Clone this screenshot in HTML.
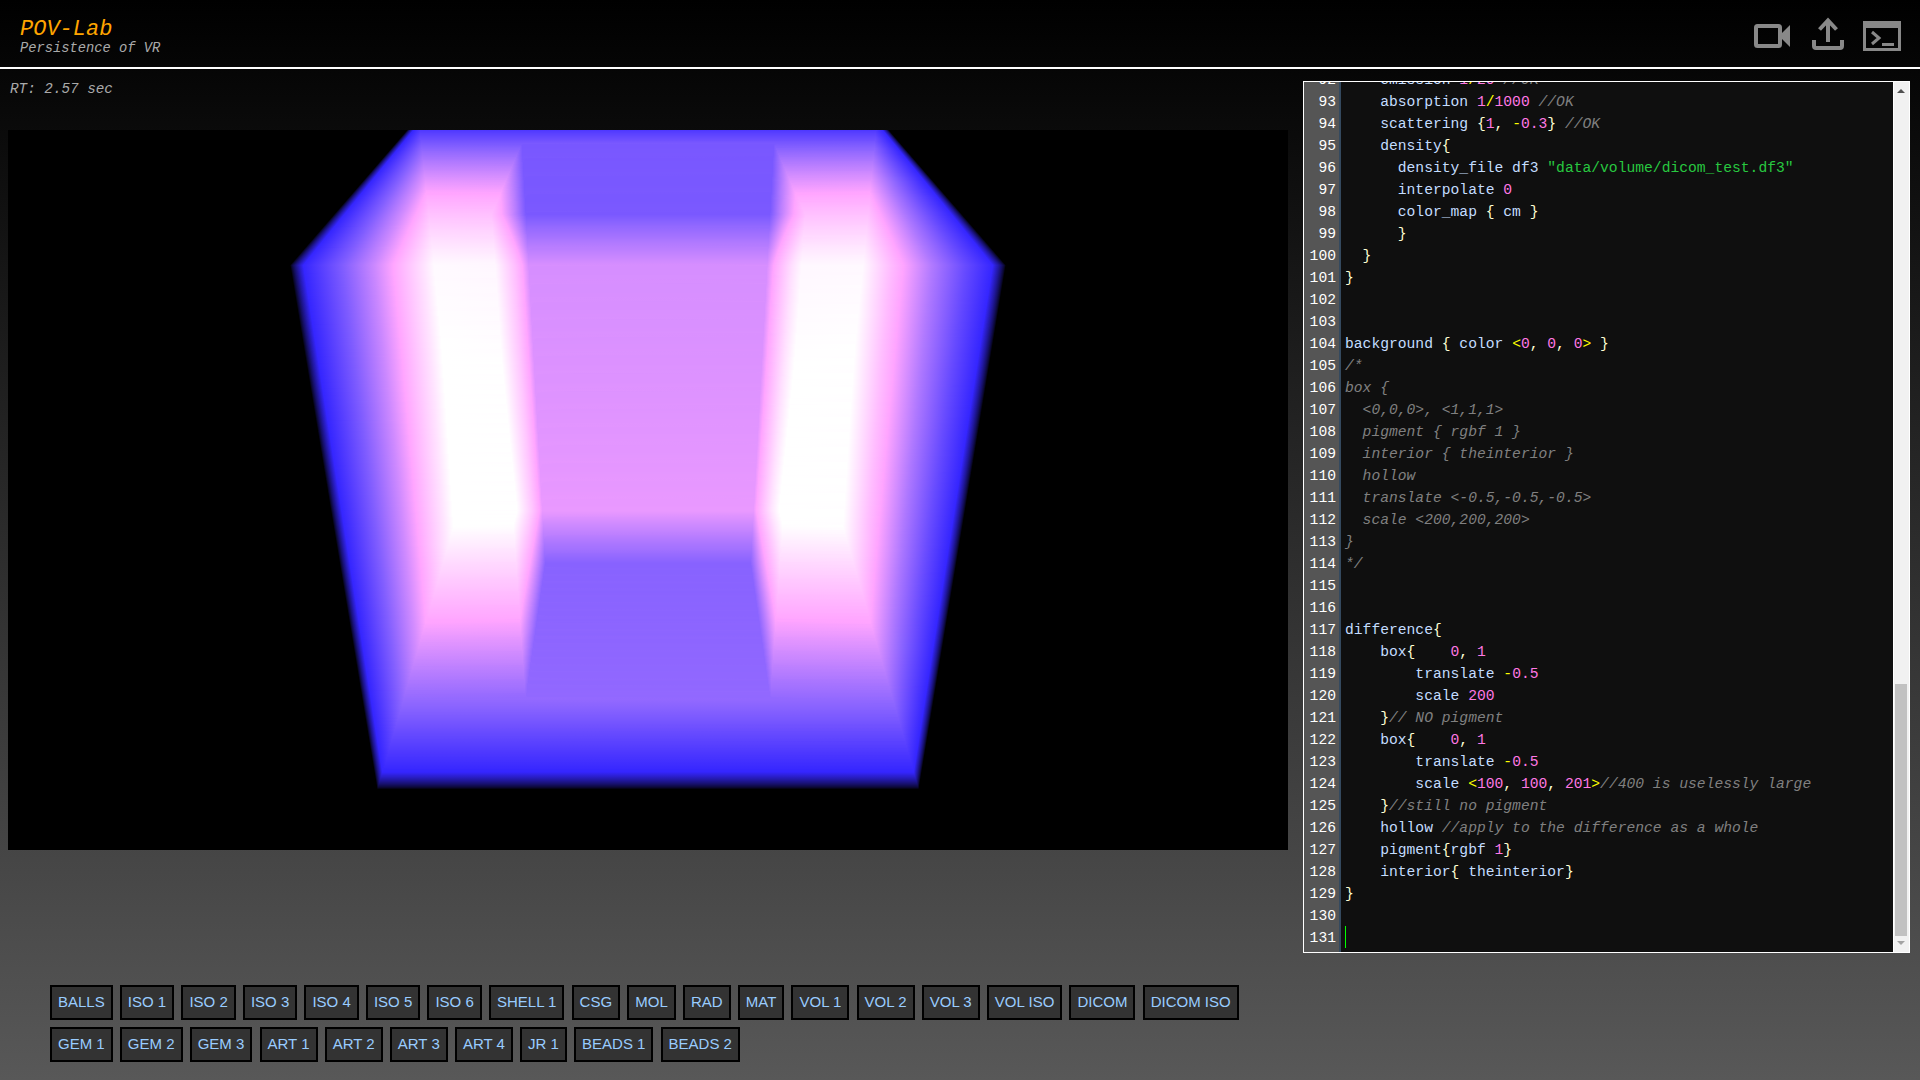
<!DOCTYPE html>
<html><head><meta charset="utf-8"><title>POV-Lab</title>
<style>
*{box-sizing:border-box}
html,body{margin:0;padding:0}
body{width:1920px;height:1080px;overflow:hidden;position:relative;background:linear-gradient(#000,#585858);font-family:"Liberation Mono",monospace;color:#aaa}
#hdr{position:absolute;left:0;top:0;width:1920px;height:69px;border-bottom:2px solid #fff}
#t1{position:absolute;left:20px;top:17px;font:italic 22px/26px "Liberation Mono",monospace;color:#ffa500;white-space:pre}
#t2{position:absolute;left:20px;top:40px;font:italic 13.75px/18px "Liberation Mono",monospace;color:#aaa;white-space:pre}
#rt{position:absolute;left:10px;top:79.5px;font:italic 14.3px/18px "Liberation Mono",monospace;color:#aaa;white-space:pre}
.ic{position:absolute;top:0;left:0}
#img{position:absolute;left:8px;top:130px;width:1280px;height:720px;background:#000;overflow:hidden}
#img i{display:block;height:1px;width:1280px}
#ed{position:absolute;left:1303px;top:81px;width:607px;height:872px;border:1px solid #fff;background:#0f0f0f;overflow:hidden}
#gut{position:absolute;left:0;top:0;width:37px;height:870px;background:#555;border-right:2px solid #34495e}
#lines{position:absolute;left:0;top:-13px;width:588px;font:14.66px/22px "Liberation Mono",monospace;color:#c4ddff;white-space:normal}
#lines div{height:22px;position:relative;padding-left:41px;white-space:pre}
#lines b{position:absolute;left:0;top:0;width:32px;text-align:right;font-weight:normal;color:#fff}
.c{color:#808080;font-style:italic}.n{color:#ff78e4}.o{color:#ff0}.p{color:#ffffd4}.s{color:#28c840}
#cur{position:absolute;left:41px;top:844px;width:1px;height:22px;background:#0f0}
#sb{position:absolute;left:589px;top:0;width:16px;height:870px;background:#f1f1f1;border-left:1px solid #fff}
#th{position:absolute;left:1px;top:602px;width:12px;height:252px;background:#c1c1c1}
#btns{position:absolute;left:50px;top:985px;width:1400px;font:15px/30px "Liberation Sans",sans-serif;color:#9cf}
#btns span{display:inline-block;height:35px;border:2px solid #000;background:#333;padding:0 6px;margin:0 7.17px 7px 0;white-space:pre;vertical-align:top}
</style></head><body>
<div id="hdr"></div>
<div id="t1">POV-Lab</div>
<div id="t2">Persistence of VR</div>
<div id="rt">RT: 2.57 sec</div>
<svg class="ic" width="1920" height="69" viewBox="0 0 1920 69" fill="none" stroke="#888">
<rect x="1756" y="26" width="24" height="20" rx="1.5" stroke-width="4"/>
<path d="M1779 36 L1790 25 V47 Z" fill="#888" stroke="none"/>
<path d="M1828 42 V20 M1819.5 29.5 L1828 20.5 L1836.5 29.5" stroke-width="4"/>
<path d="M1814 40 V46 Q1814 48 1816 48 H1840 Q1842 48 1842 46 V40" stroke-width="4"/>
<rect x="1864.5" y="22.5" width="35" height="27" stroke-width="3"/>
<rect x="1863" y="21" width="38" height="7" fill="#888" stroke="none"/>
<path d="M1872 32 L1879 38 L1872 44" stroke-width="3"/>
<path d="M1882 44.5 H1894" stroke-width="3"/>
</svg>
<div id="img">
<i style="background:linear-gradient(90deg,#000 398.5px,#080525 399.5px,#120d59 400.5px,#1b1483 401.5px,#2a1ecc 403.5px,#3123ed 404.5px,#3727ff 405.5px,#4f39ff 412.5px,#4e38ff 868.5px,#3727ff 874.5px,#3123ed 875.5px,#2319a9 877.5px,#1b1483 878.5px,#120d59 879.5px,#080525 880.5px,#000 881.5px)"></i>
<i style="background:linear-gradient(90deg,#000 397.5px,#06041e 398.5px,#110c52 399.5px,#1a137d 400.5px,#291ec7 402.5px,#3023e8 403.5px,#3627ff 404.5px,#533cff 412.5px,#533cff 867.5px,#3627ff 875.5px,#3023e8 876.5px,#2218a3 878.5px,#1a137d 879.5px,#110c52 880.5px,#06041e 881.5px,#000 882.5px)"></i>
<i style="background:linear-gradient(90deg,#000 396.5px,#050317 397.5px,#100b4b 398.5px,#191277 399.5px,#281dc1 401.5px,#2f22e2 402.5px,#3526ff 403.5px,#563eff 412.5px,#563eff 867.5px,#3526ff 876.5px,#2f22e2 877.5px,#21179e 879.5px,#191277 880.5px,#100b4b 881.5px,#050317 882.5px,#000 883.5px)"></i>
<i style="background:linear-gradient(90deg,#000 395.5px,#03020f 396.5px,#0e0a45 397.5px,#181171 398.5px,#271cbc 400.5px,#3426fd 402.5px,#4733ff 407.5px,#5a41ff 412.5px,#5a41ff 867.5px,#3828ff 876.5px,#3426fd 877.5px,#201798 880.5px,#181171 881.5px,#0e0a45 882.5px,#03020f 883.5px,#000 884.5px)"></i>
<i style="background:linear-gradient(90deg,#000 394.5px,#02020a 395.5px,#0d093e 396.5px,#16106b 397.5px,#261bb6 399.5px,#3325f7 401.5px,#3828ff 402.5px,#5d43ff 412.5px,#5d43ff 867.5px,#3828ff 877.5px,#3325f7 878.5px,#261bb6 880.5px,#16106b 882.5px,#0d093e 883.5px,#02020a 884.5px,#000 885.5px)"></i>
<i style="background:linear-gradient(90deg,#000 393.5px,#010106 394.5px,#150f65 396.5px,#251ab0 398.5px,#3224f2 400.5px,#3727ff 401.5px,#6045ff 412.5px,#6045ff 867.5px,#3727ff 878.5px,#3224f2 879.5px,#251ab0 881.5px,#150f65 883.5px,#010106 885.5px,#000 886.5px)"></i>
<i style="background:linear-gradient(90deg,#000 392.5px,#000002 393.5px,#140e5f 395.5px,#2419ab 397.5px,#3123ec 399.5px,#3627ff 400.5px,#6348ff 412.5px,#6348ff 867.5px,#3627ff 879.5px,#3123ec 880.5px,#2419ab 882.5px,#140e5f 884.5px,#000002 886.5px,#000 887.5px)"></i>
<i style="background:linear-gradient(90deg,#000 392.5px,#080627 393.5px,#120d59 394.5px,#1b1381 395.5px,#291ec7 397.5px,#3022e7 398.5px,#3627ff 399.5px,#664aff 412.5px,#664aff 867.5px,#3627ff 880.5px,#3022e7 881.5px,#2219a5 883.5px,#1b1381 884.5px,#120d59 885.5px,#080627 886.5px,#000 887.5px)"></i>
<i style="background:linear-gradient(90deg,#000 391.5px,#070520 392.5px,#110c52 393.5px,#1a127b 394.5px,#281dc2 396.5px,#3526ff 398.5px,#694cff 412.5px,#694cff 867.5px,#3526ff 881.5px,#281dc2 883.5px,#1a127b 885.5px,#110c52 886.5px,#070520 887.5px,#000 888.5px)"></i>
<i style="background:linear-gradient(90deg,#000 390.5px,#05041a 391.5px,#100b4c 392.5px,#181276 393.5px,#271cbc 395.5px,#3425fb 397.5px,#3828ff 398.5px,#6c4eff 412.5px,#6c4eff 867.5px,#3828ff 881.5px,#3425fb 882.5px,#20179a 885.5px,#181276 886.5px,#100b4c 887.5px,#05041a 888.5px,#000 889.5px)"></i>
<i style="background:linear-gradient(90deg,#000 389.5px,#040312 390.5px,#0e0a45 391.5px,#171170 392.5px,#261bb7 394.5px,#3325f5 396.5px,#3728ff 397.5px,#7152ff 413.5px,#6f50ff 867.5px,#3728ff 882.5px,#3325f5 883.5px,#1f1695 886.5px,#171170 887.5px,#0e0a45 888.5px,#040312 889.5px,#000 890.5px)"></i>
<i style="background:linear-gradient(90deg,#000 388.5px,#02020c 389.5px,#0d093f 390.5px,#16106a 391.5px,#251ab2 393.5px,#3224f0 395.5px,#3727ff 396.5px,#7454ff 413.5px,#7454ff 866.5px,#3727ff 883.5px,#3224f0 884.5px,#1e1590 887.5px,#16106a 888.5px,#0d093f 889.5px,#02020c 890.5px,#000 891.5px)"></i>
<i style="background:linear-gradient(90deg,#000 387.5px,#020108 388.5px,#150f64 390.5px,#241aac 392.5px,#3123eb 394.5px,#3627ff 395.5px,#7756ff 413.5px,#7756ff 866.5px,#3627ff 884.5px,#3123eb 885.5px,#241aac 887.5px,#150f64 889.5px,#020108 891.5px,#000 892.5px)"></i>
<i style="background:linear-gradient(90deg,#000 386.5px,#010104 387.5px,#140e5e 389.5px,#2319a7 391.5px,#3022e6 393.5px,#3626ff 394.5px,#7a59ff 413.5px,#7958ff 803.5px,#7a59ff 866.5px,#3626ff 885.5px,#3022e6 886.5px,#2319a7 888.5px,#140e5e 890.5px,#010104 892.5px,#000 893.5px)"></i>
<i style="background:linear-gradient(90deg,#000 386.5px,#090629 387.5px,#120d58 388.5px,#2218a2 390.5px,#3526fe 393.5px,#7d5bff 413.5px,#7b5aff 513.5px,#7857ff 515.5px,#7857ff 765.5px,#7c5aff 768.5px,#7d5bff 866.5px,#3526fe 886.5px,#2218a2 889.5px,#120d58 891.5px,#090629 892.5px,#000 893.5px)"></i>
<i style="background:linear-gradient(90deg,#000 385.5px,#070522 386.5px,#110c52 387.5px,#19127a 388.5px,#271cbd 390.5px,#3425f9 392.5px,#3828ff 393.5px,#805dff 413.5px,#7f5cff 512.5px,#7857ff 514.5px,#7857ff 765.5px,#7f5cff 767.5px,#805dff 866.5px,#3828ff 886.5px,#3425f9 887.5px,#21179d 890.5px,#19127a 891.5px,#110c52 892.5px,#070522 893.5px,#000 894.5px)"></i>
<i style="background:linear-gradient(90deg,#000 384.5px,#06041c 385.5px,#100b4c 386.5px,#181174 387.5px,#261bb8 389.5px,#3324f4 391.5px,#3727ff 392.5px,#835fff 413.5px,#825eff 512.5px,#7857ff 514.5px,#7857ff 765.5px,#825eff 767.5px,#835fff 866.5px,#3727ff 887.5px,#3324f4 888.5px,#1f1797 891.5px,#181174 892.5px,#100b4c 893.5px,#06041c 894.5px,#000 895.5px)"></i>
<i style="background:linear-gradient(90deg,#000 383.5px,#040315 384.5px,#0f0a46 385.5px,#17106f 386.5px,#251bb3 388.5px,#3224ef 390.5px,#3627ff 391.5px,#8661ff 413.5px,#8561ff 511.5px,#835fff 512.5px,#7857ff 514.5px,#7857ff 765.5px,#835fff 767.5px,#8661ff 821.5px,#8661ff 866.5px,#3627ff 888.5px,#3224ef 889.5px,#1e1692 892.5px,#17106f 893.5px,#0f0a46 894.5px,#040315 895.5px,#000 896.5px)"></i>
<i style="background:linear-gradient(90deg,#000 382.5px,#03020e 383.5px,#0d0940 384.5px,#161069 385.5px,#241aae 387.5px,#3123ea 389.5px,#3627ff 390.5px,#8963ff 413.5px,#8863ff 511.5px,#7957ff 514.5px,#7957ff 765.5px,#8863ff 768.5px,#8963ff 866.5px,#3627ff 889.5px,#3123ea 890.5px,#1d158d 893.5px,#161069 894.5px,#0d0940 895.5px,#03020e 896.5px,#000 897.5px)"></i>
<i style="background:linear-gradient(90deg,#000 381.5px,#020109 382.5px,#0c0939 383.5px,#150f63 384.5px,#2319a9 386.5px,#3022e5 388.5px,#3526ff 389.5px,#8862ff 412.5px,#8d65ff 414.5px,#8a64ff 511.5px,#7958ff 514.5px,#7958ff 765.5px,#8a64ff 768.5px,#8b64ff 866.5px,#3929ff 889.5px,#3526ff 890.5px,#291ec8 892.5px,#1c1488 894.5px,#150f63 895.5px,#0c0939 896.5px,#020109 897.5px,#000 898.5px)"></i>
<i style="background:linear-gradient(90deg,#000 380.5px,#010106 381.5px,#130e5e 383.5px,#2218a4 385.5px,#3426fc 388.5px,#3e2dff 391.5px,#8e66ff 413.5px,#8e66ff 510.5px,#7958ff 514.5px,#7958ff 765.5px,#8e66ff 769.5px,#8e66ff 866.5px,#3b2bff 889.5px,#3426fc 891.5px,#2218a4 894.5px,#130e5e 896.5px,#010106 898.5px,#000 899.5px)"></i>
<i style="background:linear-gradient(90deg,#000 379.5px,#000002 380.5px,#120d58 382.5px,#21189f 384.5px,#3325f7 387.5px,#3728ff 388.5px,#8963ff 411.5px,#9369ff 414.5px,#9167ff 510.5px,#7958ff 514.5px,#7958ff 765.5px,#9167ff 769.5px,#9369ff 865.5px,#3728ff 891.5px,#3325f7 892.5px,#21189f 895.5px,#120d58 897.5px,#000002 899.5px,#000 900.5px)"></i>
<i style="background:linear-gradient(90deg,#000 379.5px,#070524 380.5px,#110c52 381.5px,#191278 382.5px,#261cb9 384.5px,#3224f2 386.5px,#3727ff 387.5px,#8862ff 410.5px,#966aff 414.5px,#9469ff 509.5px,#8b64ff 511.5px,#7958ff 514.5px,#7958ff 765.5px,#9168ff 769.5px,#9469ff 772.5px,#966aff 865.5px,#664aff 878.5px,#3727ff 892.5px,#3224f2 893.5px,#20179a 896.5px,#191278 897.5px,#110c52 898.5px,#070524 899.5px,#000 900.5px)"></i>
<i style="background:linear-gradient(90deg,#000 378.5px,#06041e 379.5px,#100b4c 380.5px,#181173 381.5px,#251bb4 383.5px,#3123ee 385.5px,#3627ff 386.5px,#8a64ff 410.5px,#996cff 414.5px,#976bff 509.5px,#7a58ff 514.5px,#7a58ff 765.5px,#976bff 770.5px,#996cff 865.5px,#6549ff 879.5px,#3627ff 893.5px,#3123ee 894.5px,#1f1695 897.5px,#181173 898.5px,#100b4c 899.5px,#06041e 900.5px,#000 901.5px)"></i>
<i style="background:linear-gradient(90deg,#000 377.5px,#050418 378.5px,#0f0b47 379.5px,#17106d 380.5px,#241aaf 382.5px,#3023e9 384.5px,#3626ff 385.5px,#8963ff 409.5px,#9b6dff 414.5px,#9a6dff 508.5px,#9268ff 510.5px,#7a58ff 514.5px,#7a58ff 765.5px,#986cff 770.5px,#9b6dff 796.5px,#9b6dff 865.5px,#3f2dff 891.5px,#3626ff 894.5px,#3023e9 895.5px,#1e158f 898.5px,#17106d 899.5px,#0f0b47 900.5px,#050418 901.5px,#000 902.5px)"></i>
<i style="background:linear-gradient(90deg,#000 376.5px,#040311 377.5px,#0d0a41 378.5px,#160f68 379.5px,#2319aa 381.5px,#3526ff 384.5px,#8862ff 408.5px,#9e6fff 414.5px,#9d6eff 508.5px,#7a58ff 514.5px,#7a58ff 765.5px,#9d6eff 771.5px,#9e6fff 865.5px,#6a4dff 879.5px,#3526ff 895.5px,#2319aa 898.5px,#160f68 900.5px,#0d0a41 901.5px,#040311 902.5px,#000 903.5px)"></i>
<i style="background:linear-gradient(90deg,#000 375.5px,#02020b 376.5px,#0c093a 377.5px,#140f63 378.5px,#2219a5 380.5px,#3425fa 383.5px,#3828ff 384.5px,#8a64ff 408.5px,#a170ff 414.5px,#9e6fff 508.5px,#7a59ff 514.5px,#7957ff 764.5px,#7a59ff 765.5px,#9e6fff 771.5px,#a170ff 865.5px,#694cff 880.5px,#3828ff 895.5px,#3425fa 896.5px,#2219a5 899.5px,#140f63 901.5px,#0c093a 902.5px,#02020b 903.5px,#000 904.5px)"></i>
<i style="background:linear-gradient(90deg,#000 374.5px,#010107 375.5px,#130e5d 377.5px,#2118a0 379.5px,#3325f5 382.5px,#3727ff 383.5px,#8963ff 407.5px,#a472ff 414.5px,#a372ff 507.5px,#815eff 513.5px,#7b59ff 514.5px,#7957ff 764.5px,#7b59ff 765.5px,#9f6fff 771.5px,#a372ff 773.5px,#a472ff 865.5px,#6549ff 882.5px,#3727ff 896.5px,#3325f5 897.5px,#2118a0 900.5px,#130e5d 902.5px,#010107 904.5px,#000 905.5px)"></i>
<i style="background:linear-gradient(90deg,#000 373.5px,#010104 374.5px,#120d58 376.5px,#20179b 378.5px,#3224f1 381.5px,#3627ff 382.5px,#8862ff 406.5px,#a673ff 414.5px,#a573ff 507.5px,#7b59ff 514.5px,#7957ff 520.5px,#7957ff 764.5px,#815eff 766.5px,#a573ff 772.5px,#a673ff 865.5px,#6b4dff 881.5px,#3627ff 897.5px,#3224f1 898.5px,#20179b 901.5px,#120d58 903.5px,#010104 905.5px,#000 906.5px)"></i>
<i style="background:linear-gradient(90deg,#000 373.5px,#080627 374.5px,#110c52 375.5px,#1f1697 377.5px,#3123ec 380.5px,#3627ff 381.5px,#8662ff 405.5px,#a975ff 414.5px,#a875ff 506.5px,#9a6dff 509.5px,#7b59ff 514.5px,#7957ff 517.5px,#7957ff 764.5px,#825eff 766.5px,#a573ff 772.5px,#a875ff 775.5px,#a975ff 865.5px,#6d4fff 881.5px,#3627ff 898.5px,#3123ec 899.5px,#1f1697 902.5px,#110c52 904.5px,#080627 905.5px,#000 906.5px)"></i>
<i style="background:linear-gradient(90deg,#000 372.5px,#070520 373.5px,#100b4c 374.5px,#181171 375.5px,#251ab0 377.5px,#3022e7 379.5px,#3526ff 380.5px,#8561ff 404.5px,#ad77ff 415.5px,#ab76ff 506.5px,#7c5aff 514.5px,#7957ff 516.5px,#7957ff 764.5px,#825eff 766.5px,#ab76ff 773.5px,#ab76ff 865.5px,#694cff 883.5px,#3526ff 899.5px,#2a1ecc 901.5px,#1e1692 903.5px,#181171 904.5px,#100b4c 905.5px,#070520 906.5px,#000 907.5px)"></i>
<i style="background:linear-gradient(90deg,#000 371.5px,#05041a 372.5px,#0f0b47 373.5px,#16106c 374.5px,#241aab 376.5px,#3526fd 379.5px,#8862ff 404.5px,#b079ff 415.5px,#ae78ff 505.5px,#a673ff 507.5px,#7c5aff 514.5px,#7958ff 516.5px,#7958ff 764.5px,#8963ff 767.5px,#ac77ff 773.5px,#ae78ff 785.5px,#b079ff 864.5px,#7655ff 880.5px,#3526fd 900.5px,#241aab 903.5px,#16106c 905.5px,#0f0b47 906.5px,#05041a 907.5px,#000 908.5px)"></i>
<i style="background:linear-gradient(90deg,#000 370.5px,#040314 371.5px,#0e0a41 372.5px,#150f67 373.5px,#2319a6 375.5px,#3425f8 378.5px,#3728ff 379.5px,#8a64ff 404.5px,#b37aff 415.5px,#b179ff 505.5px,#7958ff 515.5px,#7958ff 764.5px,#b179ff 774.5px,#b37aff 864.5px,#7555ff 881.5px,#3728ff 900.5px,#3425f8 901.5px,#2319a6 904.5px,#150f67 906.5px,#0e0a41 907.5px,#040314 908.5px,#000 909.5px)"></i>
<i style="background:linear-gradient(90deg,#000 369.5px,#03020d 370.5px,#0c093b 371.5px,#140f62 372.5px,#2218a2 374.5px,#3324f4 377.5px,#3727ff 378.5px,#8963ff 403.5px,#b57cff 415.5px,#b27aff 505.5px,#7958ff 515.5px,#7958ff 764.5px,#b27aff 774.5px,#b57cff 864.5px,#7454ff 882.5px,#3727ff 901.5px,#3324f4 902.5px,#2218a2 905.5px,#140f62 907.5px,#0c093b 908.5px,#03020d 909.5px,#000 910.5px)"></i>
<i style="background:linear-gradient(90deg,#000 368.5px,#020109 369.5px,#0b0835 370.5px,#130e5d 371.5px,#21179d 373.5px,#3224ef 376.5px,#3627ff 377.5px,#8862ff 402.5px,#b87dff 415.5px,#b67cff 504.5px,#845fff 513.5px,#7958ff 515.5px,#7958ff 764.5px,#b67cff 775.5px,#b87dff 864.5px,#7353ff 883.5px,#3627ff 902.5px,#3224ef 903.5px,#21179d 906.5px,#130e5d 908.5px,#0b0835 909.5px,#020109 910.5px,#000 911.5px)"></i>
<i style="background:linear-gradient(90deg,#000 367.5px,#010105 368.5px,#120d57 370.5px,#201798 372.5px,#3123eb 375.5px,#3626ff 376.5px,#8662ff 401.5px,#ba7fff 415.5px,#b87dff 504.5px,#7958ff 515.5px,#7958ff 764.5px,#b87dff 775.5px,#ba7fff 864.5px,#7252ff 884.5px,#3626ff 903.5px,#3123eb 904.5px,#201798 907.5px,#120d57 909.5px,#010105 911.5px,#000 912.5px)"></i>
<i style="background:linear-gradient(90deg,#000 366.5px,#000002 367.5px,#110c52 369.5px,#1f1694 371.5px,#3022e6 374.5px,#3526ff 375.5px,#8561ff 400.5px,#bd80ff 415.5px,#bc7fff 503.5px,#a874ff 507.5px,#7958ff 515.5px,#7958ff 764.5px,#b97eff 775.5px,#bc7fff 777.5px,#bd80ff 864.5px,#7152ff 885.5px,#3526ff 904.5px,#251ab1 907.5px,#181175 909.5px,#110c52 910.5px,#000002 912.5px,#000 913.5px)"></i>
<i style="background:linear-gradient(90deg,#000 366.5px,#070522 367.5px,#100b4d 368.5px,#171170 369.5px,#291ec7 372.5px,#3425fb 374.5px,#3728ff 375.5px,#8862ff 400.5px,#bf82ff 415.5px,#be81ff 503.5px,#7e5cff 514.5px,#7958ff 515.5px,#7958ff 764.5px,#b97eff 775.5px,#be81ff 776.5px,#bf82ff 864.5px,#7353ff 885.5px,#3728ff 904.5px,#3425fb 905.5px,#241aac 908.5px,#171170 910.5px,#100b4d 911.5px,#070522 912.5px,#000 913.5px)"></i>
<i style="background:linear-gradient(90deg,#000 365.5px,#06041c 366.5px,#0f0b47 367.5px,#1d158a 369.5px,#2e21dd 372.5px,#3325f6 373.5px,#3727ff 374.5px,#8662ff 399.5px,#c283ff 415.5px,#c182ff 502.5px,#b97eff 504.5px,#7958ff 515.5px,#7958ff 764.5px,#b97eff 775.5px,#c182ff 777.5px,#c283ff 864.5px,#7253ff 886.5px,#3727ff 905.5px,#3325f6 906.5px,#2319a8 909.5px,#16106b 911.5px,#0f0b47 912.5px,#06041c 913.5px,#000 914.5px)"></i>
<i style="background:linear-gradient(90deg,#000 364.5px,#050316 365.5px,#0e0a42 366.5px,#1c1486 368.5px,#2d20d9 371.5px,#3224f2 372.5px,#3627ff 373.5px,#8561ff 398.5px,#c484ff 415.5px,#c384ff 502.5px,#8561ff 513.5px,#7a58ff 515.5px,#7a58ff 764.5px,#ba7eff 775.5px,#c384ff 777.5px,#c484ff 864.5px,#7152ff 887.5px,#3627ff 906.5px,#3224f2 907.5px,#2218a3 910.5px,#150f66 912.5px,#0e0a42 913.5px,#050316 914.5px,#000 915.5px)"></i>
<i style="background:linear-gradient(90deg,#000 363.5px,#030210 364.5px,#0d093c 365.5px,#140e61 366.5px,#21189e 368.5px,#3123ee 371.5px,#3627ff 372.5px,#8460ff 397.5px,#c886ff 416.5px,#c584ff 502.5px,#7f5cff 514.5px,#7a58ff 515.5px,#7a58ff 764.5px,#b57bff 774.5px,#c584ff 777.5px,#c685ff 864.5px,#7354ff 887.5px,#3627ff 907.5px,#3123ee 908.5px,#21189e 911.5px,#140e61 913.5px,#0d093c 914.5px,#030210 915.5px,#000 916.5px)"></i>
<i style="background:linear-gradient(90deg,#000 362.5px,#02010a 363.5px,#0b0837 364.5px,#130e5c 365.5px,#20179a 367.5px,#3023e9 370.5px,#3526ff 371.5px,#8662ff 397.5px,#cb88ff 416.5px,#c987ff 501.5px,#9268ff 511.5px,#7a58ff 515.5px,#7a58ff 764.5px,#b57cff 774.5px,#c987ff 778.5px,#cb88ff 863.5px,#7655ff 887.5px,#3526ff 908.5px,#2b1fd0 910.5px,#1a137c 913.5px,#130e5c 914.5px,#0b0837 915.5px,#02010a 916.5px,#000 917.5px)"></i>
<i style="background:linear-gradient(90deg,#000 361.5px,#010107 362.5px,#120d57 364.5px,#1f1696 366.5px,#3022e5 369.5px,#3526fd 370.5px,#8561ff 396.5px,#ce89ff 416.5px,#cb88ff 501.5px,#805dff 514.5px,#7a59ff 515.5px,#7a59ff 764.5px,#b57cff 774.5px,#cb88ff 778.5px,#ce89ff 863.5px,#7152ff 889.5px,#3526fd 909.5px,#251ab1 912.5px,#191278 914.5px,#120d57 915.5px,#010107 917.5px,#000 918.5px)"></i>
<i style="background:linear-gradient(90deg,#000 360.5px,#010103 361.5px,#110c52 363.5px,#1e1691 365.5px,#2f21e0 368.5px,#3425f9 369.5px,#3728ff 370.5px,#8862ff 396.5px,#d08bff 416.5px,#ce8aff 500.5px,#b079ff 506.5px,#815dff 514.5px,#7a59ff 515.5px,#7a59ff 764.5px,#ab76ff 772.5px,#cb88ff 778.5px,#ce8aff 780.5px,#d08bff 863.5px,#7454ff 889.5px,#3728ff 909.5px,#3425f9 910.5px,#241aad 913.5px,#181173 915.5px,#110c52 916.5px,#010103 918.5px,#000 919.5px)"></i>
<i style="background:linear-gradient(90deg,#000 360.5px,#070524 361.5px,#100b4d 362.5px,#1d158c 364.5px,#2e21dc 367.5px,#3324f4 368.5px,#3727ff 369.5px,#8662ff 395.5px,#d38cff 416.5px,#d08bff 500.5px,#8d66ff 512.5px,#7b59ff 515.5px,#7958ff 763.5px,#7b59ff 764.5px,#ab76ff 772.5px,#d08bff 779.5px,#d38cff 863.5px,#7958ff 888.5px,#3727ff 910.5px,#3324f4 911.5px,#2319a9 914.5px,#17106e 916.5px,#100b4d 917.5px,#070524 918.5px,#000 919.5px)"></i>
<i style="background:linear-gradient(90deg,#000 359.5px,#06041e 360.5px,#0f0b48 361.5px,#1c1488 363.5px,#2d20d8 366.5px,#3224f0 367.5px,#3627ff 368.5px,#8561ff 394.5px,#d58eff 416.5px,#d38dff 499.5px,#c786ff 502.5px,#815eff 514.5px,#7b59ff 515.5px,#7958ff 763.5px,#7b59ff 764.5px,#ab76ff 772.5px,#d18bff 779.5px,#d48dff 786.5px,#d58eff 863.5px,#7b59ff 888.5px,#3627ff 911.5px,#3224f0 912.5px,#2218a4 915.5px,#16106a 917.5px,#0f0b48 918.5px,#06041e 919.5px,#000 920.5px)"></i>
<i style="background:linear-gradient(90deg,#000 358.5px,#050419 359.5px,#0e0a42 360.5px,#1b1484 362.5px,#2c20d4 365.5px,#3123ec 366.5px,#3626ff 367.5px,#8460ff 393.5px,#d78fff 416.5px,#d68eff 499.5px,#9469ff 511.5px,#7b59ff 515.5px,#7958ff 521.5px,#7958ff 763.5px,#7b59ff 764.5px,#b17aff 773.5px,#d68eff 780.5px,#d78fff 863.5px,#815dff 887.5px,#3626ff 912.5px,#3123ec 913.5px,#2118a0 916.5px,#150f65 918.5px,#0e0a42 919.5px,#050419 920.5px,#000 921.5px)"></i>
<i style="background:linear-gradient(90deg,#000 357.5px,#040313 358.5px,#0d093d 359.5px,#140e60 360.5px,#20179b 362.5px,#3023e8 365.5px,#3526ff 366.5px,#835fff 392.5px,#d68eff 415.5px,#db91ff 417.5px,#d78fff 499.5px,#8f66ff 512.5px,#7c5aff 515.5px,#7958ff 518.5px,#7958ff 763.5px,#825eff 765.5px,#cd89ff 778.5px,#d78fff 780.5px,#da90ff 863.5px,#8662ff 886.5px,#3828ff 912.5px,#3526ff 913.5px,#261bb6 916.5px,#1a137f 918.5px,#140e60 919.5px,#0d093d 920.5px,#040313 921.5px,#000 922.5px)"></i>
<i style="background:linear-gradient(90deg,#000 356.5px,#02020c 357.5px,#0c0838 358.5px,#130e5c 359.5px,#1f1797 361.5px,#2f22e3 364.5px,#3425fb 365.5px,#3728ff 366.5px,#8561ff 392.5px,#d88fff 415.5px,#dd92ff 417.5px,#db91ff 498.5px,#a170ff 509.5px,#7c5aff 515.5px,#7958ff 517.5px,#7958ff 763.5px,#825fff 765.5px,#cd89ff 778.5px,#db91ff 781.5px,#dc91ff 863.5px,#8963ff 886.5px,#3a2aff 912.5px,#3728ff 913.5px,#3425fb 914.5px,#251ab2 917.5px,#19127a 919.5px,#130e5c 920.5px,#0c0838 921.5px,#02020c 922.5px,#000 923.5px)"></i>
<i style="background:linear-gradient(90deg,#000 355.5px,#020108 356.5px,#0a0732 357.5px,#120d57 358.5px,#1e1693 360.5px,#2e21df 363.5px,#3325f7 364.5px,#3727ff 365.5px,#8762ff 392.5px,#da90ff 415.5px,#e093ff 417.5px,#dc92ff 498.5px,#956aff 511.5px,#7c5aff 515.5px,#7958ff 517.5px,#7958ff 763.5px,#8963ff 766.5px,#d28cff 779.5px,#dc92ff 781.5px,#de93ff 863.5px,#8b64ff 886.5px,#3c2bff 912.5px,#3727ff 914.5px,#3325f7 915.5px,#241aad 918.5px,#191276 920.5px,#120d57 921.5px,#0a0732 922.5px,#020108 923.5px,#000 924.5px)"></i>
<i style="background:linear-gradient(90deg,#000 354.5px,#010105 355.5px,#110c52 357.5px,#1e158e 359.5px,#2e21db 362.5px,#3224f3 363.5px,#3627ff 364.5px,#8661ff 391.5px,#d88fff 414.5px,#e295ff 417.5px,#e094ff 497.5px,#b37aff 506.5px,#7958ff 516.5px,#7958ff 763.5px,#9c6eff 769.5px,#dd92ff 781.5px,#e094ff 783.5px,#e094ff 863.5px,#8d65ff 886.5px,#3c2bff 913.5px,#3627ff 915.5px,#3224f3 916.5px,#2319a9 919.5px,#181172 921.5px,#110c52 922.5px,#010105 924.5px,#000 925.5px)"></i>
<i style="background:linear-gradient(90deg,#000 353.5px,#000002 354.5px,#100b4d 356.5px,#1d158a 358.5px,#2d20d7 361.5px,#3224ee 362.5px,#3627ff 363.5px,#8561ff 390.5px,#d78eff 413.5px,#e596ff 417.5px,#e295ff 497.5px,#9c6eff 510.5px,#7958ff 516.5px,#7958ff 763.5px,#c987ff 777.5px,#e295ff 782.5px,#e596ff 862.5px,#8561ff 889.5px,#3627ff 916.5px,#3224ee 917.5px,#2219a5 920.5px,#17106d 922.5px,#100b4d 923.5px,#000002 925.5px,#000 926.5px)"></i>
<i style="background:linear-gradient(90deg,#000 353.5px,#070520 354.5px,#0f0b48 355.5px,#1c1486 357.5px,#2c1fd3 360.5px,#3526ff 362.5px,#8460ff 389.5px,#d58dff 412.5px,#e798ff 417.5px,#e596ff 496.5px,#d48dff 500.5px,#8a64ff 513.5px,#7958ff 516.5px,#7958ff 763.5px,#c484ff 776.5px,#e395ff 782.5px,#e597ff 788.5px,#e798ff 862.5px,#8b64ff 888.5px,#3b2aff 915.5px,#3526ff 917.5px,#2c1fd3 919.5px,#1c1486 922.5px,#0f0b48 924.5px,#070520 925.5px,#000 926.5px)"></i>
<i style="background:linear-gradient(90deg,#000 352.5px,#06041b 353.5px,#0e0a43 354.5px,#1b1381 356.5px,#2b1fcf 359.5px,#3526fd 361.5px,#8661ff 389.5px,#d78fff 412.5px,#ea99ff 417.5px,#e798ff 496.5px,#a875ff 508.5px,#7958ff 516.5px,#7958ff 763.5px,#c484ff 776.5px,#e798ff 783.5px,#ea99ff 862.5px,#9067ff 887.5px,#3f2eff 914.5px,#3526fd 918.5px,#21179d 922.5px,#150f64 924.5px,#0e0a43 925.5px,#06041b 926.5px,#000 927.5px)"></i>
<i style="background:linear-gradient(90deg,#000 351.5px,#040315 352.5px,#0d093e 353.5px,#1a137d 355.5px,#2a1ecb 358.5px,#3425f9 360.5px,#3727ff 361.5px,#8561ff 388.5px,#d58eff 411.5px,#ec9aff 417.5px,#e898ff 496.5px,#9d6eff 510.5px,#7958ff 516.5px,#7958ff 763.5px,#bf81ff 775.5px,#e898ff 783.5px,#ec9aff 862.5px,#9268ff 887.5px,#422fff 914.5px,#3727ff 918.5px,#3425f9 919.5px,#201798 923.5px,#140e5f 925.5px,#0d093e 926.5px,#040315 927.5px,#000 928.5px)"></i>
<i style="background:linear-gradient(90deg,#000 350.5px,#03020f 351.5px,#0c0839 352.5px,#130e5b 353.5px,#1f1694 355.5px,#2e21de 358.5px,#3324f5 359.5px,#3627ff 360.5px,#8460ff 387.5px,#d78fff 411.5px,#ee9cff 417.5px,#ec9aff 495.5px,#af78ff 507.5px,#7958ff 516.5px,#7958ff 763.5px,#c082ff 775.5px,#ec9aff 784.5px,#ee9cff 862.5px,#976bff 886.5px,#4633ff 913.5px,#3627ff 919.5px,#3324f5 920.5px,#241aae 923.5px,#191279 925.5px,#130e5b 926.5px,#0c0839 927.5px,#03020f 928.5px,#000 929.5px)"></i>
<i style="background:linear-gradient(90deg,#000 349.5px,#020109 350.5px,#0b0833 351.5px,#120d56 352.5px,#1e1590 354.5px,#2d20da 357.5px,#3224f1 358.5px,#3627ff 359.5px,#835fff 386.5px,#d58eff 410.5px,#f09dff 417.5px,#ee9bff 495.5px,#a472ff 509.5px,#7a58ff 516.5px,#7a58ff 763.5px,#ba7fff 774.5px,#ee9bff 784.5px,#f09dff 862.5px,#996cff 886.5px,#4934ff 913.5px,#3627ff 920.5px,#3224f1 921.5px,#2319aa 924.5px,#181174 926.5px,#120d56 927.5px,#0b0833 928.5px,#020109 929.5px,#000 930.5px)"></i>
<i style="background:linear-gradient(90deg,#000 348.5px,#010106 349.5px,#110c51 351.5px,#1d158c 353.5px,#2c20d6 356.5px,#3123ed 357.5px,#3526ff 358.5px,#8561ff 386.5px,#d78fff 410.5px,#f39eff 417.5px,#f19dff 494.5px,#c082ff 504.5px,#7f5cff 515.5px,#7a58ff 516.5px,#7a58ff 763.5px,#bb7fff 774.5px,#ee9cff 784.5px,#f19dff 786.5px,#f39eff 862.5px,#9f6fff 885.5px,#4d38ff 912.5px,#3526ff 921.5px,#3123ed 922.5px,#2219a6 925.5px,#171170 927.5px,#110c51 928.5px,#010106 930.5px,#000 931.5px)"></i>
<i style="background:linear-gradient(90deg,#000 347.5px,#010003 348.5px,#100b4d 350.5px,#1c1488 352.5px,#2c1fd2 355.5px,#3526ff 357.5px,#8460ff 385.5px,#d68eff 409.5px,#f59fff 417.5px,#f39eff 494.5px,#aa76ff 508.5px,#7a59ff 516.5px,#7a59ff 763.5px,#bb7fff 774.5px,#f39eff 785.5px,#f59fff 862.5px,#a170ff 885.5px,#4f39ff 912.5px,#3526ff 922.5px,#2218a2 926.5px,#16106c 928.5px,#100b4d 929.5px,#010003 931.5px,#000 932.5px)"></i>
<i style="background:linear-gradient(90deg,#000 347.5px,#070522 348.5px,#0f0b48 349.5px,#1b1484 351.5px,#2b1fce 354.5px,#3425fb 356.5px,#3728ff 357.5px,#8661ff 385.5px,#d88fff 409.5px,#f7a0ff 417.5px,#f6a0ff 493.5px,#db91ff 499.5px,#9369ff 512.5px,#7a59ff 516.5px,#7a59ff 763.5px,#b67cff 773.5px,#f49fff 785.5px,#f6a0ff 790.5px,#f7a0ff 862.5px,#a673ff 884.5px,#6549ff 905.5px,#3728ff 922.5px,#3425fb 923.5px,#21179e 927.5px,#150f67 929.5px,#0f0b48 930.5px,#070522 931.5px,#000 932.5px)"></i>
<i style="background:linear-gradient(90deg,#000 346.5px,#06041c 347.5px,#0e0a43 348.5px,#1a137f 350.5px,#2a1eca 353.5px,#3325f7 355.5px,#3727ff 356.5px,#8560ff 384.5px,#d68eff 408.5px,#fba3ff 418.5px,#f8a1ff 493.5px,#b67cff 506.5px,#815dff 515.5px,#7a59ff 516.5px,#7a59ff 763.5px,#b179ff 772.5px,#f49fff 785.5px,#f8a1ff 787.5px,#f9a2ff 862.5px,#a875ff 884.5px,#674bff 905.5px,#3727ff 923.5px,#3325f7 924.5px,#20179a 928.5px,#150f63 930.5px,#0e0a43 931.5px,#06041c 932.5px,#000 933.5px)"></i>
<i style="background:linear-gradient(90deg,#000 345.5px,#050317 346.5px,#0d093e 347.5px,#1a127b 349.5px,#291ec6 352.5px,#3224f3 354.5px,#3627ff 355.5px,#8460ff 383.5px,#d48dff 407.5px,#fda4ff 418.5px,#f9a2ff 493.5px,#b17aff 507.5px,#7b59ff 516.5px,#7b59ff 763.5px,#b17aff 772.5px,#f9a2ff 786.5px,#fda4ff 861.5px,#9d6eff 888.5px,#4d38ff 915.5px,#3627ff 924.5px,#3224f3 925.5px,#1f1696 929.5px,#140e5f 931.5px,#0d093e 932.5px,#050317 933.5px,#000 934.5px)"></i>
<i style="background:linear-gradient(90deg,#000 344.5px,#040312 345.5px,#0c0939 346.5px,#130d5a 347.5px,#1e1692 349.5px,#3224ef 353.5px,#3626ff 354.5px,#835fff 382.5px,#d38cff 406.5px,#ffa5ff 418.5px,#fda4ff 492.5px,#bd80ff 505.5px,#815eff 515.5px,#7b59ff 516.5px,#7958ff 762.5px,#7b59ff 763.5px,#ac77ff 771.5px,#f59fff 785.5px,#fda4ff 787.5px,#ffa5ff 861.5px,#9f6fff 888.5px,#4f39ff 915.5px,#3626ff 925.5px,#3224ef 926.5px,#1e1692 930.5px,#130d5a 932.5px,#0c0939 933.5px,#040312 934.5px,#000 935.5px)"></i>
<i style="background:linear-gradient(90deg,#000 343.5px,#02020b 344.5px,#0b0834 345.5px,#120d56 346.5px,#1d158d 348.5px,#3123eb 352.5px,#3526ff 353.5px,#825eff 381.5px,#d18bff 405.5px,#ffa5ff 417.5px,#fea4ff 492.5px,#b77dff 506.5px,#825eff 515.5px,#7b59ff 516.5px,#7958ff 762.5px,#7b59ff 763.5px,#b27aff 772.5px,#faa2ff 786.5px,#ffa5ff 788.5px,#ffa5ff 862.5px,#ae78ff 884.5px,#6a4dff 906.5px,#3526ff 926.5px,#281cbe 929.5px,#181173 932.5px,#120d56 933.5px,#0b0834 934.5px,#02020b 935.5px,#000 936.5px)"></i>
<i style="background:linear-gradient(90deg,#000 342.5px,#020107 343.5px,#0a072f 344.5px,#110c51 345.5px,#1d1489 347.5px,#2b1fd1 350.5px,#3426fc 352.5px,#3f2dff 356.5px,#8d65ff 384.5px,#de93ff 408.5px,#ffa6ff 417.5px,#ffa5ff 492.5px,#b87dff 506.5px,#825eff 515.5px,#7c5aff 516.5px,#7958ff 522.5px,#7958ff 762.5px,#7c5aff 763.5px,#b27aff 772.5px,#faa2ff 786.5px,#ffa5ff 787.5px,#ffa6ff 862.5px,#a070ff 889.5px,#4e38ff 917.5px,#3728ff 926.5px,#3426fc 927.5px,#2218a3 931.5px,#17106f 933.5px,#110c51 934.5px,#0a072f 935.5px,#020107 936.5px,#000 937.5px)"></i>
<i style="background:linear-gradient(90deg,#000 341.5px,#010104 342.5px,#100b4d 344.5px,#1c1486 346.5px,#2b1fcd 349.5px,#3425f9 351.5px,#3727ff 352.5px,#835fff 380.5px,#d58dff 405.5px,#ffa5ff 416.5px,#ffa9ff 419.5px,#ffa7ff 491.5px,#ffa5ff 492.5px,#b87dff 506.5px,#7c5aff 516.5px,#7958ff 519.5px,#7958ff 762.5px,#835fff 764.5px,#ce8aff 777.5px,#ffa5ff 787.5px,#ffa8ff 793.5px,#ffa9ff 861.5px,#ffa5ff 863.5px,#ab76ff 886.5px,#694cff 908.5px,#3727ff 927.5px,#3425f9 928.5px,#21189f 932.5px,#16106a 934.5px,#100b4d 935.5px,#010104 937.5px,#000 938.5px)"></i>
<i style="background:linear-gradient(90deg,#000 340.5px,#000002 341.5px,#0f0b48 343.5px,#1b1381 345.5px,#2a1ec9 348.5px,#3324f5 350.5px,#3627ff 351.5px,#8560ff 380.5px,#d78fff 405.5px,#ffa6ff 416.5px,#ffabff 419.5px,#ffa8ff 491.5px,#ffa5ff 492.5px,#b97eff 506.5px,#7c5aff 516.5px,#7958ff 518.5px,#7958ff 762.5px,#835fff 764.5px,#ce8aff 777.5px,#ffa5ff 787.5px,#ffa9ff 790.5px,#faf 861.5px,#fca4ff 864.5px,#aa76ff 887.5px,#6b4dff 908.5px,#3627ff 928.5px,#3324f5 929.5px,#20179b 933.5px,#150f66 935.5px,#0f0b48 936.5px,#000002 938.5px,#000 939.5px)"></i>
<i style="background:linear-gradient(90deg,#000 340.5px,#06041e 341.5px,#0e0a44 342.5px,#1a137d 344.5px,#291dc6 347.5px,#3224f1 349.5px,#3627ff 350.5px,#8460ff 379.5px,#d58eff 404.5px,#fea5ff 415.5px,#ffacff 419.5px,#faf 490.5px,#ffa5ff 492.5px,#be81ff 505.5px,#7d5bff 516.5px,#7958ff 518.5px,#7958ff 762.5px,#8a63ff 765.5px,#d48dff 778.5px,#ffa5ff 787.5px,#ffabff 790.5px,#ffabff 861.5px,#fea5ff 864.5px,#ac77ff 887.5px,#6d4fff 908.5px,#3627ff 929.5px,#3224f1 930.5px,#1f1697 934.5px,#140f62 936.5px,#0e0a44 937.5px,#06041e 938.5px,#000 939.5px)"></i>
<i style="background:linear-gradient(90deg,#000 339.5px,#050419 340.5px,#0d093f 341.5px,#191279 343.5px,#281dc2 346.5px,#3123ed 348.5px,#3526ff 349.5px,#835fff 378.5px,#d38dff 403.5px,#ffa6ff 415.5px,#ffadff 419.5px,#ffabff 490.5px,#ffa6ff 492.5px,#bf81ff 505.5px,#7958ff 517.5px,#7958ff 762.5px,#966bff 767.5px,#e396ff 781.5px,#ffa6ff 787.5px,#ffacff 790.5px,#ffadff 861.5px,#fca4ff 865.5px,#ab76ff 888.5px,#664aff 911.5px,#3526ff 930.5px,#2d20d8 932.5px,#1f1693 935.5px,#140e5e 937.5px,#0d093f 938.5px,#050419 939.5px,#000 940.5px)"></i>
<i style="background:linear-gradient(90deg,#000 338.5px,#040314 339.5px,#0c093a 340.5px,#181175 342.5px,#271cbe 345.5px,#3526fe 348.5px,#825eff 377.5px,#d28cff 402.5px,#fea5ff 414.5px,#ffafff 419.5px,#ffadff 489.5px,#ffa6ff 492.5px,#c584ff 504.5px,#7958ff 517.5px,#7958ff 762.5px,#ca87ff 776.5px,#ffa6ff 787.5px,#ffadff 791.5px,#ffaeff 861.5px,#fea5ff 865.5px,#ad77ff 888.5px,#6b4dff 910.5px,#3526fe 931.5px,#2319a7 935.5px,#130d5a 938.5px,#0c093a 939.5px,#040314 940.5px,#000 941.5px)"></i>
<i style="background:linear-gradient(90deg,#000 337.5px,#03020e 338.5px,#0b0835 339.5px,#181171 341.5px,#271cba 344.5px,#3425fa 347.5px,#3727ff 348.5px,#8460ff 377.5px,#d48dff 402.5px,#ffa6ff 414.5px,#ffb0ff 419.5px,#ffaeff 489.5px,#ffa6ff 492.5px,#d08bff 502.5px,#8460ff 515.5px,#7958ff 517.5px,#7958ff 762.5px,#ca88ff 776.5px,#fca3ff 786.5px,#ffabff 789.5px,#ffafff 794.5px,#ffafff 861.5px,#ffa6ff 865.5px,#a573ff 891.5px,#6549ff 913.5px,#3727ff 931.5px,#3425fa 932.5px,#2218a3 936.5px,#181171 938.5px,#0b0835 940.5px,#03020e 941.5px,#000 942.5px)"></i>
<i style="background:linear-gradient(90deg,#000 336.5px,#020108 337.5px,#0a0730 338.5px,#110c51 339.5px,#1c1487 341.5px,#2f22e2 345.5px,#3325f6 346.5px,#3627ff 347.5px,#835fff 376.5px,#d28cff 401.5px,#fea4ff 413.5px,#ffb1ff 419.5px,#ffaeff 489.5px,#fca4ff 493.5px,#b57cff 507.5px,#7958ff 517.5px,#7958ff 762.5px,#c585ff 775.5px,#fca4ff 786.5px,#ffaeff 790.5px,#ffb0ff 861.5px,#fea4ff 866.5px,#ad77ff 889.5px,#694cff 912.5px,#3627ff 932.5px,#3325f6 933.5px,#21189f 937.5px,#17106d 939.5px,#110c51 940.5px,#0a0730 941.5px,#020108 942.5px,#000 943.5px)"></i>
<i style="background:linear-gradient(90deg,#000 335.5px,#010106 336.5px,#09062b 337.5px,#100b4c 338.5px,#1b1483 340.5px,#2e21de 344.5px,#3224f3 345.5px,#3627ff 346.5px,#825eff 375.5px,#d08bff 400.5px,#ffa6ff 413.5px,#ffb3ff 419.5px,#ffb1ff 488.5px,#fda4ff 493.5px,#b57cff 507.5px,#7a58ff 517.5px,#7a58ff 762.5px,#c082ff 774.5px,#fda4ff 786.5px,#ffb1ff 792.5px,#ffb1ff 861.5px,#ffa6ff 866.5px,#a673ff 892.5px,#664aff 914.5px,#3627ff 933.5px,#3224f3 934.5px,#20179c 938.5px,#161069 940.5px,#100b4c 941.5px,#09062b 942.5px,#010106 943.5px,#000 944.5px)"></i>
<i style="background:linear-gradient(90deg,#000 334.5px,#010003 335.5px,#0f0b48 337.5px,#1a137f 339.5px,#291dc5 342.5px,#3224ef 344.5px,#3526ff 345.5px,#835fff 375.5px,#d28cff 400.5px,#fea4ff 412.5px,#ffb4ff 419.5px,#ffb1ff 488.5px,#fda4ff 493.5px,#b67cff 507.5px,#7a58ff 517.5px,#7a58ff 762.5px,#c182ff 774.5px,#fda4ff 786.5px,#ffb3ff 792.5px,#ffb2ff 861.5px,#fea4ff 867.5px,#ae78ff 890.5px,#6a4dff 913.5px,#3526ff 934.5px,#3224ef 935.5px,#201798 939.5px,#150f65 941.5px,#0f0b48 942.5px,#010003 944.5px,#000 945.5px)"></i>
<i style="background:linear-gradient(90deg,#000 334.5px,#070520 335.5px,#0e0a44 336.5px,#1a127b 338.5px,#281dc1 341.5px,#3526ff 344.5px,#825fff 374.5px,#d18bff 399.5px,#ffa5ff 412.5px,#ffb5ff 420.5px,#ffb3ff 487.5px,#fea4ff 493.5px,#b67cff 507.5px,#7a59ff 517.5px,#7a59ff 762.5px,#c182ff 774.5px,#fea4ff 786.5px,#ffb4ff 793.5px,#ffb3ff 861.5px,#ffa5ff 867.5px,#a673ff 893.5px,#573fff 921.5px,#3526ff 935.5px,#241aab 939.5px,#140e61 942.5px,#0e0a44 943.5px,#070520 944.5px,#000 945.5px)"></i>
<i style="background:linear-gradient(90deg,#000 333.5px,#06041b 334.5px,#0d093f 335.5px,#191278 337.5px,#271cbe 340.5px,#3426fc 343.5px,#3929ff 345.5px,#8762ff 375.5px,#d68eff 400.5px,#fea4ff 411.5px,#ffb6ff 420.5px,#ffb4ff 487.5px,#fea4ff 493.5px,#b67cff 507.5px,#7a59ff 517.5px,#7a59ff 762.5px,#bc80ff 773.5px,#fea4ff 786.5px,#ffb5ff 793.5px,#ffb6ff 860.5px,#fea4ff 868.5px,#ae78ff 891.5px,#6b4eff 914.5px,#3727ff 935.5px,#3426fc 936.5px,#2319a8 940.5px,#130e5d 943.5px,#0d093f 944.5px,#06041b 945.5px,#000 946.5px)"></i>
<i style="background:linear-gradient(90deg,#000 332.5px,#050316 333.5px,#0c093b 334.5px,#181174 336.5px,#271cba 339.5px,#3425f8 342.5px,#3627ff 343.5px,#835fff 373.5px,#d48dff 399.5px,#ffa5ff 411.5px,#ffb8ff 420.5px,#ffb6ff 486.5px,#fea5ff 493.5px,#b77dff 507.5px,#7a59ff 517.5px,#7a59ff 762.5px,#bc80ff 773.5px,#fea5ff 786.5px,#ffb6ff 793.5px,#ffb7ff 860.5px,#ffa5ff 868.5px,#aa75ff 893.5px,#684bff 916.5px,#3627ff 936.5px,#3425f8 937.5px,#2218a4 941.5px,#120d59 944.5px,#0c093b 945.5px,#050316 946.5px,#000 947.5px)"></i>
<i style="background:linear-gradient(90deg,#000 331.5px,#040311 332.5px,#0b0836 333.5px,#171170 335.5px,#261bb6 338.5px,#3324f4 341.5px,#3627ff 342.5px,#825fff 372.5px,#d38cff 398.5px,#ffa6ff 411.5px,#ffb9ff 420.5px,#ffb7ff 486.5px,#ffa5ff 493.5px,#b77dff 507.5px,#7b59ff 517.5px,#7b59ff 762.5px,#b77dff 772.5px,#ffa5ff 786.5px,#ffb8ff 794.5px,#ffb9ff 860.5px,#fea4ff 869.5px,#ac76ff 893.5px,#674bff 917.5px,#3627ff 937.5px,#3324f4 938.5px,#2118a0 942.5px,#171170 944.5px,#0b0836 946.5px,#040311 947.5px,#000 948.5px)"></i>
<i style="background:linear-gradient(90deg,#000 330.5px,#02020a 331.5px,#0a0731 332.5px,#16106c 334.5px,#251bb3 337.5px,#3224f1 340.5px,#3626ff 341.5px,#815eff 371.5px,#d18bff 397.5px,#ffa5ff 410.5px,#ffbaff 420.5px,#ffb7ff 486.5px,#ffa5ff 493.5px,#b77dff 507.5px,#7b59ff 517.5px,#7b59ff 762.5px,#b77dff 772.5px,#ffa5ff 786.5px,#ffb9ff 794.5px,#ffbaff 860.5px,#ffa5ff 869.5px,#aa76ff 894.5px,#6c4eff 916.5px,#3626ff 938.5px,#3224f1 939.5px,#21179c 943.5px,#16106c 945.5px,#0a0731 947.5px,#02020a 948.5px,#000 949.5px)"></i>
<i style="background:linear-gradient(90deg,#000 329.5px,#010107 330.5px,#09072c 331.5px,#100b4c 332.5px,#1b1381 334.5px,#2d20d9 338.5px,#3526ff 340.5px,#805dff 370.5px,#cf8aff 396.5px,#ffa6ff 410.5px,#ffbcff 420.5px,#ffbaff 485.5px,#ffa5ff 493.5px,#b87dff 507.5px,#815eff 516.5px,#7b59ff 517.5px,#7b59ff 762.5px,#b27aff 771.5px,#fba3ff 785.5px,#ffa5ff 786.5px,#ffbaff 795.5px,#fbf 860.5px,#fda4ff 870.5px,#ac77ff 894.5px,#684cff 918.5px,#3526ff 939.5px,#291dc4 942.5px,#1b1381 945.5px,#100b4c 947.5px,#09072c 948.5px,#010107 949.5px,#000 950.5px)"></i>
<i style="background:linear-gradient(90deg,#000 328.5px,#010104 329.5px,#0f0b48 331.5px,#1a137d 333.5px,#2c20d6 337.5px,#3526fd 339.5px,#825fff 370.5px,#d18bff 396.5px,#ffa5ff 409.5px,#ffbdff 420.5px,#ffbaff 485.5px,#ffa5ff 493.5px,#be81ff 506.5px,#825eff 516.5px,#7b59ff 517.5px,#7a58ff 761.5px,#7b59ff 762.5px,#b37aff 771.5px,#fba3ff 785.5px,#ffa8ff 787.5px,#fbf 795.5px,#ffbcff 860.5px,#ffa5ff 870.5px,#ae78ff 894.5px,#6a4dff 918.5px,#3526fd 940.5px,#241aab 944.5px,#150f64 947.5px,#0f0b48 948.5px,#010104 950.5px,#000 951.5px)"></i>
<i style="background:linear-gradient(90deg,#000 327.5px,#000002 328.5px,#0e0a44 330.5px,#19127a 332.5px,#271cbd 335.5px,#3425f9 338.5px,#3727ff 339.5px,#8460ff 370.5px,#d38cff 396.5px,#ffa6ff 409.5px,#ffbeff 420.5px,#ffbcff 484.5px,#ffa6ff 493.5px,#c484ff 505.5px,#825eff 516.5px,#7c5aff 517.5px,#7a58ff 761.5px,#7c5aff 762.5px,#b37bff 771.5px,#fba3ff 785.5px,#ffa8ff 787.5px,#ffbdff 796.5px,#ffbdff 860.5px,#fda4ff 871.5px,#ad77ff 895.5px,#6c4eff 918.5px,#3727ff 940.5px,#3425f9 941.5px,#2319a8 945.5px,#140e60 948.5px,#0e0a44 949.5px,#000002 951.5px,#000 952.5px)"></i>
<i style="background:linear-gradient(90deg,#000 327.5px,#06041c 328.5px,#0d0940 329.5px,#191276 331.5px,#271cba 334.5px,#3325f6 337.5px,#3627ff 338.5px,#835fff 369.5px,#d18cff 395.5px,#ffa5ff 408.5px,#ffbfff 420.5px,#ffbdff 484.5px,#ffa6ff 493.5px,#c987ff 504.5px,#835fff 516.5px,#7c5aff 517.5px,#7a58ff 523.5px,#7a58ff 761.5px,#7c5aff 762.5px,#b97eff 772.5px,#fca3ff 785.5px,#ffa8ff 787.5px,#ffbeff 796.5px,#ffbeff 860.5px,#ffa5ff 871.5px,#ae78ff 895.5px,#694cff 920.5px,#3627ff 941.5px,#3325f6 942.5px,#2218a4 946.5px,#130e5c 949.5px,#0d0940 950.5px,#06041c 951.5px,#000 952.5px)"></i>
<i style="background:linear-gradient(90deg,#000 326.5px,#050418 327.5px,#0c093b 328.5px,#181172 330.5px,#261bb6 333.5px,#3224f2 336.5px,#3627ff 337.5px,#825eff 368.5px,#d08bff 394.5px,#ffa6ff 408.5px,#ffc1ff 420.5px,#ffbfff 483.5px,#ffa6ff 493.5px,#cf8aff 503.5px,#835fff 516.5px,#7a58ff 518.5px,#7a58ff 761.5px,#835fff 763.5px,#cf8aff 776.5px,#ffa6ff 786.5px,#ffbfff 796.5px,#ffbfff 860.5px,#fda4ff 872.5px,#ad77ff 896.5px,#6a4dff 920.5px,#3627ff 942.5px,#3224f2 943.5px,#2118a1 947.5px,#120d58 950.5px,#0c093b 951.5px,#050418 952.5px,#000 953.5px)"></i>
<i style="background:linear-gradient(90deg,#000 325.5px,#040313 326.5px,#0b0837 327.5px,#17106e 329.5px,#251bb3 332.5px,#3224ef 335.5px,#3526ff 336.5px,#815eff 367.5px,#d28cff 394.5px,#ffa5ff 407.5px,#ffc2ff 420.5px,#ffc0ff 483.5px,#ffa6ff 493.5px,#e999ff 498.5px,#9d6eff 512.5px,#7d5bff 517.5px,#7a58ff 519.5px,#7a58ff 761.5px,#845fff 763.5px,#d08bff 776.5px,#fda4ff 785.5px,#ffb3ff 791.5px,#ffc0ff 797.5px,#ffc0ff 860.5px,#ffa5ff 872.5px,#af78ff 896.5px,#6c4eff 920.5px,#3526ff 943.5px,#2e21db 945.5px,#1c1487 949.5px,#110d54 951.5px,#0b0837 952.5px,#040313 953.5px,#000 954.5px)"></i>
<i style="background:linear-gradient(90deg,#000 324.5px,#03020d 325.5px,#0a0732 326.5px,#16106b 328.5px,#241aaf 331.5px,#3526fe 335.5px,#805dff 366.5px,#d08bff 393.5px,#ffa6ff 407.5px,#ffc3ff 421.5px,#ffc1ff 483.5px,#ffa5ff 494.5px,#b67cff 508.5px,#7f5cff 517.5px,#7c5aff 519.5px,#7c5aff 761.5px,#8661ff 763.5px,#d28cff 776.5px,#ffa5ff 785.5px,#ffc2ff 797.5px,#ffc3ff 859.5px,#ffa6ff 872.5px,#a573ff 900.5px,#553dff 930.5px,#3526fe 944.5px,#241aaf 948.5px,#16106b 951.5px,#0a0732 953.5px,#03020d 954.5px,#000 955.5px)"></i>
<i style="background:linear-gradient(90deg,#000 323.5px,#020108 324.5px,#09072d 325.5px,#150f67 327.5px,#241aac 330.5px,#3425fb 334.5px,#3727ff 335.5px,#825eff 366.5px,#d28cff 393.5px,#fea5ff 406.5px,#ffc4ff 421.5px,#ffc2ff 483.5px,#ffa6ff 494.5px,#df93ff 501.5px,#956aff 514.5px,#7e5bff 518.5px,#7e5bff 761.5px,#956aff 765.5px,#df93ff 778.5px,#ffa6ff 785.5px,#ffc3ff 797.5px,#ffc4ff 859.5px,#fea5ff 873.5px,#af79ff 897.5px,#6b4dff 922.5px,#3727ff 944.5px,#3425fb 945.5px,#241aac 949.5px,#150f67 952.5px,#09072d 954.5px,#020108 955.5px,#000 956.5px)"></i>
<i style="background:linear-gradient(90deg,#000 322.5px,#010105 323.5px,#0f0b48 325.5px,#1a127c 327.5px,#2b1fd1 331.5px,#3325f7 333.5px,#3627ff 334.5px,#815eff 365.5px,#d08bff 392.5px,#ffa6ff 406.5px,#ffc5ff 421.5px,#ffc3ff 483.5px,#ffa5ff 495.5px,#b57cff 509.5px,#805dff 518.5px,#805dff 761.5px,#dc91ff 777.5px,#ffa5ff 784.5px,#ffc4ff 797.5px,#ffc5ff 859.5px,#ffa6ff 873.5px,#a573ff 901.5px,#563eff 931.5px,#3627ff 945.5px,#3325f7 946.5px,#2319a8 950.5px,#150f63 953.5px,#0f0b48 954.5px,#010105 956.5px,#000 957.5px)"></i>
<i style="background:linear-gradient(90deg,#000 321.5px,#010003 322.5px,#0e0a44 324.5px,#191278 326.5px,#2b1fcd 330.5px,#3324f4 332.5px,#3627ff 333.5px,#805dff 364.5px,#cf8aff 391.5px,#fea5ff 405.5px,#ffc7ff 421.5px,#ffc5ff 483.5px,#ffa6ff 495.5px,#de93ff 502.5px,#825eff 518.5px,#825eff 761.5px,#de93ff 777.5px,#ffa6ff 784.5px,#ffc5ff 796.5px,#ffc6ff 859.5px,#fea5ff 874.5px,#ad77ff 899.5px,#664aff 925.5px,#3627ff 946.5px,#3324f4 947.5px,#2219a5 951.5px,#140e5f 954.5px,#0e0a44 955.5px,#010003 957.5px,#000 958.5px)"></i>
<i style="background:linear-gradient(90deg,#000 321.5px,#06041e 322.5px,#0d0a40 323.5px,#181174 325.5px,#2a1eca 329.5px,#3224f0 331.5px,#3526ff 332.5px,#825eff 364.5px,#d08bff 391.5px,#ffa6ff 405.5px,#ffc8ff 421.5px,#ffc6ff 483.5px,#ffa5ff 496.5px,#b47bff 510.5px,#8460ff 518.5px,#8460ff 761.5px,#db91ff 776.5px,#ffa5ff 783.5px,#ffc6ff 796.5px,#ffc7ff 859.5px,#ffa6ff 874.5px,#a975ff 901.5px,#684bff 925.5px,#3526ff 947.5px,#3224f0 948.5px,#2118a1 952.5px,#130e5c 955.5px,#0d0a40 956.5px,#06041e 957.5px,#000 958.5px)"></i>
<i style="background:linear-gradient(90deg,#000 320.5px,#050419 321.5px,#0c093c 322.5px,#171171 324.5px,#291ec7 328.5px,#3526ff 331.5px,#815eff 363.5px,#cf8aff 390.5px,#fea4ff 404.5px,#ffc9ff 421.5px,#ffc7ff 483.5px,#ffa6ff 496.5px,#d88fff 504.5px,#8661ff 518.5px,#8661ff 761.5px,#de92ff 776.5px,#ffa6ff 783.5px,#ffc7ff 796.5px,#ffc8ff 859.5px,#fea4ff 875.5px,#ad77ff 900.5px,#674bff 926.5px,#3526ff 948.5px,#251bb3 952.5px,#171171 955.5px,#0c093c 957.5px,#050419 958.5px,#000 959.5px)"></i>
<i style="background:linear-gradient(90deg,#000 319.5px,#040315 320.5px,#0c0837 321.5px,#17106d 323.5px,#241aaf 326.5px,#3426fc 330.5px,#3929ff 332.5px,#8561ff 364.5px,#d48dff 391.5px,#ffa5ff 404.5px,#ffcaff 421.5px,#ffc9ff 483.5px,#fea5ff 497.5px,#b37bff 511.5px,#8863ff 518.5px,#8863ff 761.5px,#e094ff 776.5px,#fea5ff 782.5px,#ffc9ff 796.5px,#ffc9ff 859.5px,#ffa5ff 875.5px,#a975ff 902.5px,#6449ff 928.5px,#3727ff 948.5px,#3426fc 949.5px,#20179a 954.5px,#110c54 957.5px,#0c0837 958.5px,#040315 959.5px,#000 960.5px)"></i>
<i style="background:linear-gradient(90deg,#000 318.5px,#030210 319.5px,#0b0833 320.5px,#161069 322.5px,#241aac 325.5px,#3425f8 329.5px,#3627ff 330.5px,#825eff 362.5px,#cf8aff 389.5px,#ffa6ff 404.5px,#ffcbff 421.5px,#ffc8ff 484.5px,#ffa6ff 497.5px,#cc89ff 507.5px,#8a64ff 518.5px,#8a64ff 761.5px,#dd92ff 775.5px,#ffa6ff 782.5px,#ffcaff 796.5px,#ffcaff 859.5px,#fea4ff 876.5px,#ae78ff 901.5px,#6b4dff 926.5px,#3627ff 949.5px,#3425f8 950.5px,#1f1697 955.5px,#110c50 958.5px,#0b0833 959.5px,#030210 960.5px,#000 961.5px)"></i>
<i style="background:linear-gradient(90deg,#000 317.5px,#02010a 318.5px,#0a072e 319.5px,#150f66 321.5px,#2319a8 324.5px,#3325f5 328.5px,#3627ff 329.5px,#815dff 361.5px,#cd89ff 388.5px,#ffa5ff 403.5px,#ffcdff 421.5px,#ffc9ff 484.5px,#fea5ff 498.5px,#b27aff 512.5px,#8c65ff 518.5px,#8c65ff 761.5px,#df93ff 775.5px,#fea5ff 781.5px,#ffcbff 796.5px,#ffcbff 859.5px,#ffa5ff 876.5px,#ac77ff 902.5px,#6549ff 929.5px,#3627ff 950.5px,#3325f5 951.5px,#2319a8 955.5px,#150f66 958.5px,#0a072e 960.5px,#02010a 961.5px,#000 962.5px)"></i>
<i style="background:linear-gradient(90deg,#000 316.5px,#010106 317.5px,#09062a 318.5px,#0f0b48 319.5px,#19127a 321.5px,#2b1ecd 325.5px,#3224f2 327.5px,#3626ff 328.5px,#805dff 360.5px,#cf8aff 388.5px,#ffa6ff 403.5px,#ffceff 421.5px,#ffcbff 484.5px,#ffa6ff 498.5px,#c685ff 509.5px,#8e66ff 518.5px,#8e66ff 761.5px,#e295ff 775.5px,#ffa6ff 781.5px,#fcf 796.5px,#fcf 859.5px,#fda4ff 877.5px,#ae78ff 902.5px,#694cff 928.5px,#3626ff 951.5px,#3224f2 952.5px,#2219a5 956.5px,#140f62 959.5px,#0f0b48 960.5px,#09062a 961.5px,#010106 962.5px,#000 963.5px)"></i>
<i style="background:linear-gradient(90deg,#000 315.5px,#010104 316.5px,#0e0a44 318.5px,#191276 320.5px,#2a1ec9 324.5px,#3526ff 327.5px,#7f5cff 359.5px,#ce89ff 387.5px,#ffa5ff 402.5px,#ffcfff 422.5px,#fcf 484.5px,#fea4ff 499.5px,#b67cff 512.5px,#9167ff 518.5px,#9167ff 761.5px,#e496ff 775.5px,#fea4ff 780.5px,#ffcdff 796.5px,#ffcfff 858.5px,#ffa5ff 877.5px,#b079ff 902.5px,#6b4eff 928.5px,#3526ff 952.5px,#261bb6 956.5px,#191276 959.5px,#0e0a44 961.5px,#010104 963.5px,#000 964.5px)"></i>
<i style="background:linear-gradient(90deg,#000 314.5px,#000002 315.5px,#0d0a40 317.5px,#181173 319.5px,#291dc6 323.5px,#3526fd 326.5px,#553eff 341.5px,#a372ff 372.5px,#f39eff 398.5px,#ffa6ff 402.5px,#ffd0ff 422.5px,#ffcdff 484.5px,#ffa6ff 499.5px,#be81ff 511.5px,#9369ff 518.5px,#9369ff 761.5px,#e194ff 774.5px,#ffa6ff 780.5px,#ffcfff 796.5px,#ffd0ff 858.5px,#fda4ff 878.5px,#ae78ff 903.5px,#664aff 931.5px,#3727ff 952.5px,#3526fd 953.5px,#21189e 958.5px,#130e5b 961.5px,#0d0a40 962.5px,#000002 964.5px,#000 965.5px)"></i>
<i style="background:linear-gradient(90deg,#000 314.5px,#06041b 315.5px,#0c093c 316.5px,#17116f 318.5px,#281dc3 322.5px,#3425f9 325.5px,#3627ff 326.5px,#825fff 359.5px,#d18bff 387.5px,#ffa5ff 401.5px,#ffd1ff 422.5px,#ffcfff 484.5px,#fda4ff 500.5px,#b57bff 513.5px,#956aff 518.5px,#9369ff 760.5px,#956aff 761.5px,#e395ff 774.5px,#fda4ff 779.5px,#ffd0ff 796.5px,#ffd1ff 858.5px,#ffa5ff 878.5px,#b079ff 903.5px,#6c4eff 929.5px,#3627ff 953.5px,#3425f9 954.5px,#20179b 959.5px,#120d57 962.5px,#0c093c 963.5px,#06041b 964.5px,#000 965.5px)"></i>
<i style="background:linear-gradient(90deg,#000 313.5px,#050316 314.5px,#0c0838 315.5px,#16106c 317.5px,#241aac 320.5px,#3325f6 324.5px,#3627ff 325.5px,#815eff 358.5px,#cf8aff 386.5px,#ffa6ff 401.5px,#ffd2ff 422.5px,#ffd0ff 484.5px,#ffa5ff 500.5px,#bd80ff 512.5px,#976bff 518.5px,#956aff 760.5px,#976bff 761.5px,#e597ff 774.5px,#ffa5ff 779.5px,#ffd0ff 795.5px,#ffd2ff 858.5px,#fda4ff 879.5px,#af78ff 904.5px,#694cff 931.5px,#3627ff 954.5px,#3325f6 955.5px,#201798 960.5px,#110c53 963.5px,#0c0838 964.5px,#050316 965.5px,#000 966.5px)"></i>
<i style="background:linear-gradient(90deg,#000 312.5px,#040312 313.5px,#0b0834 314.5px,#161068 316.5px,#2319a9 319.5px,#3224f3 323.5px,#3626ff 324.5px,#805dff 357.5px,#ce8aff 385.5px,#fea5ff 400.5px,#ffd4ff 422.5px,#ffd1ff 484.5px,#ffa7ff 500.5px,#f29eff 503.5px,#a673ff 516.5px,#996cff 518.5px,#976bff 746.5px,#996cff 761.5px,#e798ff 774.5px,#fda4ff 778.5px,#ffb8ff 785.5px,#ffd2ff 796.5px,#ffd3ff 858.5px,#fea5ff 879.5px,#b079ff 904.5px,#684bff 932.5px,#3626ff 955.5px,#3224f3 956.5px,#1f1694 961.5px,#110c4f 964.5px,#0b0834 965.5px,#040312 966.5px,#000 967.5px)"></i>
<i style="background:linear-gradient(90deg,#000 311.5px,#03020d 312.5px,#0a072f 313.5px,#150f65 315.5px,#2219a5 318.5px,#3224f0 322.5px,#3526ff 323.5px,#805dff 356.5px,#cc89ff 384.5px,#ffa6ff 400.5px,#ffd5ff 422.5px,#ffd3ff 484.5px,#ffa5ff 501.5px,#b57cff 514.5px,#9b6dff 518.5px,#996cff 524.5px,#996cff 760.5px,#9b6dff 761.5px,#ea99ff 774.5px,#ffa5ff 778.5px,#ffd3ff 795.5px,#ffd4ff 858.5px,#ffa6ff 879.5px,#a774ff 908.5px,#6347ff 935.5px,#3526ff 956.5px,#2a1ecc 959.5px,#1a127b 963.5px,#100b4c 965.5px,#0a072f 966.5px,#03020d 967.5px,#000 968.5px)"></i>
<i style="background:linear-gradient(90deg,#000 310.5px,#010107 311.5px,#09062b 312.5px,#140e61 314.5px,#2218a2 317.5px,#3526fe 322.5px,#815eff 356.5px,#ce8aff 384.5px,#fea5ff 399.5px,#ffd6ff 422.5px,#ffd4ff 484.5px,#ffa6ff 501.5px,#e697ff 506.5px,#9e6fff 518.5px,#9b6dff 521.5px,#9b6dff 760.5px,#a472ff 762.5px,#f19dff 775.5px,#ffa6ff 778.5px,#ffd4ff 795.5px,#ffd5ff 858.5px,#fea5ff 880.5px,#ae78ff 906.5px,#674aff 934.5px,#3526fe 957.5px,#2218a2 962.5px,#140e61 965.5px,#09062b 967.5px,#010107 968.5px,#000 969.5px)"></i>
<i style="background:linear-gradient(90deg,#000 309.5px,#010105 310.5px,#0e0a44 312.5px,#181175 314.5px,#291dc5 318.5px,#3425fa 321.5px,#3627ff 322.5px,#805dff 355.5px,#cd89ff 383.5px,#ffa5ff 399.5px,#ffd7ff 422.5px,#ffd5ff 484.5px,#fea5ff 502.5px,#b37bff 515.5px,#a070ff 518.5px,#9d6eff 520.5px,#9d6eff 760.5px,#a774ff 762.5px,#f49fff 775.5px,#fea5ff 777.5px,#ffd5ff 795.5px,#ffd5ff 858.5px,#ffa5ff 880.5px,#aa76ff 908.5px,#6448ff 936.5px,#3627ff 957.5px,#3425fa 958.5px,#21189f 963.5px,#130e5e 966.5px,#0e0a44 967.5px,#010105 969.5px,#000 970.5px)"></i>
<i style="background:linear-gradient(90deg,#000 308.5px,#010003 309.5px,#0d0a40 311.5px,#181171 313.5px,#281dc2 317.5px,#3325f7 320.5px,#3627ff 321.5px,#7f5cff 354.5px,#ce8aff 383.5px,#ffa6ff 399.5px,#ffd8ff 422.5px,#ffd6ff 484.5px,#ffa6ff 502.5px,#c886ff 512.5px,#a271ff 518.5px,#9f6fff 520.5px,#9f6fff 760.5px,#a975ff 762.5px,#f6a0ff 775.5px,#ffa6ff 777.5px,#ffd6ff 795.5px,#ffd6ff 858.5px,#fea4ff 881.5px,#ae78ff 907.5px,#6a4dff 934.5px,#3627ff 958.5px,#3325f7 959.5px,#20179b 964.5px,#130d5a 967.5px,#0d0a40 968.5px,#010003 970.5px,#000 971.5px)"></i>
<i style="background:linear-gradient(90deg,#000 308.5px,#0d093c 310.5px,#17106e 312.5px,#281cbf 316.5px,#3324f4 319.5px,#3627ff 320.5px,#815eff 354.5px,#cd89ff 382.5px,#ffa5ff 398.5px,#ffd9ff 422.5px,#ffd7ff 484.5px,#fda4ff 503.5px,#a170ff 519.5px,#a170ff 760.5px,#b87dff 764.5px,#fda4ff 776.5px,#ffd7ff 795.5px,#ffd7ff 858.5px,#ffa5ff 881.5px,#ad77ff 908.5px,#6549ff 937.5px,#3627ff 959.5px,#3324f4 960.5px,#201798 965.5px,#120d56 968.5px,#0d093c 969.5px,#000 971.5px)"></i>
<i style="background:linear-gradient(90deg,#000 307.5px,#050418 308.5px,#0c0838 309.5px,#16106a 311.5px,#2319a9 314.5px,#3224f1 318.5px,#3526ff 319.5px,#805dff 353.5px,#ce8aff 382.5px,#ffa6ff 398.5px,#ffdaff 423.5px,#ffd9ff 484.5px,#ffa5ff 503.5px,#ba7fff 515.5px,#a271ff 519.5px,#a271ff 760.5px,#faa2ff 775.5px,#ffa5ff 776.5px,#ffd9ff 795.5px,#ffdaff 857.5px,#fea4ff 882.5px,#af78ff 908.5px,#684cff 936.5px,#3526ff 960.5px,#2e21df 962.5px,#1f1695 966.5px,#110c53 969.5px,#0c0838 970.5px,#050418 971.5px,#000 972.5px)"></i>
<i style="background:linear-gradient(90deg,#000 306.5px,#040314 307.5px,#0b0834 308.5px,#150f67 310.5px,#2219a5 313.5px,#3526ff 318.5px,#7f5cff 352.5px,#cd89ff 381.5px,#ffa5ff 397.5px,#ffdbff 423.5px,#ffd8ff 485.5px,#ffa7ff 503.5px,#f29eff 506.5px,#a472ff 519.5px,#a472ff 760.5px,#fca4ff 775.5px,#ffb0ff 779.5px,#ffdaff 795.5px,#ffdbff 857.5px,#ffa5ff 882.5px,#b079ff 908.5px,#6a4dff 936.5px,#3526ff 961.5px,#2219a5 966.5px,#150f67 969.5px,#0b0834 971.5px,#040314 972.5px,#000 973.5px)"></i>
<i style="background:linear-gradient(90deg,#000 305.5px,#03020f 306.5px,#0a0730 307.5px,#150f64 309.5px,#2218a2 312.5px,#3425fb 317.5px,#3929ff 319.5px,#835fff 353.5px,#d18bff 382.5px,#ffa6ff 397.5px,#fdf 423.5px,#ffd9ff 485.5px,#ffa5ff 504.5px,#b27aff 517.5px,#a673ff 519.5px,#a673ff 760.5px,#ffa5ff 775.5px,#ffd9ff 794.5px,#ffdcff 857.5px,#fda4ff 883.5px,#af78ff 909.5px,#6549ff 939.5px,#3727ff 961.5px,#3425fb 962.5px,#2218a2 967.5px,#150f64 970.5px,#0a0730 972.5px,#03020f 973.5px,#000 974.5px)"></i>
<i style="background:linear-gradient(90deg,#000 304.5px,#020109 305.5px,#09072c 306.5px,#140e60 308.5px,#21189f 311.5px,#3425f8 316.5px,#3627ff 317.5px,#805dff 351.5px,#cd89ff 380.5px,#ffa5ff 396.5px,#ffdeff 423.5px,#ffdaff 485.5px,#ffa6ff 504.5px,#d38dff 512.5px,#a874ff 519.5px,#a874ff 760.5px,#fba3ff 774.5px,#ffa9ff 776.5px,#ffdaff 794.5px,#fdf 857.5px,#ffa5ff 883.5px,#b179ff 909.5px,#6b4dff 937.5px,#3627ff 962.5px,#3425f8 963.5px,#21189f 968.5px,#140e60 971.5px,#09072c 973.5px,#020109 974.5px,#000 975.5px)"></i>
<i style="background:linear-gradient(90deg,#000 303.5px,#010106 304.5px,#080628 305.5px,#0e0a44 306.5px,#1c1488 309.5px,#2f22e4 314.5px,#3325f5 315.5px,#3627ff 316.5px,#7f5cff 350.5px,#cb88ff 379.5px,#ffa6ff 396.5px,#ffdfff 423.5px,#ffdcff 485.5px,#fea4ff 505.5px,#aa76ff 519.5px,#aa76ff 760.5px,#fea4ff 774.5px,#ffdcff 794.5px,#ffdeff 857.5px,#fda4ff 884.5px,#af79ff 910.5px,#684bff 939.5px,#3627ff 963.5px,#3325f5 964.5px,#20179c 969.5px,#130e5d 972.5px,#0e0a44 973.5px,#080628 974.5px,#010106 975.5px,#000 976.5px)"></i>
<i style="background:linear-gradient(90deg,#000 302.5px,#010104 303.5px,#0d0a40 305.5px,#171170 307.5px,#271cbe 311.5px,#3224f2 314.5px,#3526ff 315.5px,#7e5cff 349.5px,#ca87ff 378.5px,#ffa5ff 395.5px,#ffe0ff 423.5px,#fdf 485.5px,#ffa5ff 505.5px,#bf81ff 516.5px,#ac77ff 519.5px,#ac77ff 760.5px,#faa2ff 773.5px,#ffa5ff 774.5px,#fdf 794.5px,#ffdfff 857.5px,#ffa5ff 884.5px,#b179ff 910.5px,#674bff 940.5px,#3526ff 964.5px,#2f22e1 966.5px,#1c1485 971.5px,#130d59 973.5px,#0d0a40 974.5px,#010104 976.5px,#000 977.5px)"></i>
<i style="background:linear-gradient(90deg,#000 301.5px,#000002 302.5px,#0d093d 304.5px,#17106d 306.5px,#271cbb 310.5px,#3526ff 314.5px,#805dff 349.5px,#c8f 378.5px,#ffa6ff 395.5px,#ffe1ff 423.5px,#ffdeff 485.5px,#ffa7ff 505.5px,#f7a0ff 507.5px,#ae78ff 519.5px,#ae78ff 760.5px,#fca4ff 773.5px,#ffb0ff 777.5px,#ffdeff 794.5px,#ffe0ff 857.5px,#ffa6ff 884.5px,#a874ff 914.5px,#6449ff 942.5px,#3526ff 965.5px,#2319a9 970.5px,#17106d 973.5px,#0d093d 975.5px,#000002 977.5px,#000 978.5px)"></i>
<i style="background:linear-gradient(90deg,#000 301.5px,#05041a 302.5px,#0c0839 303.5px,#161069 305.5px,#261bb8 309.5px,#3426fc 313.5px,#3a2aff 316.5px,#8460ff 350.5px,#d08bff 379.5px,#fea5ff 394.5px,#ffe2ff 423.5px,#ffdfff 485.5px,#ffa8ff 505.5px,#ffa5ff 506.5px,#b079ff 519.5px,#b079ff 760.5px,#ffa5ff 773.5px,#fdf 793.5px,#ffe0ff 797.5px,#ffe1ff 857.5px,#fea5ff 885.5px,#b17aff 911.5px,#664aff 942.5px,#3727ff 965.5px,#3426fc 966.5px,#2219a5 971.5px,#161069 974.5px,#0c0839 976.5px,#05041a 977.5px,#000 978.5px)"></i>
<i style="background:linear-gradient(90deg,#000 300.5px,#040315 301.5px,#0b0835 302.5px,#150f66 304.5px,#261bb5 308.5px,#3425f9 312.5px,#3627ff 313.5px,#805dff 348.5px,#c8f 377.5px,#ffa5ff 394.5px,#ffe3ff 423.5px,#ffe1ff 485.5px,#ffa9ff 505.5px,#fba3ff 507.5px,#b27aff 519.5px,#b27aff 760.5px,#fba3ff 772.5px,#ffa9ff 774.5px,#ffe1ff 794.5px,#ffe1ff 857.5px,#ffa5ff 885.5px,#ab76ff 914.5px,#6348ff 944.5px,#3627ff 966.5px,#3425f9 967.5px,#2218a2 972.5px,#150f66 975.5px,#0b0835 977.5px,#040315 978.5px,#000 979.5px)"></i>
<i style="background:linear-gradient(90deg,#000 299.5px,#040311 300.5px,#0a0731 301.5px,#140f63 303.5px,#21189f 306.5px,#3325f6 311.5px,#3627ff 312.5px,#805dff 347.5px,#cd89ff 377.5px,#ffa6ff 394.5px,#ffe4ff 423.5px,#ffe2ff 485.5px,#faf 505.5px,#fda4ff 507.5px,#b47bff 519.5px,#b37aff 759.5px,#b47bff 760.5px,#fda4ff 772.5px,#fdf 792.5px,#ffe3ff 795.5px,#ffe2ff 857.5px,#fea4ff 886.5px,#af78ff 913.5px,#694cff 942.5px,#3627ff 967.5px,#3325f6 968.5px,#21189f 973.5px,#140f63 976.5px,#0a0731 978.5px,#040311 979.5px,#000 980.5px)"></i>
<i style="background:linear-gradient(90deg,#000 298.5px,#02020c 299.5px,#09072d 300.5px,#140e5f 302.5px,#20179c 305.5px,#3224f3 310.5px,#3526ff 311.5px,#7f5cff 346.5px,#c8f 376.5px,#ffa5ff 393.5px,#ffe5ff 424.5px,#ffe3ff 485.5px,#ffacff 505.5px,#ffa5ff 507.5px,#b67cff 519.5px,#b47bff 759.5px,#b67cff 760.5px,#ffa5ff 772.5px,#ffdeff 792.5px,#ffe4ff 795.5px,#ffe5ff 856.5px,#ffa5ff 886.5px,#ae78ff 914.5px,#6247ff 946.5px,#3526ff 968.5px,#3224f3 969.5px,#20179c 974.5px,#140e5f 977.5px,#09072d 979.5px,#02020c 980.5px,#000 981.5px)"></i>
<i style="background:linear-gradient(90deg,#000 297.5px,#010107 298.5px,#080629 299.5px,#130e5c 301.5px,#201799 304.5px,#3224f0 309.5px,#3526ff 310.5px,#7e5bff 345.5px,#ca88ff 375.5px,#ffa6ff 393.5px,#ffe6ff 424.5px,#ffe4ff 485.5px,#ffadff 505.5px,#ffa7ff 507.5px,#f09dff 510.5px,#b87dff 519.5px,#b67cff 759.5px,#b87dff 760.5px,#fca3ff 771.5px,#faf 773.5px,#ffe2ff 793.5px,#ffe5ff 800.5px,#ffe6ff 856.5px,#ffa6ff 886.5px,#a573ff 918.5px,#5940ff 951.5px,#3526ff 969.5px,#241aac 974.5px,#181172 977.5px,#0e0a44 979.5px,#080629 980.5px,#010107 981.5px,#000 982.5px)"></i>
<i style="background:linear-gradient(90deg,#000 296.5px,#010105 297.5px,#0d0a41 299.5px,#1b1383 302.5px,#2e21dc 307.5px,#3526fd 309.5px,#563eff 326.5px,#a171ff 359.5px,#ef9cff 387.5px,#ffa5ff 392.5px,#ffe7ff 424.5px,#ffe5ff 485.5px,#ffaeff 505.5px,#fea5ff 508.5px,#ba7eff 519.5px,#b77dff 718.5px,#ba7eff 760.5px,#fea5ff 771.5px,#ffdeff 791.5px,#ffe6ff 795.5px,#ffe7ff 856.5px,#ffa7ff 886.5px,#fca3ff 888.5px,#ae78ff 915.5px,#674aff 945.5px,#3727ff 969.5px,#3526fd 970.5px,#2319a9 975.5px,#17106e 978.5px,#0d0a41 980.5px,#010105 982.5px,#000 983.5px)"></i>
<i style="background:linear-gradient(90deg,#000 295.5px,#010003 296.5px,#0d093d 298.5px,#1b1380 301.5px,#2d20d9 306.5px,#3425fa 308.5px,#3627ff 309.5px,#7f5cff 344.5px,#ca88ff 374.5px,#ffa6ff 392.5px,#ffe8ff 424.5px,#ffe7ff 485.5px,#ffb3ff 504.5px,#ffa6ff 508.5px,#c383ff 518.5px,#bc80ff 519.5px,#ba7eff 525.5px,#ba7eff 759.5px,#bc80ff 760.5px,#faa2ff 770.5px,#ffa6ff 771.5px,#ffdfff 791.5px,#ffe7ff 795.5px,#ffe8ff 856.5px,#faf 885.5px,#fda4ff 888.5px,#af79ff 915.5px,#664aff 946.5px,#3627ff 970.5px,#3425fa 971.5px,#2219a6 976.5px,#16106b 979.5px,#0d093d 981.5px,#010003 983.5px,#000 984.5px)"></i>
<i style="background:linear-gradient(90deg,#000 295.5px,#0c0939 297.5px,#1a137d 300.5px,#291dc6 304.5px,#3325f7 307.5px,#3627ff 308.5px,#805dff 344.5px,#c8f 374.5px,#ffa5ff 391.5px,#ffe4ff 421.5px,#ffeaff 424.5px,#ffe8ff 485.5px,#ffb4ff 504.5px,#fda4ff 509.5px,#be81ff 519.5px,#bb7fff 522.5px,#bb7fff 759.5px,#c585ff 761.5px,#fda4ff 770.5px,#ffb7ff 776.5px,#ffe8ff 794.5px,#ffe9ff 856.5px,#faf 885.5px,#ffa5ff 888.5px,#b179ff 915.5px,#6a4dff 945.5px,#3627ff 971.5px,#3325f7 972.5px,#2218a2 977.5px,#160f68 980.5px,#0c0939 982.5px,#000 984.5px)"></i>
<i style="background:linear-gradient(90deg,#000 294.5px,#050317 295.5px,#0b0835 296.5px,#150f65 298.5px,#251ab1 302.5px,#3324f4 306.5px,#3626ff 307.5px,#7f5cff 343.5px,#cb88ff 373.5px,#ffa6ff 391.5px,#ffe5ff 421.5px,#ffebff 425.5px,#ffe7ff 486.5px,#ffafff 506.5px,#ffa5ff 509.5px,#c082ff 519.5px,#bd80ff 521.5px,#bd80ff 759.5px,#c786ff 761.5px,#ffa5ff 770.5px,#fdf 789.5px,#ffe9ff 795.5px,#ffeaff 856.5px,#ffabff 885.5px,#fda4ff 889.5px,#b079ff 916.5px,#6549ff 948.5px,#3626ff 972.5px,#3324f4 973.5px,#21189f 978.5px,#150f65 981.5px,#0b0835 983.5px,#050317 984.5px,#000 985.5px)"></i>
<i style="background:linear-gradient(90deg,#000 293.5px,#040313 294.5px,#0a0732 295.5px,#140f62 297.5px,#241aae 301.5px,#3224f1 305.5px,#3526ff 306.5px,#7e5cff 342.5px,#c987ff 372.5px,#fea5ff 390.5px,#ffe3ff 420.5px,#ffecff 424.5px,#ffe8ff 486.5px,#ffb0ff 506.5px,#ffa6ff 509.5px,#d08bff 517.5px,#c283ff 519.5px,#bf81ff 521.5px,#bf81ff 759.5px,#c987ff 761.5px,#fba3ff 769.5px,#ffa6ff 770.5px,#ffdeff 789.5px,#ffeaff 794.5px,#ffeaff 856.5px,#ffacff 885.5px,#fea5ff 889.5px,#b17aff 916.5px,#664aff 948.5px,#3526ff 973.5px,#281dc0 977.5px,#191276 981.5px,#100b4b 983.5px,#0a0732 984.5px,#040313 985.5px,#000 986.5px)"></i>
<i style="background:linear-gradient(90deg,#000 292.5px,#03020e 293.5px,#09072e 294.5px,#140e5e 296.5px,#241aab 300.5px,#3526fe 305.5px,#805dff 342.5px,#cb88ff 372.5px,#ffa5ff 390.5px,#ffe4ff 420.5px,#ffedff 425.5px,#ffe9ff 486.5px,#ffb1ff 506.5px,#fda4ff 510.5px,#c584ff 519.5px,#c182ff 521.5px,#c182ff 759.5px,#d28cff 762.5px,#fda4ff 769.5px,#fdf 788.5px,#ffebff 794.5px,#ffebff 856.5px,#ffadff 885.5px,#fda4ff 890.5px,#b079ff 917.5px,#684bff 948.5px,#3526fe 974.5px,#20179a 980.5px,#140e5e 983.5px,#09072e 985.5px,#03020e 986.5px,#000 987.5px)"></i>
<i style="background:linear-gradient(90deg,#000 291.5px,#020108 292.5px,#09062a 293.5px,#130e5b 295.5px,#1f1697 298.5px,#3123eb 303.5px,#3425fa 304.5px,#3627ff 305.5px,#7f5cff 341.5px,#cc89ff 372.5px,#ffa6ff 390.5px,#ffe5ff 420.5px,#fef 425.5px,#ffeaff 486.5px,#ffb2ff 506.5px,#ffa5ff 510.5px,#c283ff 520.5px,#c283ff 759.5px,#ffa5ff 769.5px,#ffdeff 788.5px,#ffecff 794.5px,#ffecff 856.5px,#ffaeff 885.5px,#fea4ff 890.5px,#b17aff 917.5px,#6549ff 950.5px,#3627ff 974.5px,#3425fa 975.5px,#2319a9 980.5px,#171170 983.5px,#0e0a44 985.5px,#09062a 986.5px,#020108 987.5px,#000 988.5px)"></i>
<i style="background:linear-gradient(90deg,#000 290.5px,#010105 291.5px,#080625 292.5px,#0d0a41 293.5px,#1b1381 296.5px,#2d20d8 301.5px,#3325f7 303.5px,#3627ff 304.5px,#7e5cff 340.5px,#cb88ff 371.5px,#ffa5ff 389.5px,#ffe3ff 419.5px,#ffefff 425.5px,#ffecff 486.5px,#ffb4ff 506.5px,#ffa6ff 510.5px,#e395ff 515.5px,#c484ff 520.5px,#c484ff 759.5px,#fba3ff 768.5px,#faf 770.5px,#ffe2ff 789.5px,#ffedff 794.5px,#ffedff 856.5px,#ffaeff 885.5px,#ffa5ff 890.5px,#ae78ff 919.5px,#664aff 950.5px,#3627ff 975.5px,#3325f7 976.5px,#2219a6 981.5px,#17106d 984.5px,#0d0a41 986.5px,#080625 987.5px,#010105 988.5px,#000 989.5px)"></i>
<i style="background:linear-gradient(90deg,#000 289.5px,#010103 290.5px,#0d093d 292.5px,#1a137e 295.5px,#2c20d5 300.5px,#3324f5 302.5px,#3626ff 303.5px,#7d5bff 339.5px,#c987ff 370.5px,#ffa6ff 389.5px,#ffe4ff 419.5px,#fff0ff 425.5px,#ffedff 486.5px,#ffb5ff 506.5px,#fda4ff 511.5px,#c685ff 520.5px,#c685ff 759.5px,#fda4ff 768.5px,#ffdeff 787.5px,#fef 794.5px,#fff0ff 855.5px,#ffadff 886.5px,#fea4ff 891.5px,#af78ff 919.5px,#664aff 951.5px,#3626ff 976.5px,#3324f5 977.5px,#2218a3 982.5px,#16106a 985.5px,#0d093d 987.5px,#010103 989.5px,#000 990.5px)"></i>
<i style="background:linear-gradient(90deg,#000 288.5px,#000001 289.5px,#0c093a 291.5px,#1a127b 294.5px,#2c1fd2 299.5px,#3526ff 302.5px,#7f5cff 339.5px,#cb88ff 370.5px,#ffa5ff 388.5px,#ffe2ff 418.5px,#fff1ff 425.5px,#fef 486.5px,#ffb6ff 506.5px,#ffa5ff 511.5px,#c886ff 520.5px,#c886ff 759.5px,#ffa5ff 768.5px,#ffdfff 787.5px,#ffefff 794.5px,#fff0ff 855.5px,#ffb0ff 885.5px,#ffa5ff 891.5px,#b179ff 919.5px,#6549ff 952.5px,#3526ff 977.5px,#281dc2 981.5px,#1a127b 985.5px,#0c093a 988.5px,#000001 990.5px,#000 991.5px)"></i>
<i style="background:linear-gradient(90deg,#000 288.5px,#050418 289.5px,#0b0836 290.5px,#150f64 292.5px,#241aae 296.5px,#3526fe 301.5px,#7e5bff 338.5px,#c987ff 369.5px,#ffa6ff 388.5px,#ffe3ff 418.5px,#fff2ff 425.5px,#ffefff 486.5px,#ffb7ff 506.5px,#ffa6ff 511.5px,#ef9cff 514.5px,#c987ff 520.5px,#c987ff 759.5px,#fca3ff 767.5px,#faf 769.5px,#ffe3ff 788.5px,#fff0ff 794.5px,#fff1ff 855.5px,#ffb1ff 885.5px,#fda4ff 892.5px,#af79ff 920.5px,#694cff 951.5px,#3526fe 978.5px,#21179d 984.5px,#150f64 987.5px,#0b0836 989.5px,#050418 990.5px,#000 991.5px)"></i>
<i style="background:linear-gradient(90deg,#000 287.5px,#040314 288.5px,#0a0732 289.5px,#140e61 291.5px,#241aab 295.5px,#3425fb 300.5px,#3828ff 302.5px,#825eff 339.5px,#cd89ff 370.5px,#ffa5ff 387.5px,#ffe2ff 417.5px,#fff3ff 425.5px,#fff0ff 486.5px,#ffb8ff 506.5px,#fea4ff 512.5px,#cb88ff 520.5px,#cb88ff 759.5px,#fea4ff 767.5px,#ffdeff 786.5px,#fff1ff 794.5px,#fff2ff 855.5px,#ffb4ff 884.5px,#ffa5ff 892.5px,#b179ff 920.5px,#6448ff 954.5px,#3627ff 978.5px,#3425fb 979.5px,#20179a 985.5px,#140e61 988.5px,#0a0732 990.5px,#040314 991.5px,#000 992.5px)"></i>
<i style="background:linear-gradient(90deg,#000 286.5px,#030210 287.5px,#0a072e 288.5px,#130e5e 290.5px,#2319a8 294.5px,#3425f8 299.5px,#3627ff 300.5px,#7f5cff 337.5px,#c987ff 368.5px,#ffa6ff 387.5px,#ffe2ff 417.5px,#fff4ff 425.5px,#fff2ff 486.5px,#ffbaff 506.5px,#ffa5ff 512.5px,#cd89ff 520.5px,#cd89ff 759.5px,#ffa5ff 767.5px,#ffe0ff 786.5px,#fff2ff 794.5px,#fff3ff 855.5px,#ffb4ff 884.5px,#fda4ff 893.5px,#b079ff 921.5px,#6549ff 954.5px,#3627ff 979.5px,#3425f8 980.5px,#1f1797 986.5px,#130e5e 989.5px,#0a072e 991.5px,#030210 992.5px,#000 993.5px)"></i>
<i style="background:linear-gradient(90deg,#000 285.5px,#02020b 286.5px,#09062b 287.5px,#130d5a 289.5px,#2219a6 293.5px,#3325f5 298.5px,#3626ff 299.5px,#7e5bff 336.5px,#c886ff 367.5px,#ffa6ff 387.5px,#ffe3ff 417.5px,#fff5ff 425.5px,#fff3ff 486.5px,#fbf 506.5px,#ffa7ff 512.5px,#ef9cff 515.5px,#cf8aff 520.5px,#cf8aff 759.5px,#fca3ff 766.5px,#faf 768.5px,#ffe4ff 787.5px,#fff3ff 794.5px,#fff4ff 855.5px,#ffb5ff 884.5px,#fea5ff 893.5px,#b179ff 921.5px,#674aff 954.5px,#3626ff 980.5px,#3325f5 981.5px,#1f1694 987.5px,#130d5a 990.5px,#09062b 992.5px,#02020b 993.5px,#000 994.5px)"></i>
<i style="background:linear-gradient(90deg,#000 284.5px,#010106 285.5px,#080627 286.5px,#120d57 288.5px,#1e1691 291.5px,#2f22e3 296.5px,#3526ff 298.5px,#7d5bff 335.5px,#c987ff 367.5px,#ffa5ff 386.5px,#ffe4ff 417.5px,#fff6ff 425.5px,#fff4ff 486.5px,#ffbfff 505.5px,#fea4ff 513.5px,#d18bff 520.5px,#d08bff 758.5px,#d18bff 759.5px,#fea4ff 766.5px,#fdf 784.5px,#fff4ff 793.5px,#fff5ff 855.5px,#ffb6ff 884.5px,#ffa5ff 893.5px,#ad77ff 923.5px,#6247ff 957.5px,#3526ff 981.5px,#2c20d4 984.5px,#1a137f 989.5px,#0d0a41 992.5px,#080627 993.5px,#010106 994.5px,#000 995.5px)"></i>
<i style="background:linear-gradient(90deg,#000 283.5px,#010104 284.5px,#0d093d 286.5px,#1a127c 289.5px,#2b1fd1 294.5px,#3526ff 297.5px,#7e5cff 335.5px,#cb88ff 367.5px,#ffa6ff 386.5px,#ffe5ff 417.5px,#fff7ff 425.5px,#fff5ff 486.5px,#ffc0ff 505.5px,#ffa5ff 513.5px,#d38cff 520.5px,#d18cff 758.5px,#d38cff 759.5px,#ffa5ff 766.5px,#ffdeff 784.5px,#fff5ff 793.5px,#fff5ff 855.5px,#ffb7ff 884.5px,#fea4ff 894.5px,#b17aff 922.5px,#674bff 955.5px,#3526ff 982.5px,#2118a0 988.5px,#161069 991.5px,#0d093d 993.5px,#010104 995.5px,#000 996.5px)"></i>
<i style="background:linear-gradient(90deg,#000 282.5px,#000002 283.5px,#0c093a 285.5px,#191279 288.5px,#2b1fce 293.5px,#3425fc 296.5px,#3828ff 298.5px,#805dff 335.5px,#cc89ff 367.5px,#ffa5ff 385.5px,#ffe3ff 416.5px,#fff8ff 425.5px,#fff6ff 486.5px,#ffc1ff 505.5px,#ffa7ff 513.5px,#ef9cff 516.5px,#d58dff 520.5px,#d38cff 758.5px,#d58dff 759.5px,#fba3ff 765.5px,#faf 767.5px,#ffe4ff 786.5px,#fff6ff 793.5px,#fff6ff 855.5px,#ffb7ff 884.5px,#ffa5ff 894.5px,#b079ff 923.5px,#6549ff 957.5px,#3627ff 982.5px,#3425fc 983.5px,#21179d 989.5px,#150f66 992.5px,#0c093a 994.5px,#000002 996.5px,#000 997.5px)"></i>
<i style="background:linear-gradient(90deg,#000 282.5px,#0b0836 284.5px,#191276 287.5px,#2a1ecb 292.5px,#3425f9 295.5px,#3627ff 296.5px,#7f5cff 334.5px,#cb88ff 366.5px,#ffa6ff 385.5px,#ffe4ff 416.5px,#fff9ff 425.5px,#fff5ff 487.5px,#ffbcff 507.5px,#fda4ff 514.5px,#d68eff 520.5px,#d58dff 758.5px,#d68eff 759.5px,#fda4ff 765.5px,#fdf 783.5px,#fff7ff 793.5px,#fff7ff 855.5px,#ffb8ff 884.5px,#fda4ff 895.5px,#b17aff 923.5px,#664aff 957.5px,#3627ff 983.5px,#3425f9 984.5px,#20179a 990.5px,#140f63 993.5px,#0b0836 995.5px,#000 997.5px)"></i>
<i style="background:linear-gradient(90deg,#000 281.5px,#02020b 282.5px,#09062b 283.5px,#130d59 285.5px,#2218a3 289.5px,#3224f2 294.5px,#3526ff 295.5px,#7e5bff 333.5px,#c987ff 365.5px,#ffa6ff 385.5px,#ffe4ff 416.5px,#fffaff 426.5px,#fff6ff 487.5px,#ffbdff 507.5px,#ffa5ff 514.5px,#d88fff 520.5px,#d58eff 697.5px,#d88fff 759.5px,#ffa5ff 765.5px,#ffdeff 783.5px,#fff8ff 793.5px,#fff9ff 854.5px,#ffb9ff 884.5px,#fea5ff 895.5px,#b27aff 923.5px,#674bff 957.5px,#3526ff 984.5px,#251bb4 989.5px,#17106d 993.5px,#0e0a44 995.5px,#09062b 996.5px,#02020b 997.5px,#000 998.5px)"></i>
<i style="background:linear-gradient(90deg,#000 281.5px,#010106 282.5px,#080626 283.5px,#120d56 285.5px,#1e158f 288.5px,#2f21e0 293.5px,#3526fe 295.5px,#7d5bff 333.5px,#c987ff 365.5px,#ffa6ff 385.5px,#ffe4ff 416.5px,#fffaff 426.5px,#fff6ff 487.5px,#ffbdff 507.5px,#ffa5ff 514.5px,#d88fff 520.5px,#d68eff 526.5px,#d68eff 758.5px,#d88fff 759.5px,#ffa5ff 765.5px,#ffdeff 783.5px,#fff8ff 793.5px,#fff9ff 854.5px,#ffb9ff 884.5px,#fea4ff 895.5px,#b27aff 923.5px,#674aff 957.5px,#3526fe 984.5px,#2118a0 990.5px,#16106a 993.5px,#0d0940 995.5px,#080626 996.5px,#010106 997.5px,#000 998.5px)"></i>
<i style="background:linear-gradient(90deg,#000 281.5px,#000001 282.5px,#070521 283.5px,#0c093c 284.5px,#19127a 287.5px,#2b1fce 292.5px,#3426fc 295.5px,#3828ff 297.5px,#7f5cff 334.5px,#cb88ff 366.5px,#ffa6ff 385.5px,#ffe4ff 416.5px,#fffaff 426.5px,#fff6ff 487.5px,#ffbeff 507.5px,#ffa5ff 514.5px,#d990ff 520.5px,#d68eff 523.5px,#d68eff 758.5px,#d990ff 759.5px,#ffa5ff 765.5px,#ffdfff 783.5px,#fff8ff 793.5px,#fff9ff 854.5px,#ffbaff 883.5px,#fea4ff 895.5px,#b27aff 923.5px,#674aff 957.5px,#3627ff 983.5px,#3426fc 984.5px,#21189e 990.5px,#150f67 993.5px,#0c093c 995.5px,#070521 996.5px,#000001 997.5px,#000 998.5px)"></i>
<i style="background:linear-gradient(90deg,#000 282.5px,#0c0838 284.5px,#191277 287.5px,#2a1ecc 292.5px,#3425f9 295.5px,#3627ff 296.5px,#7f5cff 334.5px,#cb88ff 366.5px,#ffa6ff 385.5px,#ffe4ff 416.5px,#fffaff 426.5px,#fff7ff 487.5px,#ffbeff 507.5px,#ffa6ff 514.5px,#d990ff 520.5px,#d68eff 522.5px,#d68eff 758.5px,#e094ff 760.5px,#ffa6ff 765.5px,#ffdfff 783.5px,#fff8ff 793.5px,#fff9ff 854.5px,#ffbaff 883.5px,#fda4ff 895.5px,#b17aff 923.5px,#664aff 957.5px,#3627ff 983.5px,#3425f9 984.5px,#20179b 990.5px,#150f64 993.5px,#0c0838 995.5px,#000 997.5px)"></i>
<i style="background:linear-gradient(90deg,#000 282.5px,#050316 283.5px,#0b0834 284.5px,#140e60 286.5px,#2319a9 290.5px,#3325f7 295.5px,#3627ff 296.5px,#7f5cff 334.5px,#cb88ff 366.5px,#ffa6ff 385.5px,#ffe4ff 416.5px,#fffaff 426.5px,#fff7ff 487.5px,#ffbeff 507.5px,#ffa6ff 514.5px,#da90ff 520.5px,#d68eff 522.5px,#d68eff 758.5px,#e094ff 760.5px,#ffa6ff 765.5px,#ffdfff 783.5px,#fff8ff 793.5px,#fff9ff 854.5px,#ffbaff 883.5px,#fda4ff 895.5px,#b17aff 923.5px,#664aff 957.5px,#3627ff 983.5px,#3325f7 984.5px,#201798 990.5px,#140e60 993.5px,#0b0834 995.5px,#050316 996.5px,#000 997.5px)"></i>
<i style="background:linear-gradient(90deg,#000 282.5px,#030210 283.5px,#0a072f 284.5px,#130e5d 286.5px,#2319a7 290.5px,#3324f5 295.5px,#3626ff 296.5px,#7f5cff 334.5px,#ca88ff 366.5px,#ffa5ff 385.5px,#ffe4ff 416.5px,#fffaff 426.5px,#fff7ff 487.5px,#ffbeff 507.5px,#ffa6ff 514.5px,#e194ff 519.5px,#d68eff 521.5px,#d68eff 758.5px,#e798ff 761.5px,#ffa6ff 765.5px,#ffdfff 783.5px,#fff8ff 793.5px,#fff9ff 854.5px,#ffbaff 883.5px,#fda4ff 895.5px,#b179ff 923.5px,#684bff 956.5px,#3626ff 983.5px,#3324f5 984.5px,#1f1695 990.5px,#130e5d 993.5px,#0a072f 995.5px,#030210 996.5px,#000 997.5px)"></i>
<i style="background:linear-gradient(90deg,#000 282.5px,#02020b 283.5px,#09062b 284.5px,#130d5a 286.5px,#2218a4 290.5px,#3224f2 295.5px,#3526ff 296.5px,#7e5cff 334.5px,#ca87ff 366.5px,#ffa5ff 385.5px,#ffe3ff 416.5px,#fffaff 426.5px,#fff7ff 487.5px,#ffbfff 507.5px,#ffa6ff 514.5px,#ee9cff 517.5px,#d68eff 521.5px,#d68eff 758.5px,#fba3ff 764.5px,#faf 766.5px,#ffe2ff 784.5px,#fff8ff 793.5px,#fff9ff 854.5px,#ffbaff 883.5px,#ffa5ff 894.5px,#ae78ff 924.5px,#674bff 956.5px,#3526ff 983.5px,#2c20d4 986.5px,#1b1381 991.5px,#0e0a44 994.5px,#09062b 995.5px,#02020b 996.5px,#000 997.5px)"></i>
<i style="background:linear-gradient(90deg,#000 282.5px,#010106 283.5px,#080626 284.5px,#120d56 286.5px,#1e1590 289.5px,#2f22e1 294.5px,#3526ff 296.5px,#7e5bff 334.5px,#ca87ff 366.5px,#ffa5ff 385.5px,#ffe3ff 416.5px,#fffaff 426.5px,#fff8ff 487.5px,#ffbfff 507.5px,#ffa7ff 514.5px,#f5a0ff 516.5px,#d68eff 521.5px,#d68eff 758.5px,#fca3ff 764.5px,#faf 766.5px,#ffe3ff 784.5px,#fff8ff 793.5px,#fff8ff 854.5px,#ffb9ff 883.5px,#ffa5ff 894.5px,#b079ff 923.5px,#6549ff 957.5px,#3526ff 983.5px,#2118a1 989.5px,#16106b 992.5px,#0d0a40 994.5px,#080626 995.5px,#010106 996.5px,#000 997.5px)"></i>
<i style="background:linear-gradient(90deg,#000 282.5px,#000001 283.5px,#070521 284.5px,#0c093c 285.5px,#19127b 288.5px,#2b1fcf 293.5px,#3526fd 296.5px,#3f2dff 302.5px,#8963ff 339.5px,#d48dff 370.5px,#ffa5ff 385.5px,#ffe3ff 416.5px,#fffaff 426.5px,#fff8ff 487.5px,#ffbfff 507.5px,#ffa7ff 514.5px,#f6a0ff 516.5px,#d68eff 521.5px,#d68eff 758.5px,#fca3ff 764.5px,#ffaeff 767.5px,#ffe8ff 786.5px,#fff8ff 793.5px,#fff8ff 854.5px,#ffb9ff 883.5px,#ffa5ff 894.5px,#b27aff 922.5px,#674aff 956.5px,#3627ff 982.5px,#3526fd 983.5px,#21189e 989.5px,#150f67 992.5px,#0c093c 994.5px,#070521 995.5px,#000001 996.5px,#000 997.5px)"></i>
<i style="background:linear-gradient(90deg,#000 283.5px,#0c0838 285.5px,#191278 288.5px,#2b1fcd 293.5px,#3425fa 296.5px,#3627ff 297.5px,#7d5bff 334.5px,#c987ff 366.5px,#ffa5ff 385.5px,#ffe3ff 416.5px,#fffaff 426.5px,#fff8ff 487.5px,#ffc2ff 506.5px,#ffa7ff 514.5px,#f6a0ff 516.5px,#d68eff 521.5px,#d68eff 758.5px,#fda4ff 764.5px,#ffb5ff 769.5px,#fef 788.5px,#fff8ff 793.5px,#fff8ff 854.5px,#ffb9ff 883.5px,#ffa5ff 894.5px,#b27aff 922.5px,#674aff 956.5px,#3627ff 982.5px,#3425fa 983.5px,#20179c 989.5px,#150f64 992.5px,#0c0838 994.5px,#000 996.5px)"></i>
<i style="background:linear-gradient(90deg,#000 283.5px,#050316 284.5px,#0b0834 285.5px,#140e61 287.5px,#2319aa 291.5px,#3425f8 296.5px,#3627ff 297.5px,#7d5bff 334.5px,#c987ff 366.5px,#fea5ff 385.5px,#ffe3ff 416.5px,#fffaff 426.5px,#fff8ff 487.5px,#ffc3ff 506.5px,#fda4ff 515.5px,#d78fff 521.5px,#d78fff 758.5px,#fda4ff 764.5px,#ffdeff 782.5px,#fff8ff 792.5px,#fffaff 853.5px,#ffb9ff 883.5px,#fea5ff 894.5px,#b27aff 922.5px,#664aff 956.5px,#3627ff 982.5px,#3425f8 983.5px,#201799 989.5px,#140e61 992.5px,#0b0834 994.5px,#050316 995.5px,#000 996.5px)"></i>
<i style="background:linear-gradient(90deg,#000 283.5px,#030210 284.5px,#0a072f 285.5px,#130e5e 287.5px,#2319a7 291.5px,#3325f6 296.5px,#3626ff 297.5px,#7d5bff 334.5px,#c987ff 366.5px,#ffa6ff 386.5px,#ffe5ff 417.5px,#fffaff 427.5px,#fff8ff 487.5px,#ffc3ff 506.5px,#fda4ff 515.5px,#d78fff 521.5px,#d78fff 758.5px,#fda4ff 764.5px,#ffdeff 782.5px,#fff8ff 792.5px,#fffaff 853.5px,#ffb9ff 883.5px,#fea4ff 894.5px,#b27aff 922.5px,#664aff 956.5px,#3626ff 982.5px,#3325f6 983.5px,#1f1696 989.5px,#130e5e 992.5px,#0a072f 994.5px,#030210 995.5px,#000 996.5px)"></i>
<i style="background:linear-gradient(90deg,#000 283.5px,#02020b 284.5px,#09062b 285.5px,#130d5a 287.5px,#2218a4 291.5px,#3324f3 296.5px,#3526ff 297.5px,#7d5aff 334.5px,#c886ff 366.5px,#ffa6ff 386.5px,#ffe5ff 417.5px,#fffaff 427.5px,#fff8ff 487.5px,#ffc3ff 506.5px,#fea4ff 515.5px,#d78fff 521.5px,#d78fff 758.5px,#fea4ff 764.5px,#ffdeff 782.5px,#fff8ff 792.5px,#fffaff 853.5px,#ffbaff 882.5px,#fea4ff 894.5px,#b17aff 922.5px,#664aff 956.5px,#3526ff 982.5px,#2f22e4 984.5px,#1f1693 989.5px,#130d5a 992.5px,#09062b 994.5px,#02020b 995.5px,#000 996.5px)"></i>
<i style="background:linear-gradient(90deg,#000 283.5px,#010106 284.5px,#080626 285.5px,#120d57 287.5px,#1e1590 290.5px,#2f22e2 295.5px,#3526ff 297.5px,#7c5aff 334.5px,#c886ff 366.5px,#ffa6ff 386.5px,#ffe4ff 417.5px,#fffaff 427.5px,#fff6ff 488.5px,#ffbdff 508.5px,#fea5ff 515.5px,#d78fff 521.5px,#d78fff 758.5px,#fea5ff 764.5px,#ffdfff 782.5px,#fff8ff 792.5px,#fffaff 853.5px,#ffbaff 882.5px,#fda4ff 894.5px,#b179ff 922.5px,#684bff 955.5px,#3526ff 982.5px,#251bb2 987.5px,#16106b 991.5px,#0d0a40 993.5px,#080626 994.5px,#010106 995.5px,#000 996.5px)"></i>
<i style="background:linear-gradient(90deg,#000 283.5px,#000001 284.5px,#070521 285.5px,#0d093c 286.5px,#1a127b 289.5px,#2b1fd0 294.5px,#3526fe 297.5px,#7e5cff 335.5px,#ca88ff 367.5px,#ffa6ff 386.5px,#ffe4ff 417.5px,#fffaff 427.5px,#fff7ff 488.5px,#ffbdff 508.5px,#ffa5ff 515.5px,#d88fff 521.5px,#d78eff 757.5px,#d88fff 758.5px,#ffa5ff 764.5px,#ffdfff 782.5px,#fff9ff 792.5px,#fffaff 853.5px,#ffbaff 882.5px,#fda4ff 894.5px,#b179ff 922.5px,#674bff 955.5px,#3526fe 982.5px,#21189f 988.5px,#160f68 991.5px,#0d093c 993.5px,#070521 994.5px,#000001 995.5px,#000 996.5px)"></i>
<i style="background:linear-gradient(90deg,#000 284.5px,#0c0838 286.5px,#191278 289.5px,#2b1fcd 294.5px,#3425fb 297.5px,#3828ff 299.5px,#805dff 336.5px,#ca87ff 367.5px,#ffa6ff 386.5px,#ffe4ff 417.5px,#fffaff 427.5px,#fff7ff 488.5px,#ffbdff 508.5px,#ffa5ff 515.5px,#d88fff 521.5px,#d78eff 757.5px,#d88fff 758.5px,#ffa5ff 764.5px,#ffdfff 782.5px,#fff9ff 792.5px,#fff9ff 853.5px,#ffbaff 882.5px,#fda4ff 894.5px,#b079ff 922.5px,#674bff 955.5px,#3627ff 981.5px,#3425fb 982.5px,#20179c 988.5px,#150f64 991.5px,#0c0838 993.5px,#000 995.5px)"></i>
<i style="background:linear-gradient(90deg,#000 284.5px,#050317 285.5px,#0b0834 286.5px,#140e61 288.5px,#2319aa 292.5px,#3425f9 297.5px,#3627ff 298.5px,#7e5bff 335.5px,#ca87ff 367.5px,#ffa5ff 386.5px,#ffe4ff 417.5px,#fffbff 427.5px,#fff7ff 488.5px,#ffbeff 508.5px,#ffa5ff 515.5px,#d88fff 521.5px,#d78fff 757.5px,#d88fff 758.5px,#ffa5ff 764.5px,#ffdfff 782.5px,#fff9ff 792.5px,#fff9ff 853.5px,#ffbaff 882.5px,#ffa5ff 893.5px,#ae78ff 923.5px,#6146ff 958.5px,#3627ff 981.5px,#3425f9 982.5px,#201799 988.5px,#140e61 991.5px,#0b0834 993.5px,#050317 994.5px,#000 995.5px)"></i>
<i style="background:linear-gradient(90deg,#000 284.5px,#030210 285.5px,#0a0730 286.5px,#140e5e 288.5px,#2319a8 292.5px,#3325f6 297.5px,#3627ff 298.5px,#7d5bff 335.5px,#c987ff 367.5px,#ffa5ff 386.5px,#ffe4ff 417.5px,#fffbff 427.5px,#fff7ff 488.5px,#ffbeff 508.5px,#ffa6ff 515.5px,#d88fff 521.5px,#d78fff 756.5px,#d88fff 758.5px,#ffa6ff 764.5px,#ffe0ff 782.5px,#fff9ff 792.5px,#fff9ff 853.5px,#ffbaff 882.5px,#ffa5ff 893.5px,#b079ff 922.5px,#6449ff 956.5px,#3627ff 981.5px,#3325f6 982.5px,#1f1697 988.5px,#140e5e 991.5px,#0a0730 993.5px,#030210 994.5px,#000 995.5px)"></i>
<i style="background:linear-gradient(90deg,#000 284.5px,#02020b 285.5px,#09062b 286.5px,#130d5b 288.5px,#2219a5 292.5px,#3324f4 297.5px,#3526ff 298.5px,#7d5bff 335.5px,#c987ff 367.5px,#ffa5ff 386.5px,#ffe3ff 417.5px,#fffbff 427.5px,#fff8ff 488.5px,#ffbeff 508.5px,#ffa6ff 515.5px,#d990ff 521.5px,#d68eff 684.5px,#d990ff 758.5px,#ffa6ff 764.5px,#ffe0ff 782.5px,#fff9ff 792.5px,#fff9ff 853.5px,#ffb9ff 882.5px,#ffa5ff 893.5px,#b27aff 921.5px,#664aff 955.5px,#3526ff 981.5px,#3324f4 982.5px,#1f1694 988.5px,#130d5b 991.5px,#09062b 993.5px,#02020b 994.5px,#000 995.5px)"></i>
<i style="background:linear-gradient(90deg,#000 284.5px,#010106 285.5px,#080627 286.5px,#120d57 288.5px,#1e1691 291.5px,#2f22e3 296.5px,#3526ff 298.5px,#7d5aff 335.5px,#c987ff 367.5px,#ffa5ff 386.5px,#ffe3ff 417.5px,#fffbff 427.5px,#fff8ff 488.5px,#ffbeff 508.5px,#ffa6ff 515.5px,#d990ff 521.5px,#d78fff 527.5px,#d78fff 757.5px,#d990ff 758.5px,#ffa6ff 764.5px,#ffe0ff 782.5px,#fff9ff 792.5px,#fff9ff 853.5px,#ffb9ff 882.5px,#ffa5ff 893.5px,#b27aff 921.5px,#664aff 955.5px,#3526ff 981.5px,#291dc3 985.5px,#1a137f 989.5px,#0d0a41 992.5px,#080627 993.5px,#010106 994.5px,#000 995.5px)"></i>
<i style="background:linear-gradient(90deg,#000 284.5px,#000001 285.5px,#070521 286.5px,#0d093d 287.5px,#1a127c 290.5px,#2b1fd1 295.5px,#3526fe 298.5px,#7c5aff 335.5px,#c987ff 367.5px,#fea5ff 386.5px,#ffe3ff 417.5px,#fffbff 427.5px,#fff8ff 488.5px,#ffbfff 508.5px,#ffa6ff 515.5px,#e798ff 519.5px,#da90ff 521.5px,#d78fff 524.5px,#d78fff 757.5px,#da90ff 758.5px,#fba3ff 763.5px,#faf 765.5px,#ffe3ff 783.5px,#fff9ff 792.5px,#fffbff 852.5px,#ffb9ff 882.5px,#fea5ff 893.5px,#b27aff 921.5px,#684bff 954.5px,#3526fe 981.5px,#21189f 987.5px,#161068 990.5px,#0d093d 992.5px,#070521 993.5px,#000001 994.5px,#000 995.5px)"></i>
<i style="background:linear-gradient(90deg,#000 285.5px,#0c0839 287.5px,#191278 290.5px,#2b1fce 295.5px,#3426fc 298.5px,#3a2aff 301.5px,#835fff 338.5px,#ce89ff 369.5px,#ffa6ff 387.5px,#ffe3ff 417.5px,#fffbff 428.5px,#fff8ff 488.5px,#ffbfff 508.5px,#ffa7ff 515.5px,#ee9cff 518.5px,#da90ff 521.5px,#d78fff 523.5px,#d78fff 757.5px,#e194ff 759.5px,#fba3ff 763.5px,#faf 765.5px,#ffe3ff 783.5px,#fff9ff 792.5px,#fffbff 852.5px,#ffb9ff 882.5px,#fea5ff 893.5px,#b17aff 921.5px,#674bff 954.5px,#3627ff 980.5px,#3426fc 981.5px,#21179d 987.5px,#150f65 990.5px,#0c0839 992.5px,#000 994.5px)"></i>
<i style="background:linear-gradient(90deg,#000 285.5px,#050317 286.5px,#0b0834 287.5px,#140f62 289.5px,#2419ab 293.5px,#3425fa 298.5px,#3627ff 299.5px,#7e5bff 336.5px,#c886ff 367.5px,#ffa6ff 387.5px,#ffe3ff 417.5px,#fffbff 428.5px,#fff9ff 488.5px,#ffc2ff 507.5px,#ffa7ff 515.5px,#f5a0ff 517.5px,#db91ff 521.5px,#d78fff 523.5px,#d78fff 757.5px,#e195ff 759.5px,#fca3ff 763.5px,#ffabff 765.5px,#ffe4ff 783.5px,#fff9ff 792.5px,#fffbff 852.5px,#fbf 881.5px,#fea4ff 893.5px,#b179ff 921.5px,#674bff 954.5px,#3627ff 980.5px,#3425fa 981.5px,#20179a 987.5px,#140f62 990.5px,#0b0834 992.5px,#050317 993.5px,#000 994.5px)"></i>
<i style="background:linear-gradient(90deg,#000 285.5px,#030211 286.5px,#0a0730 287.5px,#140e5e 289.5px,#2319a8 293.5px,#3325f7 298.5px,#3627ff 299.5px,#7e5bff 336.5px,#c886ff 367.5px,#ffa6ff 387.5px,#ffe3ff 417.5px,#fffbff 428.5px,#fff9ff 488.5px,#ffc3ff 507.5px,#ffa7ff 515.5px,#f6a0ff 517.5px,#db91ff 521.5px,#d78fff 523.5px,#d78fff 757.5px,#e999ff 760.5px,#fca4ff 763.5px,#ffaeff 766.5px,#ffe7ff 784.5px,#fff9ff 792.5px,#fffaff 852.5px,#ffbaff 881.5px,#fea4ff 893.5px,#b179ff 921.5px,#674aff 954.5px,#3627ff 980.5px,#3325f7 981.5px,#1f1797 987.5px,#140e5e 990.5px,#0a0730 992.5px,#030211 993.5px,#000 994.5px)"></i>
<i style="background:linear-gradient(90deg,#000 285.5px,#02020b 286.5px,#09062c 287.5px,#130e5b 289.5px,#2219a6 293.5px,#3325f5 298.5px,#3626ff 299.5px,#7e5bff 336.5px,#c786ff 367.5px,#ffa6ff 387.5px,#ffe2ff 417.5px,#fffbff 428.5px,#fff9ff 488.5px,#ffc3ff 507.5px,#fda4ff 516.5px,#d78fff 522.5px,#d78fff 757.5px,#fda4ff 763.5px,#ffc3ff 772.5px,#fff9ff 791.5px,#fffaff 852.5px,#ffbcff 880.5px,#fda4ff 893.5px,#b079ff 921.5px,#6449ff 955.5px,#3626ff 980.5px,#3325f5 981.5px,#1f1694 987.5px,#130e5b 990.5px,#09062c 992.5px,#02020b 993.5px,#000 994.5px)"></i>
<i style="background:linear-gradient(90deg,#000 285.5px,#010106 286.5px,#080627 287.5px,#120d57 289.5px,#1e1691 292.5px,#2f22e3 297.5px,#3526ff 299.5px,#7d5bff 336.5px,#c786ff 367.5px,#ffa6ff 387.5px,#ffe2ff 417.5px,#fffbff 428.5px,#fff9ff 488.5px,#ffc3ff 507.5px,#fda4ff 516.5px,#d78fff 522.5px,#d78fff 757.5px,#fda4ff 763.5px,#ffdfff 781.5px,#fff9ff 791.5px,#fffaff 852.5px,#ffbcff 880.5px,#fda4ff 893.5px,#b079ff 921.5px,#6449ff 955.5px,#3526ff 980.5px,#2c20d4 983.5px,#1a137f 988.5px,#0d0a41 991.5px,#080627 992.5px,#010106 993.5px,#000 994.5px)"></i>
<i style="background:linear-gradient(90deg,#000 285.5px,#000002 286.5px,#070522 287.5px,#0d093d 288.5px,#1a127c 291.5px,#2c1fd1 296.5px,#3526ff 299.5px,#7d5bff 336.5px,#c987ff 368.5px,#ffa5ff 387.5px,#ffe2ff 417.5px,#fffbff 428.5px,#fff9ff 488.5px,#ffc4ff 507.5px,#fea4ff 516.5px,#d78fff 522.5px,#d78fff 757.5px,#fea4ff 763.5px,#ffdfff 781.5px,#fff9ff 791.5px,#fffaff 852.5px,#ffbcff 880.5px,#ffa5ff 892.5px,#ad77ff 922.5px,#6247ff 956.5px,#3526ff 980.5px,#2118a0 986.5px,#161069 989.5px,#0d093d 991.5px,#070522 992.5px,#000002 993.5px,#000 994.5px)"></i>
<i style="background:linear-gradient(90deg,#000 286.5px,#0c0839 288.5px,#191279 291.5px,#2b1fcf 296.5px,#3526fd 299.5px,#7f5cff 337.5px,#c987ff 368.5px,#ffa5ff 387.5px,#ffe2ff 417.5px,#fffbff 428.5px,#fff9ff 488.5px,#ffc7ff 506.5px,#fea4ff 516.5px,#d78fff 522.5px,#d78fff 757.5px,#fea4ff 763.5px,#ffdfff 781.5px,#fff9ff 791.5px,#fffaff 852.5px,#ffbcff 880.5px,#ffa5ff 892.5px,#b079ff 921.5px,#6448ff 955.5px,#3526fd 980.5px,#21179d 986.5px,#150f65 989.5px,#0c0839 991.5px,#000 993.5px)"></i>
<i style="background:linear-gradient(90deg,#000 286.5px,#050317 287.5px,#0b0835 288.5px,#140f62 290.5px,#241aac 294.5px,#3425fb 299.5px,#3627ff 300.5px,#7f5cff 337.5px,#c987ff 368.5px,#ffa5ff 387.5px,#ffe2ff 417.5px,#fffbff 428.5px,#fff8ff 489.5px,#ffc1ff 508.5px,#ffa5ff 516.5px,#d88fff 522.5px,#d88fff 757.5px,#ffa5ff 763.5px,#ffdfff 781.5px,#fffaff 791.5px,#fffaff 852.5px,#ffbcff 880.5px,#ffa5ff 892.5px,#b27aff 920.5px,#674bff 953.5px,#3627ff 979.5px,#3425fb 980.5px,#20179a 986.5px,#140f62 989.5px,#0b0835 991.5px,#050317 992.5px,#000 993.5px)"></i>
<i style="background:linear-gradient(90deg,#000 286.5px,#030311 287.5px,#0a0730 288.5px,#140e5f 290.5px,#2319a9 294.5px,#3425f8 299.5px,#3627ff 300.5px,#7e5cff 337.5px,#c987ff 368.5px,#ffa5ff 387.5px,#ffe1ff 417.5px,#fffbff 428.5px,#fff8ff 489.5px,#ffc1ff 508.5px,#ffa5ff 516.5px,#d88fff 522.5px,#d88fff 757.5px,#ffa5ff 763.5px,#ffe0ff 781.5px,#fffaff 791.5px,#fffbff 851.5px,#ffb9ff 881.5px,#ffa5ff 892.5px,#b17aff 920.5px,#694cff 952.5px,#3627ff 979.5px,#3425f8 980.5px,#201798 986.5px,#140e5f 989.5px,#0a0730 991.5px,#030311 992.5px,#000 993.5px)"></i>
<i style="background:linear-gradient(90deg,#000 286.5px,#02020b 287.5px,#09072c 288.5px,#130e5b 290.5px,#2319a6 294.5px,#3325f6 299.5px,#3627ff 300.5px,#7e5bff 337.5px,#c886ff 368.5px,#ffa5ff 387.5px,#ffe1ff 417.5px,#fffbff 428.5px,#fff8ff 489.5px,#ffc1ff 508.5px,#ffa5ff 516.5px,#d88fff 522.5px,#d88fff 757.5px,#ffa5ff 763.5px,#ffe0ff 781.5px,#fffaff 791.5px,#fffbff 851.5px,#ffb9ff 881.5px,#ffa5ff 892.5px,#b17aff 920.5px,#674aff 953.5px,#3627ff 979.5px,#3325f6 980.5px,#1f1695 986.5px,#130e5b 989.5px,#09072c 991.5px,#02020b 992.5px,#000 993.5px)"></i>
<i style="background:linear-gradient(90deg,#000 286.5px,#010106 287.5px,#080627 288.5px,#120d58 290.5px,#1e1692 293.5px,#2f22e4 298.5px,#3526ff 300.5px,#7e5bff 337.5px,#c886ff 368.5px,#ffa6ff 388.5px,#ffe3ff 418.5px,#fffcff 429.5px,#fff8ff 489.5px,#ffc2ff 508.5px,#ffa5ff 516.5px,#d88fff 522.5px,#d88fff 757.5px,#ffa5ff 763.5px,#ffe0ff 781.5px,#fffaff 791.5px,#fffbff 851.5px,#fbf 880.5px,#fea5ff 892.5px,#b179ff 920.5px,#674aff 953.5px,#3526ff 979.5px,#2f22e4 981.5px,#1e1692 986.5px,#120d58 989.5px,#080627 991.5px,#010106 992.5px,#000 993.5px)"></i>
<i style="background:linear-gradient(90deg,#000 286.5px,#000002 287.5px,#070522 288.5px,#0d093d 289.5px,#1a137c 292.5px,#2c1fd2 297.5px,#3526ff 300.5px,#7d5bff 337.5px,#c886ff 368.5px,#ffa6ff 388.5px,#ffe3ff 418.5px,#fffcff 429.5px,#fff9ff 489.5px,#ffc2ff 508.5px,#ffa6ff 516.5px,#d990ff 522.5px,#d88fff 756.5px,#d990ff 757.5px,#ffa6ff 763.5px,#ffe0ff 781.5px,#fffaff 791.5px,#fffbff 851.5px,#fbf 880.5px,#fea4ff 892.5px,#b179ff 920.5px,#6449ff 954.5px,#3526ff 979.5px,#251ab2 984.5px,#161069 988.5px,#0d093d 990.5px,#070522 991.5px,#000002 992.5px,#000 993.5px)"></i>
<i style="background:linear-gradient(90deg,#000 287.5px,#0c0939 289.5px,#191279 292.5px,#2b1fd0 297.5px,#3526fe 300.5px,#7d5bff 337.5px,#c786ff 368.5px,#ffa6ff 388.5px,#ffe3ff 418.5px,#fffcff 429.5px,#fff9ff 489.5px,#ffc2ff 508.5px,#ffa6ff 516.5px,#d990ff 522.5px,#d88fff 756.5px,#d990ff 757.5px,#ffa6ff 763.5px,#ffe1ff 781.5px,#fffaff 791.5px,#fffbff 851.5px,#ffbdff 879.5px,#fea4ff 892.5px,#b079ff 920.5px,#6448ff 954.5px,#3526fe 979.5px,#21189e 985.5px,#150f66 988.5px,#0c0939 990.5px,#000 992.5px)"></i>
<i style="background:linear-gradient(90deg,#000 287.5px,#050317 288.5px,#0b0835 289.5px,#140f62 291.5px,#241aac 295.5px,#3425fb 300.5px,#3828ff 302.5px,#815eff 339.5px,#cd89ff 370.5px,#ffa6ff 388.5px,#ffe3ff 418.5px,#fffcff 429.5px,#fff9ff 489.5px,#ffc2ff 508.5px,#ffa6ff 516.5px,#e094ff 521.5px,#d990ff 522.5px,#d88fff 756.5px,#d990ff 757.5px,#fba3ff 762.5px,#ffa6ff 763.5px,#ffe1ff 781.5px,#fffaff 791.5px,#fffbff 851.5px,#ffbcff 879.5px,#fda4ff 892.5px,#b079ff 920.5px,#6448ff 954.5px,#3627ff 978.5px,#3425fb 979.5px,#20179b 985.5px,#140f62 988.5px,#0b0835 990.5px,#050317 991.5px,#000 992.5px)"></i>
<i style="background:linear-gradient(90deg,#000 287.5px,#040311 288.5px,#0a0730 289.5px,#140e5f 291.5px,#2319aa 295.5px,#3425f9 300.5px,#3627ff 301.5px,#7f5cff 338.5px,#ca87ff 369.5px,#ffa6ff 388.5px,#ffe3ff 418.5px,#fffcff 429.5px,#fff9ff 489.5px,#ffc3ff 508.5px,#ffa7ff 516.5px,#ee9cff 519.5px,#d990ff 522.5px,#d88fff 754.5px,#d990ff 757.5px,#fba3ff 762.5px,#faf 764.5px,#ffe4ff 782.5px,#fffaff 791.5px,#fffbff 851.5px,#ffbcff 879.5px,#fda4ff 892.5px,#b079ff 920.5px,#6549ff 953.5px,#3627ff 978.5px,#3425f9 979.5px,#201798 985.5px,#140e5f 988.5px,#0a0730 990.5px,#040311 991.5px,#000 992.5px)"></i>
<i style="background:linear-gradient(90deg,#000 287.5px,#02020b 288.5px,#09072c 289.5px,#130e5c 291.5px,#2319a7 295.5px,#3325f7 300.5px,#3627ff 301.5px,#7e5cff 338.5px,#c987ff 369.5px,#ffa5ff 388.5px,#ffe2ff 418.5px,#fffcff 429.5px,#fffaff 489.5px,#ffc3ff 508.5px,#ffa7ff 516.5px,#f59fff 518.5px,#da90ff 522.5px,#d78fff 645.5px,#da90ff 757.5px,#fca3ff 762.5px,#faf 764.5px,#ffe4ff 782.5px,#fffaff 791.5px,#fffbff 851.5px,#ffbcff 879.5px,#ffa5ff 891.5px,#aa76ff 922.5px,#6146ff 955.5px,#3627ff 978.5px,#3325f7 979.5px,#1f1695 985.5px,#130e5c 988.5px,#09072c 990.5px,#02020b 991.5px,#000 992.5px)"></i>
<i style="background:linear-gradient(90deg,#000 287.5px,#010107 288.5px,#080627 289.5px,#120d58 291.5px,#1e1692 294.5px,#3022e5 299.5px,#3324f4 300.5px,#3626ff 301.5px,#7e5cff 338.5px,#c987ff 369.5px,#ffa5ff 388.5px,#ffe2ff 418.5px,#fffcff 429.5px,#fffaff 489.5px,#ffc3ff 508.5px,#ffa7ff 516.5px,#f6a0ff 518.5px,#da91ff 522.5px,#d88fff 528.5px,#d88fff 756.5px,#da91ff 757.5px,#fca3ff 762.5px,#ffaeff 765.5px,#ffe7ff 783.5px,#fffaff 791.5px,#fffaff 851.5px,#ffbcff 879.5px,#ffa5ff 891.5px,#ad77ff 921.5px,#674bff 952.5px,#3626ff 978.5px,#3324f4 979.5px,#2218a4 984.5px,#17106d 987.5px,#0e0a41 989.5px,#080627 990.5px,#010107 991.5px,#000 992.5px)"></i>
<i style="background:linear-gradient(90deg,#000 287.5px,#000002 288.5px,#070522 289.5px,#0d093d 290.5px,#1a137d 293.5px,#2c1fd3 298.5px,#3526ff 301.5px,#7e5bff 338.5px,#c987ff 369.5px,#ffa5ff 388.5px,#ffe2ff 418.5px,#fffcff 429.5px,#fffaff 489.5px,#ffc3ff 508.5px,#ffa7ff 516.5px,#fda4ff 517.5px,#db91ff 522.5px,#d88fff 525.5px,#d88fff 756.5px,#db91ff 757.5px,#fda4ff 762.5px,#ffb6ff 767.5px,#fff0ff 786.5px,#fffaff 791.5px,#fffaff 851.5px,#ffbcff 879.5px,#ffa5ff 891.5px,#b17aff 919.5px,#694cff 951.5px,#3526ff 978.5px,#2c1fd3 981.5px,#1a137d 986.5px,#0d093d 989.5px,#070522 990.5px,#000002 991.5px,#000 992.5px)"></i>
<i style="background:linear-gradient(90deg,#000 288.5px,#0c0939 290.5px,#19127a 293.5px,#2b1fd0 298.5px,#3526ff 301.5px,#7e5bff 338.5px,#c887ff 369.5px,#ffa5ff 388.5px,#ffe2ff 418.5px,#fffcff 429.5px,#fffaff 489.5px,#ffc4ff 508.5px,#fda4ff 517.5px,#db91ff 522.5px,#d88fff 524.5px,#d88fff 756.5px,#e295ff 758.5px,#fda4ff 762.5px,#ffdfff 780.5px,#fffaff 790.5px,#fffcff 850.5px,#ffbaff 880.5px,#ffa5ff 891.5px,#b179ff 919.5px,#664aff 952.5px,#3526ff 978.5px,#21189e 984.5px,#150f66 987.5px,#0c0939 989.5px,#000 991.5px)"></i>
<i style="background:linear-gradient(90deg,#000 288.5px,#050317 289.5px,#0b0835 290.5px,#150f63 292.5px,#241aad 296.5px,#3426fc 301.5px,#3c2bff 305.5px,#8460ff 341.5px,#d08bff 372.5px,#ffa5ff 388.5px,#ffe2ff 418.5px,#fffcff 429.5px,#fffaff 489.5px,#ffc7ff 507.5px,#fda4ff 517.5px,#dc91ff 522.5px,#d88fff 524.5px,#d88fff 756.5px,#e395ff 758.5px,#fda4ff 762.5px,#ffe0ff 780.5px,#fffaff 790.5px,#fffcff 850.5px,#ffb9ff 880.5px,#ffa5ff 891.5px,#b179ff 919.5px,#6448ff 953.5px,#3627ff 977.5px,#3426fc 978.5px,#20179c 984.5px,#150f63 987.5px,#0b0835 989.5px,#050317 990.5px,#000 991.5px)"></i>
<i style="background:linear-gradient(90deg,#000 288.5px,#040311 289.5px,#0a0731 290.5px,#140e5f 292.5px,#2319aa 296.5px,#3425fa 301.5px,#3627ff 302.5px,#7f5cff 339.5px,#ca88ff 370.5px,#fea5ff 388.5px,#ffe2ff 418.5px,#fffcff 430.5px,#fffaff 489.5px,#ffc7ff 507.5px,#fea4ff 517.5px,#dc92ff 522.5px,#d88fff 524.5px,#d88fff 756.5px,#ea99ff 759.5px,#fea4ff 762.5px,#ffe0ff 780.5px,#fffaff 790.5px,#fffcff 850.5px,#fbf 879.5px,#fea5ff 891.5px,#b079ff 919.5px,#6448ff 953.5px,#3627ff 977.5px,#3425fa 978.5px,#201799 984.5px,#140e5f 987.5px,#0a0731 989.5px,#040311 990.5px,#000 991.5px)"></i>
<i style="background:linear-gradient(90deg,#000 288.5px,#02020c 289.5px,#09072c 290.5px,#130e5c 292.5px,#2319a7 296.5px,#3325f8 301.5px,#3627ff 302.5px,#7f5cff 339.5px,#ca88ff 370.5px,#ffa6ff 389.5px,#ffe4ff 419.5px,#fffcff 430.5px,#fff9ff 490.5px,#ffc1ff 509.5px,#fea5ff 517.5px,#d88fff 523.5px,#d88fff 756.5px,#fea5ff 762.5px,#ffe0ff 780.5px,#fffaff 790.5px,#fffcff 850.5px,#fbf 879.5px,#fea4ff 891.5px,#b079ff 919.5px,#6348ff 953.5px,#3627ff 977.5px,#3325f8 978.5px,#1f1696 984.5px,#130e5c 987.5px,#09072c 989.5px,#02020c 990.5px,#000 991.5px)"></i>
<i style="background:linear-gradient(90deg,#000 288.5px,#010107 289.5px,#080627 290.5px,#120d58 292.5px,#1f1693 295.5px,#3022e6 300.5px,#3325f5 301.5px,#3626ff 302.5px,#7f5cff 339.5px,#ca87ff 370.5px,#ffa6ff 389.5px,#ffe4ff 419.5px,#fffcff 430.5px,#fff9ff 490.5px,#ffc1ff 509.5px,#ffa5ff 517.5px,#d88fff 523.5px,#d88fff 756.5px,#ffa5ff 762.5px,#ffe0ff 780.5px,#fffbff 790.5px,#fffcff 850.5px,#ffbdff 878.5px,#fea4ff 891.5px,#b079ff 919.5px,#6549ff 952.5px,#3626ff 977.5px,#3325f5 978.5px,#2219a5 983.5px,#17106d 986.5px,#0e0a42 988.5px,#080627 989.5px,#010107 990.5px,#000 991.5px)"></i>
<i style="background:linear-gradient(90deg,#000 288.5px,#000002 289.5px,#070522 290.5px,#0d093e 291.5px,#1a137d 294.5px,#2c20d4 299.5px,#3224f3 301.5px,#3526ff 302.5px,#7e5cff 339.5px,#ca87ff 370.5px,#ffa6ff 389.5px,#ffe3ff 419.5px,#fffcff 430.5px,#fff9ff 490.5px,#ffc2ff 509.5px,#ffa5ff 517.5px,#d88fff 523.5px,#d88fff 756.5px,#ffa5ff 762.5px,#ffe1ff 780.5px,#fffbff 790.5px,#fffcff 850.5px,#ffbdff 878.5px,#fda4ff 891.5px,#b079ff 919.5px,#674bff 951.5px,#3526ff 977.5px,#2f22e3 979.5px,#1e1590 984.5px,#120d55 987.5px,#0d093e 988.5px,#070522 989.5px,#000002 990.5px,#000 991.5px)"></i>
<i style="background:linear-gradient(90deg,#000 289.5px,#0c093a 291.5px,#19127a 294.5px,#2b1fd1 299.5px,#3526ff 302.5px,#7e5bff 339.5px,#c987ff 370.5px,#ffa6ff 389.5px,#ffe3ff 419.5px,#fffcff 430.5px,#fff9ff 490.5px,#ffc2ff 509.5px,#ffa5ff 517.5px,#d990ff 523.5px,#d990ff 756.5px,#ffa5ff 762.5px,#ffe1ff 780.5px,#fffbff 790.5px,#fffbff 850.5px,#ffbcff 878.5px,#fda4ff 891.5px,#af79ff 919.5px,#694cff 950.5px,#3526ff 977.5px,#251ab0 982.5px,#150f66 986.5px,#0c093a 988.5px,#000 990.5px)"></i>
<i style="background:linear-gradient(90deg,#000 289.5px,#050418 290.5px,#0b0835 291.5px,#150f63 293.5px,#241aad 297.5px,#3526fd 302.5px,#7e5bff 339.5px,#c987ff 370.5px,#ffa6ff 389.5px,#ffe3ff 419.5px,#fffdff 430.5px,#fffaff 490.5px,#ffc2ff 509.5px,#ffa6ff 517.5px,#d990ff 523.5px,#d990ff 756.5px,#ffa6ff 762.5px,#ffe1ff 780.5px,#fffbff 790.5px,#fffbff 850.5px,#ffbcff 878.5px,#ffa6ff 890.5px,#aa76ff 921.5px,#6046ff 954.5px,#3526fd 977.5px,#20179c 983.5px,#150f63 986.5px,#0b0835 988.5px,#050418 989.5px,#000 990.5px)"></i>
<i style="background:linear-gradient(90deg,#000 289.5px,#040311 290.5px,#0a0731 291.5px,#140e60 293.5px,#2319ab 297.5px,#3425fb 302.5px,#3627ff 303.5px,#7e5bff 339.5px,#c987ff 370.5px,#ffa5ff 389.5px,#ffe3ff 419.5px,#fffdff 430.5px,#fffaff 490.5px,#ffc2ff 509.5px,#ffa6ff 517.5px,#d990ff 523.5px,#d990ff 756.5px,#ffa6ff 762.5px,#ffe1ff 780.5px,#fffbff 790.5px,#fffbff 850.5px,#ffbcff 878.5px,#ffa5ff 890.5px,#ac77ff 920.5px,#6247ff 953.5px,#3627ff 976.5px,#3425fb 977.5px,#201799 983.5px,#140e60 986.5px,#0a0731 988.5px,#040311 989.5px,#000 990.5px)"></i>
<i style="background:linear-gradient(90deg,#000 289.5px,#02020c 290.5px,#09072c 291.5px,#130e5c 293.5px,#2319a8 297.5px,#3425f9 302.5px,#3627ff 303.5px,#7f5cff 340.5px,#cb88ff 371.5px,#ffa5ff 389.5px,#ffe3ff 419.5px,#fffdff 430.5px,#fffaff 490.5px,#ffc3ff 509.5px,#ffa6ff 517.5px,#d990ff 523.5px,#d990ff 756.5px,#ffa6ff 762.5px,#ffe2ff 780.5px,#fffbff 790.5px,#fffbff 850.5px,#ffbcff 878.5px,#ffa5ff 890.5px,#ae78ff 919.5px,#6247ff 953.5px,#3627ff 976.5px,#3425f9 977.5px,#1f1696 983.5px,#130e5c 986.5px,#09072c 988.5px,#02020c 989.5px,#000 990.5px)"></i>
<i style="background:linear-gradient(90deg,#000 289.5px,#010107 290.5px,#080628 291.5px,#120d59 293.5px,#1f1694 296.5px,#3022e7 301.5px,#3325f6 302.5px,#3627ff 303.5px,#7f5cff 340.5px,#cb88ff 371.5px,#ffa5ff 389.5px,#ffe2ff 419.5px,#fffdff 430.5px,#fffaff 490.5px,#ffc3ff 509.5px,#ffa6ff 517.5px,#ee9bff 520.5px,#da90ff 523.5px,#da90ff 756.5px,#fba3ff 761.5px,#ffa6ff 762.5px,#ffe2ff 780.5px,#fffbff 790.5px,#fffdff 849.5px,#ffbaff 879.5px,#ffa5ff 890.5px,#b179ff 918.5px,#6448ff 952.5px,#3627ff 976.5px,#3325f6 977.5px,#2219a5 982.5px,#17106e 985.5px,#0e0a42 987.5px,#080628 988.5px,#010107 989.5px,#000 990.5px)"></i>
<i style="background:linear-gradient(90deg,#000 289.5px,#000002 290.5px,#070522 291.5px,#0d093e 292.5px,#1a137e 295.5px,#2c20d4 300.5px,#3324f4 302.5px,#3526ff 303.5px,#7f5cff 340.5px,#cb88ff 371.5px,#ffa5ff 389.5px,#ffe2ff 419.5px,#fffdff 430.5px,#fffaff 490.5px,#ffc3ff 509.5px,#ffa7ff 517.5px,#f59fff 519.5px,#da90ff 523.5px,#d990ff 755.5px,#da90ff 756.5px,#fba3ff 761.5px,#faf 763.5px,#ffe5ff 781.5px,#fffbff 790.5px,#fffdff 849.5px,#ffbaff 879.5px,#ffa5ff 890.5px,#b37bff 917.5px,#674bff 950.5px,#3526ff 976.5px,#3324f4 977.5px,#2218a2 982.5px,#16106a 985.5px,#0d093e 987.5px,#070522 988.5px,#000002 989.5px,#000 990.5px)"></i>
<i style="background:linear-gradient(90deg,#000 290.5px,#0c093a 292.5px,#1a127b 295.5px,#2c1fd2 300.5px,#3526ff 303.5px,#7f5cff 340.5px,#ca88ff 371.5px,#fea5ff 389.5px,#ffe2ff 419.5px,#fffdff 431.5px,#fffbff 490.5px,#ffc3ff 509.5px,#ffa7ff 517.5px,#f5a0ff 519.5px,#da90ff 523.5px,#d990ff 755.5px,#da90ff 756.5px,#fca3ff 761.5px,#ffabff 763.5px,#ffe5ff 781.5px,#fffbff 790.5px,#fffdff 849.5px,#fbf 878.5px,#fea5ff 890.5px,#b37aff 917.5px,#674bff 950.5px,#3526ff 976.5px,#281dc2 980.5px,#1a127b 984.5px,#0c093a 987.5px,#000 989.5px)"></i>
<i style="background:linear-gradient(90deg,#000 290.5px,#050418 291.5px,#0b0836 292.5px,#150f63 294.5px,#241aae 298.5px,#3526fe 303.5px,#7e5cff 340.5px,#ca87ff 371.5px,#ffa6ff 390.5px,#ffe4ff 420.5px,#fffdff 431.5px,#fffbff 490.5px,#ffc4ff 509.5px,#ffa7ff 517.5px,#f6a0ff 519.5px,#da91ff 523.5px,#d990ff 755.5px,#da91ff 756.5px,#fca3ff 761.5px,#ffafff 764.5px,#ffe8ff 782.5px,#fffbff 790.5px,#fffdff 849.5px,#fbf 878.5px,#fea5ff 890.5px,#b27aff 917.5px,#694cff 949.5px,#3526fe 976.5px,#21179d 982.5px,#150f63 985.5px,#0b0836 987.5px,#050418 988.5px,#000 989.5px)"></i>
<i style="background:linear-gradient(90deg,#000 290.5px,#040312 291.5px,#0a0731 292.5px,#140e60 294.5px,#241aab 298.5px,#3426fc 303.5px,#3828ff 305.5px,#805dff 341.5px,#cc89ff 372.5px,#ffa6ff 390.5px,#ffe4ff 420.5px,#fffdff 431.5px,#fffbff 490.5px,#ffc4ff 509.5px,#fda4ff 518.5px,#db91ff 523.5px,#d990ff 752.5px,#db91ff 756.5px,#fda4ff 761.5px,#ffc4ff 770.5px,#fffbff 789.5px,#fffcff 849.5px,#ffbdff 877.5px,#fea4ff 890.5px,#b27aff 917.5px,#694cff 949.5px,#3627ff 975.5px,#3426fc 976.5px,#20179a 982.5px,#140e60 985.5px,#0a0731 987.5px,#040312 988.5px,#000 989.5px)"></i>
<i style="background:linear-gradient(90deg,#000 290.5px,#02020c 291.5px,#09072d 292.5px,#130e5d 294.5px,#2319a9 298.5px,#3425f9 303.5px,#3627ff 304.5px,#7e5bff 340.5px,#c987ff 371.5px,#ffa6ff 390.5px,#ffe4ff 420.5px,#fffdff 431.5px,#fffbff 490.5px,#ffc7ff 508.5px,#fda4ff 518.5px,#db91ff 523.5px,#d88fff 616.5px,#d990ff 755.5px,#db91ff 756.5px,#fda4ff 761.5px,#fdf 778.5px,#fffbff 789.5px,#fffcff 849.5px,#ffbdff 877.5px,#fea4ff 890.5px,#b27aff 917.5px,#684cff 949.5px,#3627ff 975.5px,#3425f9 976.5px,#1f1797 982.5px,#130e5d 985.5px,#09072d 987.5px,#02020c 988.5px,#000 989.5px)"></i>
<i style="background:linear-gradient(90deg,#000 290.5px,#010107 291.5px,#080628 292.5px,#130d59 294.5px,#1f1694 297.5px,#3023e8 302.5px,#3325f7 303.5px,#3627ff 304.5px,#7d5bff 340.5px,#c987ff 371.5px,#ffa6ff 390.5px,#ffe4ff 420.5px,#fffdff 431.5px,#fffbff 490.5px,#ffc8ff 508.5px,#fea4ff 518.5px,#db91ff 523.5px,#d990ff 528.5px,#d990ff 755.5px,#db91ff 756.5px,#fea4ff 761.5px,#ffdeff 778.5px,#fffbff 789.5px,#fffcff 849.5px,#ffbdff 877.5px,#fda4ff 890.5px,#b27aff 917.5px,#664aff 950.5px,#3627ff 975.5px,#3325f7 976.5px,#2219a6 981.5px,#17106e 984.5px,#0e0a42 986.5px,#080628 987.5px,#010107 988.5px,#000 989.5px)"></i>
<i style="background:linear-gradient(90deg,#000 290.5px,#000002 291.5px,#070523 292.5px,#0d093e 293.5px,#1a137e 296.5px,#2c20d5 301.5px,#3324f5 303.5px,#3626ff 304.5px,#7d5bff 340.5px,#c987ff 371.5px,#ffa6ff 390.5px,#ffe4ff 420.5px,#fffdff 431.5px,#fff9ff 491.5px,#ffc1ff 510.5px,#fea5ff 518.5px,#dc91ff 523.5px,#d990ff 526.5px,#d990ff 755.5px,#dc91ff 756.5px,#fea5ff 761.5px,#ffdeff 778.5px,#fffbff 789.5px,#fffcff 849.5px,#ffbdff 877.5px,#fda4ff 890.5px,#af78ff 918.5px,#6247ff 952.5px,#3626ff 975.5px,#3324f5 976.5px,#2218a3 981.5px,#16106b 984.5px,#0d093e 986.5px,#070523 987.5px,#000002 988.5px,#000 989.5px)"></i>
<i style="background:linear-gradient(90deg,#000 291.5px,#0c093a 293.5px,#1a127b 296.5px,#2c1fd3 301.5px,#3526ff 304.5px,#7d5bff 340.5px,#c987ff 371.5px,#ffa5ff 390.5px,#ffe3ff 420.5px,#fffdff 431.5px,#fffaff 491.5px,#ffc2ff 510.5px,#ffa5ff 518.5px,#dc92ff 523.5px,#d990ff 525.5px,#d990ff 755.5px,#e396ff 757.5px,#ffa5ff 761.5px,#ffdeff 778.5px,#fffcff 789.5px,#fffcff 849.5px,#ffbcff 877.5px,#ffa5ff 889.5px,#ac77ff 919.5px,#5f45ff 953.5px,#3526ff 975.5px,#2c1fd3 978.5px,#1a127b 983.5px,#0c093a 986.5px,#000 988.5px)"></i>
<i style="background:linear-gradient(90deg,#000 291.5px,#050418 292.5px,#0b0836 293.5px,#150f64 295.5px,#241aaf 299.5px,#3526ff 304.5px,#7d5aff 340.5px,#c886ff 371.5px,#ffa5ff 390.5px,#ffe3ff 420.5px,#fffdff 431.5px,#fffaff 491.5px,#ffc2ff 510.5px,#ffa5ff 518.5px,#dd92ff 523.5px,#d990ff 525.5px,#d990ff 755.5px,#e496ff 757.5px,#ffa5ff 761.5px,#ffdeff 778.5px,#fffcff 789.5px,#fffcff 849.5px,#ffbcff 877.5px,#ffa5ff 889.5px,#ae78ff 918.5px,#6348ff 951.5px,#3526ff 975.5px,#21179d 981.5px,#150f64 984.5px,#0b0836 986.5px,#050418 987.5px,#000 988.5px)"></i>
<i style="background:linear-gradient(90deg,#000 291.5px,#040312 292.5px,#0a0731 293.5px,#140e61 295.5px,#241aac 299.5px,#3526fd 304.5px,#4733ff 314.5px,#9167ff 349.5px,#db91ff 378.5px,#ffa5ff 390.5px,#ffe3ff 420.5px,#fffdff 431.5px,#fffaff 491.5px,#ffc2ff 510.5px,#ffa5ff 518.5px,#dd92ff 523.5px,#d990ff 525.5px,#d990ff 755.5px,#eb9aff 758.5px,#ffa5ff 761.5px,#ffdfff 778.5px,#fffcff 789.5px,#fffdff 848.5px,#ffbaff 878.5px,#ffa5ff 889.5px,#b079ff 917.5px,#674aff 949.5px,#3727ff 974.5px,#3526fd 975.5px,#20179a 981.5px,#140e61 984.5px,#0a0731 986.5px,#040312 987.5px,#000 988.5px)"></i>
<i style="background:linear-gradient(90deg,#000 291.5px,#02020c 292.5px,#09072d 293.5px,#130e5d 295.5px,#2319a9 299.5px,#3425fa 304.5px,#3627ff 305.5px,#7e5cff 341.5px,#ca88ff 372.5px,#ffa5ff 390.5px,#ffe3ff 420.5px,#fffdff 431.5px,#fffbff 491.5px,#ffc2ff 510.5px,#ffa6ff 518.5px,#d990ff 524.5px,#d990ff 755.5px,#ffa6ff 761.5px,#ffdfff 778.5px,#fffcff 789.5px,#fffdff 848.5px,#ffbcff 877.5px,#ffa5ff 889.5px,#b37aff 916.5px,#694cff 948.5px,#3627ff 974.5px,#3425fa 975.5px,#201798 981.5px,#130e5d 984.5px,#09072d 986.5px,#02020c 987.5px,#000 988.5px)"></i>
<i style="background:linear-gradient(90deg,#000 291.5px,#010107 292.5px,#080628 293.5px,#130d5a 295.5px,#1f1695 298.5px,#3023e8 303.5px,#3425f8 304.5px,#3627ff 305.5px,#7e5bff 341.5px,#ca87ff 372.5px,#ffa5ff 390.5px,#ffe3ff 420.5px,#fffeff 432.5px,#fffbff 491.5px,#ffc3ff 510.5px,#ffa6ff 518.5px,#d990ff 524.5px,#d990ff 755.5px,#ffa6ff 761.5px,#ffdfff 778.5px,#fffcff 789.5px,#fffdff 848.5px,#ffbcff 877.5px,#ffa5ff 889.5px,#b27aff 916.5px,#6a4dff 947.5px,#3627ff 974.5px,#3425f8 975.5px,#2319a7 980.5px,#17106f 983.5px,#0e0a43 985.5px,#080628 986.5px,#010107 987.5px,#000 988.5px)"></i>
<i style="background:linear-gradient(90deg,#000 291.5px,#000002 292.5px,#070523 293.5px,#0d093f 294.5px,#1a137f 297.5px,#2c20d6 302.5px,#3325f6 304.5px,#3627ff 305.5px,#7e5bff 341.5px,#ca87ff 372.5px,#fea5ff 390.5px,#ffe2ff 420.5px,#fffeff 432.5px,#fffbff 491.5px,#ffc3ff 510.5px,#ffa6ff 518.5px,#d990ff 524.5px,#d990ff 755.5px,#ffa6ff 761.5px,#ffdfff 778.5px,#fffcff 789.5px,#fffdff 848.5px,#ffbdff 876.5px,#fea5ff 889.5px,#b27aff 916.5px,#684bff 948.5px,#3627ff 974.5px,#3325f6 975.5px,#2218a4 980.5px,#16106b 983.5px,#0d093f 985.5px,#070523 986.5px,#000002 987.5px,#000 988.5px)"></i>
<i style="background:linear-gradient(90deg,#000 292.5px,#0c093a 294.5px,#1a127c 297.5px,#2c20d3 302.5px,#3324f3 304.5px,#3526ff 305.5px,#7d5bff 341.5px,#c987ff 372.5px,#ffa6ff 391.5px,#ffe5ff 421.5px,#fffeff 432.5px,#fffbff 491.5px,#ffc3ff 510.5px,#ffa6ff 518.5px,#da90ff 524.5px,#da90ff 755.5px,#ffa6ff 761.5px,#ffe0ff 778.5px,#fffcff 789.5px,#fffdff 848.5px,#ffbdff 876.5px,#fea4ff 889.5px,#b27aff 916.5px,#664aff 949.5px,#3526ff 974.5px,#2f22e3 976.5px,#1e158f 981.5px,#110c52 984.5px,#0c093a 985.5px,#000 987.5px)"></i>
<i style="background:linear-gradient(90deg,#000 292.5px,#050418 293.5px,#0b0836 294.5px,#150f64 296.5px,#241aaf 300.5px,#3526ff 305.5px,#7d5bff 341.5px,#c987ff 372.5px,#ffa6ff 391.5px,#ffe4ff 421.5px,#fffeff 432.5px,#fffbff 491.5px,#ffc3ff 510.5px,#ffa7ff 518.5px,#ee9bff 521.5px,#da90ff 524.5px,#da90ff 755.5px,#fba3ff 760.5px,#faf 762.5px,#ffe6ff 780.5px,#fffcff 789.5px,#fffdff 848.5px,#ffbdff 876.5px,#fea4ff 889.5px,#b17aff 916.5px,#6549ff 949.5px,#3526ff 974.5px,#241aaf 979.5px,#150f64 983.5px,#0b0836 985.5px,#050418 986.5px,#000 987.5px)"></i>
<i style="background:linear-gradient(90deg,#000 292.5px,#040312 293.5px,#0a0732 294.5px,#140e61 296.5px,#241aad 300.5px,#3526fe 305.5px,#7f5cff 342.5px,#c8f 373.5px,#ffa6ff 391.5px,#ffe4ff 421.5px,#fffeff 432.5px,#fffcff 491.5px,#ffc4ff 510.5px,#ffa7ff 518.5px,#f59fff 520.5px,#da90ff 524.5px,#da90ff 755.5px,#fca3ff 760.5px,#ffabff 762.5px,#ffe6ff 780.5px,#fffcff 789.5px,#fffdff 848.5px,#ffbdff 876.5px,#fda4ff 889.5px,#b17aff 916.5px,#6549ff 949.5px,#3526fe 974.5px,#20179b 980.5px,#140e61 983.5px,#0a0732 985.5px,#040312 986.5px,#000 987.5px)"></i>
<i style="background:linear-gradient(90deg,#000 292.5px,#03020c 293.5px,#09072d 294.5px,#130e5d 296.5px,#2319aa 300.5px,#3425fb 305.5px,#3828ff 307.5px,#815eff 343.5px,#cb88ff 373.5px,#ffa6ff 391.5px,#ffe4ff 421.5px,#fffeff 432.5px,#fffcff 491.5px,#ffc4ff 510.5px,#ffa7ff 518.5px,#f5a0ff 520.5px,#da91ff 524.5px,#da91ff 755.5px,#fca3ff 760.5px,#ffafff 763.5px,#ffe9ff 781.5px,#fffcff 789.5px,#fffdff 848.5px,#ffbdff 876.5px,#fda4ff 889.5px,#b179ff 916.5px,#6549ff 949.5px,#3627ff 973.5px,#3425fb 974.5px,#201798 980.5px,#130e5d 983.5px,#09072d 985.5px,#03020c 986.5px,#000 987.5px)"></i>
<i style="background:linear-gradient(90deg,#000 292.5px,#010107 293.5px,#080628 294.5px,#130d5a 296.5px,#1f1695 299.5px,#3123e9 304.5px,#3425f9 305.5px,#3627ff 306.5px,#7e5cff 342.5px,#cb88ff 373.5px,#ffa6ff 391.5px,#ffe4ff 421.5px,#fffeff 432.5px,#fffcff 491.5px,#ffc8ff 509.5px,#ffa7ff 518.5px,#fda4ff 519.5px,#db91ff 524.5px,#db91ff 755.5px,#fda4ff 760.5px,#ffb6ff 765.5px,#ffefff 783.5px,#fffcff 789.5px,#fffdff 848.5px,#ffbdff 876.5px,#ffa6ff 888.5px,#ac76ff 918.5px,#6347ff 950.5px,#3627ff 973.5px,#3425f9 974.5px,#2319a7 979.5px,#17116f 982.5px,#0e0a43 984.5px,#080628 985.5px,#010107 986.5px,#000 987.5px)"></i>
<i style="background:linear-gradient(90deg,#000 292.5px,#000002 293.5px,#070523 294.5px,#0d093f 295.5px,#1a137f 298.5px,#2d20d7 303.5px,#3325f6 305.5px,#3627ff 306.5px,#7e5cff 342.5px,#cb88ff 373.5px,#ffa5ff 391.5px,#ffe4ff 421.5px,#fffeff 432.5px,#fffcff 491.5px,#ffc8ff 509.5px,#fda4ff 519.5px,#db91ff 524.5px,#da90ff 754.5px,#db91ff 755.5px,#fda4ff 760.5px,#ffdeff 777.5px,#fffcff 788.5px,#fffcff 848.5px,#ffbcff 876.5px,#ffa5ff 888.5px,#ae78ff 917.5px,#664aff 948.5px,#3627ff 973.5px,#3325f6 974.5px,#2218a4 979.5px,#16106c 982.5px,#0d093f 984.5px,#070523 985.5px,#000002 986.5px,#000 987.5px)"></i>
<i style="background:linear-gradient(90deg,#000 293.5px,#0c093b 295.5px,#1a137c 298.5px,#2c20d4 303.5px,#3324f4 305.5px,#3626ff 306.5px,#7e5bff 342.5px,#ca88ff 373.5px,#ffa5ff 391.5px,#ffe3ff 421.5px,#fffeff 432.5px,#fffcff 491.5px,#ffc8ff 509.5px,#fda4ff 519.5px,#db91ff 524.5px,#da90ff 754.5px,#db91ff 755.5px,#fda4ff 760.5px,#ffdeff 777.5px,#fffcff 788.5px,#fffeff 847.5px,#ffbaff 877.5px,#ffa5ff 888.5px,#b079ff 916.5px,#684bff 947.5px,#3626ff 973.5px,#3324f4 974.5px,#2218a1 979.5px,#161068 982.5px,#0c093b 984.5px,#000 986.5px)"></i>
<i style="background:linear-gradient(90deg,#000 293.5px,#050418 294.5px,#0b0836 295.5px,#150f65 297.5px,#251ab0 301.5px,#3224f2 305.5px,#3526ff 306.5px,#7e5bff 342.5px,#ca88ff 373.5px,#ffa5ff 391.5px,#ffe3ff 421.5px,#fffeff 432.5px,#fffaff 492.5px,#ffc2ff 511.5px,#fea4ff 519.5px,#db91ff 524.5px,#da90ff 754.5px,#db91ff 755.5px,#fea4ff 760.5px,#ffdeff 777.5px,#fffdff 788.5px,#fffeff 847.5px,#ffbcff 876.5px,#ffa5ff 888.5px,#b27aff 915.5px,#684bff 947.5px,#3526ff 973.5px,#2c1fd2 976.5px,#1d158c 980.5px,#100c4f 983.5px,#0b0836 984.5px,#050418 985.5px,#000 986.5px)"></i>
<i style="background:linear-gradient(90deg,#000 293.5px,#040312 294.5px,#0a0732 295.5px,#140e61 297.5px,#241aad 301.5px,#3526ff 306.5px,#7d5bff 342.5px,#ca87ff 373.5px,#ffa5ff 391.5px,#ffe3ff 421.5px,#fffeff 433.5px,#fffbff 492.5px,#ffc2ff 511.5px,#fea5ff 519.5px,#dc91ff 524.5px,#da90ff 751.5px,#dc91ff 755.5px,#fea5ff 760.5px,#ffdfff 777.5px,#fffdff 788.5px,#fffeff 847.5px,#ffbcff 876.5px,#ffa5ff 888.5px,#b27aff 915.5px,#664aff 948.5px,#3526ff 973.5px,#20179c 979.5px,#140e61 982.5px,#0a0732 984.5px,#040312 985.5px,#000 986.5px)"></i>
<i style="background:linear-gradient(90deg,#000 293.5px,#03020c 294.5px,#09072d 295.5px,#140e5e 297.5px,#2319ab 301.5px,#3426fc 306.5px,#3a2aff 309.5px,#8460ff 345.5px,#cf8aff 375.5px,#fea5ff 391.5px,#ffe3ff 421.5px,#fffeff 433.5px,#fffbff 492.5px,#ffc2ff 511.5px,#ffa5ff 519.5px,#dc92ff 524.5px,#d990ff 596.5px,#da90ff 754.5px,#dc92ff 755.5px,#ffa5ff 760.5px,#ffdfff 777.5px,#fffdff 788.5px,#fffeff 847.5px,#ffbeff 875.5px,#fea5ff 888.5px,#b27aff 915.5px,#6549ff 948.5px,#3627ff 972.5px,#3426fc 973.5px,#201799 979.5px,#140e5e 982.5px,#09072d 984.5px,#03020c 985.5px,#000 986.5px)"></i>
<i style="background:linear-gradient(90deg,#000 293.5px,#020107 294.5px,#080629 295.5px,#130d5a 297.5px,#1f1696 300.5px,#3123ea 305.5px,#3425fa 306.5px,#3627ff 307.5px,#7f5cff 343.5px,#c987ff 373.5px,#ffa6ff 392.5px,#ffe5ff 422.5px,#fff 433.5px,#fffbff 492.5px,#ffc2ff 511.5px,#ffa5ff 519.5px,#dd92ff 524.5px,#da90ff 529.5px,#da90ff 754.5px,#dd92ff 755.5px,#ffa5ff 760.5px,#ffdfff 777.5px,#fffdff 788.5px,#fffeff 847.5px,#ffbeff 875.5px,#fea4ff 888.5px,#b17aff 915.5px,#6549ff 948.5px,#3627ff 972.5px,#3425fa 973.5px,#2319a8 978.5px,#17116f 981.5px,#0e0a43 983.5px,#080629 984.5px,#020107 985.5px,#000 986.5px)"></i>
<i style="background:linear-gradient(90deg,#000 293.5px,#000002 294.5px,#070523 295.5px,#0d093f 296.5px,#1b1380 299.5px,#2d20d8 304.5px,#3325f7 306.5px,#3627ff 307.5px,#7f5cff 343.5px,#c987ff 373.5px,#ffa6ff 392.5px,#ffe5ff 422.5px,#fff 433.5px,#fffcff 492.5px,#ffc3ff 511.5px,#ffa5ff 519.5px,#dd92ff 524.5px,#da90ff 527.5px,#da90ff 754.5px,#dd92ff 755.5px,#ffa5ff 760.5px,#ffe0ff 777.5px,#fffdff 788.5px,#fffeff 847.5px,#ffbfff 874.5px,#fea4ff 888.5px,#b17aff 915.5px,#6549ff 948.5px,#3627ff 972.5px,#3325f7 973.5px,#2219a5 978.5px,#16106c 981.5px,#0d093f 983.5px,#070523 984.5px,#000002 985.5px,#000 986.5px)"></i>
<i style="background:linear-gradient(90deg,#000 294.5px,#0c093b 296.5px,#1a137d 299.5px,#2c20d5 304.5px,#3324f5 306.5px,#3626ff 307.5px,#7e5cff 343.5px,#c987ff 373.5px,#ffa6ff 392.5px,#ffe5ff 422.5px,#fff 433.5px,#fffcff 492.5px,#ffc3ff 511.5px,#ffa6ff 519.5px,#de92ff 524.5px,#da90ff 526.5px,#da91ff 754.5px,#e596ff 756.5px,#ffa6ff 760.5px,#ffe0ff 777.5px,#fffdff 788.5px,#fffeff 847.5px,#ffbfff 874.5px,#fea4ff 888.5px,#b179ff 915.5px,#664aff 947.5px,#3626ff 972.5px,#3324f5 973.5px,#2218a2 978.5px,#161069 981.5px,#0c093b 983.5px,#000 985.5px)"></i>
<i style="background:linear-gradient(90deg,#000 294.5px,#050419 295.5px,#0b0837 296.5px,#150f65 298.5px,#251ab1 302.5px,#3224f2 306.5px,#3526ff 307.5px,#7e5cff 343.5px,#c887ff 373.5px,#ffa6ff 392.5px,#ffe5ff 422.5px,#fff 433.5px,#fffcff 492.5px,#ffc3ff 511.5px,#ffa6ff 519.5px,#de93ff 524.5px,#da91ff 526.5px,#da91ff 754.5px,#e597ff 756.5px,#ffa6ff 760.5px,#ffe0ff 777.5px,#fffdff 788.5px,#fffdff 847.5px,#ffbfff 874.5px,#fda4ff 888.5px,#b179ff 915.5px,#684cff 946.5px,#3526ff 972.5px,#2f22e3 974.5px,#1d158d 979.5px,#100c4f 982.5px,#0b0837 983.5px,#050419 984.5px,#000 985.5px)"></i>
<i style="background:linear-gradient(90deg,#000 294.5px,#040312 295.5px,#0a0732 296.5px,#140f62 298.5px,#241aae 302.5px,#3526ff 307.5px,#7e5bff 343.5px,#c886ff 373.5px,#ffa6ff 392.5px,#ffe4ff 422.5px,#fff 433.5px,#fffcff 492.5px,#ffc3ff 511.5px,#ffa6ff 519.5px,#de93ff 524.5px,#da91ff 525.5px,#da91ff 754.5px,#e697ff 756.5px,#ffa6ff 760.5px,#ffe0ff 777.5px,#fffdff 788.5px,#fffdff 847.5px,#ffbdff 875.5px,#fda4ff 888.5px,#b079ff 915.5px,#6a4dff 945.5px,#3526ff 972.5px,#241aae 977.5px,#140f62 981.5px,#0a0732 983.5px,#040312 984.5px,#000 985.5px)"></i>
<i style="background:linear-gradient(90deg,#000 294.5px,#03020c 295.5px,#09072e 296.5px,#140e5e 298.5px,#241aab 302.5px,#3526fd 307.5px,#805dff 344.5px,#cb88ff 374.5px,#ffa5ff 392.5px,#ffe4ff 422.5px,#fff 433.5px,#fffdff 492.5px,#ffc4ff 511.5px,#ffa7ff 519.5px,#ed9bff 522.5px,#da91ff 525.5px,#da91ff 754.5px,#f49fff 758.5px,#ffa7ff 760.5px,#ffe1ff 777.5px,#fffdff 788.5px,#fffdff 847.5px,#ffbdff 875.5px,#ffa5ff 887.5px,#ab76ff 917.5px,#6448ff 948.5px,#3526fd 972.5px,#201799 978.5px,#140e5e 981.5px,#09072e 983.5px,#03020c 984.5px,#000 985.5px)"></i>
<i style="background:linear-gradient(90deg,#000 294.5px,#020107 295.5px,#090629 296.5px,#130e5b 298.5px,#1f1696 301.5px,#3123eb 306.5px,#3425fb 307.5px,#3627ff 308.5px,#805dff 344.5px,#ca88ff 374.5px,#ffa5ff 392.5px,#ffe4ff 422.5px,#fff 433.5px,#fffdff 492.5px,#ffc4ff 511.5px,#ffa7ff 519.5px,#f59fff 521.5px,#db91ff 525.5px,#db91ff 754.5px,#fba3ff 759.5px,#ffabff 761.5px,#ffe4ff 778.5px,#fffdff 787.5px,#fff 846.5px,#ffbaff 876.5px,#ffa5ff 887.5px,#ad77ff 916.5px,#6348ff 948.5px,#3627ff 971.5px,#3425fb 972.5px,#2319a8 977.5px,#171170 980.5px,#0e0a44 982.5px,#090629 983.5px,#020107 984.5px,#000 985.5px)"></i>
<i style="background:linear-gradient(90deg,#000 294.5px,#010002 295.5px,#070524 296.5px,#0d093f 297.5px,#1b1380 300.5px,#2d20d9 305.5px,#3425f8 307.5px,#3627ff 308.5px,#7f5cff 344.5px,#ca87ff 374.5px,#ffa5ff 392.5px,#ffe4ff 422.5px,#fff 433.5px,#fffdff 492.5px,#ffc8ff 510.5px,#ffa7ff 519.5px,#f59fff 521.5px,#db91ff 525.5px,#db91ff 754.5px,#fca3ff 759.5px,#ffabff 761.5px,#ffe4ff 778.5px,#fffdff 787.5px,#fff 846.5px,#ffbcff 875.5px,#ffa5ff 887.5px,#af79ff 915.5px,#6348ff 948.5px,#3627ff 971.5px,#3425f8 972.5px,#2219a6 977.5px,#17106c 980.5px,#0d093f 982.5px,#070524 983.5px,#010002 984.5px,#000 985.5px)"></i>
<i style="background:linear-gradient(90deg,#000 295.5px,#0c093b 297.5px,#1a137d 300.5px,#2c20d6 305.5px,#3325f6 307.5px,#3627ff 308.5px,#7f5cff 344.5px,#ca87ff 374.5px,#ffa5ff 392.5px,#ffe4ff 422.5px,#fff 433.5px,#fffdff 492.5px,#ffc8ff 510.5px,#ffa7ff 519.5px,#fca4ff 520.5px,#db91ff 525.5px,#db91ff 754.5px,#fca4ff 759.5px,#ffb3ff 763.5px,#ffedff 781.5px,#fffdff 787.5px,#fff 846.5px,#ffbcff 875.5px,#ffa5ff 887.5px,#b27aff 914.5px,#6549ff 947.5px,#3627ff 971.5px,#3325f6 972.5px,#2218a3 977.5px,#161069 980.5px,#0c093b 982.5px,#000 984.5px)"></i>
<i style="background:linear-gradient(90deg,#000 295.5px,#050419 296.5px,#0b0837 297.5px,#150f66 299.5px,#251ab1 303.5px,#3324f3 307.5px,#3526ff 308.5px,#7f5cff 344.5px,#c987ff 374.5px,#ffa5ff 392.5px,#ffe4ff 422.5px,#fff 433.5px,#fffdff 492.5px,#ffc8ff 510.5px,#fda4ff 520.5px,#db91ff 525.5px,#db91ff 754.5px,#fda4ff 759.5px,#ffd2ff 772.5px,#fffdff 787.5px,#fff 846.5px,#ffbeff 874.5px,#ffa5ff 887.5px,#b17aff 914.5px,#674aff 946.5px,#3526ff 971.5px,#3324f3 972.5px,#2118a0 977.5px,#150f66 980.5px,#0b0837 982.5px,#050419 983.5px,#000 984.5px)"></i>
<i style="background:linear-gradient(90deg,#000 295.5px,#040312 296.5px,#0a0832 297.5px,#140f62 299.5px,#241aaf 303.5px,#3224f1 307.5px,#3526ff 308.5px,#7e5cff 344.5px,#c987ff 374.5px,#fea5ff 392.5px,#ffe3ff 422.5px,#fff 433.5px,#fffdff 492.5px,#ffc8ff 510.5px,#fda4ff 520.5px,#db91ff 525.5px,#db91ff 754.5px,#fda4ff 759.5px,#ffdfff 776.5px,#fffdff 787.5px,#fff 846.5px,#ffbeff 874.5px,#fea5ff 887.5px,#b179ff 914.5px,#664aff 946.5px,#3526ff 971.5px,#281dc0 975.5px,#191277 979.5px,#100b4c 981.5px,#0a0832 982.5px,#040312 983.5px,#000 984.5px)"></i>
<i style="background:linear-gradient(90deg,#000 295.5px,#03020d 296.5px,#0a072e 297.5px,#140e5f 299.5px,#241aac 303.5px,#3526fe 308.5px,#7e5bff 344.5px,#c987ff 374.5px,#ffa6ff 393.5px,#ffe3ff 422.5px,#fff 434.5px,#fffcff 493.5px,#ffc2ff 512.5px,#fea4ff 520.5px,#dc91ff 525.5px,#dc91ff 754.5px,#fea4ff 759.5px,#ffdfff 776.5px,#fffeff 787.5px,#fff 846.5px,#ffc0ff 873.5px,#fea4ff 887.5px,#b179ff 914.5px,#684bff 945.5px,#3526fe 971.5px,#20179a 977.5px,#140e5f 980.5px,#0a072e 982.5px,#03020d 983.5px,#000 984.5px)"></i>
<i style="background:linear-gradient(90deg,#000 295.5px,#020108 296.5px,#090629 297.5px,#130e5b 299.5px,#1f1797 302.5px,#3123ec 307.5px,#3426fc 308.5px,#3828ff 310.5px,#805dff 345.5px,#cb88ff 375.5px,#ffa6ff 393.5px,#ffe3ff 422.5px,#fff 434.5px,#fffcff 493.5px,#ffc2ff 512.5px,#fea5ff 520.5px,#dc91ff 525.5px,#dc91ff 754.5px,#fea5ff 759.5px,#ffdfff 776.5px,#fffeff 787.5px,#fffeff 846.5px,#ffc0ff 873.5px,#fea4ff 887.5px,#b079ff 914.5px,#6a4dff 944.5px,#3627ff 970.5px,#3426fc 971.5px,#2319a9 976.5px,#171170 979.5px,#0e0a44 981.5px,#090629 982.5px,#020108 983.5px,#000 984.5px)"></i>
<i style="background:linear-gradient(90deg,#000 295.5px,#010003 296.5px,#070524 297.5px,#0d0a40 298.5px,#1b1381 301.5px,#2d20d9 306.5px,#3425f9 308.5px,#3627ff 309.5px,#805dff 345.5px,#cb88ff 375.5px,#ffa6ff 393.5px,#ffe3ff 422.5px,#fff 434.5px,#fffcff 493.5px,#ffc2ff 512.5px,#ffa5ff 520.5px,#dc92ff 525.5px,#db91ff 753.5px,#dc92ff 754.5px,#ffa5ff 759.5px,#ffe0ff 776.5px,#fffeff 787.5px,#fffeff 846.5px,#ffbfff 873.5px,#fda4ff 887.5px,#b079ff 914.5px,#684bff 945.5px,#3627ff 970.5px,#3425f9 971.5px,#2319a6 976.5px,#17106d 979.5px,#0d0a40 981.5px,#070524 982.5px,#010003 983.5px,#000 984.5px)"></i>
<i style="background:linear-gradient(90deg,#000 296.5px,#0c093c 298.5px,#1a137e 301.5px,#2d20d7 306.5px,#3325f7 308.5px,#3627ff 309.5px,#7f5cff 345.5px,#cb88ff 375.5px,#ffa6ff 393.5px,#ffe3ff 422.5px,#fff 434.5px,#fffcff 493.5px,#ffc3ff 512.5px,#ffa5ff 520.5px,#dc92ff 525.5px,#db91ff 753.5px,#dc92ff 754.5px,#ffa5ff 759.5px,#ffe0ff 776.5px,#fffeff 787.5px,#fffeff 846.5px,#ffbfff 873.5px,#fda4ff 887.5px,#b079ff 914.5px,#6549ff 946.5px,#3627ff 970.5px,#3325f7 971.5px,#2218a3 976.5px,#161069 979.5px,#0c093c 981.5px,#000 983.5px)"></i>
<i style="background:linear-gradient(90deg,#000 296.5px,#050419 297.5px,#0c0837 298.5px,#150f66 300.5px,#251bb2 304.5px,#3324f4 308.5px,#3626ff 309.5px,#7f5cff 345.5px,#ca88ff 375.5px,#ffa6ff 393.5px,#ffe2ff 422.5px,#fff 434.5px,#fffdff 493.5px,#ffc3ff 512.5px,#ffa5ff 520.5px,#dd92ff 525.5px,#db91ff 753.5px,#dd92ff 754.5px,#ffa5ff 759.5px,#ffe0ff 776.5px,#fffeff 787.5px,#fffeff 846.5px,#ffbfff 873.5px,#ffa6ff 886.5px,#aa76ff 916.5px,#5f44ff 949.5px,#3626ff 970.5px,#3324f4 971.5px,#2118a0 976.5px,#150f66 979.5px,#0c0837 981.5px,#050419 982.5px,#000 983.5px)"></i>
<i style="background:linear-gradient(90deg,#000 296.5px,#040313 297.5px,#0b0833 298.5px,#140f63 300.5px,#241aaf 304.5px,#3224f2 308.5px,#3526ff 309.5px,#7f5cff 345.5px,#ca87ff 375.5px,#ffa5ff 393.5px,#ffe2ff 422.5px,#fff 434.5px,#fffdff 493.5px,#ffc3ff 512.5px,#ffa6ff 520.5px,#dd92ff 525.5px,#db91ff 749.5px,#dd92ff 754.5px,#ffa6ff 759.5px,#ffe1ff 776.5px,#fffeff 787.5px,#fffeff 846.5px,#ffbfff 873.5px,#ffa5ff 886.5px,#ad77ff 915.5px,#6046ff 948.5px,#3526ff 970.5px,#2f22e2 972.5px,#1d158b 977.5px,#100b4c 980.5px,#0b0833 981.5px,#040313 982.5px,#000 983.5px)"></i>
<i style="background:linear-gradient(90deg,#000 296.5px,#03020d 297.5px,#0a072e 298.5px,#140e5f 300.5px,#241aad 304.5px,#3526ff 309.5px,#7f5cff 345.5px,#ca87ff 375.5px,#ffa5ff 393.5px,#ffe2ff 422.5px,#fff 434.5px,#fffdff 493.5px,#ffc4ff 512.5px,#ffa6ff 520.5px,#dd92ff 525.5px,#db91ff 582.5px,#db91ff 753.5px,#dd92ff 754.5px,#ffa6ff 759.5px,#ffe1ff 776.5px,#fffeff 787.5px,#fffeff 846.5px,#ffbfff 873.5px,#ffa5ff 886.5px,#af78ff 914.5px,#6449ff 946.5px,#3526ff 970.5px,#241aad 975.5px,#140e5f 979.5px,#0a072e 981.5px,#03020d 982.5px,#000 983.5px)"></i>
<i style="background:linear-gradient(90deg,#000 296.5px,#020108 297.5px,#090629 298.5px,#130e5c 300.5px,#201798 303.5px,#3123ed 308.5px,#3526fd 309.5px,#4431ff 317.5px,#8f66ff 352.5px,#db91ff 381.5px,#ffa5ff 393.5px,#ffe2ff 422.5px,#fff 434.5px,#fffdff 493.5px,#ffc4ff 512.5px,#ffa6ff 520.5px,#de92ff 525.5px,#db91ff 530.5px,#db91ff 753.5px,#de92ff 754.5px,#ffa6ff 759.5px,#ffe1ff 776.5px,#fffeff 787.5px,#fffdff 846.5px,#ffbeff 873.5px,#ffa5ff 886.5px,#b17aff 913.5px,#684bff 944.5px,#3727ff 969.5px,#3526fd 970.5px,#2319aa 975.5px,#171171 978.5px,#0e0a44 980.5px,#090629 981.5px,#020108 982.5px,#000 983.5px)"></i>
<i style="background:linear-gradient(90deg,#000 296.5px,#010003 297.5px,#070524 298.5px,#0d0a40 299.5px,#1b1382 302.5px,#2d21da 307.5px,#3425fa 309.5px,#3627ff 310.5px,#7e5bff 345.5px,#c987ff 375.5px,#ffa5ff 393.5px,#ffe2ff 422.5px,#fff 434.5px,#fffeff 493.5px,#ffc4ff 512.5px,#ffa7ff 520.5px,#ed9bff 523.5px,#de93ff 525.5px,#db91ff 528.5px,#db91ff 753.5px,#de93ff 754.5px,#fba3ff 758.5px,#ffa7ff 759.5px,#ffe1ff 776.5px,#fffeff 786.5px,#fffdff 846.5px,#ffbeff 873.5px,#ffa5ff 886.5px,#b179ff 913.5px,#684bff 944.5px,#3627ff 969.5px,#3425fa 970.5px,#2319a7 975.5px,#17106d 978.5px,#0d0a40 980.5px,#070524 981.5px,#010003 982.5px,#000 983.5px)"></i>
<i style="background:linear-gradient(90deg,#000 297.5px,#0c093c 299.5px,#1a137e 302.5px,#2d20d8 307.5px,#3325f8 309.5px,#3627ff 310.5px,#7e5bff 345.5px,#c987ff 375.5px,#fea5ff 393.5px,#ffe2ff 422.5px,#fff 434.5px,#fffeff 493.5px,#ffc8ff 511.5px,#ffa7ff 520.5px,#f49fff 522.5px,#df93ff 525.5px,#dc91ff 527.5px,#dc91ff 753.5px,#df93ff 754.5px,#fba3ff 758.5px,#ffabff 760.5px,#ffe5ff 777.5px,#fffeff 786.5px,#fff 845.5px,#ffbcff 874.5px,#fea5ff 886.5px,#b179ff 913.5px,#6a4dff 943.5px,#3627ff 969.5px,#3325f8 970.5px,#2218a4 975.5px,#16106a 978.5px,#0c093c 980.5px,#000 982.5px)"></i>
<i style="background:linear-gradient(90deg,#000 297.5px,#050419 298.5px,#0c0838 299.5px,#150f66 301.5px,#251bb3 305.5px,#3325f5 309.5px,#3627ff 310.5px,#7d5bff 345.5px,#c987ff 375.5px,#ffa6ff 394.5px,#ffe4ff 423.5px,#fff 434.5px,#fffeff 493.5px,#ffc8ff 511.5px,#ffa7ff 520.5px,#f59fff 522.5px,#df93ff 525.5px,#dc91ff 527.5px,#dc91ff 753.5px,#e797ff 755.5px,#fca3ff 758.5px,#ffabff 760.5px,#ffe5ff 777.5px,#fffeff 786.5px,#fff 845.5px,#ffbcff 874.5px,#fea5ff 886.5px,#b079ff 913.5px,#674bff 944.5px,#3627ff 969.5px,#3325f5 970.5px,#2118a1 975.5px,#150f66 978.5px,#0c0838 980.5px,#050419 981.5px,#000 982.5px)"></i>
<i style="background:linear-gradient(90deg,#000 297.5px,#040313 298.5px,#0b0833 299.5px,#150f63 301.5px,#251ab0 305.5px,#3224f3 309.5px,#3526ff 310.5px,#7d5bff 345.5px,#c886ff 375.5px,#ffa6ff 394.5px,#ffe4ff 423.5px,#fff 434.5px,#fffeff 493.5px,#ffc8ff 511.5px,#ffa7ff 520.5px,#fca3ff 521.5px,#e094ff 525.5px,#dc91ff 526.5px,#dc91ff 753.5px,#e798ff 755.5px,#fca3ff 758.5px,#ffafff 761.5px,#ffe8ff 778.5px,#fffeff 786.5px,#fff 845.5px,#ffbeff 873.5px,#fea4ff 886.5px,#b079ff 913.5px,#674bff 944.5px,#3526ff 969.5px,#2f22e3 971.5px,#1d158b 976.5px,#100b4c 979.5px,#0b0833 980.5px,#040313 981.5px,#000 982.5px)"></i>
<i style="background:linear-gradient(90deg,#000 297.5px,#03020d 298.5px,#0a072e 299.5px,#140e5f 301.5px,#241aad 305.5px,#3526ff 310.5px,#7d5bff 345.5px,#c886ff 375.5px,#ffa6ff 394.5px,#ffe3ff 423.5px,#fff 434.5px,#fffeff 493.5px,#ffc9ff 511.5px,#ffa8ff 520.5px,#fda4ff 521.5px,#e094ff 525.5px,#dc91ff 526.5px,#dc91ff 753.5px,#f6a0ff 757.5px,#fda4ff 758.5px,#ffbeff 765.5px,#fff7ff 783.5px,#fff 787.5px,#fff 845.5px,#ffc0ff 872.5px,#fea4ff 886.5px,#b079ff 913.5px,#6549ff 945.5px,#3526ff 969.5px,#241aad 974.5px,#140e5f 978.5px,#0a072e 980.5px,#03020d 981.5px,#000 982.5px)"></i>
<i style="background:linear-gradient(90deg,#000 297.5px,#020108 298.5px,#09062a 299.5px,#130e5c 301.5px,#201798 304.5px,#3123ee 309.5px,#3526fe 310.5px,#7f5cff 346.5px,#cb88ff 376.5px,#ffa6ff 394.5px,#ffe3ff 423.5px,#fff 434.5px,#fff 493.5px,#ffc9ff 511.5px,#fda4ff 521.5px,#dc91ff 526.5px,#dc91ff 753.5px,#fda4ff 758.5px,#ffe0ff 775.5px,#fff 786.5px,#fff 845.5px,#ffbfff 872.5px,#fda4ff 886.5px,#b079ff 913.5px,#6247ff 946.5px,#3526fe 969.5px,#2319aa 974.5px,#181171 977.5px,#0e0a45 979.5px,#09062a 980.5px,#020108 981.5px,#000 982.5px)"></i>
<i style="background:linear-gradient(90deg,#000 297.5px,#010003 298.5px,#080524 299.5px,#0d0a40 300.5px,#1b1382 303.5px,#2e21db 308.5px,#3425fb 310.5px,#3828ff 312.5px,#815dff 347.5px,#cd89ff 377.5px,#ffa6ff 394.5px,#ffe3ff 423.5px,#fff 434.5px,#fff 493.5px,#ffcdff 510.5px,#fea4ff 521.5px,#dc91ff 526.5px,#dc91ff 753.5px,#fea4ff 758.5px,#ffe0ff 775.5px,#fff 786.5px,#fff 845.5px,#ffbfff 872.5px,#fda4ff 886.5px,#af78ff 913.5px,#6448ff 945.5px,#3627ff 968.5px,#3425fb 969.5px,#2319a8 974.5px,#17106e 977.5px,#0d0a40 979.5px,#080524 980.5px,#010003 981.5px,#000 982.5px)"></i>
<i style="background:linear-gradient(90deg,#000 298.5px,#0d093c 300.5px,#1a137f 303.5px,#2d20d8 308.5px,#3425f9 310.5px,#3627ff 311.5px,#7e5cff 346.5px,#ca87ff 376.5px,#ffa5ff 394.5px,#ffe3ff 423.5px,#fff 435.5px,#fffdff 494.5px,#ffc3ff 513.5px,#fea5ff 521.5px,#dc91ff 526.5px,#dc91ff 753.5px,#fea5ff 758.5px,#ffe0ff 775.5px,#fff 786.5px,#fff 845.5px,#ffbfff 872.5px,#ffa5ff 885.5px,#aa75ff 915.5px,#6045ff 947.5px,#3627ff 968.5px,#3425f9 969.5px,#2219a5 974.5px,#16106a 977.5px,#0d093c 979.5px,#000 981.5px)"></i>
<i style="background:linear-gradient(90deg,#000 298.5px,#050419 299.5px,#0c0838 300.5px,#150f67 302.5px,#251bb4 306.5px,#3325f6 310.5px,#3627ff 311.5px,#7e5bff 346.5px,#ca87ff 376.5px,#ffa5ff 394.5px,#ffe3ff 423.5px,#fff 435.5px,#fffdff 494.5px,#ffc3ff 513.5px,#ffa5ff 521.5px,#dc92ff 526.5px,#dc92ff 753.5px,#ffa5ff 758.5px,#ffe0ff 775.5px,#fff 786.5px,#fffeff 845.5px,#ffbfff 872.5px,#ffa5ff 885.5px,#ac77ff 914.5px,#664aff 944.5px,#3627ff 968.5px,#3325f6 969.5px,#2218a2 974.5px,#150f67 977.5px,#0c0838 979.5px,#050419 980.5px,#000 981.5px)"></i>
<i style="background:linear-gradient(90deg,#000 298.5px,#040313 299.5px,#0b0833 300.5px,#150f63 302.5px,#251ab1 306.5px,#3324f4 310.5px,#3626ff 311.5px,#7e5bff 346.5px,#c987ff 376.5px,#ffa5ff 394.5px,#ffe2ff 423.5px,#fff 435.5px,#fffdff 494.5px,#ffc3ff 513.5px,#ffa5ff 521.5px,#dd92ff 526.5px,#dd92ff 753.5px,#ffa5ff 758.5px,#ffe1ff 775.5px,#fff 786.5px,#fffeff 845.5px,#ffbfff 872.5px,#ffa5ff 885.5px,#ae78ff 913.5px,#6a4cff 942.5px,#3626ff 968.5px,#3324f4 969.5px,#21189f 974.5px,#150f63 977.5px,#0b0833 979.5px,#040313 980.5px,#000 981.5px)"></i>
<i style="background:linear-gradient(90deg,#000 298.5px,#03020d 299.5px,#0a072f 300.5px,#140e60 302.5px,#20179c 305.5px,#3224f1 310.5px,#3526ff 311.5px,#7d5bff 346.5px,#c987ff 376.5px,#ffa5ff 394.5px,#ffe2ff 423.5px,#fff 435.5px,#fffeff 494.5px,#ffc3ff 513.5px,#ffa5ff 521.5px,#dd92ff 526.5px,#dd92ff 753.5px,#ffa5ff 758.5px,#ffe1ff 775.5px,#fff 786.5px,#fffeff 845.5px,#ffbfff 872.5px,#ffa5ff 885.5px,#b179ff 912.5px,#674bff 943.5px,#3526ff 968.5px,#2b1fd0 971.5px,#1c1489 975.5px,#0f0b49 978.5px,#0a072f 979.5px,#03020d 980.5px,#000 981.5px)"></i>
<i style="background:linear-gradient(90deg,#000 298.5px,#020108 299.5px,#09062a 300.5px,#130e5c 302.5px,#201799 305.5px,#3224ef 310.5px,#3526ff 311.5px,#7d5bff 346.5px,#c987ff 376.5px,#ffa5ff 394.5px,#ffe2ff 423.5px,#fff 435.5px,#fffeff 494.5px,#ffc4ff 513.5px,#ffa6ff 521.5px,#dd92ff 526.5px,#dd92ff 753.5px,#ffa6ff 758.5px,#ffe1ff 775.5px,#fff 786.5px,#fffeff 845.5px,#ffbeff 872.5px,#ffa5ff 885.5px,#b079ff 912.5px,#674aff 943.5px,#3526ff 968.5px,#2419ab 973.5px,#181172 976.5px,#0e0a45 978.5px,#09062a 979.5px,#020108 980.5px,#000 981.5px)"></i>
<i style="background:linear-gradient(90deg,#000 298.5px,#010003 299.5px,#080525 300.5px,#0d0a41 301.5px,#1b1383 304.5px,#2e21dc 309.5px,#3426fc 311.5px,#3a2aff 314.5px,#8460ff 349.5px,#ce8aff 378.5px,#fea5ff 394.5px,#ffe2ff 423.5px,#fff 435.5px,#fffeff 494.5px,#ffc4ff 513.5px,#ffa6ff 521.5px,#dd92ff 526.5px,#dc92ff 752.5px,#dd92ff 753.5px,#ffa6ff 758.5px,#ffe2ff 775.5px,#fff 786.5px,#fffeff 845.5px,#ffbeff 872.5px,#fea5ff 885.5px,#b079ff 912.5px,#6449ff 944.5px,#3727ff 967.5px,#3426fc 968.5px,#2319a8 973.5px,#17106e 976.5px,#0d0a41 978.5px,#080525 979.5px,#010003 980.5px,#000 981.5px)"></i>
<i style="background:linear-gradient(90deg,#000 299.5px,#0d093c 301.5px,#1a137f 304.5px,#2d20d9 309.5px,#3425fa 311.5px,#3627ff 312.5px,#7f5cff 347.5px,#cb88ff 377.5px,#ffa6ff 395.5px,#ffe4ff 424.5px,#fff 435.5px,#fff 494.5px,#ffc4ff 513.5px,#ffa6ff 521.5px,#de92ff 526.5px,#dc92ff 752.5px,#de92ff 753.5px,#ffa6ff 758.5px,#ffe2ff 775.5px,#fff 785.5px,#fffdff 845.5px,#ffbeff 872.5px,#fea4ff 885.5px,#b079ff 912.5px,#6448ff 944.5px,#3627ff 967.5px,#3425fa 968.5px,#2219a5 973.5px,#16106b 976.5px,#0d093c 978.5px,#000 980.5px)"></i>
<i style="background:linear-gradient(90deg,#000 299.5px,#05041a 300.5px,#0c0838 301.5px,#150f67 303.5px,#251bb4 307.5px,#3325f7 311.5px,#3627ff 312.5px,#7e5cff 347.5px,#cb88ff 377.5px,#ffa6ff 395.5px,#ffe4ff 424.5px,#fff 435.5px,#fff 494.5px,#ffc8ff 512.5px,#ffa6ff 521.5px,#ec9bff 524.5px,#de93ff 526.5px,#dc92ff 752.5px,#de93ff 753.5px,#fba3ff 757.5px,#ffa6ff 758.5px,#ffe2ff 775.5px,#fff 785.5px,#fffdff 845.5px,#ffbeff 872.5px,#fea4ff 885.5px,#af79ff 912.5px,#664aff 943.5px,#3627ff 967.5px,#3325f7 968.5px,#2218a2 973.5px,#150f67 976.5px,#0c0838 978.5px,#05041a 979.5px,#000 980.5px)"></i>
<i style="background:linear-gradient(90deg,#000 299.5px,#040313 300.5px,#0b0834 301.5px,#150f64 303.5px,#251ab1 307.5px,#3324f5 311.5px,#3626ff 312.5px,#7e5cff 347.5px,#ca88ff 377.5px,#ffa6ff 395.5px,#ffe4ff 424.5px,#fff 435.5px,#fff 494.5px,#ffc8ff 512.5px,#ffa7ff 521.5px,#f49fff 523.5px,#de93ff 526.5px,#dc92ff 747.5px,#de93ff 753.5px,#fba3ff 757.5px,#ffabff 759.5px,#ffe5ff 776.5px,#fff 785.5px,#fffdff 845.5px,#ffbeff 872.5px,#fda4ff 885.5px,#af78ff 912.5px,#684bff 942.5px,#3626ff 967.5px,#3324f5 968.5px,#21189f 973.5px,#150f64 976.5px,#0b0834 978.5px,#040313 979.5px,#000 980.5px)"></i>
<i style="background:linear-gradient(90deg,#000 299.5px,#03020d 300.5px,#0a072f 301.5px,#140e60 303.5px,#21179c 306.5px,#3224f2 311.5px,#3526ff 312.5px,#7e5bff 347.5px,#ca87ff 377.5px,#ffa6ff 395.5px,#ffe4ff 424.5px,#fff 435.5px,#fff 494.5px,#ffc9ff 512.5px,#ffa7ff 521.5px,#f59fff 523.5px,#df93ff 526.5px,#dc91ff 572.5px,#dd92ff 752.5px,#df93ff 753.5px,#fca3ff 757.5px,#ffabff 759.5px,#ffe6ff 776.5px,#fff 785.5px,#fff 844.5px,#fbf 873.5px,#fda4ff 885.5px,#af78ff 912.5px,#684bff 942.5px,#3526ff 967.5px,#2f22e2 969.5px,#1d1489 974.5px,#0f0b49 977.5px,#0a072f 978.5px,#03020d 979.5px,#000 980.5px)"></i>
<i style="background:linear-gradient(90deg,#000 299.5px,#020108 300.5px,#09062a 301.5px,#130e5d 303.5px,#201799 306.5px,#3224f0 311.5px,#3526ff 312.5px,#7e5bff 347.5px,#ca87ff 377.5px,#ffa6ff 395.5px,#ffe3ff 424.5px,#fff 435.5px,#fffdff 495.5px,#ffc5ff 513.5px,#ffa7ff 521.5px,#fca3ff 522.5px,#df93ff 526.5px,#dd92ff 531.5px,#dd92ff 752.5px,#df93ff 753.5px,#fca3ff 757.5px,#ffafff 760.5px,#ffe9ff 777.5px,#fff 785.5px,#fff 844.5px,#ffbdff 872.5px,#ffa6ff 884.5px,#a975ff 914.5px,#6549ff 943.5px,#3526ff 967.5px,#241aac 972.5px,#181172 975.5px,#0e0a45 977.5px,#09062a 978.5px,#020108 979.5px,#000 980.5px)"></i>
<i style="background:linear-gradient(90deg,#000 299.5px,#010003 300.5px,#080525 301.5px,#0e0a41 302.5px,#1b1483 305.5px,#2e21dd 310.5px,#3526fd 312.5px,#805dff 348.5px,#cc89ff 378.5px,#ffa5ff 395.5px,#ffe3ff 424.5px,#fff 435.5px,#fffdff 495.5px,#ffc6ff 513.5px,#ffa8ff 521.5px,#fda4ff 522.5px,#e093ff 526.5px,#dd92ff 529.5px,#dd92ff 752.5px,#e093ff 753.5px,#fda4ff 757.5px,#ffb7ff 762.5px,#fff2ff 780.5px,#fff 785.5px,#fff 844.5px,#ffbdff 872.5px,#ffa5ff 884.5px,#ac76ff 913.5px,#6549ff 943.5px,#3526fd 967.5px,#2319a9 972.5px,#17116f 975.5px,#0e0a41 977.5px,#080525 978.5px,#010003 979.5px,#000 980.5px)"></i>
<i style="background:linear-gradient(90deg,#000 300.5px,#0d093d 302.5px,#1b1380 305.5px,#2d21da 310.5px,#3425fb 312.5px,#3627ff 313.5px,#7f5cff 348.5px,#cc89ff 378.5px,#ffa5ff 395.5px,#ffe3ff 424.5px,#fff 435.5px,#fffeff 495.5px,#ffc6ff 513.5px,#fda4ff 522.5px,#e094ff 526.5px,#dd92ff 528.5px,#dd92ff 752.5px,#e094ff 753.5px,#fda4ff 757.5px,#ffe0ff 774.5px,#fff 785.5px,#fff 844.5px,#ffbfff 871.5px,#ffa5ff 884.5px,#ae78ff 912.5px,#6549ff 943.5px,#3627ff 966.5px,#3425fb 967.5px,#2319a6 972.5px,#16106b 975.5px,#0d093d 977.5px,#000 979.5px)"></i>
<i style="background:linear-gradient(90deg,#000 300.5px,#05041a 301.5px,#0c0838 302.5px,#160f68 304.5px,#261bb5 308.5px,#3425f8 312.5px,#3627ff 313.5px,#7f5cff 348.5px,#c8f 378.5px,#ffa5ff 395.5px,#ffe3ff 424.5px,#fff 435.5px,#fffeff 495.5px,#ffc6ff 513.5px,#fda4ff 522.5px,#e194ff 526.5px,#dd92ff 528.5px,#dd92ff 752.5px,#e898ff 754.5px,#fda4ff 757.5px,#ffe1ff 774.5px,#fff 785.5px,#fff 844.5px,#ffbfff 871.5px,#ffa5ff 884.5px,#b079ff 911.5px,#6449ff 943.5px,#3627ff 966.5px,#3425f8 967.5px,#2218a3 972.5px,#160f68 975.5px,#0c0838 977.5px,#05041a 978.5px,#000 979.5px)"></i>
<i style="background:linear-gradient(90deg,#000 300.5px,#040313 301.5px,#0b0834 302.5px,#150f64 304.5px,#251bb2 308.5px,#3325f6 312.5px,#3627ff 313.5px,#7f5cff 348.5px,#cb88ff 378.5px,#ffa5ff 395.5px,#ffe3ff 424.5px,#fff 436.5px,#fffeff 495.5px,#ffc6ff 513.5px,#fea4ff 522.5px,#e194ff 526.5px,#dd92ff 527.5px,#dd92ff 752.5px,#e998ff 754.5px,#fea4ff 757.5px,#ffe1ff 774.5px,#fff 785.5px,#fff 844.5px,#ffbfff 871.5px,#ffa5ff 884.5px,#b079ff 911.5px,#6448ff 943.5px,#3627ff 966.5px,#3325f6 967.5px,#2118a0 972.5px,#150f64 975.5px,#0b0834 977.5px,#040313 978.5px,#000 979.5px)"></i>
<i style="background:linear-gradient(90deg,#000 300.5px,#03020d 301.5px,#0a072f 302.5px,#140e61 304.5px,#21179d 307.5px,#3324f3 312.5px,#3526ff 313.5px,#7e5cff 348.5px,#cb88ff 378.5px,#ffa5ff 395.5px,#ffe3ff 424.5px,#fff 436.5px,#fffeff 495.5px,#ffc7ff 513.5px,#fea5ff 522.5px,#e295ff 526.5px,#dd92ff 527.5px,#dd92ff 752.5px,#f09dff 755.5px,#fea5ff 757.5px,#ffe1ff 774.5px,#fffeff 784.5px,#fffeff 844.5px,#ffbfff 871.5px,#ffa5ff 884.5px,#b079ff 911.5px,#664aff 942.5px,#3526ff 966.5px,#3324f3 967.5px,#21179d 972.5px,#140e61 975.5px,#0a072f 977.5px,#03020d 978.5px,#000 979.5px)"></i>
<i style="background:linear-gradient(90deg,#000 300.5px,#020108 301.5px,#09062a 302.5px,#130e5d 304.5px,#20179a 307.5px,#3224f1 312.5px,#3526ff 313.5px,#7e5cff 348.5px,#cb88ff 378.5px,#fea5ff 395.5px,#ffe2ff 424.5px,#fff 436.5px,#fff 495.5px,#ffc7ff 513.5px,#ffa5ff 522.5px,#dd92ff 527.5px,#dd92ff 752.5px,#ffa5ff 757.5px,#ffdeff 773.5px,#fff 784.5px,#fffeff 844.5px,#ffbeff 871.5px,#fea5ff 884.5px,#af79ff 911.5px,#684bff 941.5px,#3526ff 966.5px,#281cbe 970.5px,#181173 974.5px,#0e0a46 976.5px,#09062a 977.5px,#020108 978.5px,#000 979.5px)"></i>
<i style="background:linear-gradient(90deg,#000 300.5px,#010003 301.5px,#080625 302.5px,#0e0a41 303.5px,#1b1484 306.5px,#2e21de 311.5px,#3526fe 313.5px,#7e5bff 348.5px,#ca88ff 378.5px,#ffa6ff 396.5px,#ffe5ff 425.5px,#fff 436.5px,#fff 495.5px,#ffc7ff 513.5px,#ffa5ff 522.5px,#dd92ff 527.5px,#dd92ff 752.5px,#ffa5ff 757.5px,#ffdfff 773.5px,#fff 784.5px,#fffeff 844.5px,#ffbeff 871.5px,#fea4ff 884.5px,#af78ff 911.5px,#6a4cff 940.5px,#3526fe 966.5px,#2319aa 971.5px,#17116f 974.5px,#0e0a41 976.5px,#080625 977.5px,#010003 978.5px,#000 979.5px)"></i>
<i style="background:linear-gradient(90deg,#000 301.5px,#0d093d 303.5px,#1b1380 306.5px,#2a1eca 310.5px,#3426fc 313.5px,#3828ff 315.5px,#825eff 350.5px,#cd89ff 379.5px,#ffa6ff 396.5px,#ffe4ff 425.5px,#fff 436.5px,#fff 495.5px,#ffc8ff 513.5px,#ffa6ff 522.5px,#dd92ff 527.5px,#dd92ff 752.5px,#ffa6ff 757.5px,#ffdfff 773.5px,#fff 784.5px,#fffeff 844.5px,#ffbeff 871.5px,#fea4ff 884.5px,#af78ff 911.5px,#694cff 940.5px,#3727ff 965.5px,#3426fc 966.5px,#2319a7 971.5px,#16106c 974.5px,#0d093d 976.5px,#000 978.5px)"></i>
<i style="background:linear-gradient(90deg,#000 301.5px,#05041a 302.5px,#0c0839 303.5px,#161068 305.5px,#261bb6 309.5px,#3425f9 313.5px,#3627ff 314.5px,#805dff 349.5px,#cd89ff 379.5px,#ffa6ff 396.5px,#ffe4ff 425.5px,#fff 436.5px,#fff 495.5px,#ffcbff 512.5px,#ffa6ff 522.5px,#de92ff 527.5px,#de92ff 752.5px,#ffa6ff 757.5px,#ffdfff 773.5px,#fff 784.5px,#fffeff 844.5px,#ffbeff 871.5px,#fda4ff 884.5px,#af78ff 911.5px,#674aff 941.5px,#3627ff 965.5px,#3425f9 966.5px,#2218a4 971.5px,#161068 974.5px,#0c0839 976.5px,#05041a 977.5px,#000 978.5px)"></i>
<i style="background:linear-gradient(90deg,#000 301.5px,#040314 302.5px,#0b0834 303.5px,#150f65 305.5px,#251bb3 309.5px,#3325f7 313.5px,#3627ff 314.5px,#7f5cff 349.5px,#cc89ff 379.5px,#ffa6ff 396.5px,#ffe4ff 425.5px,#fff 436.5px,#fffdff 496.5px,#ffc5ff 514.5px,#ffa6ff 522.5px,#de93ff 527.5px,#de93ff 752.5px,#ffa6ff 757.5px,#ffe0ff 773.5px,#fff 784.5px,#fffeff 844.5px,#ffbeff 871.5px,#fda4ff 884.5px,#ae78ff 911.5px,#664aff 941.5px,#3627ff 965.5px,#3325f7 966.5px,#2118a1 971.5px,#150f65 974.5px,#0b0834 976.5px,#040314 977.5px,#000 978.5px)"></i>
<i style="background:linear-gradient(90deg,#000 301.5px,#03020e 302.5px,#0a072f 303.5px,#140e61 305.5px,#21189e 308.5px,#3324f4 313.5px,#3626ff 314.5px,#7f5cff 349.5px,#cc89ff 379.5px,#ffa6ff 396.5px,#ffe4ff 425.5px,#fff 436.5px,#fffdff 496.5px,#ffc5ff 514.5px,#ffa6ff 522.5px,#ec9aff 525.5px,#de93ff 527.5px,#de93ff 752.5px,#ffa6ff 757.5px,#ffe0ff 773.5px,#fff 784.5px,#fffdff 844.5px,#ffbdff 871.5px,#ffa6ff 883.5px,#a975ff 913.5px,#5b42ff 946.5px,#3626ff 965.5px,#3324f4 966.5px,#21189e 971.5px,#140e61 974.5px,#0a072f 976.5px,#03020e 977.5px,#000 978.5px)"></i>
<i style="background:linear-gradient(90deg,#000 301.5px,#020108 302.5px,#09062b 303.5px,#130e5e 305.5px,#20179b 308.5px,#3224f2 313.5px,#3526ff 314.5px,#7f5cff 349.5px,#c8f 379.5px,#ffa5ff 396.5px,#ffe4ff 425.5px,#fff 436.5px,#fffeff 496.5px,#ffc5ff 514.5px,#ffa7ff 522.5px,#f49fff 524.5px,#df93ff 527.5px,#df93ff 752.5px,#fba3ff 756.5px,#ffa7ff 757.5px,#ffe0ff 773.5px,#fff 784.5px,#fffdff 844.5px,#ffbdff 871.5px,#ffa5ff 883.5px,#ab76ff 912.5px,#5d43ff 945.5px,#3526ff 965.5px,#2f22e1 967.5px,#1c1487 972.5px,#0f0a46 975.5px,#09062b 976.5px,#020108 977.5px,#000 978.5px)"></i>
<i style="background:linear-gradient(90deg,#000 301.5px,#010003 302.5px,#080625 303.5px,#0e0a42 304.5px,#1c1484 307.5px,#2e21df 312.5px,#3526ff 314.5px,#7e5cff 349.5px,#c8f 379.5px,#ffa5ff 396.5px,#ffe3ff 425.5px,#fff 436.5px,#fffeff 496.5px,#ffc5ff 514.5px,#ffa7ff 522.5px,#f49fff 524.5px,#df93ff 527.5px,#de92ff 751.5px,#df93ff 752.5px,#fba3ff 756.5px,#ffabff 758.5px,#ffe7ff 775.5px,#fff 784.5px,#fff 843.5px,#fbf 872.5px,#ffa5ff 883.5px,#ad77ff 911.5px,#6348ff 942.5px,#3526ff 965.5px,#2319aa 970.5px,#171170 973.5px,#0e0a42 975.5px,#080625 976.5px,#010003 977.5px,#000 978.5px)"></i>
<i style="background:linear-gradient(90deg,#000 302.5px,#0d093d 304.5px,#17106c 306.5px,#271cb9 310.5px,#3526fd 314.5px,#4431ff 322.5px,#8f66ff 356.5px,#da90ff 384.5px,#ffa5ff 396.5px,#ffe3ff 425.5px,#fff 436.5px,#fffeff 496.5px,#ffc6ff 514.5px,#ffa7ff 522.5px,#fca3ff 523.5px,#df93ff 527.5px,#de92ff 751.5px,#df93ff 752.5px,#fca3ff 756.5px,#ffabff 758.5px,#ffe7ff 775.5px,#fff 784.5px,#fff 843.5px,#ffbdff 871.5px,#ffa5ff 883.5px,#b079ff 910.5px,#674bff 940.5px,#3727ff 964.5px,#3526fd 965.5px,#2319a7 970.5px,#17106c 973.5px,#0d093d 975.5px,#000 977.5px)"></i>
<i style="background:linear-gradient(90deg,#000 302.5px,#05041a 303.5px,#0c0839 304.5px,#161069 306.5px,#261bb7 310.5px,#3425fa 314.5px,#3627ff 315.5px,#805dff 350.5px,#cb88ff 379.5px,#ffa5ff 396.5px,#ffe3ff 425.5px,#fff 436.5px,#fffeff 496.5px,#ffc6ff 514.5px,#ffa8ff 522.5px,#fca4ff 523.5px,#df93ff 527.5px,#de92ff 751.5px,#df93ff 752.5px,#fca4ff 756.5px,#ffb3ff 760.5px,#ffedff 777.5px,#fff 784.5px,#fff 843.5px,#ffbdff 871.5px,#ffa5ff 883.5px,#b27aff 909.5px,#694cff 939.5px,#3627ff 964.5px,#3425fa 965.5px,#2218a4 970.5px,#161069 973.5px,#0c0839 975.5px,#05041a 976.5px,#000 977.5px)"></i>
<i style="background:linear-gradient(90deg,#000 302.5px,#040314 303.5px,#0b0834 304.5px,#150f65 306.5px,#251bb4 310.5px,#3325f8 314.5px,#3627ff 315.5px,#805dff 350.5px,#cb88ff 379.5px,#fea5ff 396.5px,#ffe3ff 425.5px,#fff 436.5px,#fff 496.5px,#ffc6ff 514.5px,#fda4ff 523.5px,#e094ff 527.5px,#de92ff 745.5px,#e094ff 752.5px,#fda4ff 756.5px,#ffdeff 772.5px,#fff 783.5px,#fff 843.5px,#ffbfff 870.5px,#fea5ff 883.5px,#b27aff 909.5px,#6b4eff 938.5px,#3627ff 964.5px,#3325f8 965.5px,#2218a1 970.5px,#150f65 973.5px,#0b0834 975.5px,#040314 976.5px,#000 977.5px)"></i>
<i style="background:linear-gradient(90deg,#000 302.5px,#03020e 303.5px,#0a0730 304.5px,#140f62 306.5px,#21189e 309.5px,#3325f5 314.5px,#3627ff 315.5px,#805dff 350.5px,#ca88ff 379.5px,#fea5ff 396.5px,#ffe3ff 425.5px,#fff 436.5px,#fff 496.5px,#ffc7ff 514.5px,#fda4ff 523.5px,#e094ff 527.5px,#dd92ff 565.5px,#de93ff 751.5px,#e094ff 752.5px,#fda4ff 756.5px,#ffdeff 772.5px,#fff 783.5px,#fff 843.5px,#ffbfff 870.5px,#fea5ff 883.5px,#b17aff 909.5px,#694cff 939.5px,#3627ff 964.5px,#3325f5 965.5px,#21189e 970.5px,#140f62 973.5px,#0a0730 975.5px,#03020e 976.5px,#000 977.5px)"></i>
<i style="background:linear-gradient(90deg,#000 302.5px,#020109 303.5px,#09062b 304.5px,#140e5e 306.5px,#20179b 309.5px,#3224f3 314.5px,#3526ff 315.5px,#7f5cff 350.5px,#ca87ff 379.5px,#ffa6ff 397.5px,#ffe5ff 426.5px,#fff 436.5px,#fff 496.5px,#ffc7ff 514.5px,#fea4ff 523.5px,#e194ff 527.5px,#de93ff 532.5px,#de93ff 751.5px,#e194ff 752.5px,#fea4ff 756.5px,#ffdfff 772.5px,#fff 783.5px,#fff 843.5px,#ffbeff 870.5px,#fea4ff 883.5px,#b17aff 909.5px,#664aff 940.5px,#3526ff 964.5px,#3224f3 965.5px,#20179b 970.5px,#140e5e 973.5px,#09062b 975.5px,#020109 976.5px,#000 977.5px)"></i>
<i style="background:linear-gradient(90deg,#000 302.5px,#010003 303.5px,#080626 304.5px,#0e0a42 305.5px,#1c1485 308.5px,#2e21df 313.5px,#3526ff 315.5px,#7f5cff 350.5px,#ca87ff 379.5px,#ffa6ff 397.5px,#ffe5ff 426.5px,#fff 437.5px,#fff 496.5px,#ffcbff 513.5px,#fea5ff 523.5px,#e194ff 527.5px,#de93ff 530.5px,#de93ff 751.5px,#e194ff 752.5px,#fea5ff 756.5px,#ffdfff 772.5px,#fff 783.5px,#fff 843.5px,#ffbeff 870.5px,#fea4ff 883.5px,#b179ff 909.5px,#664aff 940.5px,#3526ff 964.5px,#271cbd 968.5px,#171170 972.5px,#0e0a42 974.5px,#080626 975.5px,#010003 976.5px,#000 977.5px)"></i>
<i style="background:linear-gradient(90deg,#000 303.5px,#0d093e 305.5px,#17106d 307.5px,#271cba 311.5px,#3526fe 315.5px,#7f5cff 350.5px,#c987ff 379.5px,#ffa6ff 397.5px,#ffe5ff 426.5px,#fff 437.5px,#fffdff 497.5px,#ffc4ff 515.5px,#ffa5ff 523.5px,#e295ff 527.5px,#de93ff 529.5px,#de93ff 751.5px,#e295ff 752.5px,#ffa5ff 756.5px,#ffdfff 772.5px,#fff 783.5px,#fffeff 843.5px,#ffbeff 870.5px,#fda4ff 883.5px,#b179ff 909.5px,#664aff 940.5px,#3526fe 964.5px,#2319a8 969.5px,#17106d 972.5px,#0d093e 974.5px,#000 976.5px)"></i>
<i style="background:linear-gradient(90deg,#000 303.5px,#05041a 304.5px,#0c0939 305.5px,#161069 307.5px,#261bb7 311.5px,#3425fb 315.5px,#3828ff 317.5px,#815dff 351.5px,#cc89ff 380.5px,#ffa6ff 397.5px,#ffe4ff 426.5px,#fff 437.5px,#fffdff 497.5px,#ffc4ff 515.5px,#ffa5ff 523.5px,#e295ff 527.5px,#de93ff 529.5px,#de93ff 751.5px,#ea99ff 753.5px,#ffa5ff 756.5px,#ffdfff 772.5px,#fff 783.5px,#fffeff 843.5px,#ffbeff 870.5px,#fda4ff 883.5px,#b079ff 909.5px,#6549ff 940.5px,#3627ff 963.5px,#3425fb 964.5px,#2219a5 969.5px,#161069 972.5px,#0c0939 974.5px,#05041a 975.5px,#000 976.5px)"></i>
<i style="background:linear-gradient(90deg,#000 303.5px,#040314 304.5px,#0b0835 305.5px,#150f66 307.5px,#261bb4 311.5px,#3425f9 315.5px,#3627ff 316.5px,#805dff 351.5px,#c8f 380.5px,#ffa6ff 397.5px,#ffe4ff 426.5px,#fff 437.5px,#fffeff 497.5px,#ffc4ff 515.5px,#ffa6ff 523.5px,#e395ff 527.5px,#de93ff 528.5px,#de93ff 751.5px,#ea99ff 753.5px,#ffa6ff 756.5px,#ffe0ff 772.5px,#fff 783.5px,#fffeff 843.5px,#ffbeff 870.5px,#ffa6ff 882.5px,#ab76ff 911.5px,#6348ff 941.5px,#3627ff 963.5px,#3425f9 964.5px,#2218a2 969.5px,#150f66 972.5px,#0b0835 974.5px,#040314 975.5px,#000 976.5px)"></i>
<i style="background:linear-gradient(90deg,#000 303.5px,#03020e 304.5px,#0a0730 305.5px,#140f62 307.5px,#21189f 310.5px,#3325f6 315.5px,#3627ff 316.5px,#805dff 351.5px,#cb88ff 380.5px,#ffa5ff 397.5px,#ffe4ff 426.5px,#fff 437.5px,#fffeff 497.5px,#ffc5ff 515.5px,#ffa6ff 523.5px,#de93ff 528.5px,#de93ff 751.5px,#f29eff 754.5px,#ffa6ff 756.5px,#ffe0ff 772.5px,#fff 783.5px,#fffeff 843.5px,#ffbdff 870.5px,#ffa5ff 882.5px,#ad77ff 910.5px,#674bff 939.5px,#3627ff 963.5px,#3325f6 964.5px,#21189f 969.5px,#140f62 972.5px,#0a0730 974.5px,#03020e 975.5px,#000 976.5px)"></i>
<i style="background:linear-gradient(90deg,#000 303.5px,#020109 304.5px,#09062b 305.5px,#140e5e 307.5px,#20179c 310.5px,#3324f4 315.5px,#3626ff 316.5px,#805dff 351.5px,#cb88ff 380.5px,#ffa5ff 397.5px,#ffe4ff 426.5px,#fff 437.5px,#fffeff 497.5px,#ffc5ff 515.5px,#ffa6ff 523.5px,#df93ff 528.5px,#df93ff 751.5px,#ffa6ff 756.5px,#ffe0ff 772.5px,#fffeff 782.5px,#fffeff 843.5px,#ffbdff 870.5px,#ffa5ff 882.5px,#af79ff 909.5px,#694cff 938.5px,#3626ff 963.5px,#3324f4 964.5px,#20179c 969.5px,#140e5e 972.5px,#09062b 974.5px,#020109 975.5px,#000 976.5px)"></i>
<i style="background:linear-gradient(90deg,#000 303.5px,#010103 304.5px,#080626 305.5px,#0e0a42 306.5px,#1c1485 309.5px,#2f21e0 314.5px,#3526ff 316.5px,#7f5dff 351.5px,#cb88ff 380.5px,#ffa5ff 397.5px,#ffe4ff 426.5px,#fff 437.5px,#fff 497.5px,#ffc5ff 515.5px,#ffa6ff 523.5px,#df93ff 528.5px,#df93ff 751.5px,#ffa6ff 756.5px,#ffe1ff 772.5px,#fff 782.5px,#fffdff 843.5px,#ffbdff 870.5px,#ffa5ff 882.5px,#b27aff 908.5px,#694cff 938.5px,#3526ff 963.5px,#2b1fcf 966.5px,#1c1485 970.5px,#0e0a42 973.5px,#080626 974.5px,#010103 975.5px,#000 976.5px)"></i>
<i style="background:linear-gradient(90deg,#000 304.5px,#0d093e 306.5px,#17106d 308.5px,#271cbb 312.5px,#3526ff 316.5px,#7f5cff 351.5px,#cb88ff 380.5px,#ffa5ff 397.5px,#ffe4ff 426.5px,#fff 437.5px,#fff 497.5px,#ffc6ff 515.5px,#ffa7ff 523.5px,#f39fff 525.5px,#df93ff 528.5px,#df93ff 751.5px,#fba3ff 755.5px,#ffa7ff 756.5px,#ffe1ff 772.5px,#fff 782.5px,#fffdff 843.5px,#ffbdff 870.5px,#ffa5ff 882.5px,#b17aff 908.5px,#684cff 938.5px,#3526ff 963.5px,#2319a9 968.5px,#17106d 971.5px,#0d093e 973.5px,#000 975.5px)"></i>
<i style="background:linear-gradient(90deg,#000 304.5px,#06041b 305.5px,#0c093a 306.5px,#16106a 308.5px,#261bb8 312.5px,#3426fc 316.5px,#3a2aff 319.5px,#8460ff 353.5px,#d08bff 382.5px,#fea5ff 397.5px,#ffe3ff 426.5px,#fff 437.5px,#fff 497.5px,#ffc6ff 515.5px,#ffa7ff 523.5px,#f49fff 525.5px,#df93ff 528.5px,#df93ff 751.5px,#fba3ff 755.5px,#ffabff 757.5px,#ffe4ff 773.5px,#fff 782.5px,#fffdff 843.5px,#ffbdff 870.5px,#fea5ff 882.5px,#b17aff 908.5px,#664aff 939.5px,#3727ff 962.5px,#3426fc 963.5px,#2219a6 968.5px,#16106a 971.5px,#0c093a 973.5px,#06041b 974.5px,#000 975.5px)"></i>
<i style="background:linear-gradient(90deg,#000 304.5px,#040314 305.5px,#0b0835 306.5px,#150f66 308.5px,#261bb5 312.5px,#3425fa 316.5px,#3627ff 317.5px,#7f5cff 351.5px,#ca87ff 380.5px,#ffa6ff 398.5px,#ffe6ff 427.5px,#fff 437.5px,#fff 497.5px,#ffcaff 514.5px,#ffa7ff 523.5px,#fca3ff 524.5px,#df93ff 528.5px,#df93ff 751.5px,#fca3ff 755.5px,#ffabff 757.5px,#ffe5ff 773.5px,#fff 782.5px,#fff 842.5px,#ffbaff 871.5px,#fea4ff 882.5px,#b179ff 908.5px,#6649ff 939.5px,#3627ff 962.5px,#3425fa 963.5px,#2218a3 968.5px,#150f66 971.5px,#0b0835 973.5px,#040314 974.5px,#000 975.5px)"></i>
<i style="background:linear-gradient(90deg,#000 304.5px,#03020e 305.5px,#0a0730 306.5px,#140f62 308.5px,#2118a0 311.5px,#3325f7 316.5px,#3627ff 317.5px,#7e5cff 351.5px,#ca87ff 380.5px,#ffa6ff 398.5px,#ffe5ff 427.5px,#fff 437.5px,#fff 497.5px,#ffceff 513.5px,#ffa8ff 523.5px,#fca3ff 524.5px,#e093ff 528.5px,#e093ff 751.5px,#fca3ff 755.5px,#ffb0ff 758.5px,#ffebff 775.5px,#fff 782.5px,#fff 842.5px,#ffbcff 870.5px,#fea4ff 882.5px,#b179ff 908.5px,#674bff 938.5px,#3627ff 962.5px,#3325f7 963.5px,#2118a0 968.5px,#140f62 971.5px,#0a0730 973.5px,#03020e 974.5px,#000 975.5px)"></i>
<i style="background:linear-gradient(90deg,#000 304.5px,#020109 305.5px,#09062b 306.5px,#140e5f 308.5px,#21179d 311.5px,#3324f5 316.5px,#3627ff 317.5px,#7e5bff 351.5px,#c987ff 380.5px,#ffa6ff 398.5px,#ffe5ff 427.5px,#fff 437.5px,#fffdff 498.5px,#ffc3ff 516.5px,#fda4ff 524.5px,#e094ff 528.5px,#e094ff 751.5px,#fda4ff 755.5px,#ffc7ff 764.5px,#fffdff 781.5px,#fff 842.5px,#ffbeff 869.5px,#fda4ff 882.5px,#b079ff 908.5px,#674bff 938.5px,#3627ff 962.5px,#3324f5 963.5px,#21179d 968.5px,#140e5f 971.5px,#09062b 973.5px,#020109 974.5px,#000 975.5px)"></i>
<i style="background:linear-gradient(90deg,#000 304.5px,#010104 305.5px,#080626 306.5px,#0e0a43 307.5px,#181171 309.5px,#281cbf 313.5px,#3224f2 316.5px,#3526ff 317.5px,#7e5bff 351.5px,#c987ff 380.5px,#ffa6ff 398.5px,#ffe5ff 427.5px,#fff 437.5px,#fffdff 498.5px,#ffc3ff 516.5px,#fda4ff 524.5px,#e094ff 528.5px,#df93ff 750.5px,#e094ff 751.5px,#fda4ff 755.5px,#ffdfff 771.5px,#fff 782.5px,#fff 842.5px,#ffbeff 869.5px,#fda4ff 882.5px,#b079ff 908.5px,#694cff 937.5px,#3526ff 962.5px,#2f22e1 964.5px,#1c1486 969.5px,#130e5b 971.5px,#0e0a43 972.5px,#080626 973.5px,#010104 974.5px,#000 975.5px)"></i>
<i style="background:linear-gradient(90deg,#000 305.5px,#0d093e 307.5px,#17106e 309.5px,#271cbc 313.5px,#3526ff 317.5px,#7d5bff 351.5px,#c987ff 380.5px,#ffa6ff 398.5px,#ffe5ff 427.5px,#fff 437.5px,#fffeff 498.5px,#ffc4ff 516.5px,#fea4ff 524.5px,#e194ff 528.5px,#df93ff 750.5px,#e194ff 751.5px,#fea4ff 755.5px,#ffdfff 771.5px,#fff 782.5px,#fff 842.5px,#ffbeff 869.5px,#ffa6ff 881.5px,#a874ff 911.5px,#6247ff 940.5px,#3526ff 962.5px,#2319a9 967.5px,#17106e 970.5px,#0d093e 972.5px,#000 974.5px)"></i>
<i style="background:linear-gradient(90deg,#000 305.5px,#06041b 306.5px,#0c093a 307.5px,#16106a 309.5px,#261cb9 313.5px,#3526fd 317.5px,#7f5cff 352.5px,#cb88ff 381.5px,#ffa5ff 398.5px,#ffe5ff 427.5px,#fff 437.5px,#fffeff 498.5px,#ffc4ff 516.5px,#fea5ff 524.5px,#e194ff 528.5px,#df93ff 750.5px,#e194ff 751.5px,#fea5ff 755.5px,#ffe0ff 771.5px,#fff 782.5px,#fff 842.5px,#ffbeff 869.5px,#ffa5ff 881.5px,#aa76ff 910.5px,#6448ff 939.5px,#3526fd 962.5px,#2319a7 967.5px,#16106a 970.5px,#0c093a 972.5px,#06041b 973.5px,#000 974.5px)"></i>
<i style="background:linear-gradient(90deg,#000 305.5px,#040314 306.5px,#0b0835 307.5px,#150f67 309.5px,#261bb6 313.5px,#3425fb 317.5px,#3627ff 318.5px,#7f5cff 352.5px,#cb88ff 381.5px,#ffa5ff 398.5px,#ffe5ff 427.5px,#fff 438.5px,#fffeff 498.5px,#ffc4ff 516.5px,#ffa5ff 524.5px,#e194ff 528.5px,#df93ff 743.5px,#e194ff 751.5px,#ffa5ff 755.5px,#ffe0ff 771.5px,#fffeff 781.5px,#fff 842.5px,#ffbeff 869.5px,#ffa5ff 881.5px,#ac77ff 909.5px,#6448ff 939.5px,#3627ff 961.5px,#3425fb 962.5px,#2218a3 967.5px,#150f67 970.5px,#0b0835 972.5px,#040314 973.5px,#000 974.5px)"></i>
<i style="background:linear-gradient(90deg,#000 305.5px,#03020e 306.5px,#0a0730 307.5px,#150f63 309.5px,#2118a0 312.5px,#3425f8 317.5px,#3627ff 318.5px,#7f5cff 352.5px,#cb88ff 381.5px,#ffa5ff 398.5px,#ffe4ff 427.5px,#fff 438.5px,#fff 498.5px,#ffc5ff 516.5px,#ffa5ff 524.5px,#e195ff 528.5px,#df93ff 560.5px,#df93ff 750.5px,#e195ff 751.5px,#ffa5ff 755.5px,#ffe0ff 771.5px,#fff 781.5px,#fffeff 842.5px,#ffbdff 869.5px,#ffa5ff 881.5px,#af78ff 908.5px,#664aff 938.5px,#3627ff 961.5px,#3425f8 962.5px,#2118a0 967.5px,#150f63 970.5px,#0a0730 972.5px,#03020e 973.5px,#000 974.5px)"></i>
<i style="background:linear-gradient(90deg,#000 305.5px,#020109 306.5px,#09062c 307.5px,#140e5f 309.5px,#21179d 312.5px,#3325f6 317.5px,#3627ff 318.5px,#7f5cff 352.5px,#ca88ff 381.5px,#ffa5ff 398.5px,#ffe4ff 427.5px,#fff 438.5px,#fff 498.5px,#ffc5ff 516.5px,#ffa5ff 524.5px,#e295ff 528.5px,#df93ff 533.5px,#df93ff 750.5px,#e295ff 751.5px,#ffa5ff 755.5px,#ffe1ff 771.5px,#fff 781.5px,#fffeff 842.5px,#ffbdff 869.5px,#ffa5ff 881.5px,#b17aff 907.5px,#6549ff 938.5px,#3627ff 961.5px,#3325f6 962.5px,#21179d 967.5px,#140e5f 970.5px,#09062c 972.5px,#020109 973.5px,#000 974.5px)"></i>
<i style="background:linear-gradient(90deg,#000 305.5px,#010104 306.5px,#080626 307.5px,#0e0a43 308.5px,#181172 310.5px,#281dbf 314.5px,#3224f3 317.5px,#3626ff 318.5px,#7e5cff 352.5px,#ca87ff 381.5px,#ffa5ff 398.5px,#ffe4ff 427.5px,#fff 438.5px,#fff 498.5px,#ffc9ff 515.5px,#ffa6ff 524.5px,#e395ff 528.5px,#e093ff 531.5px,#e093ff 750.5px,#e395ff 751.5px,#ffa6ff 755.5px,#ffe1ff 771.5px,#fff 781.5px,#fffeff 842.5px,#ffbdff 869.5px,#ffa5ff 881.5px,#b179ff 907.5px,#674bff 937.5px,#3626ff 961.5px,#3224f3 962.5px,#20179a 967.5px,#130e5c 970.5px,#0e0a43 971.5px,#080626 972.5px,#010104 973.5px,#000 974.5px)"></i>
<i style="background:linear-gradient(90deg,#000 306.5px,#0d093f 308.5px,#17106e 310.5px,#271cbd 314.5px,#3526ff 318.5px,#7e5bff 352.5px,#ca87ff 381.5px,#fea5ff 398.5px,#ffe4ff 427.5px,#fff 438.5px,#fff 498.5px,#ffc9ff 515.5px,#ffa6ff 524.5px,#e395ff 528.5px,#e093ff 530.5px,#e093ff 750.5px,#e395ff 751.5px,#ffa6ff 755.5px,#ffe1ff 771.5px,#fff 781.5px,#fffeff 842.5px,#ffbdff 869.5px,#fea5ff 881.5px,#b179ff 907.5px,#694cff 936.5px,#3526ff 961.5px,#271cbd 965.5px,#17106e 969.5px,#0d093f 971.5px,#000 973.5px)"></i>
<i style="background:linear-gradient(90deg,#000 306.5px,#06041b 307.5px,#0c093a 308.5px,#16106b 310.5px,#271cba 314.5px,#3526fe 318.5px,#7e5bff 352.5px,#c987ff 381.5px,#ffa6ff 399.5px,#ffe4ff 427.5px,#fff 438.5px,#fffdff 499.5px,#ffc2ff 517.5px,#ffa6ff 524.5px,#e496ff 528.5px,#e094ff 530.5px,#e094ff 750.5px,#eb9aff 752.5px,#ffa6ff 755.5px,#ffe2ff 771.5px,#fff 781.5px,#fffeff 842.5px,#ffbdff 869.5px,#fea4ff 881.5px,#b079ff 907.5px,#694cff 936.5px,#3526fe 961.5px,#2319a7 966.5px,#16106b 969.5px,#0c093a 971.5px,#06041b 972.5px,#000 973.5px)"></i>
<i style="background:linear-gradient(90deg,#000 306.5px,#040315 307.5px,#0b0836 308.5px,#150f67 310.5px,#261bb7 314.5px,#3426fc 318.5px,#3929ff 320.5px,#825eff 354.5px,#cf8aff 383.5px,#ffa6ff 399.5px,#ffe3ff 427.5px,#fff 438.5px,#fffdff 499.5px,#ffc2ff 517.5px,#ffa7ff 524.5px,#f39eff 526.5px,#e496ff 528.5px,#e094ff 529.5px,#e094ff 750.5px,#ec9aff 752.5px,#fba3ff 754.5px,#ffa7ff 755.5px,#ffe2ff 771.5px,#fff 781.5px,#fffdff 842.5px,#ffbdff 869.5px,#fea4ff 881.5px,#b079ff 907.5px,#6b4dff 935.5px,#3727ff 960.5px,#3426fc 961.5px,#2218a4 966.5px,#150f67 969.5px,#0b0836 971.5px,#040315 972.5px,#000 973.5px)"></i>
<i style="background:linear-gradient(90deg,#000 306.5px,#03020e 307.5px,#0a0731 308.5px,#150f63 310.5px,#2118a1 313.5px,#3425f9 318.5px,#3627ff 319.5px,#7f5cff 353.5px,#c8f 382.5px,#ffa6ff 399.5px,#ffe3ff 427.5px,#fff 438.5px,#fffeff 499.5px,#ffc3ff 517.5px,#ffa7ff 524.5px,#f49fff 526.5px,#e094ff 529.5px,#e094ff 750.5px,#f49fff 753.5px,#ffa7ff 755.5px,#ffe2ff 771.5px,#fff 781.5px,#fffdff 842.5px,#ffbcff 869.5px,#fda4ff 881.5px,#b079ff 907.5px,#684cff 936.5px,#3627ff 960.5px,#3425f9 961.5px,#2118a1 966.5px,#150f63 969.5px,#0a0731 971.5px,#03020e 972.5px,#000 973.5px)"></i>
<i style="background:linear-gradient(90deg,#000 306.5px,#020109 307.5px,#09072c 308.5px,#140e60 310.5px,#21189e 313.5px,#3325f7 318.5px,#3627ff 319.5px,#7f5cff 353.5px,#cb88ff 382.5px,#ffa6ff 399.5px,#ffe3ff 427.5px,#fff 438.5px,#fffeff 499.5px,#ffc3ff 517.5px,#ffa7ff 524.5px,#fca3ff 525.5px,#e094ff 529.5px,#e094ff 750.5px,#fca3ff 754.5px,#ffabff 756.5px,#ffe6ff 772.5px,#fff 781.5px,#fffdff 842.5px,#ffbcff 869.5px,#fda4ff 881.5px,#af79ff 907.5px,#684bff 936.5px,#3627ff 960.5px,#3325f7 961.5px,#21189e 966.5px,#140e60 969.5px,#09072c 971.5px,#020109 972.5px,#000 973.5px)"></i>
<i style="background:linear-gradient(90deg,#000 306.5px,#010104 307.5px,#080627 308.5px,#0e0a43 309.5px,#1c1487 312.5px,#2f22e3 317.5px,#3324f4 318.5px,#3626ff 319.5px,#7f5cff 353.5px,#cb88ff 382.5px,#ffa6ff 399.5px,#ffe3ff 427.5px,#fff 438.5px,#fffeff 499.5px,#ffc3ff 517.5px,#ffa8ff 524.5px,#fca3ff 525.5px,#e094ff 529.5px,#e094ff 750.5px,#fca3ff 754.5px,#ffb0ff 757.5px,#ffecff 774.5px,#fff 781.5px,#fff 841.5px,#ffbaff 870.5px,#ffa6ff 880.5px,#aa75ff 909.5px,#5d43ff 941.5px,#3626ff 960.5px,#3324f4 961.5px,#20179b 966.5px,#130e5c 969.5px,#0e0a43 970.5px,#080627 971.5px,#010104 972.5px,#000 973.5px)"></i>
<i style="background:linear-gradient(90deg,#000 307.5px,#0d093f 309.5px,#17116f 311.5px,#271cbd 315.5px,#3224f1 318.5px,#3526ff 319.5px,#7f5cff 353.5px,#cb88ff 382.5px,#ffa5ff 399.5px,#ffe3ff 427.5px,#fff 438.5px,#fffeff 499.5px,#ffc4ff 517.5px,#ffa8ff 524.5px,#fda4ff 525.5px,#e094ff 529.5px,#e094ff 750.5px,#fda4ff 754.5px,#ffbcff 760.5px,#fff6ff 777.5px,#fff 781.5px,#fff 841.5px,#ffbcff 869.5px,#ffa5ff 880.5px,#a975ff 909.5px,#5c43ff 941.5px,#3526ff 960.5px,#2f21e0 962.5px,#1b1484 967.5px,#120d58 969.5px,#0d093f 970.5px,#000 972.5px)"></i>
<i style="background:linear-gradient(90deg,#000 307.5px,#06041b 308.5px,#0c093b 309.5px,#16106b 311.5px,#271cba 315.5px,#3526ff 319.5px,#7e5cff 353.5px,#cb88ff 382.5px,#ffa5ff 399.5px,#ffe3ff 427.5px,#fff 438.5px,#fff 499.5px,#ffc4ff 517.5px,#fda4ff 525.5px,#e194ff 529.5px,#e194ff 750.5px,#fda4ff 754.5px,#ffe0ff 770.5px,#fff 780.5px,#fff 841.5px,#ffbeff 868.5px,#ffa5ff 880.5px,#ac77ff 908.5px,#6347ff 938.5px,#3526ff 960.5px,#2319a8 965.5px,#16106b 968.5px,#0c093b 970.5px,#06041b 971.5px,#000 972.5px)"></i>
<i style="background:linear-gradient(90deg,#000 307.5px,#040315 308.5px,#0b0836 309.5px,#160f67 311.5px,#261bb8 315.5px,#3526fd 319.5px,#533cff 334.5px,#9e6fff 366.5px,#ec9aff 393.5px,#ffa5ff 399.5px,#ffe2ff 427.5px,#fff 438.5px,#fff 499.5px,#ffc4ff 517.5px,#fea4ff 525.5px,#e194ff 529.5px,#e194ff 750.5px,#fea4ff 754.5px,#ffe0ff 770.5px,#fff 780.5px,#fff 841.5px,#ffbeff 868.5px,#ffa5ff 880.5px,#ae78ff 907.5px,#674aff 936.5px,#3727ff 959.5px,#3526fd 960.5px,#2219a5 965.5px,#160f67 968.5px,#0b0836 970.5px,#040315 971.5px,#000 972.5px)"></i>
<i style="background:linear-gradient(90deg,#000 307.5px,#03020f 308.5px,#0a0731 309.5px,#150f64 311.5px,#2218a2 314.5px,#3425fa 319.5px,#3627ff 320.5px,#805dff 354.5px,#cd89ff 383.5px,#ffa5ff 399.5px,#ffe2ff 427.5px,#fff 438.5px,#fff 499.5px,#ffc8ff 516.5px,#fea5ff 525.5px,#e194ff 529.5px,#e194ff 750.5px,#fea5ff 754.5px,#ffe1ff 770.5px,#fff 780.5px,#fff 841.5px,#ffc0ff 867.5px,#ffa5ff 880.5px,#b179ff 906.5px,#694cff 935.5px,#3627ff 959.5px,#3425fa 960.5px,#2218a2 965.5px,#150f64 968.5px,#0a0731 970.5px,#03020f 971.5px,#000 972.5px)"></i>
<i style="background:linear-gradient(90deg,#000 307.5px,#020109 308.5px,#09072c 309.5px,#140e60 311.5px,#21189f 314.5px,#3325f8 319.5px,#3627ff 320.5px,#805dff 354.5px,#cd89ff 383.5px,#ffa5ff 399.5px,#ffe2ff 427.5px,#fff 438.5px,#fff 499.5px,#fcf 515.5px,#ffa5ff 525.5px,#e194ff 529.5px,#e194ff 750.5px,#ffa5ff 754.5px,#ffe1ff 770.5px,#fff 780.5px,#fff 841.5px,#ffbfff 867.5px,#ffa5ff 880.5px,#b079ff 906.5px,#6b4dff 934.5px,#3627ff 959.5px,#3325f8 960.5px,#21189f 965.5px,#140e60 968.5px,#09072c 970.5px,#020109 971.5px,#000 972.5px)"></i>
<i style="background:linear-gradient(90deg,#000 307.5px,#010104 308.5px,#080627 309.5px,#0e0a44 310.5px,#1c1488 313.5px,#2f22e4 318.5px,#3325f5 319.5px,#3627ff 320.5px,#7f5cff 354.5px,#cc89ff 383.5px,#fea5ff 399.5px,#ffe2ff 427.5px,#fff 439.5px,#fffdff 500.5px,#ffc5ff 517.5px,#ffa5ff 525.5px,#e295ff 529.5px,#e194ff 749.5px,#e295ff 750.5px,#ffa5ff 754.5px,#ffe1ff 770.5px,#fff 780.5px,#fff 841.5px,#ffbfff 867.5px,#fea5ff 880.5px,#b079ff 906.5px,#6a4dff 934.5px,#3627ff 959.5px,#3325f5 960.5px,#20179c 965.5px,#130e5c 968.5px,#0e0a44 969.5px,#080627 970.5px,#010104 971.5px,#000 972.5px)"></i>
<i style="background:linear-gradient(90deg,#000 308.5px,#0d093f 310.5px,#17116f 312.5px,#281cbe 316.5px,#3224f2 319.5px,#3526ff 320.5px,#7f5cff 354.5px,#c8f 383.5px,#ffa6ff 400.5px,#ffe4ff 428.5px,#fff 439.5px,#fffdff 500.5px,#ffc5ff 517.5px,#ffa5ff 525.5px,#e295ff 529.5px,#e194ff 749.5px,#e295ff 750.5px,#ffa5ff 754.5px,#ffe2ff 770.5px,#fff 780.5px,#fffeff 841.5px,#ffbfff 867.5px,#fea4ff 880.5px,#b079ff 906.5px,#684bff 935.5px,#3526ff 959.5px,#3224f2 960.5px,#201799 965.5px,#120d58 968.5px,#0d093f 969.5px,#000 971.5px)"></i>
<i style="background:linear-gradient(90deg,#000 308.5px,#0c093b 310.5px,#16106c 312.5px,#271cbb 316.5px,#3526ff 320.5px,#7f5cff 354.5px,#c8f 383.5px,#ffa6ff 400.5px,#ffe4ff 428.5px,#fff 439.5px,#fffeff 500.5px,#ffc6ff 517.5px,#ffa6ff 525.5px,#e295ff 529.5px,#e194ff 749.5px,#e295ff 750.5px,#ffa6ff 754.5px,#ffe2ff 770.5px,#fff 780.5px,#fffeff 841.5px,#ffbfff 867.5px,#fea4ff 880.5px,#af79ff 906.5px,#6549ff 936.5px,#3526ff 959.5px,#271cbb 963.5px,#16106c 967.5px,#0c093b 969.5px,#000 971.5px)"></i>
<i style="background:linear-gradient(90deg,#000 308.5px,#040315 309.5px,#0b0836 310.5px,#160f68 312.5px,#261bb8 316.5px,#3526fe 320.5px,#7e5cff 354.5px,#cb88ff 383.5px,#ffa6ff 400.5px,#ffe4ff 428.5px,#fff 439.5px,#fffeff 500.5px,#ffc6ff 517.5px,#ffa6ff 525.5px,#e395ff 529.5px,#e194ff 740.5px,#e395ff 750.5px,#ffa6ff 754.5px,#ffe2ff 770.5px,#fff 780.5px,#fffeff 841.5px,#ffbfff 867.5px,#fda4ff 880.5px,#af78ff 906.5px,#6549ff 936.5px,#3526fe 959.5px,#2219a6 964.5px,#160f68 967.5px,#0b0836 969.5px,#040315 970.5px,#000 971.5px)"></i>
<i style="background:linear-gradient(90deg,#000 308.5px,#03020f 309.5px,#0a0731 310.5px,#150f64 312.5px,#2218a3 315.5px,#3425fb 320.5px,#3829ff 322.5px,#835fff 356.5px,#ce8aff 384.5px,#ffa6ff 400.5px,#ffe4ff 428.5px,#fff 439.5px,#fffeff 500.5px,#ffc6ff 517.5px,#ffa6ff 525.5px,#e395ff 529.5px,#e194ff 557.5px,#e194ff 749.5px,#e395ff 750.5px,#ffa6ff 754.5px,#ffe2ff 770.5px,#fffeff 779.5px,#fffeff 841.5px,#ffbeff 867.5px,#fda4ff 880.5px,#af78ff 906.5px,#6549ff 936.5px,#3727ff 958.5px,#3425fb 959.5px,#2218a3 964.5px,#150f64 967.5px,#0a0731 969.5px,#03020f 970.5px,#000 971.5px)"></i>
<i style="background:linear-gradient(90deg,#000 308.5px,#020109 309.5px,#09072c 310.5px,#140e61 312.5px,#21189f 315.5px,#3425f9 320.5px,#3627ff 321.5px,#805dff 355.5px,#ce89ff 384.5px,#ffa6ff 400.5px,#ffe3ff 428.5px,#fff 439.5px,#fff 500.5px,#ffc7ff 517.5px,#ffa7ff 525.5px,#f39eff 527.5px,#e496ff 529.5px,#e194ff 533.5px,#e194ff 749.5px,#e496ff 750.5px,#faa2ff 753.5px,#ffa7ff 754.5px,#ffe3ff 770.5px,#fff 779.5px,#fffeff 841.5px,#ffbeff 867.5px,#ffa6ff 879.5px,#a975ff 908.5px,#6045ff 938.5px,#3627ff 958.5px,#3425f9 959.5px,#21189f 964.5px,#140e61 967.5px,#09072c 969.5px,#020109 970.5px,#000 971.5px)"></i>
<i style="background:linear-gradient(90deg,#000 308.5px,#010104 309.5px,#080627 310.5px,#0e0a44 311.5px,#1c1488 314.5px,#3022e5 319.5px,#3325f6 320.5px,#3627ff 321.5px,#805dff 355.5px,#cd89ff 384.5px,#ffa5ff 400.5px,#ffe3ff 428.5px,#fff 439.5px,#fff 500.5px,#ffc7ff 517.5px,#ffa7ff 525.5px,#f39fff 527.5px,#e496ff 529.5px,#e194ff 532.5px,#e194ff 749.5px,#e496ff 750.5px,#fba3ff 753.5px,#ffa7ff 754.5px,#ffe3ff 770.5px,#fff 779.5px,#fffdff 841.5px,#ffbeff 867.5px,#ffa5ff 879.5px,#ab76ff 907.5px,#664aff 935.5px,#3627ff 958.5px,#3325f6 959.5px,#20179c 964.5px,#130e5d 967.5px,#0e0a44 968.5px,#080627 969.5px,#010104 970.5px,#000 971.5px)"></i>
<i style="background:linear-gradient(90deg,#000 309.5px,#0d0940 311.5px,#171170 313.5px,#281cbf 317.5px,#3324f3 320.5px,#3626ff 321.5px,#805dff 355.5px,#cd89ff 384.5px,#ffa5ff 400.5px,#ffe3ff 428.5px,#fff 439.5px,#fff 500.5px,#ffc7ff 517.5px,#ffa7ff 525.5px,#fca3ff 526.5px,#e596ff 529.5px,#e194ff 531.5px,#e194ff 749.5px,#e596ff 750.5px,#fca3ff 753.5px,#ffacff 755.5px,#ffe7ff 771.5px,#fff 779.5px,#fffdff 841.5px,#ffbeff 867.5px,#ffa5ff 879.5px,#ae78ff 906.5px,#6b4dff 933.5px,#3626ff 958.5px,#3324f3 959.5px,#201799 964.5px,#120d59 967.5px,#0d0940 968.5px,#000 970.5px)"></i>
<i style="background:linear-gradient(90deg,#000 309.5px,#0c093b 311.5px,#16106c 313.5px,#271cbc 317.5px,#3224f1 320.5px,#3526ff 321.5px,#7f5cff 355.5px,#cd89ff 384.5px,#ffa5ff 400.5px,#ffe3ff 428.5px,#fff 439.5px,#fff 500.5px,#ffcbff 516.5px,#ffa8ff 525.5px,#fca3ff 526.5px,#e597ff 529.5px,#e194ff 531.5px,#e194ff 749.5px,#ed9bff 751.5px,#fca3ff 753.5px,#ffb0ff 756.5px,#ffeaff 772.5px,#fff 779.5px,#fffdff 841.5px,#ffbeff 867.5px,#ffa5ff 879.5px,#b079ff 905.5px,#6a4dff 933.5px,#3526ff 958.5px,#2e21e0 960.5px,#1f1696 964.5px,#120d55 967.5px,#0c093b 968.5px,#000 970.5px)"></i>
<i style="background:linear-gradient(90deg,#000 309.5px,#040315 310.5px,#0b0837 311.5px,#161068 313.5px,#261cb9 317.5px,#3526ff 321.5px,#7f5cff 355.5px,#cc89ff 384.5px,#ffa5ff 400.5px,#ffe3ff 428.5px,#fff 439.5px,#fff 500.5px,#fcf 516.5px,#ffa8ff 525.5px,#fda4ff 526.5px,#e697ff 529.5px,#e194ff 530.5px,#e194ff 749.5px,#ed9bff 751.5px,#fda4ff 753.5px,#ffb8ff 758.5px,#fff4ff 775.5px,#fff 779.5px,#fff 840.5px,#fbf 868.5px,#ffa5ff 879.5px,#b079ff 905.5px,#684bff 934.5px,#3526ff 958.5px,#2319a6 963.5px,#161068 966.5px,#0b0837 968.5px,#040315 969.5px,#000 970.5px)"></i>
<i style="background:linear-gradient(90deg,#000 309.5px,#03020f 310.5px,#0a0732 311.5px,#150f65 313.5px,#2218a3 316.5px,#3426fc 321.5px,#3d2cff 325.5px,#8661ff 358.5px,#d28cff 386.5px,#ffa5ff 400.5px,#ffe3ff 428.5px,#fff 439.5px,#fffdff 501.5px,#ffc4ff 518.5px,#fda4ff 526.5px,#e697ff 529.5px,#e194ff 530.5px,#e194ff 749.5px,#f6a0ff 752.5px,#fda4ff 753.5px,#ffe1ff 769.5px,#fff 779.5px,#fff 840.5px,#fbf 868.5px,#ffa5ff 879.5px,#b079ff 905.5px,#674bff 934.5px,#3727ff 957.5px,#3426fc 958.5px,#2218a3 963.5px,#150f65 966.5px,#0a0732 968.5px,#03020f 969.5px,#000 970.5px)"></i>
<i style="background:linear-gradient(90deg,#000 309.5px,#02010a 310.5px,#09072d 311.5px,#140e61 313.5px,#2118a0 316.5px,#3425fa 321.5px,#3627ff 322.5px,#815eff 356.5px,#cf8aff 385.5px,#fea5ff 400.5px,#ffe2ff 428.5px,#fff 439.5px,#fffdff 501.5px,#ffc5ff 518.5px,#fea4ff 526.5px,#e295ff 530.5px,#e295ff 749.5px,#fea4ff 753.5px,#ffe1ff 769.5px,#fff 779.5px,#fff 840.5px,#ffbdff 867.5px,#fea5ff 879.5px,#af79ff 905.5px,#6549ff 935.5px,#3627ff 957.5px,#3425fa 958.5px,#2118a0 963.5px,#140e61 966.5px,#09072d 968.5px,#02010a 969.5px,#000 970.5px)"></i>
<i style="background:linear-gradient(90deg,#000 309.5px,#010104 310.5px,#080627 311.5px,#0e0a44 312.5px,#1c1489 315.5px,#3022e6 320.5px,#3325f7 321.5px,#3627ff 322.5px,#815dff 356.5px,#cf8aff 385.5px,#ffa6ff 401.5px,#ffe5ff 429.5px,#fff 439.5px,#fffeff 501.5px,#ffc5ff 518.5px,#fea5ff 526.5px,#e295ff 530.5px,#e295ff 749.5px,#fea5ff 753.5px,#ffe2ff 769.5px,#fff 779.5px,#fff 840.5px,#ffbfff 866.5px,#fea4ff 879.5px,#af78ff 905.5px,#674aff 934.5px,#3627ff 957.5px,#3325f7 958.5px,#21179d 963.5px,#130e5d 966.5px,#0e0a44 967.5px,#080627 968.5px,#010104 969.5px,#000 970.5px)"></i>
<i style="background:linear-gradient(90deg,#000 310.5px,#0d0a40 312.5px,#171170 314.5px,#281dc0 318.5px,#3324f4 321.5px,#3627ff 322.5px,#805dff 356.5px,#ce8aff 385.5px,#ffa6ff 401.5px,#ffe5ff 429.5px,#fff 439.5px,#fffeff 501.5px,#ffc5ff 518.5px,#ffa5ff 526.5px,#e295ff 530.5px,#e295ff 749.5px,#ffa5ff 753.5px,#ffe2ff 769.5px,#fff 779.5px,#fff 840.5px,#ffbfff 866.5px,#fea4ff 879.5px,#af78ff 905.5px,#664aff 934.5px,#3627ff 957.5px,#3324f4 958.5px,#20179a 963.5px,#130d59 966.5px,#0d0a40 967.5px,#000 969.5px)"></i>
<i style="background:linear-gradient(90deg,#000 310.5px,#0c093b 312.5px,#17106d 314.5px,#271cbd 318.5px,#3224f2 321.5px,#3526ff 322.5px,#805dff 356.5px,#ce8aff 385.5px,#ffa6ff 401.5px,#ffe4ff 429.5px,#fff 439.5px,#fffeff 501.5px,#ffc6ff 518.5px,#ffa5ff 526.5px,#e295ff 530.5px,#e295ff 749.5px,#ffa5ff 753.5px,#ffe2ff 769.5px,#fffeff 778.5px,#fff 840.5px,#ffbfff 866.5px,#fda4ff 879.5px,#ae78ff 905.5px,#684cff 933.5px,#3526ff 957.5px,#2f21e1 959.5px,#1f1697 963.5px,#120d55 966.5px,#0c093b 967.5px,#000 969.5px)"></i>
<i style="background:linear-gradient(90deg,#000 310.5px,#040315 311.5px,#0b0837 312.5px,#161069 314.5px,#2319a7 317.5px,#3224ef 321.5px,#3526ff 322.5px,#805dff 356.5px,#ce89ff 385.5px,#ffa6ff 401.5px,#ffe4ff 429.5px,#fff 440.5px,#fff 501.5px,#ffc6ff 518.5px,#ffa5ff 526.5px,#e295ff 530.5px,#e295ff 749.5px,#ffa5ff 753.5px,#ffe2ff 769.5px,#fff 778.5px,#fff 840.5px,#ffbfff 866.5px,#fda4ff 879.5px,#ae78ff 905.5px,#6a4dff 932.5px,#3526ff 957.5px,#271cba 961.5px,#1a137f 964.5px,#110c51 966.5px,#0b0837 967.5px,#040315 968.5px,#000 969.5px)"></i>
<i style="background:linear-gradient(90deg,#000 310.5px,#03020f 311.5px,#0a0732 312.5px,#150f65 314.5px,#2218a4 317.5px,#3526fe 322.5px,#7f5cff 356.5px,#cd89ff 385.5px,#ffa6ff 401.5px,#ffe4ff 429.5px,#fff 440.5px,#fff 501.5px,#ffc6ff 518.5px,#ffa6ff 526.5px,#e395ff 530.5px,#e395ff 749.5px,#ffa6ff 753.5px,#ffe3ff 769.5px,#fff 778.5px,#fffeff 840.5px,#ffbeff 866.5px,#ffa6ff 878.5px,#a875ff 907.5px,#6348ff 935.5px,#3526fe 957.5px,#2218a4 962.5px,#150f65 965.5px,#0a0732 967.5px,#03020f 968.5px,#000 969.5px)"></i>
<i style="background:linear-gradient(90deg,#000 310.5px,#02010a 311.5px,#09072d 312.5px,#140f61 314.5px,#2118a1 317.5px,#3425fb 322.5px,#3627ff 323.5px,#7f5cff 356.5px,#cd89ff 385.5px,#ffa5ff 401.5px,#ffe4ff 429.5px,#fff 440.5px,#fff 501.5px,#ffc7ff 518.5px,#ffa6ff 526.5px,#e395ff 530.5px,#e395ff 749.5px,#ffa6ff 753.5px,#ffe3ff 769.5px,#fff 778.5px,#fffeff 840.5px,#ffbeff 866.5px,#ffa5ff 878.5px,#ab76ff 906.5px,#6549ff 934.5px,#3627ff 956.5px,#3425fb 957.5px,#2118a1 962.5px,#140f61 965.5px,#09072d 967.5px,#02010a 968.5px,#000 969.5px)"></i>
<i style="background:linear-gradient(90deg,#000 310.5px,#010104 311.5px,#080628 312.5px,#0e0a45 313.5px,#1d148a 316.5px,#3022e7 321.5px,#3425f8 322.5px,#3627ff 323.5px,#7f5cff 356.5px,#cd89ff 385.5px,#ffa5ff 401.5px,#ffe4ff 429.5px,#fff 440.5px,#fff 501.5px,#ffcbff 517.5px,#ffa6ff 526.5px,#e396ff 530.5px,#e295ff 748.5px,#e396ff 749.5px,#ffa6ff 753.5px,#ffe3ff 769.5px,#fff 778.5px,#fffeff 840.5px,#ffbeff 866.5px,#ffa5ff 878.5px,#ad77ff 905.5px,#6549ff 934.5px,#3627ff 956.5px,#3425f8 957.5px,#21179e 962.5px,#130e5e 965.5px,#0e0a45 966.5px,#080628 967.5px,#010104 968.5px,#000 969.5px)"></i>
<i style="background:linear-gradient(90deg,#000 311.5px,#0d0a40 313.5px,#171171 315.5px,#281dc1 319.5px,#3325f6 322.5px,#3627ff 323.5px,#7e5cff 356.5px,#cc89ff 385.5px,#ffa5ff 401.5px,#ffe3ff 429.5px,#fff 440.5px,#fff 501.5px,#ffcfff 516.5px,#ffa7ff 526.5px,#f39eff 528.5px,#e496ff 530.5px,#e295ff 748.5px,#e496ff 749.5px,#faa2ff 752.5px,#ffa7ff 753.5px,#ffe4ff 769.5px,#fff 778.5px,#fffeff 840.5px,#ffbeff 866.5px,#ffa5ff 878.5px,#b079ff 904.5px,#6549ff 934.5px,#3627ff 956.5px,#3325f6 957.5px,#20179b 962.5px,#130d5a 965.5px,#0d0a40 966.5px,#000 968.5px)"></i>
<i style="background:linear-gradient(90deg,#000 311.5px,#0c093c 313.5px,#17106d 315.5px,#271cbe 319.5px,#3224f3 322.5px,#3626ff 323.5px,#7e5bff 356.5px,#cc89ff 385.5px,#ffa5ff 401.5px,#ffe3ff 429.5px,#fff 440.5px,#fffdff 502.5px,#ffc4ff 519.5px,#ffa7ff 526.5px,#f39eff 528.5px,#e496ff 530.5px,#e295ff 748.5px,#e496ff 749.5px,#fba3ff 752.5px,#ffa7ff 753.5px,#ffe4ff 769.5px,#fff 778.5px,#fffeff 840.5px,#ffbeff 866.5px,#ffa5ff 878.5px,#af79ff 904.5px,#674aff 933.5px,#3626ff 956.5px,#3224f3 957.5px,#1f1797 962.5px,#120d56 965.5px,#0c093c 966.5px,#000 968.5px)"></i>
<i style="background:linear-gradient(90deg,#000 311.5px,#040316 312.5px,#0b0837 313.5px,#161069 315.5px,#2319a8 318.5px,#3224f0 322.5px,#3526ff 323.5px,#7e5bff 356.5px,#c8f 385.5px,#fea5ff 401.5px,#ffe3ff 429.5px,#fff 440.5px,#fffeff 502.5px,#ffc4ff 519.5px,#ffa7ff 526.5px,#fba3ff 527.5px,#e496ff 530.5px,#e295ff 738.5px,#e496ff 749.5px,#fba3ff 752.5px,#ffacff 754.5px,#ffe8ff 770.5px,#fff 778.5px,#fffdff 840.5px,#ffbeff 866.5px,#fea5ff 878.5px,#af78ff 904.5px,#684cff 932.5px,#3526ff 956.5px,#2b1fcd 959.5px,#1a137f 963.5px,#110c52 965.5px,#0b0837 966.5px,#040316 967.5px,#000 968.5px)"></i>
<i style="background:linear-gradient(90deg,#000 311.5px,#03020f 312.5px,#0a0732 313.5px,#150f66 315.5px,#2219a5 318.5px,#3526ff 323.5px,#805dff 357.5px,#cb88ff 385.5px,#fea5ff 401.5px,#ffe3ff 429.5px,#fff 440.5px,#fffeff 502.5px,#ffc4ff 519.5px,#ffa8ff 526.5px,#fca3ff 527.5px,#e596ff 530.5px,#e295ff 553.5px,#e395ff 748.5px,#e596ff 749.5px,#fca3ff 752.5px,#ffacff 754.5px,#ffe8ff 770.5px,#fff 778.5px,#fffdff 840.5px,#ffbdff 866.5px,#fea5ff 878.5px,#af78ff 904.5px,#684bff 932.5px,#3526ff 956.5px,#2219a5 961.5px,#150f66 964.5px,#0a0732 966.5px,#03020f 967.5px,#000 968.5px)"></i>
<i style="background:linear-gradient(90deg,#000 311.5px,#02010a 312.5px,#09072d 313.5px,#140f62 315.5px,#2218a2 318.5px,#3426fc 323.5px,#3929ff 325.5px,#825eff 358.5px,#ce8aff 386.5px,#ffa6ff 402.5px,#ffe5ff 430.5px,#fff 440.5px,#fffeff 502.5px,#ffc5ff 519.5px,#ffa8ff 526.5px,#fca4ff 527.5px,#e597ff 530.5px,#e395ff 534.5px,#e395ff 748.5px,#e597ff 749.5px,#fca4ff 752.5px,#ffb5ff 756.5px,#ffefff 772.5px,#fff 778.5px,#fffdff 840.5px,#ffbdff 866.5px,#fea4ff 878.5px,#ae78ff 904.5px,#6a4dff 931.5px,#3727ff 955.5px,#3426fc 956.5px,#2218a2 961.5px,#140f62 964.5px,#09072d 966.5px,#02010a 967.5px,#000 968.5px)"></i>
<i style="background:linear-gradient(90deg,#000 311.5px,#010104 312.5px,#080628 313.5px,#0e0a45 314.5px,#1d158a 317.5px,#3023e8 322.5px,#3425f9 323.5px,#3627ff 324.5px,#7f5cff 357.5px,#cb88ff 385.5px,#ffa6ff 402.5px,#ffe5ff 430.5px,#fff 440.5px,#fffeff 502.5px,#ffc5ff 519.5px,#fda4ff 527.5px,#e697ff 530.5px,#e395ff 533.5px,#e395ff 748.5px,#e697ff 749.5px,#fda4ff 752.5px,#ffe2ff 768.5px,#fffeff 777.5px,#fff 839.5px,#fbf 867.5px,#fea4ff 878.5px,#ae78ff 904.5px,#6a4dff 931.5px,#3627ff 955.5px,#3425f9 956.5px,#21189e 961.5px,#140e5e 964.5px,#0e0a45 965.5px,#080628 966.5px,#010104 967.5px,#000 968.5px)"></i>
<i style="background:linear-gradient(90deg,#000 312.5px,#0d0a41 314.5px,#181171 316.5px,#281dc1 320.5px,#3325f7 323.5px,#3627ff 324.5px,#7f5cff 357.5px,#cb88ff 385.5px,#ffa6ff 402.5px,#ffe5ff 430.5px,#fff 440.5px,#fff 502.5px,#ffc5ff 519.5px,#fea4ff 527.5px,#e697ff 530.5px,#e395ff 532.5px,#e395ff 748.5px,#e697ff 749.5px,#fea4ff 752.5px,#ffdfff 767.5px,#fff 777.5px,#fff 839.5px,#fbf 867.5px,#fda4ff 878.5px,#ae78ff 904.5px,#674bff 932.5px,#3627ff 955.5px,#3325f7 956.5px,#20179b 961.5px,#130d5a 964.5px,#0d0a41 965.5px,#000 967.5px)"></i>
<i style="background:linear-gradient(90deg,#000 312.5px,#0c093c 314.5px,#17106e 316.5px,#281cbf 320.5px,#3324f4 323.5px,#3627ff 324.5px,#7f5cff 357.5px,#ca88ff 385.5px,#ffa6ff 402.5px,#ffe5ff 430.5px,#fff 440.5px,#fff 502.5px,#ffc5ff 519.5px,#fea4ff 527.5px,#e797ff 530.5px,#e395ff 532.5px,#e395ff 748.5px,#e797ff 749.5px,#fea4ff 752.5px,#ffdfff 767.5px,#fff 777.5px,#fff 839.5px,#ffbdff 866.5px,#fda4ff 878.5px,#ad77ff 904.5px,#6549ff 933.5px,#3627ff 955.5px,#3324f4 956.5px,#201798 961.5px,#120d56 964.5px,#0c093c 965.5px,#000 967.5px)"></i>
<i style="background:linear-gradient(90deg,#000 312.5px,#050316 313.5px,#0c0838 314.5px,#16106a 316.5px,#2319a9 319.5px,#3224f1 323.5px,#3526ff 324.5px,#7e5cff 357.5px,#ca87ff 385.5px,#ffa6ff 402.5px,#ffe4ff 430.5px,#fff 440.5px,#fff 502.5px,#ffcaff 518.5px,#ffa5ff 527.5px,#e798ff 530.5px,#e395ff 531.5px,#e395ff 748.5px,#ef9cff 750.5px,#ffa5ff 752.5px,#ffdfff 767.5px,#fff 777.5px,#fff 839.5px,#ffbfff 865.5px,#ffa6ff 877.5px,#a874ff 906.5px,#5b42ff 937.5px,#3526ff 955.5px,#2f21e0 957.5px,#1f1695 961.5px,#110c52 964.5px,#0c0838 965.5px,#050316 966.5px,#000 967.5px)"></i>
<i style="background:linear-gradient(90deg,#000 312.5px,#030210 313.5px,#0a0832 314.5px,#150f66 316.5px,#2219a5 319.5px,#3526ff 324.5px,#7e5bff 357.5px,#ca87ff 385.5px,#ffa5ff 402.5px,#ffe4ff 430.5px,#fff 440.5px,#fff 502.5px,#ffceff 517.5px,#ffa5ff 527.5px,#e898ff 530.5px,#e395ff 531.5px,#e395ff 748.5px,#f09cff 750.5px,#ffa5ff 752.5px,#ffe0ff 767.5px,#fff 777.5px,#fff 839.5px,#ffbfff 865.5px,#ffa5ff 877.5px,#aa76ff 905.5px,#5f45ff 935.5px,#3526ff 955.5px,#2219a5 960.5px,#150f66 963.5px,#0a0832 965.5px,#030210 966.5px,#000 967.5px)"></i>
<i style="background:linear-gradient(90deg,#000 312.5px,#02010a 313.5px,#09072d 314.5px,#140f62 316.5px,#2218a2 319.5px,#3526fd 324.5px,#805dff 358.5px,#cc89ff 386.5px,#ffa5ff 402.5px,#ffe4ff 430.5px,#fff 440.5px,#fffdff 503.5px,#ffc3ff 520.5px,#ffa5ff 527.5px,#e395ff 531.5px,#e395ff 748.5px,#ffa5ff 752.5px,#ffe0ff 767.5px,#fff 777.5px,#fff 839.5px,#ffbeff 865.5px,#ffa5ff 877.5px,#ad77ff 904.5px,#664aff 932.5px,#3526fd 955.5px,#2218a2 960.5px,#140f62 963.5px,#09072d 965.5px,#02010a 966.5px,#000 967.5px)"></i>
<i style="background:linear-gradient(90deg,#000 312.5px,#010105 313.5px,#080628 314.5px,#0e0a46 315.5px,#1d158b 318.5px,#3023e9 323.5px,#3425fa 324.5px,#3627ff 325.5px,#805dff 358.5px,#c8f 386.5px,#ffa5ff 402.5px,#ffe4ff 430.5px,#fff 440.5px,#fffdff 503.5px,#ffc3ff 520.5px,#ffa6ff 527.5px,#e396ff 531.5px,#e396ff 748.5px,#ffa6ff 752.5px,#ffe0ff 767.5px,#fff 777.5px,#fff 839.5px,#ffbeff 865.5px,#ffa5ff 877.5px,#af78ff 903.5px,#684bff 931.5px,#3627ff 954.5px,#3425fa 955.5px,#21189f 960.5px,#140e5f 963.5px,#0e0a46 964.5px,#080628 965.5px,#010105 966.5px,#000 967.5px)"></i>
<i style="background:linear-gradient(90deg,#000 313.5px,#0e0a41 315.5px,#181172 317.5px,#281dc2 321.5px,#3325f8 324.5px,#3627ff 325.5px,#805dff 358.5px,#c8f 386.5px,#ffa5ff 402.5px,#ffe4ff 430.5px,#fff 441.5px,#fffeff 503.5px,#ffc3ff 520.5px,#ffa6ff 527.5px,#e396ff 531.5px,#e396ff 748.5px,#ffa6ff 752.5px,#ffe1ff 767.5px,#fff 777.5px,#fffeff 839.5px,#ffbeff 865.5px,#ffa5ff 877.5px,#b27aff 902.5px,#6a4dff 930.5px,#3627ff 954.5px,#3325f8 955.5px,#20179c 960.5px,#130e5b 963.5px,#0e0a41 964.5px,#000 966.5px)"></i>
<i style="background:linear-gradient(90deg,#000 313.5px,#0d093c 315.5px,#17106e 317.5px,#281dbf 321.5px,#3325f5 324.5px,#3627ff 325.5px,#7f5cff 358.5px,#cb88ff 386.5px,#fea5ff 402.5px,#ffe4ff 430.5px,#fff 441.5px,#fffeff 503.5px,#ffc3ff 520.5px,#ffa6ff 527.5px,#e496ff 531.5px,#e496ff 748.5px,#ffa6ff 752.5px,#ffe1ff 767.5px,#fff 777.5px,#fffeff 839.5px,#ffbeff 865.5px,#fea5ff 877.5px,#b17aff 902.5px,#6a4dff 930.5px,#3627ff 954.5px,#3325f5 955.5px,#201799 960.5px,#120d57 963.5px,#0d093c 964.5px,#000 966.5px)"></i>
<i style="background:linear-gradient(90deg,#000 313.5px,#050316 314.5px,#0c0838 315.5px,#16106a 317.5px,#2319a9 320.5px,#3224f2 324.5px,#3626ff 325.5px,#7f5cff 358.5px,#cb88ff 386.5px,#fea5ff 402.5px,#ffe3ff 430.5px,#fff 441.5px,#fffeff 503.5px,#ffc4ff 520.5px,#ffa7ff 527.5px,#e496ff 531.5px,#e496ff 748.5px,#ffa7ff 752.5px,#ffe1ff 767.5px,#fffeff 776.5px,#fffeff 839.5px,#ffbeff 865.5px,#fea5ff 877.5px,#b179ff 902.5px,#694cff 930.5px,#3626ff 954.5px,#3224f2 955.5px,#1f1696 960.5px,#110c52 963.5px,#0c0838 964.5px,#050316 965.5px,#000 966.5px)"></i>
<i style="background:linear-gradient(90deg,#000 313.5px,#030210 314.5px,#0b0833 315.5px,#150f67 317.5px,#2319a6 320.5px,#3224f0 324.5px,#3526ff 325.5px,#7f5cff 358.5px,#cb88ff 386.5px,#ffa6ff 403.5px,#ffe6ff 431.5px,#fff 441.5px,#fff 503.5px,#ffc4ff 520.5px,#ffa7ff 527.5px,#f39eff 529.5px,#e496ff 531.5px,#e496ff 748.5px,#fba3ff 751.5px,#ffa7ff 752.5px,#ffe2ff 767.5px,#fff 776.5px,#fffeff 839.5px,#ffbdff 865.5px,#fea4ff 877.5px,#b179ff 902.5px,#674aff 931.5px,#3526ff 954.5px,#271cb9 958.5px,#1a137d 961.5px,#100c4e 963.5px,#0b0833 964.5px,#030210 965.5px,#000 966.5px)"></i>
<i style="background:linear-gradient(90deg,#000 313.5px,#02020a 314.5px,#0a072e 315.5px,#150f63 317.5px,#2218a3 320.5px,#3526fe 325.5px,#7e5cff 358.5px,#ca88ff 386.5px,#ffa6ff 403.5px,#ffe6ff 431.5px,#fff 441.5px,#fff 503.5px,#ffc4ff 520.5px,#ffa7ff 527.5px,#fba3ff 528.5px,#e596ff 531.5px,#e596ff 748.5px,#fba3ff 751.5px,#ffacff 753.5px,#ffe9ff 769.5px,#fff 776.5px,#fffeff 839.5px,#ffbdff 865.5px,#fea4ff 877.5px,#b079ff 902.5px,#664aff 931.5px,#3526fe 954.5px,#2218a3 959.5px,#150f63 962.5px,#0a072e 964.5px,#02020a 965.5px,#000 966.5px)"></i>
<i style="background:linear-gradient(90deg,#000 313.5px,#010105 314.5px,#080629 315.5px,#0f0a46 316.5px,#1d158b 319.5px,#3123ea 324.5px,#3425fb 325.5px,#3929ff 327.5px,#835fff 360.5px,#d08bff 388.5px,#ffa6ff 403.5px,#ffe5ff 431.5px,#fff 441.5px,#fff 503.5px,#ffc9ff 519.5px,#ffa8ff 527.5px,#fca3ff 528.5px,#e596ff 531.5px,#e496ff 747.5px,#e596ff 748.5px,#fca3ff 751.5px,#ffacff 753.5px,#ffe9ff 769.5px,#fff 776.5px,#fffeff 839.5px,#ffbdff 865.5px,#fda4ff 877.5px,#b079ff 902.5px,#664aff 931.5px,#3727ff 953.5px,#3425fb 954.5px,#2118a0 959.5px,#140e5f 962.5px,#0f0a46 963.5px,#080629 964.5px,#010105 965.5px,#000 966.5px)"></i>
<i style="background:linear-gradient(90deg,#000 314.5px,#0e0a41 316.5px,#181172 318.5px,#291dc3 322.5px,#3425f9 325.5px,#3627ff 326.5px,#805dff 359.5px,#cd89ff 387.5px,#ffa6ff 403.5px,#ffe5ff 431.5px,#fff 441.5px,#fff 503.5px,#ffc9ff 519.5px,#ffa8ff 527.5px,#fca4ff 528.5px,#e597ff 531.5px,#e496ff 747.5px,#e597ff 748.5px,#fca4ff 751.5px,#ffb5ff 755.5px,#fff0ff 771.5px,#fff 776.5px,#fffdff 839.5px,#ffbdff 865.5px,#fda4ff 877.5px,#b079ff 902.5px,#684bff 930.5px,#3627ff 953.5px,#3425f9 954.5px,#21179d 959.5px,#130e5b 962.5px,#0e0a41 963.5px,#000 965.5px)"></i>
<i style="background:linear-gradient(90deg,#000 314.5px,#0d093d 316.5px,#17116f 318.5px,#281dc0 322.5px,#3325f6 325.5px,#3627ff 326.5px,#805dff 359.5px,#cc89ff 387.5px,#ffa6ff 403.5px,#ffe5ff 431.5px,#fff 441.5px,#fff 503.5px,#ffcdff 518.5px,#fda4ff 528.5px,#e697ff 531.5px,#e496ff 747.5px,#e697ff 748.5px,#fda4ff 751.5px,#ffdfff 766.5px,#fff 776.5px,#fffdff 839.5px,#ffbdff 865.5px,#ffa6ff 876.5px,#a774ff 905.5px,#5c43ff 935.5px,#3627ff 953.5px,#3325f6 954.5px,#201799 959.5px,#120d57 962.5px,#0d093d 963.5px,#000 965.5px)"></i>
<i style="background:linear-gradient(90deg,#000 314.5px,#050316 315.5px,#0c0838 316.5px,#16106b 318.5px,#2319aa 321.5px,#3324f3 325.5px,#3626ff 326.5px,#805dff 359.5px,#cc89ff 387.5px,#ffa5ff 403.5px,#ffe5ff 431.5px,#fff 441.5px,#fffdff 504.5px,#ffc2ff 521.5px,#fda4ff 528.5px,#e697ff 531.5px,#e496ff 735.5px,#e697ff 748.5px,#fda4ff 751.5px,#ffe0ff 766.5px,#fff 776.5px,#fff 838.5px,#ffbaff 866.5px,#ffa5ff 876.5px,#a975ff 904.5px,#684bff 930.5px,#3626ff 953.5px,#3324f3 954.5px,#1f1696 959.5px,#110c53 962.5px,#0c0838 963.5px,#050316 964.5px,#000 965.5px)"></i>
<i style="background:linear-gradient(90deg,#000 314.5px,#030210 315.5px,#0b0833 316.5px,#150f67 318.5px,#2319a7 321.5px,#3224f1 325.5px,#3526ff 326.5px,#7f5cff 359.5px,#c8f 387.5px,#ffa5ff 403.5px,#ffe5ff 431.5px,#fff 441.5px,#fffdff 504.5px,#ffc2ff 521.5px,#fea4ff 528.5px,#e697ff 531.5px,#e496ff 550.5px,#e496ff 747.5px,#e697ff 748.5px,#fea4ff 751.5px,#ffe0ff 766.5px,#fff 776.5px,#fff 838.5px,#ffbaff 866.5px,#ffa5ff 876.5px,#ac77ff 903.5px,#6a4cff 929.5px,#3526ff 953.5px,#2e21df 955.5px,#1f1693 959.5px,#100c4f 962.5px,#0b0833 963.5px,#030210 964.5px,#000 965.5px)"></i>
<i style="background:linear-gradient(90deg,#000 314.5px,#02020a 315.5px,#0a072e 316.5px,#150f63 318.5px,#2218a4 321.5px,#3526ff 326.5px,#7f5cff 359.5px,#c8f 387.5px,#ffa5ff 403.5px,#ffe4ff 431.5px,#fff 441.5px,#fffeff 504.5px,#ffc2ff 521.5px,#ffa5ff 528.5px,#e798ff 531.5px,#e496ff 535.5px,#e496ff 747.5px,#e798ff 748.5px,#ffa5ff 751.5px,#ffe0ff 766.5px,#fff 776.5px,#fff 838.5px,#ffbcff 865.5px,#ffa5ff 876.5px,#ae78ff 902.5px,#694cff 929.5px,#3526ff 953.5px,#2218a4 958.5px,#150f63 961.5px,#0a072e 963.5px,#02020a 964.5px,#000 965.5px)"></i>
<i style="background:linear-gradient(90deg,#000 314.5px,#010105 315.5px,#080629 316.5px,#0f0a46 317.5px,#1d158c 320.5px,#2d20d9 324.5px,#3526fd 326.5px,#412fff 332.5px,#8b64ff 364.5px,#d88fff 391.5px,#ffa5ff 403.5px,#ffe4ff 431.5px,#fff 441.5px,#fffeff 504.5px,#ffc3ff 521.5px,#ffa5ff 528.5px,#e798ff 531.5px,#e496ff 534.5px,#e496ff 747.5px,#e798ff 748.5px,#ffa5ff 751.5px,#ffe1ff 766.5px,#fffeff 775.5px,#fff 838.5px,#ffbcff 865.5px,#ffa5ff 876.5px,#b179ff 901.5px,#694cff 929.5px,#3727ff 952.5px,#3526fd 953.5px,#2118a1 958.5px,#140e60 961.5px,#0f0a46 962.5px,#080629 963.5px,#010105 964.5px,#000 965.5px)"></i>
<i style="background:linear-gradient(90deg,#000 315.5px,#0e0a42 317.5px,#181173 319.5px,#291dc4 323.5px,#3425fa 326.5px,#3627ff 327.5px,#815dff 360.5px,#ce8aff 388.5px,#fea5ff 403.5px,#ffe4ff 431.5px,#fff 441.5px,#fffeff 504.5px,#ffc3ff 521.5px,#ffa5ff 528.5px,#e898ff 531.5px,#e496ff 533.5px,#e496ff 747.5px,#e898ff 748.5px,#ffa5ff 751.5px,#ffe1ff 766.5px,#fffeff 775.5px,#fff 838.5px,#ffbeff 864.5px,#fea5ff 876.5px,#b179ff 901.5px,#664aff 930.5px,#3627ff 952.5px,#3425fa 953.5px,#21179d 958.5px,#130e5c 961.5px,#0e0a42 962.5px,#000 964.5px)"></i>
<i style="background:linear-gradient(90deg,#000 315.5px,#0d093d 317.5px,#17116f 319.5px,#281dc1 323.5px,#3325f7 326.5px,#3627ff 327.5px,#815dff 360.5px,#ce89ff 388.5px,#fea5ff 403.5px,#ffe4ff 431.5px,#fff 441.5px,#fff 504.5px,#ffc3ff 521.5px,#ffa6ff 528.5px,#e898ff 531.5px,#e596ff 533.5px,#e596ff 747.5px,#e898ff 748.5px,#ffa6ff 751.5px,#ffe1ff 766.5px,#fff 775.5px,#fff 838.5px,#ffbeff 864.5px,#fea5ff 876.5px,#b079ff 901.5px,#664aff 930.5px,#3627ff 952.5px,#3325f7 953.5px,#20179a 958.5px,#120d58 961.5px,#0d093d 962.5px,#000 964.5px)"></i>
<i style="background:linear-gradient(90deg,#000 315.5px,#050317 316.5px,#0c0838 317.5px,#16106c 319.5px,#2419ab 322.5px,#3324f4 326.5px,#3627ff 327.5px,#805dff 360.5px,#cd89ff 388.5px,#ffa6ff 404.5px,#ffe6ff 432.5px,#fff 441.5px,#fff 504.5px,#ffc4ff 521.5px,#ffa6ff 528.5px,#e999ff 531.5px,#e596ff 532.5px,#e596ff 747.5px,#f19dff 749.5px,#ffa6ff 751.5px,#ffe2ff 766.5px,#fff 775.5px,#fff 838.5px,#ffbeff 864.5px,#fea4ff 876.5px,#b079ff 901.5px,#684bff 929.5px,#3627ff 952.5px,#3324f4 953.5px,#1f1697 958.5px,#110c53 961.5px,#0c0838 962.5px,#050317 963.5px,#000 964.5px)"></i>
<i style="background:linear-gradient(90deg,#000 315.5px,#030210 316.5px,#0b0833 317.5px,#160f68 319.5px,#2319a8 322.5px,#3224f2 326.5px,#3526ff 327.5px,#805dff 360.5px,#cd89ff 388.5px,#ffa6ff 404.5px,#ffe6ff 432.5px,#fff 442.5px,#fff 504.5px,#ffc8ff 520.5px,#ffa6ff 528.5px,#e596ff 532.5px,#e596ff 747.5px,#ffa6ff 751.5px,#ffe2ff 766.5px,#fff 775.5px,#fffeff 838.5px,#ffbdff 864.5px,#fea4ff 876.5px,#b079ff 901.5px,#6a4dff 928.5px,#3526ff 952.5px,#3224f2 953.5px,#1f1694 958.5px,#100c4f 961.5px,#0b0833 962.5px,#030210 963.5px,#000 964.5px)"></i>
<i style="background:linear-gradient(90deg,#000 315.5px,#02020b 316.5px,#0a072e 317.5px,#150f64 319.5px,#2219a5 322.5px,#3224ef 326.5px,#3526ff 327.5px,#805dff 360.5px,#cd89ff 388.5px,#ffa6ff 404.5px,#ffe6ff 432.5px,#fff 442.5px,#fff 504.5px,#fcf 519.5px,#ffa7ff 528.5px,#e596ff 532.5px,#e596ff 747.5px,#ffa7ff 751.5px,#ffe2ff 766.5px,#fff 775.5px,#fffeff 838.5px,#ffbdff 864.5px,#fda4ff 876.5px,#af79ff 901.5px,#6a4dff 928.5px,#3526ff 952.5px,#261bb8 956.5px,#1a127b 959.5px,#100b4b 961.5px,#0a072e 962.5px,#02020b 963.5px,#000 964.5px)"></i>
<i style="background:linear-gradient(90deg,#000 315.5px,#010105 316.5px,#090629 317.5px,#0f0b47 318.5px,#191277 320.5px,#2a1ec8 324.5px,#3526fe 327.5px,#7f5cff 360.5px,#cc89ff 388.5px,#ffa6ff 404.5px,#ffe6ff 432.5px,#fff 442.5px,#fff 504.5px,#ffd0ff 518.5px,#ffa7ff 528.5px,#f39eff 530.5px,#e596ff 532.5px,#e596ff 747.5px,#fba3ff 750.5px,#ffa7ff 751.5px,#ffe3ff 766.5px,#fff 775.5px,#fffeff 838.5px,#ffbdff 864.5px,#fda4ff 876.5px,#af78ff 901.5px,#6c4eff 927.5px,#3526fe 952.5px,#2218a1 957.5px,#140e60 960.5px,#0f0b47 961.5px,#090629 962.5px,#010105 963.5px,#000 964.5px)"></i>
<i style="background:linear-gradient(90deg,#000 316.5px,#0e0a42 318.5px,#181174 320.5px,#291dc5 324.5px,#3425fb 327.5px,#3929ff 329.5px,#8460ff 362.5px,#d28cff 390.5px,#ffa6ff 404.5px,#ffe6ff 432.5px,#fff 442.5px,#fffdff 505.5px,#ffc1ff 522.5px,#ffa7ff 528.5px,#fba3ff 529.5px,#e597ff 532.5px,#e597ff 747.5px,#fba3ff 750.5px,#ffacff 752.5px,#ffe6ff 767.5px,#fff 775.5px,#fffeff 838.5px,#ffbdff 864.5px,#ffa6ff 875.5px,#a674ff 904.5px,#5940ff 935.5px,#3727ff 951.5px,#3425fb 952.5px,#21189e 957.5px,#130e5c 960.5px,#0e0a42 961.5px,#000 963.5px)"></i>
<i style="background:linear-gradient(90deg,#000 316.5px,#0d093d 318.5px,#171170 320.5px,#281dc2 324.5px,#3425f8 327.5px,#3627ff 328.5px,#815eff 361.5px,#cf8aff 389.5px,#ffa5ff 404.5px,#ffe5ff 432.5px,#fff 442.5px,#fffeff 505.5px,#ffc1ff 522.5px,#ffa8ff 528.5px,#fca3ff 529.5px,#e597ff 532.5px,#e597ff 747.5px,#fca3ff 750.5px,#ffacff 752.5px,#ffe7ff 767.5px,#fff 775.5px,#fffeff 838.5px,#ffbdff 864.5px,#ffa5ff 875.5px,#a975ff 903.5px,#5f45ff 932.5px,#3627ff 951.5px,#3425f8 952.5px,#20179b 957.5px,#120d58 960.5px,#0d093d 961.5px,#000 963.5px)"></i>
<i style="background:linear-gradient(90deg,#000 316.5px,#050317 317.5px,#0c0839 318.5px,#16106c 320.5px,#241aac 323.5px,#3325f6 327.5px,#3627ff 328.5px,#815dff 361.5px,#cf8aff 389.5px,#ffa5ff 404.5px,#ffe5ff 432.5px,#fff 442.5px,#fffeff 505.5px,#ffc2ff 522.5px,#ffa8ff 528.5px,#fca4ff 529.5px,#e697ff 532.5px,#e697ff 747.5px,#fca4ff 750.5px,#ffb1ff 753.5px,#fef 769.5px,#fff 775.5px,#fffeff 838.5px,#ffbdff 864.5px,#ffa5ff 875.5px,#ab76ff 902.5px,#6147ff 931.5px,#3627ff 951.5px,#3325f6 952.5px,#201798 957.5px,#110c54 960.5px,#0c0839 961.5px,#050317 962.5px,#000 963.5px)"></i>
<i style="background:linear-gradient(90deg,#000 316.5px,#030210 317.5px,#0b0834 318.5px,#161068 320.5px,#2319a9 323.5px,#3224f3 327.5px,#3626ff 328.5px,#815dff 361.5px,#ce8aff 389.5px,#ffa5ff 404.5px,#ffe5ff 432.5px,#fff 442.5px,#fffeff 505.5px,#ffc2ff 522.5px,#fda4ff 529.5px,#e697ff 532.5px,#e697ff 747.5px,#fda4ff 750.5px,#ffe0ff 765.5px,#fffeff 774.5px,#fffdff 838.5px,#ffbcff 864.5px,#ffa5ff 875.5px,#ae78ff 901.5px,#664aff 929.5px,#3626ff 951.5px,#3224f3 952.5px,#1f1694 957.5px,#110c4f 960.5px,#0b0834 961.5px,#030210 962.5px,#000 963.5px)"></i>
<i style="background:linear-gradient(90deg,#000 316.5px,#02020b 317.5px,#0a072f 318.5px,#150f64 320.5px,#2219a5 323.5px,#3224f0 327.5px,#3526ff 328.5px,#805dff 361.5px,#ce8aff 389.5px,#ffa5ff 404.5px,#ffe5ff 432.5px,#fff 442.5px,#fff 505.5px,#ffc2ff 522.5px,#fda4ff 529.5px,#e697ff 532.5px,#e697ff 747.5px,#fda4ff 750.5px,#ffe1ff 765.5px,#fff 774.5px,#fffdff 838.5px,#ffbcff 864.5px,#ffa5ff 875.5px,#b079ff 900.5px,#684bff 928.5px,#3526ff 951.5px,#2e21de 953.5px,#1e1691 957.5px,#100b4b 960.5px,#0a072f 961.5px,#02020b 962.5px,#000 963.5px)"></i>
<i style="background:linear-gradient(90deg,#000 316.5px,#010105 317.5px,#090629 318.5px,#0f0b47 319.5px,#191278 321.5px,#2a1ec9 325.5px,#3526ff 328.5px,#805dff 361.5px,#ce89ff 389.5px,#ffa5ff 404.5px,#ffe5ff 432.5px,#fff 442.5px,#fff 505.5px,#ffc3ff 522.5px,#fea4ff 529.5px,#e797ff 532.5px,#e697ff 746.5px,#e797ff 747.5px,#fea4ff 750.5px,#ffe1ff 765.5px,#fff 774.5px,#fffdff 838.5px,#ffbcff 864.5px,#ffa5ff 875.5px,#b079ff 900.5px,#6a4dff 927.5px,#3526ff 951.5px,#2218a2 956.5px,#140e60 959.5px,#0f0b47 960.5px,#090629 961.5px,#010105 962.5px,#000 963.5px)"></i>
<i style="background:linear-gradient(90deg,#000 317.5px,#0e0a43 319.5px,#181174 321.5px,#291dc6 325.5px,#3426fc 328.5px,#3b2aff 331.5px,#8560ff 363.5px,#d08bff 390.5px,#fea5ff 404.5px,#ffe5ff 432.5px,#fff 442.5px,#fff 505.5px,#ffc7ff 521.5px,#ffa5ff 529.5px,#e798ff 532.5px,#e697ff 746.5px,#e798ff 747.5px,#ffa5ff 750.5px,#ffe1ff 765.5px,#fff 774.5px,#fff 837.5px,#ffbaff 865.5px,#fea5ff 875.5px,#b079ff 900.5px,#6a4cff 927.5px,#3727ff 950.5px,#3426fc 951.5px,#21189f 956.5px,#130e5d 959.5px,#0e0a43 960.5px,#000 962.5px)"></i>
<i style="background:linear-gradient(90deg,#000 317.5px,#0d093e 319.5px,#171170 321.5px,#291dc3 325.5px,#3425f9 328.5px,#3627ff 329.5px,#825eff 362.5px,#d08bff 390.5px,#fea4ff 404.5px,#ffe4ff 432.5px,#fff 442.5px,#fff 505.5px,#ffcbff 520.5px,#ffa5ff 529.5px,#e798ff 532.5px,#e697ff 746.5px,#e798ff 747.5px,#ffa5ff 750.5px,#ffe2ff 765.5px,#fff 774.5px,#fff 837.5px,#ffbcff 864.5px,#fea4ff 875.5px,#af79ff 900.5px,#6c4eff 926.5px,#3627ff 950.5px,#3425f9 951.5px,#20179c 956.5px,#120d58 959.5px,#0d093e 960.5px,#000 962.5px)"></i>
<i style="background:linear-gradient(90deg,#000 317.5px,#050317 318.5px,#0c0939 319.5px,#17106d 321.5px,#241aac 324.5px,#3325f7 328.5px,#3627ff 329.5px,#815eff 362.5px,#d08bff 390.5px,#ffa6ff 405.5px,#ffe4ff 432.5px,#fff 442.5px,#fff 505.5px,#ffcbff 520.5px,#ffa5ff 529.5px,#e898ff 532.5px,#e697ff 732.5px,#e898ff 747.5px,#ffa5ff 750.5px,#ffe2ff 765.5px,#fff 774.5px,#fff 837.5px,#fbf 864.5px,#fea4ff 875.5px,#af78ff 900.5px,#694cff 927.5px,#3627ff 950.5px,#3325f7 951.5px,#201798 956.5px,#110d54 959.5px,#0c0939 960.5px,#050317 961.5px,#000 962.5px)"></i>
<i style="background:linear-gradient(90deg,#000 317.5px,#030210 318.5px,#0b0834 319.5px,#161069 321.5px,#2319a9 324.5px,#3324f4 328.5px,#3627ff 329.5px,#815eff 362.5px,#cf8aff 390.5px,#ffa6ff 405.5px,#ffe4ff 432.5px,#fff 442.5px,#fffdff 506.5px,#ffc4ff 522.5px,#ffa6ff 529.5px,#e898ff 532.5px,#e697ff 548.5px,#e697ff 746.5px,#e898ff 747.5px,#ffa6ff 750.5px,#ffe2ff 765.5px,#fff 774.5px,#fff 837.5px,#ffbdff 863.5px,#fda4ff 875.5px,#af78ff 900.5px,#694cff 927.5px,#3627ff 950.5px,#3324f4 951.5px,#1f1695 956.5px,#110c50 959.5px,#0b0834 960.5px,#030210 961.5px,#000 962.5px)"></i>
<i style="background:linear-gradient(90deg,#000 317.5px,#02020b 318.5px,#0a072f 319.5px,#150f65 321.5px,#2319a6 324.5px,#3224f1 328.5px,#3526ff 329.5px,#815dff 362.5px,#cf8aff 390.5px,#ffa6ff 405.5px,#ffe4ff 432.5px,#fff 442.5px,#fffdff 506.5px,#ffc4ff 522.5px,#ffa6ff 529.5px,#e999ff 532.5px,#e697ff 536.5px,#e697ff 746.5px,#e999ff 747.5px,#ffa6ff 750.5px,#ffe3ff 765.5px,#fff 774.5px,#fff 837.5px,#ffbdff 863.5px,#fda4ff 875.5px,#ae78ff 900.5px,#664aff 928.5px,#3526ff 950.5px,#3224f1 951.5px,#2319a6 955.5px,#150f65 958.5px,#0a072f 960.5px,#02020b 961.5px,#000 962.5px)"></i>
<i style="background:linear-gradient(90deg,#000 317.5px,#010105 318.5px,#09062a 319.5px,#0f0b47 320.5px,#191278 322.5px,#2a1eca 326.5px,#3526ff 329.5px,#815dff 362.5px,#cf8aff 390.5px,#ffa6ff 405.5px,#ffe4ff 432.5px,#fff 442.5px,#fffeff 506.5px,#ffc5ff 522.5px,#ffa6ff 529.5px,#e999ff 532.5px,#e697ff 534.5px,#e697ff 746.5px,#e999ff 747.5px,#ffa6ff 750.5px,#ffe3ff 765.5px,#fff 774.5px,#fff 837.5px,#ffbdff 863.5px,#ffa6ff 874.5px,#a875ff 902.5px,#5a41ff 933.5px,#3526ff 950.5px,#261bb7 954.5px,#191278 957.5px,#0f0b47 959.5px,#09062a 960.5px,#010105 961.5px,#000 962.5px)"></i>
<i style="background:linear-gradient(90deg,#000 318.5px,#0e0a43 320.5px,#181175 322.5px,#291ec7 326.5px,#3526fd 329.5px,#805dff 362.5px,#ce8aff 390.5px,#ffa5ff 405.5px,#ffe3ff 432.5px,#fff 442.5px,#fffeff 506.5px,#ffc5ff 522.5px,#ffa7ff 529.5px,#f29eff 531.5px,#ea99ff 532.5px,#e697ff 534.5px,#e697ff 746.5px,#ea99ff 747.5px,#faa2ff 749.5px,#ffa7ff 750.5px,#ffe3ff 765.5px,#fffeff 773.5px,#fff 837.5px,#ffbdff 863.5px,#ffa5ff 874.5px,#ab76ff 901.5px,#6348ff 929.5px,#3526fd 950.5px,#2118a0 955.5px,#130e5d 958.5px,#0e0a43 959.5px,#000 961.5px)"></i>
<i style="background:linear-gradient(90deg,#000 318.5px,#0d093e 320.5px,#171171 322.5px,#291dc4 326.5px,#3425fb 329.5px,#3727ff 330.5px,#805dff 362.5px,#ce8aff 390.5px,#ffa5ff 405.5px,#ffe3ff 432.5px,#fff 443.5px,#fffeff 506.5px,#ffc5ff 522.5px,#ffa7ff 529.5px,#f39eff 531.5px,#ea99ff 532.5px,#e697ff 534.5px,#e697ff 746.5px,#ea99ff 747.5px,#fba3ff 749.5px,#ffa7ff 750.5px,#ffe4ff 765.5px,#fffeff 773.5px,#fffeff 837.5px,#ffbdff 863.5px,#ffa5ff 874.5px,#ab76ff 901.5px,#6549ff 928.5px,#3727ff 949.5px,#3425fb 950.5px,#20179c 955.5px,#120d59 958.5px,#0d093e 959.5px,#000 961.5px)"></i>
<i style="background:linear-gradient(90deg,#000 318.5px,#050317 319.5px,#0c0939 320.5px,#17106d 322.5px,#241aad 325.5px,#3425f8 329.5px,#3627ff 330.5px,#805dff 362.5px,#ce8aff 390.5px,#ffa5ff 405.5px,#ffe3ff 432.5px,#fff 443.5px,#fff 506.5px,#ffc5ff 522.5px,#ffa7ff 529.5px,#fba3ff 530.5px,#eb9aff 532.5px,#e697ff 533.5px,#e697ff 746.5px,#f39eff 748.5px,#fba3ff 749.5px,#ffacff 751.5px,#ffe7ff 766.5px,#fff 773.5px,#fffeff 837.5px,#ffbdff 863.5px,#ffa5ff 874.5px,#b079ff 899.5px,#6c4eff 925.5px,#3627ff 949.5px,#3425f8 950.5px,#201799 955.5px,#120d55 958.5px,#0c0939 959.5px,#050317 960.5px,#000 961.5px)"></i>
<i style="background:linear-gradient(90deg,#000 318.5px,#030211 319.5px,#0b0834 320.5px,#161069 322.5px,#2319aa 325.5px,#3325f5 329.5px,#3627ff 330.5px,#7f5cff 362.5px,#ce89ff 390.5px,#ffa5ff 405.5px,#ffe3ff 432.5px,#fff 443.5px,#fff 506.5px,#ffc6ff 522.5px,#ffa8ff 529.5px,#fca3ff 530.5px,#eb9aff 532.5px,#e797ff 533.5px,#e797ff 746.5px,#f49fff 748.5px,#fca3ff 749.5px,#ffacff 751.5px,#ffe8ff 766.5px,#fff 773.5px,#fffeff 837.5px,#ffbcff 863.5px,#ffa5ff 874.5px,#b079ff 899.5px,#6b4eff 925.5px,#3627ff 949.5px,#3325f5 950.5px,#1f1696 955.5px,#110c50 958.5px,#0b0834 959.5px,#030211 960.5px,#000 961.5px)"></i>
<i style="background:linear-gradient(90deg,#000 318.5px,#02020b 319.5px,#0a072f 320.5px,#150f65 322.5px,#2319a7 325.5px,#3224f2 329.5px,#3626ff 330.5px,#7f5cff 362.5px,#cd89ff 390.5px,#ffa5ff 405.5px,#ffe3ff 432.5px,#fff 443.5px,#fff 506.5px,#ffc6ff 522.5px,#ffa8ff 529.5px,#fca3ff 530.5px,#e797ff 533.5px,#e797ff 746.5px,#fca3ff 749.5px,#ffb1ff 752.5px,#ffecff 767.5px,#fff 773.5px,#fffeff 837.5px,#ffbcff 863.5px,#ffa5ff 874.5px,#af79ff 899.5px,#6b4eff 925.5px,#3626ff 949.5px,#3224f2 950.5px,#2319a7 954.5px,#150f65 957.5px,#0a072f 959.5px,#02020b 960.5px,#000 961.5px)"></i>
<i style="background:linear-gradient(90deg,#000 318.5px,#010105 319.5px,#09062a 320.5px,#0f0b48 321.5px,#191279 323.5px,#2a1ecb 327.5px,#3526ff 330.5px,#7f5cff 362.5px,#cd89ff 390.5px,#fea5ff 405.5px,#ffe3ff 432.5px,#fff 443.5px,#fff 506.5px,#ffcbff 521.5px,#fda4ff 530.5px,#e797ff 533.5px,#e797ff 746.5px,#fda4ff 749.5px,#ffd6ff 761.5px,#fff 773.5px,#fffeff 837.5px,#ffbcff 863.5px,#fea5ff 874.5px,#af78ff 899.5px,#684cff 926.5px,#3526ff 949.5px,#2a1ecb 952.5px,#191279 956.5px,#0f0b48 958.5px,#09062a 959.5px,#010105 960.5px,#000 961.5px)"></i>
<i style="background:linear-gradient(90deg,#000 318.5px,#000001 319.5px,#070524 320.5px,#0e0a43 321.5px,#181175 323.5px,#2a1ec8 327.5px,#3526ff 330.5px,#815dff 363.5px,#d08bff 391.5px,#fea4ff 405.5px,#ffe2ff 432.5px,#fff 443.5px,#fff 506.5px,#ffcfff 520.5px,#fda4ff 530.5px,#e798ff 533.5px,#e798ff 746.5px,#fda4ff 749.5px,#ffe2ff 764.5px,#fff 773.5px,#fffeff 837.5px,#ffbcff 863.5px,#fea4ff 874.5px,#af78ff 899.5px,#664aff 927.5px,#3526ff 949.5px,#2118a0 954.5px,#130e5d 957.5px,#0e0a43 958.5px,#070524 959.5px,#000001 960.5px,#000 961.5px)"></i>
<i style="background:linear-gradient(90deg,#000 319.5px,#0d093f 321.5px,#181172 323.5px,#291dc5 327.5px,#3426fc 330.5px,#3929ff 332.5px,#835fff 364.5px,#cf8aff 391.5px,#ffa6ff 406.5px,#ffe5ff 433.5px,#fff 443.5px,#fffdff 507.5px,#ffc3ff 523.5px,#fea4ff 530.5px,#e798ff 533.5px,#e798ff 746.5px,#fea4ff 749.5px,#ffe2ff 764.5px,#fff 773.5px,#fffdff 837.5px,#ffbcff 863.5px,#fea4ff 874.5px,#ae78ff 899.5px,#6549ff 927.5px,#3727ff 948.5px,#3426fc 949.5px,#21179d 954.5px,#130d59 957.5px,#0d093f 958.5px,#000 960.5px)"></i>
<i style="background:linear-gradient(90deg,#000 319.5px,#050418 320.5px,#0c093a 321.5px,#17106e 323.5px,#241aae 326.5px,#3425f9 330.5px,#3627ff 331.5px,#805dff 363.5px,#cf8aff 391.5px,#ffa6ff 406.5px,#ffe5ff 433.5px,#fff 443.5px,#fffeff 507.5px,#ffc3ff 523.5px,#ffa5ff 530.5px,#e898ff 533.5px,#e898ff 746.5px,#ffa5ff 749.5px,#ffe2ff 764.5px,#fff 773.5px,#fffdff 837.5px,#fbf 863.5px,#fda4ff 874.5px,#ae78ff 899.5px,#674bff 926.5px,#3627ff 948.5px,#3425f9 949.5px,#20179a 954.5px,#120d55 957.5px,#0c093a 958.5px,#050418 959.5px,#000 960.5px)"></i>
<i style="background:linear-gradient(90deg,#000 319.5px,#030211 320.5px,#0b0835 321.5px,#16106a 323.5px,#2419ab 326.5px,#3325f6 330.5px,#3627ff 331.5px,#805dff 363.5px,#cf8aff 391.5px,#ffa6ff 406.5px,#ffe4ff 433.5px,#fff 443.5px,#fffeff 507.5px,#ffc4ff 523.5px,#ffa5ff 530.5px,#e898ff 533.5px,#e898ff 746.5px,#ffa5ff 749.5px,#ffe3ff 764.5px,#fff 773.5px,#fff 836.5px,#ffb9ff 864.5px,#fda4ff 874.5px,#ae78ff 899.5px,#6a4cff 925.5px,#3627ff 948.5px,#3325f6 949.5px,#1f1696 954.5px,#110c51 957.5px,#0b0835 958.5px,#030211 959.5px,#000 960.5px)"></i>
<i style="background:linear-gradient(90deg,#000 319.5px,#02020b 320.5px,#0a072f 321.5px,#150f66 323.5px,#2319a8 326.5px,#3324f3 330.5px,#3627ff 331.5px,#805dff 363.5px,#ce8aff 391.5px,#ffa6ff 406.5px,#ffe4ff 433.5px,#fff 443.5px,#fffeff 507.5px,#ffc4ff 523.5px,#ffa5ff 530.5px,#e898ff 533.5px,#e898ff 746.5px,#ffa5ff 749.5px,#ffe3ff 764.5px,#fffeff 772.5px,#fff 836.5px,#ffb9ff 864.5px,#ffa6ff 873.5px,#a874ff 901.5px,#6449ff 927.5px,#3627ff 948.5px,#3324f3 949.5px,#1f1693 954.5px,#100b4c 957.5px,#0a072f 958.5px,#02020b 959.5px,#000 960.5px)"></i>
<i style="background:linear-gradient(90deg,#000 319.5px,#010105 320.5px,#09062a 321.5px,#0f0b48 322.5px,#191279 324.5px,#2a1ecc 328.5px,#3224f1 330.5px,#3526ff 331.5px,#7f5cff 363.5px,#ce8aff 391.5px,#ffa5ff 406.5px,#ffe4ff 433.5px,#fff 443.5px,#fff 507.5px,#ffc4ff 523.5px,#ffa6ff 530.5px,#e998ff 533.5px,#e798ff 745.5px,#e998ff 746.5px,#ffa6ff 749.5px,#ffe3ff 764.5px,#fff 772.5px,#fff 836.5px,#fbf 863.5px,#ffa5ff 873.5px,#aa76ff 900.5px,#694cff 925.5px,#3526ff 948.5px,#2e21de 950.5px,#1e158f 954.5px,#140f62 956.5px,#0f0b48 957.5px,#09062a 958.5px,#010105 959.5px,#000 960.5px)"></i>
<i style="background:linear-gradient(90deg,#000 319.5px,#000001 320.5px,#080524 321.5px,#0e0a44 322.5px,#181276 324.5px,#2a1ec9 328.5px,#3526ff 331.5px,#7f5cff 363.5px,#ce8aff 391.5px,#ffa5ff 406.5px,#ffe4ff 433.5px,#fff 443.5px,#fff 507.5px,#ffc5ff 523.5px,#ffa6ff 530.5px,#e999ff 533.5px,#e798ff 745.5px,#e999ff 746.5px,#ffa6ff 749.5px,#ffe4ff 764.5px,#fff 772.5px,#fff 836.5px,#ffbdff 862.5px,#ffa5ff 873.5px,#ad77ff 899.5px,#694cff 925.5px,#3526ff 948.5px,#261bb5 952.5px,#181276 955.5px,#0e0a44 957.5px,#080524 958.5px,#000001 959.5px,#000 960.5px)"></i>
<i style="background:linear-gradient(90deg,#000 320.5px,#0d093f 322.5px,#181172 324.5px,#291dc6 328.5px,#3526fd 331.5px,#815eff 364.5px,#cd89ff 391.5px,#ffa5ff 406.5px,#ffe4ff 433.5px,#fff 443.5px,#fff 507.5px,#ffc5ff 523.5px,#ffa6ff 530.5px,#e999ff 533.5px,#e898ff 745.5px,#e999ff 746.5px,#ffa6ff 749.5px,#ffe4ff 764.5px,#fff 772.5px,#fff 836.5px,#ffbdff 862.5px,#ffa5ff 873.5px,#af79ff 898.5px,#684cff 925.5px,#3526fd 948.5px,#21189e 953.5px,#130d5a 956.5px,#0d093f 957.5px,#000 959.5px)"></i>
<i style="background:linear-gradient(90deg,#000 320.5px,#050418 321.5px,#0c093a 322.5px,#17106e 324.5px,#241aaf 327.5px,#3425fa 331.5px,#3727ff 332.5px,#815dff 364.5px,#cd89ff 391.5px,#ffa5ff 406.5px,#ffe3ff 433.5px,#fff 443.5px,#fff 507.5px,#ffc9ff 522.5px,#ffa7ff 530.5px,#f29eff 532.5px,#ea99ff 533.5px,#e798ff 729.5px,#ea99ff 746.5px,#faa2ff 748.5px,#ffa7ff 749.5px,#ffe4ff 764.5px,#fff 772.5px,#fff 836.5px,#ffbfff 861.5px,#ffa5ff 873.5px,#af78ff 898.5px,#684bff 925.5px,#3727ff 947.5px,#3425fa 948.5px,#20179a 953.5px,#120d56 956.5px,#0c093a 957.5px,#050418 958.5px,#000 959.5px)"></i>
<i style="background:linear-gradient(90deg,#000 320.5px,#040311 321.5px,#0b0835 322.5px,#16106a 324.5px,#241aac 327.5px,#3325f7 331.5px,#3627ff 332.5px,#815dff 364.5px,#cd89ff 391.5px,#ffa5ff 406.5px,#ffe3ff 433.5px,#fff 443.5px,#fff 507.5px,#ffceff 521.5px,#ffa7ff 530.5px,#f29eff 532.5px,#ea99ff 533.5px,#e898ff 547.5px,#e898ff 745.5px,#ea99ff 746.5px,#faa2ff 748.5px,#ffa7ff 749.5px,#ffe5ff 764.5px,#fff 772.5px,#fff 836.5px,#ffbfff 861.5px,#ffa5ff 873.5px,#af78ff 898.5px,#6549ff 926.5px,#3627ff 947.5px,#3325f7 948.5px,#1f1797 953.5px,#110c51 956.5px,#0b0835 957.5px,#040311 958.5px,#000 959.5px)"></i>
<i style="background:linear-gradient(90deg,#000 320.5px,#02020b 321.5px,#0a0730 322.5px,#150f66 324.5px,#2319a8 327.5px,#3324f5 331.5px,#3627ff 332.5px,#805dff 364.5px,#cd89ff 391.5px,#fea5ff 406.5px,#ffe3ff 433.5px,#fff 443.5px,#fff 507.5px,#ffd2ff 520.5px,#ffa7ff 530.5px,#fba3ff 531.5px,#ea9aff 533.5px,#e898ff 537.5px,#e898ff 745.5px,#ea9aff 746.5px,#fba3ff 748.5px,#ffacff 750.5px,#ffe9ff 765.5px,#fff 772.5px,#fff 836.5px,#ffbfff 861.5px,#fea5ff 873.5px,#ae78ff 898.5px,#674bff 925.5px,#3627ff 947.5px,#3324f5 948.5px,#1f1694 953.5px,#100b4d 956.5px,#0a0730 957.5px,#02020b 958.5px,#000 959.5px)"></i>
<i style="background:linear-gradient(90deg,#000 320.5px,#010106 321.5px,#09062a 322.5px,#0f0b48 323.5px,#19127a 325.5px,#2b1ecd 329.5px,#3224f2 331.5px,#3626ff 332.5px,#805dff 364.5px,#cc89ff 391.5px,#fea4ff 406.5px,#ffe3ff 433.5px,#fff 444.5px,#fffdff 508.5px,#ffc2ff 524.5px,#ffa8ff 530.5px,#fca3ff 531.5px,#eb9aff 533.5px,#e898ff 535.5px,#e898ff 745.5px,#eb9aff 746.5px,#fca3ff 748.5px,#ffacff 750.5px,#ffe9ff 765.5px,#fff 772.5px,#fffeff 836.5px,#ffbeff 861.5px,#fea4ff 873.5px,#ae78ff 898.5px,#694cff 924.5px,#3626ff 947.5px,#3224f2 948.5px,#2219a5 952.5px,#140f62 955.5px,#0f0b48 956.5px,#09062a 957.5px,#010106 958.5px,#000 959.5px)"></i>
<i style="background:linear-gradient(90deg,#000 320.5px,#000001 321.5px,#080525 322.5px,#0e0a44 323.5px,#191276 325.5px,#2a1eca 329.5px,#3526ff 332.5px,#805dff 364.5px,#c8f 391.5px,#ffa6ff 407.5px,#ffe5ff 434.5px,#fff 444.5px,#fffeff 508.5px,#ffc3ff 524.5px,#ffa8ff 530.5px,#fca3ff 531.5px,#ec9aff 533.5px,#e898ff 535.5px,#e898ff 745.5px,#ec9aff 746.5px,#fca3ff 748.5px,#ffb1ff 751.5px,#ffedff 766.5px,#fff 772.5px,#fffeff 836.5px,#ffbeff 861.5px,#fea4ff 873.5px,#ae78ff 898.5px,#694cff 924.5px,#3526ff 947.5px,#2a1eca 950.5px,#191276 954.5px,#0e0a44 956.5px,#080525 957.5px,#000001 958.5px,#000 959.5px)"></i>
<i style="background:linear-gradient(90deg,#000 321.5px,#0d093f 323.5px,#181173 325.5px,#291ec7 329.5px,#3526fe 332.5px,#7f5cff 364.5px,#c8f 391.5px,#ffa6ff 407.5px,#ffe5ff 434.5px,#fff 444.5px,#fffeff 508.5px,#ffc3ff 524.5px,#fda4ff 531.5px,#ec9bff 533.5px,#e898ff 534.5px,#e898ff 745.5px,#ec9bff 746.5px,#fda4ff 748.5px,#ffcbff 757.5px,#fffeff 771.5px,#fffeff 836.5px,#ffbeff 861.5px,#fda4ff 873.5px,#ae78ff 898.5px,#6b4eff 923.5px,#3526fe 947.5px,#21189f 952.5px,#130d5a 955.5px,#0d093f 956.5px,#000 958.5px)"></i>
<i style="background:linear-gradient(90deg,#000 321.5px,#050418 322.5px,#0c093a 323.5px,#17116f 325.5px,#251ab0 328.5px,#3425fb 332.5px,#3929ff 334.5px,#8460ff 366.5px,#d28cff 393.5px,#ffa6ff 407.5px,#ffe5ff 434.5px,#fff 444.5px,#fffeff 508.5px,#ffc3ff 524.5px,#fda4ff 531.5px,#ed9bff 533.5px,#e898ff 534.5px,#e898ff 745.5px,#f5a0ff 747.5px,#fda4ff 748.5px,#ffe3ff 763.5px,#fffeff 771.5px,#fffeff 836.5px,#ffbeff 861.5px,#fda4ff 873.5px,#ad77ff 898.5px,#6b4dff 923.5px,#3727ff 946.5px,#3425fb 947.5px,#20179b 952.5px,#120d56 955.5px,#0c093a 956.5px,#050418 957.5px,#000 958.5px)"></i>
<i style="background:linear-gradient(90deg,#000 321.5px,#040311 322.5px,#0b0835 323.5px,#16106b 325.5px,#241aad 328.5px,#3425f8 332.5px,#3627ff 333.5px,#815eff 365.5px,#ce8aff 392.5px,#ffa6ff 407.5px,#ffe5ff 434.5px,#fff 444.5px,#fff 508.5px,#ffc4ff 524.5px,#fea4ff 531.5px,#ed9bff 533.5px,#e898ff 534.5px,#e898ff 745.5px,#f6a0ff 747.5px,#fea4ff 748.5px,#ffe3ff 763.5px,#fff 771.5px,#fffeff 836.5px,#ffbeff 861.5px,#ffa6ff 872.5px,#a774ff 900.5px,#6146ff 927.5px,#3627ff 946.5px,#3425f8 947.5px,#201798 952.5px,#110c52 955.5px,#0b0835 956.5px,#040311 957.5px,#000 958.5px)"></i>
<i style="background:linear-gradient(90deg,#000 321.5px,#02020c 322.5px,#0a0730 323.5px,#150f67 325.5px,#2319a9 328.5px,#3325f6 332.5px,#3627ff 333.5px,#815eff 365.5px,#ce8aff 392.5px,#ffa6ff 407.5px,#ffe5ff 434.5px,#fff 444.5px,#fff 508.5px,#ffc4ff 524.5px,#ffa5ff 531.5px,#e998ff 534.5px,#e998ff 745.5px,#ffa5ff 748.5px,#ffe3ff 763.5px,#fff 771.5px,#fffdff 836.5px,#ffbdff 861.5px,#ffa6ff 872.5px,#aa75ff 899.5px,#6348ff 926.5px,#3627ff 946.5px,#3325f6 947.5px,#1f1694 952.5px,#100c4d 955.5px,#0a0730 956.5px,#02020c 957.5px,#000 958.5px)"></i>
<i style="background:linear-gradient(90deg,#000 321.5px,#010106 322.5px,#09062b 323.5px,#0f0b49 324.5px,#19127b 326.5px,#2b1fce 330.5px,#3224f3 332.5px,#3627ff 333.5px,#815dff 365.5px,#cd89ff 392.5px,#ffa5ff 407.5px,#ffe4ff 434.5px,#fff 444.5px,#fff 508.5px,#ffc8ff 523.5px,#ffa5ff 531.5px,#e999ff 534.5px,#e999ff 745.5px,#ffa5ff 748.5px,#ffe4ff 763.5px,#fff 771.5px,#fffdff 836.5px,#ffbdff 861.5px,#ffa5ff 872.5px,#ac77ff 898.5px,#6347ff 926.5px,#3627ff 946.5px,#3224f3 947.5px,#2319a6 951.5px,#150f63 954.5px,#0f0b49 955.5px,#09062b 956.5px,#010106 957.5px,#000 958.5px)"></i>
<i style="background:linear-gradient(90deg,#000 321.5px,#000001 322.5px,#080525 323.5px,#0e0a44 324.5px,#191277 326.5px,#2a1ecb 330.5px,#3224f0 332.5px,#3526ff 333.5px,#805dff 365.5px,#cd89ff 392.5px,#ffa5ff 407.5px,#ffe4ff 434.5px,#fff 444.5px,#fff 508.5px,#ffc9ff 523.5px,#ffa5ff 531.5px,#e999ff 534.5px,#e999ff 745.5px,#ffa5ff 748.5px,#ffe4ff 763.5px,#fff 771.5px,#fffdff 836.5px,#ffbdff 861.5px,#ffa5ff 872.5px,#af78ff 897.5px,#674bff 924.5px,#3526ff 946.5px,#2e21de 948.5px,#1d158d 952.5px,#140e5f 954.5px,#0e0a44 955.5px,#080525 956.5px,#000001 957.5px,#000 958.5px)"></i>
<i style="background:linear-gradient(90deg,#000 322.5px,#0d0940 324.5px,#181173 326.5px,#291ec8 330.5px,#3526ff 333.5px,#805dff 365.5px,#cd89ff 392.5px,#ffa5ff 407.5px,#ffe4ff 434.5px,#fff 444.5px,#fff 508.5px,#ffcdff 522.5px,#ffa6ff 531.5px,#e999ff 534.5px,#e999ff 745.5px,#ffa6ff 748.5px,#ffe4ff 763.5px,#fff 771.5px,#fff 835.5px,#ffb8ff 863.5px,#ffa5ff 872.5px,#af78ff 897.5px,#694cff 923.5px,#3526ff 946.5px,#21189f 951.5px,#130e5b 954.5px,#0d0940 955.5px,#000 957.5px)"></i>
<i style="background:linear-gradient(90deg,#000 322.5px,#050418 323.5px,#0c093b 324.5px,#17116f 326.5px,#291dc4 330.5px,#3426fd 333.5px,#3f2eff 338.5px,#8a64ff 369.5px,#d68eff 395.5px,#ffa5ff 407.5px,#ffe4ff 434.5px,#fff 444.5px,#fffdff 509.5px,#ffc1ff 525.5px,#ffa6ff 531.5px,#e999ff 534.5px,#e999ff 745.5px,#ffa6ff 748.5px,#ffe5ff 763.5px,#fff 771.5px,#fff 835.5px,#ffbaff 862.5px,#ffa5ff 872.5px,#ae78ff 897.5px,#694cff 923.5px,#3727ff 945.5px,#3426fd 946.5px,#20179c 951.5px,#120d56 954.5px,#0c093b 955.5px,#050418 956.5px,#000 957.5px)"></i>
<i style="background:linear-gradient(90deg,#000 322.5px,#040311 323.5px,#0b0836 324.5px,#16106b 326.5px,#241aad 329.5px,#3425fa 333.5px,#3727ff 334.5px,#825eff 366.5px,#cf8aff 393.5px,#fea5ff 407.5px,#ffe4ff 434.5px,#fff 444.5px,#fff 508.5px,#ffc9ff 523.5px,#ffa5ff 531.5px,#e898ff 534.5px,#e898ff 745.5px,#ffa5ff 748.5px,#ffe4ff 763.5px,#fff 771.5px,#fff 835.5px,#ffbaff 862.5px,#fea5ff 872.5px,#ae78ff 897.5px,#6b4eff 922.5px,#3727ff 945.5px,#3425fa 946.5px,#201799 951.5px,#110c52 954.5px,#0b0836 955.5px,#040311 956.5px,#000 957.5px)"></i>
<i style="background:linear-gradient(90deg,#000 322.5px,#02020c 323.5px,#0a0730 324.5px,#150f67 326.5px,#2319aa 329.5px,#3325f7 333.5px,#3627ff 334.5px,#825eff 366.5px,#cf8aff 393.5px,#fea4ff 407.5px,#ffe4ff 434.5px,#fff 444.5px,#fff 508.5px,#ffc4ff 524.5px,#fea5ff 531.5px,#e697ff 534.5px,#e697ff 745.5px,#fea5ff 748.5px,#ffe3ff 763.5px,#fff 771.5px,#fff 835.5px,#ffbcff 861.5px,#fea4ff 872.5px,#ae78ff 897.5px,#6b4dff 922.5px,#3627ff 945.5px,#3325f7 946.5px,#1f1695 951.5px,#100c4e 954.5px,#0a0730 955.5px,#02020c 956.5px,#000 957.5px)"></i>
<i style="background:linear-gradient(90deg,#000 322.5px,#010106 323.5px,#09062b 324.5px,#0f0b49 325.5px,#1a127b 327.5px,#2b1fcf 331.5px,#3324f4 333.5px,#3627ff 334.5px,#815eff 366.5px,#cf8aff 393.5px,#ffa6ff 408.5px,#ffe6ff 435.5px,#fff 444.5px,#fffeff 508.5px,#ffc3ff 524.5px,#ffa8ff 530.5px,#fda4ff 531.5px,#e596ff 534.5px,#e396ff 744.5px,#e596ff 745.5px,#fda4ff 748.5px,#ffbfff 754.5px,#fffbff 770.5px,#fff 773.5px,#fff 835.5px,#ffbeff 860.5px,#fea4ff 872.5px,#ad77ff 897.5px,#684bff 923.5px,#3627ff 945.5px,#3324f4 946.5px,#2319a7 950.5px,#150f63 953.5px,#0f0b49 954.5px,#09062b 955.5px,#010106 956.5px,#000 957.5px)"></i>
<i style="background:linear-gradient(90deg,#000 322.5px,#000001 323.5px,#080625 324.5px,#0e0a45 325.5px,#191278 327.5px,#2a1ecc 331.5px,#3224f1 333.5px,#3626ff 334.5px,#815eff 366.5px,#ce8aff 393.5px,#ffa6ff 408.5px,#ffe6ff 435.5px,#fff 444.5px,#fffdff 508.5px,#ffc2ff 524.5px,#ffa7ff 530.5px,#fba3ff 531.5px,#e395ff 534.5px,#e194ff 744.5px,#e395ff 745.5px,#fba3ff 748.5px,#ffacff 750.5px,#ffe9ff 765.5px,#fff 772.5px,#fff 835.5px,#ffbeff 860.5px,#fda4ff 872.5px,#ad77ff 897.5px,#684bff 923.5px,#3626ff 945.5px,#3224f1 946.5px,#2218a3 950.5px,#140e5f 953.5px,#0e0a45 954.5px,#080625 955.5px,#000001 956.5px,#000 957.5px)"></i>
<i style="background:linear-gradient(90deg,#000 323.5px,#0d0a40 325.5px,#181174 327.5px,#2a1ec9 331.5px,#3526ff 334.5px,#815dff 366.5px,#ce8aff 393.5px,#ffa6ff 408.5px,#ffe6ff 435.5px,#fff 444.5px,#fff 507.5px,#ffc9ff 522.5px,#ffa7ff 530.5px,#f29dff 532.5px,#e194ff 534.5px,#df93ff 744.5px,#e194ff 745.5px,#faa2ff 748.5px,#ffa7ff 749.5px,#ffe4ff 764.5px,#fff 772.5px,#fff 835.5px,#ffbeff 860.5px,#fda4ff 872.5px,#ad77ff 897.5px,#6549ff 924.5px,#3526ff 945.5px,#261bb5 949.5px,#181174 952.5px,#0d0a40 954.5px,#000 956.5px)"></i>
<i style="background:linear-gradient(90deg,#000 323.5px,#050419 324.5px,#0c093b 325.5px,#171170 327.5px,#291dc5 331.5px,#3526fe 334.5px,#805dff 366.5px,#ce89ff 393.5px,#ffa6ff 408.5px,#ffe5ff 435.5px,#fff 444.5px,#fff 507.5px,#ffc4ff 523.5px,#ffa6ff 530.5px,#df93ff 534.5px,#dd92ff 731.5px,#df93ff 745.5px,#ffa6ff 749.5px,#ffe3ff 764.5px,#fff 772.5px,#fff 835.5px,#ffbeff 860.5px,#ffa6ff 871.5px,#a674ff 899.5px,#5940ff 929.5px,#3526fe 945.5px,#21179d 950.5px,#120d57 953.5px,#0c093b 954.5px,#050419 955.5px,#000 956.5px)"></i>
<i style="background:linear-gradient(90deg,#000 323.5px,#040311 324.5px,#0b0836 325.5px,#16106c 327.5px,#241aae 330.5px,#3425fb 334.5px,#3727ff 335.5px,#835fff 367.5px,#d18bff 394.5px,#ffa6ff 408.5px,#ffe5ff 435.5px,#fff 445.5px,#fffeff 507.5px,#ffc4ff 523.5px,#ffa5ff 530.5px,#de92ff 534.5px,#db91ff 546.5px,#dc91ff 744.5px,#de92ff 745.5px,#ffa5ff 749.5px,#ffe3ff 764.5px,#fff 773.5px,#fffeff 835.5px,#ffbeff 860.5px,#ffa6ff 871.5px,#a975ff 898.5px,#6449ff 924.5px,#3727ff 944.5px,#3425fb 945.5px,#201799 950.5px,#110c53 953.5px,#0b0836 954.5px,#040311 955.5px,#000 956.5px)"></i>
<i style="background:linear-gradient(90deg,#000 323.5px,#02020c 324.5px,#0a0731 325.5px,#160f68 327.5px,#2419ab 330.5px,#3425f8 334.5px,#3627ff 335.5px,#825eff 367.5px,#d08bff 394.5px,#ffa5ff 408.5px,#ffe5ff 435.5px,#fff 445.5px,#fff 506.5px,#ffcfff 520.5px,#fda4ff 530.5px,#dc92ff 534.5px,#da90ff 538.5px,#da90ff 744.5px,#dc92ff 745.5px,#fda4ff 749.5px,#ffe2ff 764.5px,#fff 773.5px,#fffeff 835.5px,#ffbdff 860.5px,#ffa5ff 871.5px,#ac76ff 897.5px,#694cff 922.5px,#3627ff 944.5px,#3425f8 945.5px,#1f1696 950.5px,#100c4e 953.5px,#0a0731 954.5px,#02020c 955.5px,#000 956.5px)"></i>
<i style="background:linear-gradient(90deg,#000 323.5px,#010106 324.5px,#09062b 325.5px,#0f0b4a 326.5px,#1a127c 328.5px,#2b1fd0 332.5px,#3325f5 334.5px,#3627ff 335.5px,#825eff 367.5px,#d08bff 394.5px,#ffa5ff 408.5px,#ffe5ff 435.5px,#fff 445.5px,#fff 506.5px,#ffc6ff 522.5px,#ffa8ff 529.5px,#fca3ff 530.5px,#db91ff 534.5px,#d88fff 536.5px,#d88fff 744.5px,#db91ff 745.5px,#fca3ff 749.5px,#ffb1ff 752.5px,#ffebff 767.5px,#fff 773.5px,#fffeff 835.5px,#ffbdff 860.5px,#ffa5ff 871.5px,#ae78ff 896.5px,#6b4dff 921.5px,#3627ff 944.5px,#3325f5 945.5px,#2319a8 949.5px,#150f64 952.5px,#0f0b4a 953.5px,#09062b 954.5px,#010106 955.5px,#000 956.5px)"></i>
<i style="background:linear-gradient(90deg,#000 323.5px,#000001 324.5px,#080625 325.5px,#0e0a45 326.5px,#191278 328.5px,#2b1ecd 332.5px,#3224f2 334.5px,#3626ff 335.5px,#825eff 367.5px,#d08bff 394.5px,#ffa5ff 408.5px,#ffe5ff 435.5px,#fff 445.5px,#fffeff 506.5px,#ffc5ff 522.5px,#ffa7ff 529.5px,#f39eff 531.5px,#da90ff 534.5px,#d68eff 536.5px,#d68eff 744.5px,#da90ff 745.5px,#fba3ff 749.5px,#ffa7ff 750.5px,#ffe4ff 765.5px,#fffeff 773.5px,#fffeff 835.5px,#ffbdff 860.5px,#ffa5ff 871.5px,#b179ff 895.5px,#6d4fff 920.5px,#3626ff 944.5px,#3224f2 945.5px,#2218a4 949.5px,#140e60 952.5px,#0e0a45 953.5px,#080625 954.5px,#000001 955.5px,#000 956.5px)"></i>
<i style="background:linear-gradient(90deg,#000 324.5px,#0d0a40 326.5px,#181174 328.5px,#2a1ec9 332.5px,#3224ef 334.5px,#3526ff 335.5px,#815eff 367.5px,#cf8aff 394.5px,#ffa5ff 408.5px,#ffe5ff 435.5px,#fff 445.5px,#fffeff 506.5px,#ffc4ff 522.5px,#ffa6ff 529.5px,#e194ff 533.5px,#d88fff 534.5px,#d48dff 535.5px,#d48dff 744.5px,#d88fff 745.5px,#f9a2ff 749.5px,#ffa6ff 750.5px,#ffe3ff 765.5px,#fff 774.5px,#fffeff 835.5px,#ffbdff 860.5px,#ffa5ff 871.5px,#b179ff 895.5px,#6a4dff 921.5px,#3526ff 944.5px,#2e21dd 946.5px,#1d158b 950.5px,#130e5c 952.5px,#0d0a40 953.5px,#000 955.5px)"></i>
<i style="background:linear-gradient(90deg,#000 324.5px,#050419 325.5px,#0c093b 326.5px,#171171 328.5px,#291ec6 332.5px,#3526ff 335.5px,#815eff 367.5px,#cf8aff 394.5px,#fea5ff 408.5px,#ffe4ff 435.5px,#fff 445.5px,#fff 505.5px,#fcf 520.5px,#ffa5ff 529.5px,#d78eff 534.5px,#d28cff 535.5px,#d28cff 744.5px,#df93ff 746.5px,#ffa5ff 750.5px,#ffe2ff 765.5px,#fff 774.5px,#fffdff 835.5px,#ffbdff 860.5px,#fea5ff 871.5px,#b079ff 895.5px,#6a4dff 921.5px,#3526ff 944.5px,#21179d 949.5px,#120d57 952.5px,#0c093b 953.5px,#050419 954.5px,#000 955.5px)"></i>
<i style="background:linear-gradient(90deg,#000 324.5px,#040312 325.5px,#0b0836 326.5px,#17106d 328.5px,#241aaf 331.5px,#3426fc 335.5px,#3b2aff 338.5px,#8661ff 369.5px,#d28cff 395.5px,#fea4ff 408.5px,#ffe4ff 435.5px,#fff 445.5px,#fff 505.5px,#ffc7ff 521.5px,#fea5ff 529.5px,#d58eff 534.5px,#d08bff 535.5px,#d08bff 744.5px,#de92ff 746.5px,#fea5ff 750.5px,#ffe1ff 765.5px,#fff 774.5px,#fffdff 835.5px,#ffbdff 860.5px,#fea4ff 871.5px,#b079ff 895.5px,#674bff 922.5px,#3727ff 943.5px,#3426fc 944.5px,#20179a 949.5px,#110c53 952.5px,#0b0836 953.5px,#040312 954.5px,#000 955.5px)"></i>
<i style="background:linear-gradient(90deg,#000 324.5px,#03020c 325.5px,#0a0731 326.5px,#161069 328.5px,#241aac 331.5px,#3425f9 335.5px,#3627ff 336.5px,#805dff 367.5px,#ce8aff 394.5px,#ffa6ff 409.5px,#ffe7ff 436.5px,#fff 445.5px,#fffeff 505.5px,#ffc2ff 522.5px,#fda4ff 529.5px,#d48dff 534.5px,#ce8aff 535.5px,#ce8aff 744.5px,#e596ff 747.5px,#fda4ff 750.5px,#ffe0ff 765.5px,#fffeff 774.5px,#fffdff 835.5px,#ffbcff 860.5px,#fea4ff 871.5px,#b079ff 895.5px,#674aff 922.5px,#3627ff 943.5px,#3425f9 944.5px,#1f1697 949.5px,#100c4f 952.5px,#0a0731 953.5px,#03020c 954.5px,#000 955.5px)"></i>
<i style="background:linear-gradient(90deg,#000 324.5px,#010106 325.5px,#09062c 326.5px,#0f0b4a 327.5px,#1a137d 329.5px,#2b1fd1 333.5px,#3325f6 335.5px,#3627ff 336.5px,#805dff 367.5px,#ce8aff 394.5px,#ffa6ff 409.5px,#ffe6ff 436.5px,#fff 445.5px,#fffdff 505.5px,#ffc5ff 521.5px,#ffa7ff 528.5px,#fba3ff 529.5px,#cc89ff 535.5px,#cc89ff 744.5px,#fba3ff 750.5px,#ffacff 752.5px,#ffe7ff 767.5px,#fffdff 774.5px,#fff 834.5px,#ffb8ff 862.5px,#fda4ff 871.5px,#af78ff 895.5px,#694cff 921.5px,#3627ff 943.5px,#3325f6 944.5px,#2319a8 948.5px,#150f64 951.5px,#0f0b4a 952.5px,#09062c 953.5px,#010106 954.5px,#000 955.5px)"></i>
<i style="background:linear-gradient(90deg,#000 324.5px,#000001 325.5px,#080626 326.5px,#0e0a46 327.5px,#191279 329.5px,#2b1fce 333.5px,#3324f3 335.5px,#3627ff 336.5px,#805dff 367.5px,#ce89ff 394.5px,#ffa6ff 409.5px,#ffe6ff 436.5px,#fff 445.5px,#fffdff 505.5px,#ffc4ff 521.5px,#ffa7ff 528.5px,#f29eff 530.5px,#cb88ff 535.5px,#cb88ff 744.5px,#faa2ff 750.5px,#ffa7ff 751.5px,#ffe2ff 766.5px,#fffdff 774.5px,#fff 834.5px,#ffbaff 861.5px,#fda4ff 871.5px,#af78ff 895.5px,#6b4eff 920.5px,#3627ff 943.5px,#3324f3 944.5px,#2219a5 948.5px,#140e60 951.5px,#0e0a46 952.5px,#080626 953.5px,#000001 954.5px,#000 955.5px)"></i>
<i style="background:linear-gradient(90deg,#000 325.5px,#0d0a41 327.5px,#181175 329.5px,#2a1eca 333.5px,#3224f1 335.5px,#3526ff 336.5px,#7f5cff 367.5px,#cd89ff 394.5px,#ffa6ff 409.5px,#ffe6ff 436.5px,#fffeff 445.5px,#fffcff 505.5px,#ffc3ff 521.5px,#ffa6ff 528.5px,#c987ff 535.5px,#c987ff 744.5px,#ffa6ff 751.5px,#ffe1ff 766.5px,#fffcff 774.5px,#fffdff 835.5px,#ffbcff 860.5px,#ffa6ff 870.5px,#a673ff 898.5px,#6146ff 924.5px,#3526ff 943.5px,#3224f1 944.5px,#2218a2 948.5px,#130e5c 951.5px,#0d0a41 952.5px,#000 954.5px)"></i>
<i style="background:linear-gradient(90deg,#000 325.5px,#050419 326.5px,#0c093c 327.5px,#181171 329.5px,#291ec7 333.5px,#3526ff 336.5px,#7f5cff 367.5px,#cd89ff 394.5px,#ffa6ff 409.5px,#ffe6ff 436.5px,#fffdff 445.5px,#fffbff 505.5px,#ffc3ff 521.5px,#ffa5ff 528.5px,#c786ff 535.5px,#c786ff 744.5px,#ffa5ff 751.5px,#ffe1ff 766.5px,#fffbff 774.5px,#fffcff 835.5px,#ffbcff 860.5px,#ffa6ff 870.5px,#a875ff 897.5px,#684bff 921.5px,#3526ff 943.5px,#251bb3 947.5px,#181171 950.5px,#0c093c 952.5px,#050419 953.5px,#000 954.5px)"></i>
<i style="background:linear-gradient(90deg,#000 325.5px,#040312 326.5px,#0b0837 327.5px,#17106d 329.5px,#251ab0 332.5px,#3526fd 336.5px,#815eff 368.5px,#d08bff 395.5px,#ffa5ff 409.5px,#ffe6ff 436.5px,#fffcff 444.5px,#fffaff 505.5px,#ffc2ff 521.5px,#fea4ff 528.5px,#c685ff 535.5px,#c685ff 744.5px,#fea4ff 751.5px,#ffe0ff 766.5px,#fffaff 774.5px,#fffcff 835.5px,#ffb7ff 862.5px,#ffa5ff 870.5px,#a874ff 897.5px,#6549ff 922.5px,#3526fd 943.5px,#20179b 948.5px,#110c53 951.5px,#0b0837 952.5px,#040312 953.5px,#000 954.5px)"></i>
<i style="background:linear-gradient(90deg,#000 325.5px,#03020c 326.5px,#0a0731 327.5px,#161069 329.5px,#241aad 332.5px,#3425fa 336.5px,#3727ff 337.5px,#815eff 368.5px,#d08bff 395.5px,#ffa5ff 409.5px,#ffe6ff 436.5px,#fffbff 444.5px,#fff9ff 505.5px,#ffc5ff 520.5px,#ffa8ff 527.5px,#fca4ff 528.5px,#c484ff 535.5px,#c484ff 744.5px,#fca4ff 751.5px,#ffb1ff 754.5px,#ffedff 770.5px,#fff9ff 774.5px,#fff9ff 836.5px,#ffb9ff 861.5px,#ffa5ff 870.5px,#ab76ff 896.5px,#674bff 921.5px,#3727ff 942.5px,#3425fa 943.5px,#1f1797 948.5px,#100c4f 951.5px,#0a0731 952.5px,#03020c 953.5px,#000 954.5px)"></i>
<i style="background:linear-gradient(90deg,#000 325.5px,#010106 326.5px,#09072c 327.5px,#0f0b4a 328.5px,#1a137d 330.5px,#2c1fd2 334.5px,#3325f8 336.5px,#3627ff 337.5px,#815dff 368.5px,#cf8aff 395.5px,#ffa5ff 409.5px,#ffe5ff 436.5px,#fffaff 444.5px,#fff8ff 505.5px,#ffc4ff 520.5px,#ffa7ff 527.5px,#f39eff 529.5px,#c283ff 535.5px,#c283ff 744.5px,#fba3ff 751.5px,#ffa7ff 752.5px,#ffe2ff 767.5px,#fff8ff 774.5px,#fff9ff 836.5px,#ffb9ff 861.5px,#ffa5ff 870.5px,#ad77ff 895.5px,#674bff 921.5px,#3627ff 942.5px,#3325f8 943.5px,#2319a9 947.5px,#150f65 950.5px,#0f0b4a 951.5px,#09072c 952.5px,#010106 953.5px,#000 954.5px)"></i>
<i style="background:linear-gradient(90deg,#000 325.5px,#000001 326.5px,#080626 327.5px,#0f0a46 328.5px,#191279 330.5px,#2b1fcf 334.5px,#3324f5 336.5px,#3627ff 337.5px,#805dff 368.5px,#cf8aff 395.5px,#ffa5ff 409.5px,#ffe5ff 436.5px,#fff8ff 443.5px,#fff7ff 505.5px,#ffc3ff 520.5px,#ffa6ff 527.5px,#e295ff 531.5px,#c182ff 535.5px,#bf81ff 743.5px,#c182ff 744.5px,#faa2ff 751.5px,#ffa6ff 752.5px,#ffe1ff 767.5px,#fff7ff 774.5px,#fff8ff 836.5px,#ffb6ff 862.5px,#ffa5ff 870.5px,#b079ff 894.5px,#674aff 921.5px,#3627ff 942.5px,#3324f5 943.5px,#2219a6 947.5px,#140e61 950.5px,#0f0a46 951.5px,#080626 952.5px,#000001 953.5px,#000 954.5px)"></i>
<i style="background:linear-gradient(90deg,#000 326.5px,#0e0a41 328.5px,#181276 330.5px,#2a1ecb 334.5px,#3224f2 336.5px,#3626ff 337.5px,#805dff 368.5px,#cf8aff 395.5px,#fea5ff 409.5px,#ffe5ff 436.5px,#fff8ff 443.5px,#fff6ff 505.5px,#ffc7ff 519.5px,#ffa5ff 527.5px,#bf81ff 535.5px,#be80ff 743.5px,#bf81ff 744.5px,#ffa5ff 752.5px,#ffe0ff 767.5px,#fff6ff 774.5px,#fff8ff 836.5px,#ffb2ff 864.5px,#fea5ff 870.5px,#b079ff 894.5px,#694cff 920.5px,#3626ff 942.5px,#3224f2 943.5px,#2218a2 947.5px,#130e5d 950.5px,#0e0a41 951.5px,#000 953.5px)"></i>
<i style="background:linear-gradient(90deg,#000 326.5px,#050419 327.5px,#0d093c 328.5px,#181172 330.5px,#251bb4 333.5px,#3224ef 336.5px,#3526ff 337.5px,#805dff 368.5px,#ce8aff 395.5px,#fea5ff 409.5px,#ffe5ff 436.5px,#fff7ff 443.5px,#fff3ff 506.5px,#ffbaff 522.5px,#fea5ff 527.5px,#be80ff 535.5px,#bc7fff 743.5px,#be80ff 744.5px,#fea5ff 752.5px,#ffdfff 767.5px,#fff5ff 774.5px,#fff5ff 837.5px,#ffb4ff 863.5px,#fea5ff 870.5px,#af78ff 894.5px,#6b4dff 919.5px,#3526ff 942.5px,#2e21dc 944.5px,#1c1489 948.5px,#120d58 950.5px,#0d093c 951.5px,#050419 952.5px,#000 953.5px)"></i>
<i style="background:linear-gradient(90deg,#000 326.5px,#040312 327.5px,#0b0837 328.5px,#17106e 330.5px,#251ab1 333.5px,#3526ff 337.5px,#7f5cff 368.5px,#ce8aff 395.5px,#fea4ff 409.5px,#ffe5ff 436.5px,#fff6ff 443.5px,#fff2ff 506.5px,#ffb9ff 522.5px,#fda4ff 527.5px,#bc80ff 535.5px,#ba7eff 546.5px,#ba7eff 743.5px,#bc80ff 744.5px,#fda4ff 752.5px,#ffe2ff 768.5px,#fff4ff 774.5px,#fff5ff 837.5px,#ffb4ff 863.5px,#fea4ff 870.5px,#af78ff 894.5px,#6b4dff 919.5px,#3526ff 942.5px,#20179c 947.5px,#110d54 950.5px,#0b0837 951.5px,#040312 952.5px,#000 953.5px)"></i>
<i style="background:linear-gradient(90deg,#000 326.5px,#03020c 327.5px,#0a0732 328.5px,#16106a 330.5px,#241aad 333.5px,#3426fc 337.5px,#3929ff 339.5px,#8460ff 370.5px,#d18bff 396.5px,#ffa6ff 410.5px,#ffe7ff 437.5px,#fff5ff 442.5px,#fff2ff 506.5px,#ffb8ff 522.5px,#ffa7ff 526.5px,#fca3ff 527.5px,#bb7fff 535.5px,#b87dff 539.5px,#b87dff 743.5px,#bb7fff 744.5px,#fca3ff 752.5px,#ffacff 754.5px,#ffe8ff 770.5px,#fff3ff 774.5px,#fff5ff 837.5px,#ffb1ff 864.5px,#fda4ff 870.5px,#af78ff 894.5px,#6d4fff 918.5px,#3727ff 941.5px,#3426fc 942.5px,#201798 947.5px,#110c4f 950.5px,#0a0732 951.5px,#03020c 952.5px,#000 953.5px)"></i>
<i style="background:linear-gradient(90deg,#000 326.5px,#010106 327.5px,#09072c 328.5px,#100b4b 329.5px,#1a137e 331.5px,#2c1fd3 335.5px,#3425f9 337.5px,#3627ff 338.5px,#815eff 369.5px,#d18bff 396.5px,#ffa6ff 410.5px,#ffe7ff 437.5px,#fff4ff 442.5px,#fff1ff 506.5px,#ffb7ff 522.5px,#ffa7ff 526.5px,#f39eff 528.5px,#b97eff 535.5px,#b67cff 537.5px,#b67cff 743.5px,#b97eff 744.5px,#faa2ff 752.5px,#ffa7ff 753.5px,#ffe4ff 769.5px,#fff2ff 774.5px,#fff2ff 838.5px,#ffb1ff 864.5px,#fda4ff 870.5px,#ae78ff 894.5px,#6a4dff 919.5px,#3627ff 941.5px,#3425f9 942.5px,#2319aa 946.5px,#150f66 949.5px,#100b4b 950.5px,#09072c 951.5px,#010106 952.5px,#000 953.5px)"></i>
<i style="background:linear-gradient(90deg,#000 326.5px,#000001 327.5px,#080626 328.5px,#0f0a46 329.5px,#19127a 331.5px,#2b1fd0 335.5px,#3325f6 337.5px,#3627ff 338.5px,#815eff 369.5px,#d08bff 396.5px,#ffa6ff 410.5px,#fff3ff 442.5px,#fff0ff 506.5px,#ffb7ff 522.5px,#ffa6ff 526.5px,#c987ff 533.5px,#b87dff 535.5px,#b47bff 537.5px,#b47bff 743.5px,#b87dff 744.5px,#f9a2ff 752.5px,#ffa6ff 753.5px,#ffe3ff 769.5px,#fff1ff 774.5px,#fff2ff 838.5px,#ffb1ff 864.5px,#fda4ff 870.5px,#ae78ff 894.5px,#6a4cff 919.5px,#3627ff 941.5px,#3325f6 942.5px,#2319a7 946.5px,#140f61 949.5px,#0f0a46 950.5px,#080626 951.5px,#000001 952.5px,#000 953.5px)"></i>
<i style="background:linear-gradient(90deg,#000 327.5px,#0e0a42 329.5px,#191276 331.5px,#2a1ecc 335.5px,#3224f3 337.5px,#3627ff 338.5px,#815dff 369.5px,#d08bff 396.5px,#ffa6ff 410.5px,#ffe7ff 437.5px,#fff2ff 442.5px,#ffefff 506.5px,#ffb6ff 522.5px,#ffa5ff 526.5px,#b77dff 535.5px,#b27aff 536.5px,#b27aff 743.5px,#b77dff 744.5px,#ffa5ff 753.5px,#ffe2ff 769.5px,#fff0ff 774.5px,#fff1ff 838.5px,#ffaeff 865.5px,#fda4ff 870.5px,#ae78ff 894.5px,#674aff 920.5px,#3627ff 941.5px,#3224f3 942.5px,#2218a3 946.5px,#130e5d 949.5px,#0e0a42 950.5px,#000 952.5px)"></i>
<i style="background:linear-gradient(90deg,#000 327.5px,#050419 328.5px,#0d093d 329.5px,#181172 331.5px,#261bb5 334.5px,#3224f0 337.5px,#3526ff 338.5px,#805dff 369.5px,#d08bff 396.5px,#ffa5ff 410.5px,#ffe6ff 437.5px,#fff1ff 441.5px,#fef 506.5px,#ffb5ff 522.5px,#fea4ff 526.5px,#b57cff 535.5px,#b179ff 536.5px,#b179ff 743.5px,#b57cff 744.5px,#fea4ff 753.5px,#ffe1ff 769.5px,#fef 773.5px,#fff1ff 838.5px,#faf 867.5px,#fca3ff 870.5px,#ad77ff 894.5px,#664aff 920.5px,#3526ff 941.5px,#3224f0 942.5px,#2118a0 946.5px,#120d59 949.5px,#0d093d 950.5px,#050419 951.5px,#000 952.5px)"></i>
<i style="background:linear-gradient(90deg,#000 327.5px,#040312 328.5px,#0c0838 329.5px,#17106e 331.5px,#251ab2 334.5px,#3526ff 338.5px,#805dff 369.5px,#cf8aff 396.5px,#ffa5ff 410.5px,#ffe6ff 437.5px,#fff0ff 441.5px,#ffedff 506.5px,#ffb4ff 522.5px,#fda4ff 526.5px,#b47bff 535.5px,#af78ff 536.5px,#af78ff 743.5px,#bd80ff 745.5px,#fda4ff 753.5px,#ffb8ff 758.5px,#ffedff 773.5px,#ffefff 839.5px,#ffaeff 865.5px,#ffa5ff 869.5px,#aa76ff 895.5px,#6448ff 921.5px,#3526ff 941.5px,#251ab2 945.5px,#17106e 948.5px,#0c0838 950.5px,#040312 951.5px,#000 952.5px)"></i>
<i style="background:linear-gradient(90deg,#000 327.5px,#03020d 328.5px,#0a0732 329.5px,#16106a 331.5px,#241aae 334.5px,#3526fd 338.5px,#7d5bff 368.5px,#c8f 395.5px,#ffa5ff 410.5px,#ffe6ff 437.5px,#ffefff 441.5px,#ffedff 506.5px,#ffb4ff 522.5px,#ffa7ff 525.5px,#f49fff 527.5px,#b37aff 535.5px,#ad77ff 536.5px,#ad77ff 743.5px,#bb7fff 745.5px,#fba3ff 753.5px,#ffabff 755.5px,#ffe6ff 771.5px,#ffedff 774.5px,#fef 839.5px,#ffacff 866.5px,#ffa5ff 869.5px,#ad77ff 894.5px,#684bff 919.5px,#3526fd 941.5px,#201799 946.5px,#16106a 948.5px,#0a0732 950.5px,#03020d 951.5px,#000 952.5px)"></i>
<i style="background:linear-gradient(90deg,#000 327.5px,#010107 328.5px,#09072d 329.5px,#100b4b 330.5px,#1a137f 332.5px,#2c20d4 336.5px,#3425fa 338.5px,#3727ff 339.5px,#825eff 370.5px,#cf8aff 396.5px,#ffa5ff 410.5px,#ffe6ff 437.5px,#fef 441.5px,#ffecff 506.5px,#ffb7ff 521.5px,#ffa6ff 525.5px,#e395ff 529.5px,#ab76ff 536.5px,#ab76ff 743.5px,#faa2ff 753.5px,#ffa6ff 754.5px,#ffe2ff 770.5px,#ffecff 773.5px,#fef 839.5px,#ffa9ff 867.5px,#ffa5ff 869.5px,#af79ff 893.5px,#6a4dff 918.5px,#3727ff 940.5px,#3425fa 941.5px,#2419ab 945.5px,#150f66 948.5px,#100b4b 949.5px,#09072d 950.5px,#010107 951.5px,#000 952.5px)"></i>
<i style="background:linear-gradient(90deg,#000 327.5px,#000001 328.5px,#080627 329.5px,#0f0b47 330.5px,#19127b 332.5px,#271cbc 335.5px,#3325f7 338.5px,#3627ff 339.5px,#825eff 370.5px,#ce8aff 396.5px,#ffa5ff 410.5px,#ffe6ff 437.5px,#ffedff 441.5px,#ffebff 506.5px,#ffb6ff 521.5px,#ffa6ff 525.5px,#b97eff 534.5px,#a975ff 536.5px,#a975ff 743.5px,#ffa6ff 754.5px,#ffe2ff 770.5px,#ffebff 773.5px,#ffebff 840.5px,#ffabff 866.5px,#ffa5ff 869.5px,#af78ff 893.5px,#6d4fff 917.5px,#3627ff 940.5px,#3325f7 941.5px,#2319a8 945.5px,#140f62 948.5px,#0f0b47 949.5px,#080627 950.5px,#000001 951.5px,#000 952.5px)"></i>
<i style="background:linear-gradient(90deg,#000 328.5px,#0e0a42 330.5px,#191277 332.5px,#261cb9 335.5px,#3324f4 338.5px,#3627ff 339.5px,#815eff 370.5px,#ce8aff 396.5px,#fea5ff 410.5px,#ffe3ff 436.5px,#ffecff 440.5px,#ffeaff 506.5px,#ffb5ff 521.5px,#ffa5ff 525.5px,#a874ff 536.5px,#a874ff 743.5px,#ffa5ff 754.5px,#ffe1ff 770.5px,#ffeaff 773.5px,#ffebff 840.5px,#ffabff 866.5px,#fea5ff 869.5px,#af78ff 893.5px,#6c4eff 917.5px,#3627ff 940.5px,#3324f4 941.5px,#2218a4 945.5px,#130e5e 948.5px,#0e0a42 949.5px,#000 951.5px)"></i>
<i style="background:linear-gradient(90deg,#000 328.5px,#05041a 329.5px,#0d093d 330.5px,#181173 332.5px,#261bb6 335.5px,#3224f1 338.5px,#3626ff 339.5px,#815eff 370.5px,#ce89ff 396.5px,#fea4ff 410.5px,#ffe3ff 436.5px,#ffebff 440.5px,#ffe9ff 506.5px,#ffb5ff 521.5px,#fda4ff 525.5px,#a673ff 536.5px,#a673ff 743.5px,#fda4ff 754.5px,#ffe0ff 770.5px,#ffe9ff 773.5px,#ffeaff 840.5px,#ffa9ff 867.5px,#fea4ff 869.5px,#ae78ff 893.5px,#694cff 918.5px,#3626ff 940.5px,#3224f1 941.5px,#2118a1 945.5px,#130d59 948.5px,#0d093d 949.5px,#05041a 950.5px,#000 951.5px)"></i>
<i style="background:linear-gradient(90deg,#000 328.5px,#040312 329.5px,#0c0838 330.5px,#17116f 332.5px,#251bb3 335.5px,#3223ee 338.5px,#3526ff 339.5px,#815dff 370.5px,#cd89ff 396.5px,#ffa6ff 411.5px,#ffeaff 439.5px,#ffe8ff 506.5px,#ffb8ff 520.5px,#ffa8ff 524.5px,#fca3ff 525.5px,#a573ff 536.5px,#a573ff 743.5px,#fca3ff 754.5px,#ffb0ff 757.5px,#ffe6ff 772.5px,#ffe8ff 784.5px,#ffe8ff 841.5px,#ffa8ff 867.5px,#faa2ff 870.5px,#ab76ff 894.5px,#674aff 919.5px,#3526ff 940.5px,#291ec7 943.5px,#1c1487 946.5px,#120d55 948.5px,#0c0838 949.5px,#040312 950.5px,#000 951.5px)"></i>
<i style="background:linear-gradient(90deg,#000 328.5px,#03020d 329.5px,#0a0832 330.5px,#16106b 332.5px,#241aaf 335.5px,#3526fe 339.5px,#805dff 370.5px,#cd89ff 396.5px,#ffa6ff 411.5px,#ffe9ff 439.5px,#ffe5ff 507.5px,#ffabff 523.5px,#ffa7ff 524.5px,#f39eff 526.5px,#a372ff 536.5px,#a372ff 743.5px,#fba3ff 754.5px,#ffa7ff 755.5px,#ffe2ff 771.5px,#ffe7ff 774.5px,#ffe8ff 841.5px,#ffa8ff 867.5px,#faa2ff 870.5px,#ab76ff 894.5px,#6448ff 920.5px,#3526fe 940.5px,#20179a 945.5px,#16106b 947.5px,#0a0832 949.5px,#03020d 950.5px,#000 951.5px)"></i>
<i style="background:linear-gradient(90deg,#000 328.5px,#010107 329.5px,#09072d 330.5px,#100b4c 331.5px,#1a137f 333.5px,#2c20d5 337.5px,#3425fb 339.5px,#3929ff 341.5px,#8561ff 372.5px,#d38dff 398.5px,#ffa6ff 411.5px,#ffe8ff 439.5px,#ffe4ff 507.5px,#faf 523.5px,#ffa6ff 524.5px,#cb88ff 531.5px,#a271ff 536.5px,#a271ff 743.5px,#f9a2ff 754.5px,#ffa6ff 755.5px,#ffe1ff 771.5px,#ffe6ff 774.5px,#ffe7ff 841.5px,#ffa6ff 868.5px,#a271ff 897.5px,#523bff 927.5px,#3727ff 939.5px,#3425fb 940.5px,#241aac 944.5px,#150f67 947.5px,#100b4c 948.5px,#09072d 949.5px,#010107 950.5px,#000 951.5px)"></i>
<i style="background:linear-gradient(90deg,#000 328.5px,#000001 329.5px,#080627 330.5px,#0f0b47 331.5px,#1a127b 333.5px,#271cbd 336.5px,#3425f8 339.5px,#3627ff 340.5px,#825fff 371.5px,#d08bff 397.5px,#ffa6ff 411.5px,#ffe7ff 438.5px,#ffe4ff 507.5px,#ffa9ff 523.5px,#ffa5ff 524.5px,#b179ff 534.5px,#a070ff 536.5px,#9f6fff 742.5px,#a070ff 743.5px,#f8a1ff 754.5px,#ffa5ff 755.5px,#ffe0ff 771.5px,#ffe5ff 774.5px,#ffe7ff 841.5px,#ffa6ff 868.5px,#a472ff 896.5px,#573fff 925.5px,#3627ff 939.5px,#3425f8 940.5px,#2319a8 944.5px,#140f62 947.5px,#0f0b47 948.5px,#080627 949.5px,#000001 950.5px,#000 951.5px)"></i>
<i style="background:linear-gradient(90deg,#000 329.5px,#0e0a42 331.5px,#191277 333.5px,#271cba 336.5px,#3325f5 339.5px,#3627ff 340.5px,#825eff 371.5px,#cf8aff 397.5px,#ffa6ff 411.5px,#ffe6ff 438.5px,#ffe3ff 507.5px,#ffa9ff 523.5px,#fea4ff 524.5px,#af79ff 534.5px,#9e6fff 536.5px,#9d6eff 742.5px,#9e6fff 743.5px,#f7a0ff 754.5px,#fea4ff 755.5px,#ffe0ff 771.5px,#ffe4ff 774.5px,#ffe4ff 842.5px,#ffa6ff 868.5px,#a774ff 895.5px,#6347ff 920.5px,#3627ff 939.5px,#3325f5 940.5px,#2219a5 944.5px,#140e5e 947.5px,#0e0a42 948.5px,#000 950.5px)"></i>
<i style="background:linear-gradient(90deg,#000 329.5px,#05041a 330.5px,#0d093d 331.5px,#181174 333.5px,#261bb7 336.5px,#3224f2 339.5px,#3627ff 340.5px,#825eff 371.5px,#cf8aff 397.5px,#ffa5ff 411.5px,#ffe5ff 438.5px,#ffe2ff 507.5px,#ffa8ff 523.5px,#fda4ff 524.5px,#ae78ff 534.5px,#9d6eff 536.5px,#9b6dff 742.5px,#9d6eff 743.5px,#ee9cff 753.5px,#fda4ff 755.5px,#ffceff 766.5px,#ffe3ff 773.5px,#ffe4ff 842.5px,#ffa5ff 868.5px,#a975ff 894.5px,#6a4dff 917.5px,#3627ff 939.5px,#3224f2 940.5px,#2218a1 944.5px,#130d5a 947.5px,#0d093d 948.5px,#05041a 949.5px,#000 950.5px)"></i>
<i style="background:linear-gradient(90deg,#000 329.5px,#040312 330.5px,#0c0838 331.5px,#171170 333.5px,#251bb3 336.5px,#3224ef 339.5px,#3526ff 340.5px,#815eff 371.5px,#cf8aff 397.5px,#ffa5ff 411.5px,#ffe4ff 437.5px,#ffe1ff 507.5px,#ffa7ff 523.5px,#f49fff 525.5px,#a472ff 535.5px,#9b6dff 536.5px,#996cff 546.5px,#996cff 742.5px,#9b6dff 743.5px,#ed9bff 753.5px,#fca3ff 755.5px,#ffabff 757.5px,#ffe1ff 772.5px,#ffe4ff 842.5px,#ffa5ff 868.5px,#ac77ff 893.5px,#6a4cff 917.5px,#3526ff 939.5px,#2e21dc 941.5px,#1c1487 945.5px,#120d55 947.5px,#0c0838 948.5px,#040312 949.5px,#000 950.5px)"></i>
<i style="background:linear-gradient(90deg,#000 329.5px,#03020d 330.5px,#0b0833 331.5px,#16106b 333.5px,#251ab0 336.5px,#3526ff 340.5px,#815eff 371.5px,#ce8aff 397.5px,#ffa5ff 411.5px,#ffe3ff 437.5px,#ffe0ff 507.5px,#ffa6ff 523.5px,#e496ff 527.5px,#9a6dff 536.5px,#976bff 540.5px,#976bff 742.5px,#9a6dff 743.5px,#ec9aff 753.5px,#ffa6ff 756.5px,#ffe0ff 772.5px,#ffe1ff 843.5px,#ffa5ff 868.5px,#af78ff 892.5px,#694cff 917.5px,#3526ff 939.5px,#251ab0 943.5px,#16106b 946.5px,#0b0833 948.5px,#03020d 949.5px,#000 950.5px)"></i>
<i style="background:linear-gradient(90deg,#000 329.5px,#010107 330.5px,#09072d 331.5px,#100b4c 332.5px,#1b1380 334.5px,#2c20d6 338.5px,#3426fd 340.5px,#402eff 345.5px,#8c65ff 375.5px,#db91ff 401.5px,#ffa5ff 411.5px,#ffe2ff 437.5px,#ffe0ff 507.5px,#ffa6ff 523.5px,#bb7fff 532.5px,#996cff 536.5px,#966aff 538.5px,#966aff 742.5px,#996cff 743.5px,#ea99ff 753.5px,#ffa6ff 756.5px,#ffe0ff 772.5px,#ffe1ff 843.5px,#ffa5ff 868.5px,#ae78ff 892.5px,#694cff 917.5px,#3727ff 938.5px,#3426fd 939.5px,#241aad 943.5px,#150f67 946.5px,#100b4c 947.5px,#09072d 948.5px,#010107 949.5px,#000 950.5px)"></i>
<i style="background:linear-gradient(90deg,#000 329.5px,#000001 330.5px,#080627 331.5px,#0f0b48 332.5px,#1a127c 334.5px,#2c1fd3 338.5px,#3425fa 340.5px,#3727ff 341.5px,#835fff 372.5px,#d18bff 398.5px,#fea5ff 411.5px,#ffe1ff 437.5px,#ffdfff 507.5px,#ffa5ff 523.5px,#b27aff 533.5px,#986bff 536.5px,#9469ff 538.5px,#9469ff 742.5px,#986bff 743.5px,#e999ff 753.5px,#ffa5ff 756.5px,#ffdfff 772.5px,#ffe1ff 843.5px,#fea5ff 868.5px,#ae78ff 892.5px,#664aff 918.5px,#3727ff 938.5px,#3425fa 939.5px,#2319a9 943.5px,#150f63 946.5px,#0f0b48 947.5px,#080627 948.5px,#000001 949.5px,#000 950.5px)"></i>
<i style="background:linear-gradient(90deg,#000 330.5px,#0e0a43 332.5px,#191278 334.5px,#271cbb 337.5px,#3325f7 340.5px,#3627ff 341.5px,#835fff 372.5px,#d18bff 398.5px,#fea4ff 411.5px,#ffe0ff 436.5px,#ffdeff 507.5px,#ffa8ff 522.5px,#fea4ff 523.5px,#b079ff 533.5px,#966bff 536.5px,#9268ff 537.5px,#9268ff 742.5px,#966bff 743.5px,#e898ff 753.5px,#fea4ff 756.5px,#ffdbff 771.5px,#ffdeff 775.5px,#ffe0ff 843.5px,#fea4ff 868.5px,#ae78ff 892.5px,#684bff 917.5px,#3627ff 938.5px,#3325f7 939.5px,#2219a6 943.5px,#140e5f 946.5px,#0e0a43 947.5px,#000 949.5px)"></i>
<i style="background:linear-gradient(90deg,#000 330.5px,#05041a 331.5px,#0d093e 332.5px,#181174 334.5px,#261bb8 337.5px,#3324f4 340.5px,#3627ff 341.5px,#825fff 372.5px,#d08bff 398.5px,#ffa6ff 412.5px,#ffdfff 436.5px,#fdf 507.5px,#ffa8ff 522.5px,#fca3ff 523.5px,#af78ff 533.5px,#956aff 536.5px,#9067ff 537.5px,#9067ff 742.5px,#956aff 743.5px,#e797ff 753.5px,#fca3ff 756.5px,#ffb0ff 759.5px,#fdf 772.5px,#ffdeff 844.5px,#fea4ff 868.5px,#ad77ff 892.5px,#684bff 917.5px,#3627ff 938.5px,#3324f4 939.5px,#2218a2 943.5px,#130d5b 946.5px,#0d093e 947.5px,#05041a 948.5px,#000 949.5px)"></i>
<i style="background:linear-gradient(90deg,#000 330.5px,#040313 331.5px,#0c0839 332.5px,#171170 334.5px,#251bb4 337.5px,#3224f1 340.5px,#3626ff 341.5px,#825eff 372.5px,#d08bff 398.5px,#ffa6ff 412.5px,#ffdeff 436.5px,#ffdcff 507.5px,#ffa7ff 522.5px,#f49fff 524.5px,#a573ff 534.5px,#9469ff 536.5px,#8f66ff 537.5px,#8f66ff 742.5px,#9d6eff 744.5px,#ed9bff 754.5px,#fba3ff 756.5px,#ffabff 758.5px,#ffdcff 772.5px,#fdf 844.5px,#fda4ff 868.5px,#ad77ff 892.5px,#6a4dff 916.5px,#3626ff 938.5px,#3224f1 939.5px,#21189f 943.5px,#171170 945.5px,#0c0839 947.5px,#040313 948.5px,#000 949.5px)"></i>
<i style="background:linear-gradient(90deg,#000 330.5px,#03020d 331.5px,#0b0833 332.5px,#16106c 334.5px,#251ab1 337.5px,#3123ee 340.5px,#3526ff 341.5px,#825eff 372.5px,#d08bff 398.5px,#ffa6ff 412.5px,#fdf 435.5px,#ffdbff 507.5px,#ffa6ff 522.5px,#cd89ff 529.5px,#9268ff 536.5px,#8d65ff 537.5px,#8d65ff 742.5px,#9b6dff 744.5px,#eb9aff 754.5px,#ffa6ff 757.5px,#ffdbff 772.5px,#fdf 844.5px,#fda4ff 868.5px,#ad77ff 892.5px,#6c4fff 915.5px,#3526ff 938.5px,#291dc6 941.5px,#1c1484 944.5px,#110c51 946.5px,#0b0833 947.5px,#03020d 948.5px,#000 949.5px)"></i>
<i style="background:linear-gradient(90deg,#000 330.5px,#010107 331.5px,#09072d 332.5px,#100b4d 333.5px,#1b1381 335.5px,#2d20d7 339.5px,#3526fe 341.5px,#815eff 372.5px,#cf8aff 398.5px,#ffa6ff 412.5px,#ffdcff 435.5px,#ffdaff 507.5px,#ffa9ff 521.5px,#ffa5ff 522.5px,#b47bff 532.5px,#8b64ff 537.5px,#8b64ff 742.5px,#f19dff 755.5px,#ffa5ff 757.5px,#ffd8ff 771.5px,#ffdbff 781.5px,#ffdaff 845.5px,#ffa6ff 867.5px,#a372ff 895.5px,#553eff 924.5px,#3526fe 938.5px,#241aae 942.5px,#160f68 945.5px,#100b4d 946.5px,#09072d 947.5px,#010107 948.5px,#000 949.5px)"></i>
<i style="background:linear-gradient(90deg,#000 330.5px,#000001 331.5px,#080628 332.5px,#0f0b48 333.5px,#1a137d 335.5px,#2c20d4 339.5px,#3425fb 341.5px,#3727ff 342.5px,#815eff 372.5px,#cf8aff 398.5px,#ffa6ff 412.5px,#ffdbff 435.5px,#ffd7ff 508.5px,#fea5ff 522.5px,#b27aff 532.5px,#8963ff 537.5px,#8963ff 742.5px,#f09dff 755.5px,#fea5ff 757.5px,#ffd7ff 771.5px,#ffdaff 845.5px,#ffa6ff 867.5px,#a673ff 894.5px,#6147ff 919.5px,#3727ff 937.5px,#3425fb 938.5px,#2319aa 942.5px,#150f64 945.5px,#0f0b48 946.5px,#080628 947.5px,#000001 948.5px,#000 949.5px)"></i>
<i style="background:linear-gradient(90deg,#000 331.5px,#0e0a43 333.5px,#191279 335.5px,#271cbc 338.5px,#3425f8 341.5px,#3627ff 342.5px,#815dff 372.5px,#cf8aff 398.5px,#ffa5ff 412.5px,#ffdaff 435.5px,#ffd7ff 508.5px,#fda4ff 522.5px,#b17aff 532.5px,#8862ff 537.5px,#8862ff 742.5px,#e898ff 754.5px,#fda4ff 757.5px,#ffd7ff 771.5px,#ffdaff 845.5px,#ffa5ff 867.5px,#a975ff 893.5px,#6448ff 918.5px,#3627ff 937.5px,#3425f8 938.5px,#2319a7 942.5px,#140e5f 945.5px,#0e0a43 946.5px,#000 948.5px)"></i>
<i style="background:linear-gradient(90deg,#000 331.5px,#05041a 332.5px,#0d093e 333.5px,#181175 335.5px,#261cb9 338.5px,#3324f5 341.5px,#3627ff 342.5px,#805dff 372.5px,#ce8aff 398.5px,#ffa5ff 412.5px,#ffd9ff 434.5px,#ffd6ff 508.5px,#ffa7ff 521.5px,#f59fff 523.5px,#a874ff 533.5px,#8d66ff 536.5px,#8862ff 537.5px,#8862ff 742.5px,#9f6fff 745.5px,#ee9bff 755.5px,#fca3ff 757.5px,#ffabff 759.5px,#ffd6ff 771.5px,#ffd9ff 845.5px,#ffa5ff 867.5px,#ab76ff 892.5px,#664aff 917.5px,#3627ff 937.5px,#3324f5 938.5px,#2218a3 942.5px,#130e5b 945.5px,#0d093e 946.5px,#05041a 947.5px,#000 948.5px)"></i>
<i style="background:linear-gradient(90deg,#000 331.5px,#040313 332.5px,#0c0839 333.5px,#171171 335.5px,#261bb5 338.5px,#3224f2 341.5px,#3627ff 342.5px,#805dff 372.5px,#ce8aff 398.5px,#ffa5ff 412.5px,#ffd8ff 434.5px,#ffd5ff 508.5px,#ffa6ff 521.5px,#ec9bff 524.5px,#9e6fff 534.5px,#8c65ff 536.5px,#8862ff 537.5px,#8862ff 742.5px,#8c65ff 743.5px,#de92ff 753.5px,#fba3ff 757.5px,#ffa6ff 758.5px,#ffd5ff 771.5px,#ffd7ff 846.5px,#ffa5ff 867.5px,#ae78ff 891.5px,#684bff 916.5px,#3627ff 937.5px,#3224f2 938.5px,#2118a0 942.5px,#120d56 945.5px,#0c0839 946.5px,#040313 947.5px,#000 948.5px)"></i>
<i style="background:linear-gradient(90deg,#000 331.5px,#03020d 332.5px,#0b0833 333.5px,#17106d 335.5px,#251bb2 338.5px,#3224ef 341.5px,#3526ff 342.5px,#805dff 372.5px,#ce89ff 398.5px,#ffa5ff 412.5px,#ffd7ff 434.5px,#ffd5ff 508.5px,#ffa6ff 521.5px,#be81ff 530.5px,#8b64ff 536.5px,#8862ff 538.5px,#8862ff 742.5px,#8b64ff 743.5px,#dd92ff 753.5px,#ffa6ff 758.5px,#ffd5ff 771.5px,#ffd7ff 846.5px,#ffa5ff 867.5px,#ae78ff 891.5px,#6a4dff 915.5px,#3526ff 937.5px,#2e21db 939.5px,#1c1485 943.5px,#110c52 945.5px,#0b0833 946.5px,#03020d 947.5px,#000 948.5px)"></i>
<i style="background:linear-gradient(90deg,#000 331.5px,#020107 332.5px,#0a072e 333.5px,#100b4d 334.5px,#1b1381 336.5px,#2d20d8 340.5px,#3526ff 342.5px,#7f5cff 372.5px,#cd89ff 398.5px,#fea5ff 412.5px,#ffd6ff 433.5px,#ffd4ff 508.5px,#ffa5ff 521.5px,#ac77ff 532.5px,#8a64ff 536.5px,#8862ff 573.5px,#8862ff 742.5px,#8a64ff 743.5px,#db91ff 753.5px,#ffa5ff 758.5px,#ffd4ff 771.5px,#ffd6ff 846.5px,#fea5ff 867.5px,#ad77ff 891.5px,#6a4dff 915.5px,#3526ff 937.5px,#241aae 941.5px,#161068 944.5px,#100b4d 945.5px,#0a072e 946.5px,#020107 947.5px,#000 948.5px)"></i>
<i style="background:linear-gradient(90deg,#000 331.5px,#000001 332.5px,#080628 333.5px,#0f0b48 334.5px,#1a137d 336.5px,#2c20d5 340.5px,#3426fc 342.5px,#3b2bff 345.5px,#8762ff 375.5px,#d78fff 401.5px,#fea4ff 412.5px,#ffd6ff 433.5px,#ffd3ff 508.5px,#fea4ff 521.5px,#ab76ff 532.5px,#8963ff 536.5px,#8963ff 743.5px,#e195ff 754.5px,#fea4ff 758.5px,#ffd3ff 771.5px,#ffd4ff 847.5px,#fea4ff 867.5px,#ad77ff 891.5px,#6c4eff 914.5px,#3727ff 936.5px,#3426fc 937.5px,#2419ab 941.5px,#150f64 944.5px,#0f0b48 945.5px,#080628 946.5px,#000001 947.5px,#000 948.5px)"></i>
<i style="background:linear-gradient(90deg,#000 332.5px,#0e0a44 334.5px,#191279 336.5px,#271cbd 339.5px,#3425f9 342.5px,#3727ff 343.5px,#815eff 373.5px,#d08bff 399.5px,#fea4ff 412.5px,#ffd5ff 433.5px,#ffd2ff 508.5px,#ffa8ff 520.5px,#fda4ff 521.5px,#aa75ff 532.5px,#8963ff 536.5px,#8963ff 743.5px,#e898ff 755.5px,#fda4ff 758.5px,#ffb7ff 763.5px,#ffd2ff 771.5px,#ffd4ff 847.5px,#fea4ff 867.5px,#ad77ff 891.5px,#6c4eff 914.5px,#3727ff 936.5px,#3425f9 937.5px,#2319a8 941.5px,#140e60 944.5px,#0e0a44 945.5px,#000 947.5px)"></i>
<i style="background:linear-gradient(90deg,#000 332.5px,#06041b 333.5px,#0d093e 334.5px,#181175 336.5px,#271cba 339.5px,#3325f6 342.5px,#3627ff 343.5px,#815eff 373.5px,#d08bff 399.5px,#ffa6ff 413.5px,#ffd4ff 433.5px,#ffd1ff 508.5px,#ffa7ff 520.5px,#f49fff 522.5px,#a875ff 532.5px,#8863ff 536.5px,#8863ff 743.5px,#ed9bff 756.5px,#fba3ff 758.5px,#ffabff 760.5px,#ffd1ff 771.5px,#ffd3ff 847.5px,#fda4ff 867.5px,#ac77ff 891.5px,#694cff 915.5px,#3627ff 936.5px,#3325f6 937.5px,#2218a4 941.5px,#130e5c 944.5px,#0d093e 945.5px,#06041b 946.5px,#000 947.5px)"></i>
<i style="background:linear-gradient(90deg,#000 332.5px,#040313 333.5px,#0c0939 334.5px,#181171 336.5px,#261bb6 339.5px,#3324f3 342.5px,#3627ff 343.5px,#815dff 373.5px,#cf8aff 399.5px,#ffa6ff 413.5px,#ffd3ff 432.5px,#ffd1ff 508.5px,#ffa6ff 520.5px,#d68eff 526.5px,#8e66ff 535.5px,#8863ff 536.5px,#8863ff 743.5px,#966bff 745.5px,#e597ff 755.5px,#ffa6ff 759.5px,#ffd1ff 771.5px,#ffd1ff 848.5px,#fda4ff 867.5px,#ac77ff 891.5px,#694cff 915.5px,#3627ff 936.5px,#3324f3 937.5px,#2118a0 941.5px,#120d57 944.5px,#0c0939 945.5px,#040313 946.5px,#000 947.5px)"></i>
<i style="background:linear-gradient(90deg,#000 332.5px,#03020e 333.5px,#0b0834 334.5px,#17106d 336.5px,#251bb3 339.5px,#3224f0 342.5px,#3626ff 343.5px,#805dff 373.5px,#cf8aff 399.5px,#ffa6ff 413.5px,#ffd2ff 432.5px,#ffd0ff 508.5px,#ffa5ff 520.5px,#b67cff 530.5px,#8c65ff 535.5px,#8863ff 536.5px,#8863ff 743.5px,#8c65ff 744.5px,#dd92ff 754.5px,#ffa5ff 759.5px,#ffd0ff 771.5px,#ffd1ff 848.5px,#ffa6ff 866.5px,#a371ff 894.5px,#543dff 923.5px,#3626ff 936.5px,#3224f0 937.5px,#21179d 941.5px,#17106d 943.5px,#0b0834 945.5px,#03020e 946.5px,#000 947.5px)"></i>
<i style="background:linear-gradient(90deg,#000 332.5px,#020107 333.5px,#0a072e 334.5px,#100c4e 335.5px,#1b1382 337.5px,#2d20d9 341.5px,#3526ff 343.5px,#805dff 373.5px,#cf8aff 399.5px,#ffa6ff 413.5px,#ffd1ff 432.5px,#ffcfff 508.5px,#ffa5ff 520.5px,#ad77ff 531.5px,#8b64ff 535.5px,#8863ff 537.5px,#8863ff 743.5px,#8b64ff 744.5px,#db91ff 754.5px,#ffa5ff 759.5px,#ffcfff 771.5px,#ffd0ff 848.5px,#ffa6ff 866.5px,#a573ff 893.5px,#563eff 922.5px,#3526ff 936.5px,#241aaf 940.5px,#161069 943.5px,#100c4e 944.5px,#0a072e 945.5px,#020107 946.5px,#000 947.5px)"></i>
<i style="background:linear-gradient(90deg,#000 332.5px,#000001 333.5px,#080628 334.5px,#0f0b49 335.5px,#1a137e 337.5px,#2c20d6 341.5px,#3526fd 343.5px,#825fff 374.5px,#d28cff 400.5px,#ffa5ff 413.5px,#ffd0ff 431.5px,#ffceff 508.5px,#fda4ff 520.5px,#ac77ff 531.5px,#8a64ff 535.5px,#8863ff 743.5px,#8a64ff 744.5px,#da90ff 754.5px,#fda4ff 759.5px,#ffceff 771.5px,#ffd0ff 848.5px,#ffa5ff 866.5px,#a874ff 892.5px,#6247ff 917.5px,#3526fd 936.5px,#241aac 940.5px,#150f65 943.5px,#0f0b49 944.5px,#080628 945.5px,#000001 946.5px,#000 947.5px)"></i>
<i style="background:linear-gradient(90deg,#000 333.5px,#0e0a44 335.5px,#19127a 337.5px,#271cbe 340.5px,#3425fa 343.5px,#3727ff 344.5px,#825eff 374.5px,#d18bff 400.5px,#ffa5ff 413.5px,#ffcfff 431.5px,#ffcdff 508.5px,#ffa7ff 519.5px,#f5a0ff 521.5px,#a271ff 532.5px,#8a64ff 535.5px,#8a64ff 744.5px,#e094ff 755.5px,#fca3ff 759.5px,#ffafff 762.5px,#ffcdff 771.5px,#ffcdff 849.5px,#ffa5ff 866.5px,#ab76ff 891.5px,#674bff 915.5px,#3727ff 935.5px,#3425fa 936.5px,#2319a8 940.5px,#140e60 943.5px,#0e0a44 944.5px,#000 946.5px)"></i>
<i style="background:linear-gradient(90deg,#000 333.5px,#06041b 334.5px,#0d093f 335.5px,#191276 337.5px,#271cbb 340.5px,#3325f7 343.5px,#3627ff 344.5px,#825eff 374.5px,#d18bff 400.5px,#ffa5ff 413.5px,#ffceff 431.5px,#fcf 508.5px,#ffa7ff 519.5px,#ed9bff 522.5px,#a171ff 532.5px,#8963ff 535.5px,#8963ff 744.5px,#e697ff 756.5px,#fba3ff 759.5px,#ffa7ff 760.5px,#fcf 771.5px,#ffcdff 849.5px,#ffa5ff 866.5px,#ae77ff 890.5px,#6c4eff 913.5px,#3627ff 935.5px,#3325f7 936.5px,#2219a5 940.5px,#130e5c 943.5px,#0d093f 944.5px,#06041b 945.5px,#000 946.5px)"></i>
<i style="background:linear-gradient(90deg,#000 333.5px,#040313 334.5px,#0c093a 335.5px,#181172 337.5px,#261bb7 340.5px,#3324f4 343.5px,#3627ff 344.5px,#815eff 374.5px,#d18bff 400.5px,#ffa5ff 413.5px,#ffcdff 431.5px,#ffcaff 509.5px,#ffa6ff 519.5px,#c886ff 527.5px,#8963ff 535.5px,#8963ff 744.5px,#ec9aff 757.5px,#ffa6ff 760.5px,#ffcbff 771.5px,#ffcdff 849.5px,#ffa5ff 866.5px,#ad77ff 890.5px,#6c4eff 913.5px,#3627ff 935.5px,#3324f4 936.5px,#2218a1 940.5px,#120d57 943.5px,#0c093a 944.5px,#040313 945.5px,#000 946.5px)"></i>
<i style="background:linear-gradient(90deg,#000 333.5px,#03020e 334.5px,#0b0834 335.5px,#17106e 337.5px,#251bb4 340.5px,#3224f1 343.5px,#3626ff 344.5px,#815eff 374.5px,#d08bff 400.5px,#ffa5ff 413.5px,#fcf 430.5px,#ffc9ff 509.5px,#ffa5ff 519.5px,#af78ff 530.5px,#8e66ff 534.5px,#8963ff 535.5px,#8963ff 744.5px,#966bff 746.5px,#e496ff 756.5px,#ffa5ff 760.5px,#ffcaff 771.5px,#ffcaff 850.5px,#ffa5ff 866.5px,#ad77ff 890.5px,#6b4eff 913.5px,#3626ff 935.5px,#3224f1 936.5px,#21189e 940.5px,#17106e 942.5px,#0b0834 944.5px,#03020e 945.5px,#000 946.5px)"></i>
<i style="background:linear-gradient(90deg,#000 333.5px,#020108 334.5px,#0a072e 335.5px,#100c4e 336.5px,#1b1383 338.5px,#2d21da 342.5px,#3526ff 344.5px,#815dff 374.5px,#d08bff 400.5px,#fea5ff 413.5px,#ffcbff 430.5px,#ffc8ff 509.5px,#fea4ff 519.5px,#ae78ff 530.5px,#8d65ff 534.5px,#8963ff 535.5px,#8963ff 744.5px,#8d65ff 745.5px,#db91ff 755.5px,#fea4ff 760.5px,#ffc8ff 770.5px,#ffcaff 850.5px,#fea5ff 866.5px,#ac77ff 890.5px,#684cff 914.5px,#3526ff 935.5px,#2d21da 937.5px,#1b1383 941.5px,#100c4e 943.5px,#0a072e 944.5px,#020108 945.5px,#000 946.5px)"></i>
<i style="background:linear-gradient(90deg,#000 333.5px,#000001 334.5px,#080629 335.5px,#0f0b49 336.5px,#1a137f 338.5px,#2d20d7 342.5px,#3526ff 344.5px,#805dff 374.5px,#d08bff 400.5px,#fea4ff 413.5px,#ffcaff 430.5px,#ffc7ff 509.5px,#fda4ff 519.5px,#ad77ff 530.5px,#8c65ff 534.5px,#8963ff 537.5px,#8963ff 744.5px,#8c65ff 745.5px,#da91ff 755.5px,#fda4ff 760.5px,#ffc7ff 770.5px,#ffcaff 850.5px,#fea4ff 866.5px,#ac77ff 890.5px,#684bff 914.5px,#3526ff 935.5px,#241aad 939.5px,#150f65 942.5px,#0f0b49 943.5px,#080629 944.5px,#000001 945.5px,#000 946.5px)"></i>
<i style="background:linear-gradient(90deg,#000 334.5px,#0e0a45 336.5px,#1a127b 338.5px,#281cbf 341.5px,#3426fc 344.5px,#3929ff 346.5px,#8661ff 376.5px,#d38cff 401.5px,#ffa6ff 414.5px,#ffc9ff 429.5px,#ffc7ff 509.5px,#ffa7ff 518.5px,#f59fff 520.5px,#a472ff 531.5px,#8b64ff 534.5px,#8963ff 744.5px,#8b64ff 745.5px,#e094ff 756.5px,#fca3ff 760.5px,#ffabff 762.5px,#ffc7ff 770.5px,#ffc9ff 850.5px,#fea4ff 866.5px,#ac77ff 890.5px,#6549ff 915.5px,#3727ff 934.5px,#3426fc 935.5px,#2319a9 939.5px,#140e61 942.5px,#0e0a45 943.5px,#000 945.5px)"></i>
<i style="background:linear-gradient(90deg,#000 334.5px,#06041b 335.5px,#0d093f 336.5px,#191277 338.5px,#271cbc 341.5px,#3425f9 344.5px,#3727ff 345.5px,#825fff 375.5px,#d28cff 401.5px,#ffa6ff 414.5px,#ffc9ff 429.5px,#ffc6ff 509.5px,#ffa6ff 518.5px,#d88fff 524.5px,#8a64ff 534.5px,#8a64ff 745.5px,#df93ff 756.5px,#ffa6ff 761.5px,#ffc6ff 770.5px,#ffc7ff 851.5px,#fda4ff 866.5px,#ab76ff 890.5px,#674bff 914.5px,#3727ff 934.5px,#3425f9 935.5px,#2219a6 939.5px,#130e5d 942.5px,#0d093f 943.5px,#06041b 944.5px,#000 945.5px)"></i>
<i style="background:linear-gradient(90deg,#000 334.5px,#040313 335.5px,#0c093a 336.5px,#181173 338.5px,#261bb8 341.5px,#3325f6 344.5px,#3627ff 345.5px,#825eff 375.5px,#d28cff 401.5px,#ffa6ff 414.5px,#ffc8ff 429.5px,#ffc5ff 509.5px,#ffa6ff 518.5px,#b97eff 528.5px,#8a63ff 534.5px,#8a63ff 745.5px,#e596ff 757.5px,#ffa6ff 761.5px,#ffc5ff 770.5px,#ffc7ff 851.5px,#ffa6ff 865.5px,#a271ff 893.5px,#533cff 922.5px,#3627ff 934.5px,#3325f6 935.5px,#2218a2 939.5px,#120d58 942.5px,#0c093a 943.5px,#040313 944.5px,#000 945.5px)"></i>
<i style="background:linear-gradient(90deg,#000 334.5px,#03020e 335.5px,#0b0835 336.5px,#17106f 338.5px,#261bb5 341.5px,#3224f2 344.5px,#3627ff 345.5px,#825eff 375.5px,#d28cff 401.5px,#ffa6ff 414.5px,#ffc7ff 429.5px,#ffc4ff 509.5px,#ffa5ff 518.5px,#b079ff 529.5px,#8963ff 534.5px,#8963ff 745.5px,#eb9aff 758.5px,#ffa5ff 761.5px,#ffc4ff 770.5px,#ffc6ff 851.5px,#ffa6ff 865.5px,#a573ff 892.5px,#5f45ff 917.5px,#3627ff 934.5px,#3224f2 935.5px,#21189f 939.5px,#17106f 941.5px,#0b0835 943.5px,#03020e 944.5px,#000 945.5px)"></i>
<i style="background:linear-gradient(90deg,#000 334.5px,#020108 335.5px,#0a072f 336.5px,#100c4e 337.5px,#1b1483 339.5px,#2e21db 343.5px,#3224ef 344.5px,#3526ff 345.5px,#815eff 375.5px,#d18bff 401.5px,#ffa6ff 414.5px,#ffc6ff 428.5px,#ffc4ff 509.5px,#fea4ff 518.5px,#af78ff 529.5px,#8e66ff 533.5px,#8963ff 534.5px,#8963ff 745.5px,#976bff 747.5px,#ea99ff 758.5px,#fea4ff 761.5px,#ffc4ff 770.5px,#ffc4ff 852.5px,#ffa6ff 865.5px,#a774ff 891.5px,#694cff 913.5px,#3526ff 934.5px,#3224ef 935.5px,#20179b 939.5px,#16106a 941.5px,#100c4e 942.5px,#0a072f 943.5px,#020108 944.5px,#000 945.5px)"></i>
<i style="background:linear-gradient(90deg,#000 334.5px,#000002 335.5px,#080629 336.5px,#0f0b4a 337.5px,#1a137f 339.5px,#2d20d8 343.5px,#3526ff 345.5px,#815eff 375.5px,#d18bff 401.5px,#ffa5ff 414.5px,#ffc5ff 428.5px,#ffc3ff 509.5px,#ffa7ff 517.5px,#f6a0ff 519.5px,#a673ff 530.5px,#8d65ff 533.5px,#8963ff 535.5px,#8963ff 745.5px,#8d65ff 746.5px,#da91ff 756.5px,#fca4ff 761.5px,#ffb2ff 765.5px,#ffc3ff 770.5px,#ffc4ff 852.5px,#ffa5ff 865.5px,#aa76ff 890.5px,#694cff 913.5px,#3526ff 934.5px,#241aae 938.5px,#150f66 941.5px,#0f0b4a 942.5px,#080629 943.5px,#000002 944.5px,#000 945.5px)"></i>
<i style="background:linear-gradient(90deg,#000 335.5px,#0e0a45 337.5px,#1a127b 339.5px,#281dc0 342.5px,#3526fd 345.5px,#835fff 376.5px,#d18bff 401.5px,#ffa5ff 414.5px,#ffc4ff 428.5px,#ffc2ff 509.5px,#ffa7ff 517.5px,#ee9cff 520.5px,#9c6eff 531.5px,#8c65ff 533.5px,#8963ff 536.5px,#8963ff 745.5px,#8c65ff 746.5px,#d990ff 756.5px,#fba3ff 761.5px,#faf 763.5px,#ffc2ff 770.5px,#ffc3ff 852.5px,#ffa5ff 865.5px,#ad77ff 889.5px,#6b4dff 912.5px,#3526fd 934.5px,#2319aa 938.5px,#140f61 941.5px,#0e0a45 942.5px,#000 944.5px)"></i>
<i style="background:linear-gradient(90deg,#000 335.5px,#06041b 336.5px,#0d0940 337.5px,#191277 339.5px,#271cbd 342.5px,#3425fa 345.5px,#3727ff 346.5px,#835fff 376.5px,#d08bff 401.5px,#ffa5ff 414.5px,#ffc3ff 427.5px,#ffc1ff 509.5px,#ffa6ff 517.5px,#ca87ff 525.5px,#8b64ff 533.5px,#8963ff 745.5px,#8b64ff 746.5px,#df93ff 757.5px,#ffa6ff 762.5px,#ffc1ff 770.5px,#ffc3ff 852.5px,#ffa5ff 865.5px,#b079ff 888.5px,#6b4dff 912.5px,#3727ff 933.5px,#3425fa 934.5px,#2319a7 938.5px,#130e5d 941.5px,#0d0940 942.5px,#06041b 943.5px,#000 944.5px)"></i>
<i style="background:linear-gradient(90deg,#000 335.5px,#040314 336.5px,#0c093a 337.5px,#181173 339.5px,#261cb9 342.5px,#3325f7 345.5px,#3627ff 346.5px,#835fff 376.5px,#d08bff 401.5px,#ffa5ff 414.5px,#ffc2ff 427.5px,#ffc0ff 509.5px,#ffa5ff 517.5px,#b27aff 528.5px,#8a64ff 533.5px,#8a64ff 746.5px,#e596ff 758.5px,#ffa5ff 762.5px,#ffc0ff 770.5px,#ffc1ff 853.5px,#ffa5ff 865.5px,#af79ff 888.5px,#684bff 913.5px,#3627ff 933.5px,#3325f7 934.5px,#2218a3 938.5px,#120d59 941.5px,#0c093a 942.5px,#040314 943.5px,#000 944.5px)"></i>
<i style="background:linear-gradient(90deg,#000 335.5px,#03020e 336.5px,#0b0835 337.5px,#17116f 339.5px,#261bb6 342.5px,#3324f4 345.5px,#3627ff 346.5px,#825fff 376.5px,#d38cff 402.5px,#fea5ff 414.5px,#ffc1ff 427.5px,#ffbfff 509.5px,#fea5ff 517.5px,#b179ff 528.5px,#8a64ff 533.5px,#8a64ff 746.5px,#e496ff 758.5px,#fea5ff 762.5px,#ffbfff 770.5px,#ffc1ff 853.5px,#fea5ff 865.5px,#af78ff 888.5px,#6a4dff 912.5px,#3627ff 933.5px,#3324f4 934.5px,#21189f 938.5px,#17116f 940.5px,#0b0835 942.5px,#03020e 943.5px,#000 944.5px)"></i>
<i style="background:linear-gradient(90deg,#000 335.5px,#020108 336.5px,#0a072f 337.5px,#100c4f 338.5px,#1b1484 340.5px,#2e21dd 344.5px,#3224f1 345.5px,#3626ff 346.5px,#825eff 376.5px,#d38cff 402.5px,#fea4ff 414.5px,#ffc0ff 427.5px,#ffbdff 510.5px,#fda4ff 517.5px,#b079ff 528.5px,#8963ff 533.5px,#8963ff 746.5px,#e999ff 759.5px,#fda4ff 762.5px,#ffbfff 770.5px,#ffc0ff 853.5px,#fea4ff 865.5px,#af78ff 888.5px,#694cff 912.5px,#3626ff 933.5px,#3224f1 934.5px,#20179c 938.5px,#16106b 940.5px,#100c4f 941.5px,#0a072f 942.5px,#020108 943.5px,#000 944.5px)"></i>
<i style="background:linear-gradient(90deg,#000 335.5px,#000002 336.5px,#090629 337.5px,#0f0b4a 338.5px,#1b1380 340.5px,#2d20d9 344.5px,#3526ff 346.5px,#825eff 376.5px,#d28cff 402.5px,#fea4ff 414.5px,#ffbfff 426.5px,#ffbcff 510.5px,#ffa7ff 516.5px,#f6a0ff 518.5px,#a774ff 529.5px,#8e66ff 532.5px,#8963ff 533.5px,#8963ff 746.5px,#976bff 748.5px,#e898ff 759.5px,#fca3ff 762.5px,#ffabff 764.5px,#ffbeff 770.5px,#ffbeff 854.5px,#fea4ff 865.5px,#ae78ff 888.5px,#6c4eff 911.5px,#3526ff 933.5px,#2d20d9 935.5px,#1b1380 939.5px,#0f0b4a 941.5px,#090629 942.5px,#000002 943.5px,#000 944.5px)"></i>
<i style="background:linear-gradient(90deg,#000 336.5px,#0e0a45 338.5px,#1a127c 340.5px,#281dc1 343.5px,#3526fe 346.5px,#815eff 376.5px,#d28cff 402.5px,#ffa6ff 415.5px,#ffbfff 426.5px,#fbf 510.5px,#ffa6ff 516.5px,#e094ff 521.5px,#8d66ff 532.5px,#8a63ff 534.5px,#8a63ff 746.5px,#8d66ff 747.5px,#e094ff 758.5px,#ffa6ff 763.5px,#ffbdff 770.5px,#ffbeff 854.5px,#fda4ff 865.5px,#ae78ff 888.5px,#6b4eff 911.5px,#3526fe 933.5px,#241aab 937.5px,#140f62 940.5px,#0e0a45 941.5px,#000 943.5px)"></i>
<i style="background:linear-gradient(90deg,#000 336.5px,#06041c 337.5px,#0d0a40 338.5px,#191278 340.5px,#271cbe 343.5px,#3425fb 346.5px,#3929ff 348.5px,#8762ff 378.5px,#d58eff 403.5px,#ffa6ff 415.5px,#ffbeff 426.5px,#fbf 510.5px,#ffa6ff 516.5px,#c383ff 525.5px,#8c65ff 532.5px,#8a63ff 536.5px,#8a63ff 746.5px,#8c65ff 747.5px,#df93ff 758.5px,#ffa6ff 763.5px,#fbf 769.5px,#ffbdff 854.5px,#fda4ff 865.5px,#ae78ff 888.5px,#6b4eff 911.5px,#3727ff 932.5px,#3425fb 933.5px,#2319a8 937.5px,#130e5e 940.5px,#0d0a40 941.5px,#06041c 942.5px,#000 943.5px)"></i>
<i style="background:linear-gradient(90deg,#000 336.5px,#040314 337.5px,#0c093b 338.5px,#181174 340.5px,#271cba 343.5px,#3425f8 346.5px,#3727ff 347.5px,#845fff 377.5px,#d18cff 402.5px,#ffa6ff 415.5px,#ffbdff 425.5px,#ffbaff 510.5px,#ffa5ff 516.5px,#b37aff 527.5px,#8b64ff 532.5px,#8a64ff 746.5px,#8b64ff 747.5px,#de93ff 758.5px,#ffa5ff 763.5px,#ffbaff 769.5px,#fbf 855.5px,#ffa6ff 864.5px,#a472ff 891.5px,#533cff 920.5px,#3727ff 932.5px,#3425f8 933.5px,#2218a4 937.5px,#130d59 940.5px,#0c093b 941.5px,#040314 942.5px,#000 943.5px)"></i>
<i style="background:linear-gradient(90deg,#000 336.5px,#03020e 337.5px,#0b0835 338.5px,#171170 340.5px,#261bb7 343.5px,#3325f5 346.5px,#3627ff 347.5px,#835fff 377.5px,#d18bff 402.5px,#ffa6ff 415.5px,#ffbcff 425.5px,#ffb9ff 510.5px,#fea4ff 516.5px,#b27aff 527.5px,#8b64ff 532.5px,#8b64ff 747.5px,#e496ff 759.5px,#fea4ff 763.5px,#ffb9ff 769.5px,#fbf 855.5px,#ffa6ff 864.5px,#a774ff 890.5px,#6045ff 915.5px,#3627ff 932.5px,#3325f5 933.5px,#2118a0 937.5px,#171170 939.5px,#0b0835 941.5px,#03020e 942.5px,#000 943.5px)"></i>
<i style="background:linear-gradient(90deg,#000 336.5px,#020108 337.5px,#0a072f 338.5px,#110c4f 339.5px,#1c1485 341.5px,#2e21de 345.5px,#3224f2 346.5px,#3627ff 347.5px,#835fff 377.5px,#d18bff 402.5px,#ffa5ff 415.5px,#fbf 425.5px,#ffb9ff 510.5px,#fda4ff 516.5px,#b179ff 527.5px,#8a64ff 532.5px,#8a64ff 747.5px,#e999ff 760.5px,#fda4ff 763.5px,#ffb9ff 769.5px,#ffbaff 855.5px,#ffa5ff 864.5px,#a975ff 889.5px,#6549ff 913.5px,#3627ff 932.5px,#3224f2 933.5px,#21179d 937.5px,#16106b 939.5px,#110c4f 940.5px,#0a072f 941.5px,#020108 942.5px,#000 943.5px)"></i>
<i style="background:linear-gradient(90deg,#000 336.5px,#000002 337.5px,#09062a 338.5px,#100b4b 339.5px,#1b1381 341.5px,#2d21da 345.5px,#3224ef 346.5px,#3526ff 347.5px,#825fff 377.5px,#d08bff 402.5px,#ffa5ff 415.5px,#ffbaff 425.5px,#ffb8ff 510.5px,#ffa7ff 515.5px,#f5a0ff 517.5px,#a874ff 528.5px,#8a64ff 532.5px,#8a64ff 747.5px,#e898ff 760.5px,#fca3ff 763.5px,#faf 765.5px,#ffb8ff 769.5px,#ffbaff 855.5px,#ffa5ff 864.5px,#ac77ff 888.5px,#674bff 912.5px,#3526ff 932.5px,#3224ef 933.5px,#201799 937.5px,#150f67 939.5px,#100b4b 940.5px,#09062a 941.5px,#000002 942.5px,#000 943.5px)"></i>
<i style="background:linear-gradient(90deg,#000 337.5px,#0e0a46 339.5px,#1a137d 341.5px,#281dc2 344.5px,#3526ff 347.5px,#825eff 377.5px,#d08bff 402.5px,#ffa5ff 415.5px,#ffb9ff 424.5px,#ffb7ff 510.5px,#ffa6ff 515.5px,#c8f 523.5px,#8f66ff 531.5px,#8a64ff 532.5px,#8a64ff 747.5px,#976bff 749.5px,#e798ff 760.5px,#ffa6ff 764.5px,#ffb7ff 769.5px,#ffb8ff 856.5px,#ffa5ff 864.5px,#af78ff 887.5px,#694cff 911.5px,#3526ff 932.5px,#241aac 936.5px,#140f63 939.5px,#0e0a46 940.5px,#000 942.5px)"></i>
<i style="background:linear-gradient(90deg,#000 337.5px,#06041c 338.5px,#0d0a41 339.5px,#191279 341.5px,#281cbf 344.5px,#3426fd 347.5px,#412eff 352.5px,#8d66ff 381.5px,#de92ff 406.5px,#ffa5ff 415.5px,#ffb8ff 424.5px,#ffb6ff 510.5px,#ffa5ff 515.5px,#bc80ff 525.5px,#8e66ff 531.5px,#8a64ff 533.5px,#8a64ff 747.5px,#8e66ff 748.5px,#df93ff 759.5px,#ffa5ff 764.5px,#ffb6ff 769.5px,#ffb7ff 856.5px,#ffa5ff 864.5px,#af78ff 887.5px,#6c4eff 910.5px,#3727ff 931.5px,#3426fd 932.5px,#2319a9 936.5px,#140e5e 939.5px,#0d0a41 940.5px,#06041c 941.5px,#000 942.5px)"></i>
<i style="background:linear-gradient(90deg,#000 337.5px,#040314 338.5px,#0c093b 339.5px,#181175 341.5px,#271cbb 344.5px,#3425f9 347.5px,#3727ff 348.5px,#8460ff 378.5px,#d38cff 403.5px,#fea5ff 415.5px,#ffb7ff 424.5px,#ffb5ff 510.5px,#ffa5ff 515.5px,#b47bff 526.5px,#8d65ff 531.5px,#8a64ff 536.5px,#8a64ff 747.5px,#8d65ff 748.5px,#de93ff 759.5px,#ffa5ff 764.5px,#ffb5ff 769.5px,#ffb7ff 856.5px,#fea5ff 864.5px,#ae78ff 887.5px,#6b4eff 910.5px,#3727ff 931.5px,#3425f9 932.5px,#2219a5 936.5px,#130d5a 939.5px,#0c093b 940.5px,#040314 941.5px,#000 942.5px)"></i>
<i style="background:linear-gradient(90deg,#000 337.5px,#03020f 338.5px,#0b0836 339.5px,#171170 341.5px,#261bb8 344.5px,#3325f6 347.5px,#3627ff 348.5px,#8460ff 378.5px,#d28cff 403.5px,#fea4ff 415.5px,#ffb6ff 423.5px,#ffb5ff 510.5px,#fda4ff 515.5px,#b27aff 526.5px,#8c65ff 531.5px,#8a64ff 747.5px,#8c65ff 748.5px,#dd92ff 759.5px,#fda4ff 764.5px,#ffb5ff 769.5px,#ffb5ff 857.5px,#fea4ff 864.5px,#ae78ff 887.5px,#6e4fff 909.5px,#3627ff 931.5px,#3325f6 932.5px,#2118a1 936.5px,#171170 938.5px,#0b0836 940.5px,#03020f 941.5px,#000 942.5px)"></i>
<i style="background:linear-gradient(90deg,#000 337.5px,#020108 338.5px,#0a0730 339.5px,#110c50 340.5px,#1c1486 342.5px,#2e21df 346.5px,#3324f3 347.5px,#3627ff 348.5px,#8460ff 378.5px,#d28cff 403.5px,#fea4ff 415.5px,#ffb6ff 423.5px,#ffb4ff 510.5px,#ffa7ff 514.5px,#f6a0ff 516.5px,#aa75ff 527.5px,#8b64ff 531.5px,#8b64ff 748.5px,#e395ff 760.5px,#fca3ff 764.5px,#ffaeff 767.5px,#ffb4ff 770.5px,#ffb4ff 857.5px,#fea4ff 864.5px,#ae78ff 887.5px,#6b4dff 910.5px,#3627ff 931.5px,#3324f3 932.5px,#21179d 936.5px,#16106c 938.5px,#110c50 939.5px,#0a0730 940.5px,#020108 941.5px,#000 942.5px)"></i>
<i style="background:linear-gradient(90deg,#000 337.5px,#000002 338.5px,#09062a 339.5px,#100b4b 340.5px,#1b1382 342.5px,#2e21dc 346.5px,#3224f0 347.5px,#3626ff 348.5px,#835fff 378.5px,#d28cff 403.5px,#ffa6ff 416.5px,#ffb5ff 423.5px,#ffb3ff 510.5px,#ffa6ff 514.5px,#e898ff 518.5px,#996cff 529.5px,#8b64ff 531.5px,#8b64ff 748.5px,#e898ff 761.5px,#ffa6ff 765.5px,#ffb3ff 769.5px,#ffb4ff 857.5px,#fda4ff 864.5px,#ad77ff 887.5px,#6a4dff 910.5px,#3626ff 931.5px,#3224f0 932.5px,#20179a 936.5px,#160f68 938.5px,#100b4b 939.5px,#09062a 940.5px,#000002 941.5px,#000 942.5px)"></i>
<i style="background:linear-gradient(90deg,#000 338.5px,#0f0a46 340.5px,#1a137d 342.5px,#291dc3 345.5px,#3526ff 348.5px,#835fff 378.5px,#d18cff 403.5px,#ffa6ff 416.5px,#ffb4ff 423.5px,#ffb0ff 511.5px,#ffa6ff 514.5px,#c585ff 523.5px,#8a64ff 531.5px,#8a64ff 748.5px,#ed9bff 762.5px,#ffa6ff 765.5px,#ffb2ff 769.5px,#ffb4ff 857.5px,#fda4ff 864.5px,#ad77ff 887.5px,#674bff 911.5px,#3526ff 931.5px,#291dc3 934.5px,#1a137d 937.5px,#0f0a46 939.5px,#000 941.5px)"></i>
<i style="background:linear-gradient(90deg,#000 338.5px,#06041c 339.5px,#0e0a41 340.5px,#191279 342.5px,#281dc0 345.5px,#3526fe 348.5px,#835fff 378.5px,#d18bff 403.5px,#ffa6ff 416.5px,#ffb3ff 422.5px,#ffb0ff 511.5px,#ffa5ff 514.5px,#b57cff 525.5px,#8f67ff 530.5px,#8a64ff 531.5px,#8a64ff 748.5px,#976bff 750.5px,#e697ff 761.5px,#ffa5ff 765.5px,#ffb1ff 769.5px,#ffb1ff 858.5px,#fda4ff 864.5px,#ad77ff 887.5px,#674aff 911.5px,#3526fe 931.5px,#2319a9 935.5px,#140e5f 938.5px,#0e0a41 939.5px,#06041c 940.5px,#000 941.5px)"></i>
<i style="background:linear-gradient(90deg,#000 338.5px,#040314 339.5px,#0c093c 340.5px,#181175 342.5px,#271cbc 345.5px,#3425fb 348.5px,#3727ff 349.5px,#825eff 378.5px,#d18bff 403.5px,#ffa6ff 416.5px,#ffb2ff 422.5px,#ffafff 511.5px,#fea4ff 514.5px,#b47bff 525.5px,#8e66ff 530.5px,#8b64ff 532.5px,#8b64ff 748.5px,#8e66ff 749.5px,#de93ff 760.5px,#fea4ff 765.5px,#ffb0ff 769.5px,#ffb1ff 858.5px,#ffa6ff 863.5px,#a372ff 890.5px,#543dff 918.5px,#3727ff 930.5px,#3425fb 931.5px,#2219a6 935.5px,#130d5a 938.5px,#0c093c 939.5px,#040314 940.5px,#000 941.5px)"></i>
<i style="background:linear-gradient(90deg,#000 338.5px,#03020f 339.5px,#0b0836 340.5px,#181171 342.5px,#261cb9 345.5px,#3325f8 348.5px,#3627ff 349.5px,#825eff 378.5px,#d08bff 403.5px,#ffa6ff 416.5px,#ffb1ff 422.5px,#ffaeff 511.5px,#fda4ff 514.5px,#b37bff 525.5px,#8d65ff 530.5px,#8b64ff 537.5px,#8b64ff 748.5px,#8d65ff 749.5px,#dd92ff 760.5px,#fda4ff 765.5px,#ffafff 769.5px,#ffb1ff 858.5px,#ffa6ff 863.5px,#a673ff 889.5px,#6146ff 913.5px,#3627ff 930.5px,#3325f8 931.5px,#2218a2 935.5px,#181171 937.5px,#0b0836 939.5px,#03020f 940.5px,#000 941.5px)"></i>
<i style="background:linear-gradient(90deg,#000 338.5px,#020108 339.5px,#0a0730 340.5px,#110c50 341.5px,#1c1486 343.5px,#2f21e0 347.5px,#3324f4 348.5px,#3627ff 349.5px,#815eff 378.5px,#d08bff 403.5px,#ffa5ff 416.5px,#ffb0ff 422.5px,#ffaeff 511.5px,#ffa7ff 513.5px,#f6a0ff 515.5px,#ab76ff 526.5px,#8c65ff 530.5px,#8b64ff 748.5px,#8c65ff 749.5px,#dc91ff 760.5px,#fca3ff 765.5px,#faf 767.5px,#ffafff 770.5px,#ffafff 859.5px,#ffa5ff 863.5px,#a875ff 888.5px,#684cff 910.5px,#3627ff 930.5px,#3324f4 931.5px,#21189e 935.5px,#17106d 937.5px,#110c50 938.5px,#0a0730 939.5px,#020108 940.5px,#000 941.5px)"></i>
<i style="background:linear-gradient(90deg,#000 338.5px,#000002 339.5px,#09062a 340.5px,#100b4c 341.5px,#1b1382 343.5px,#2e21dd 347.5px,#3224f1 348.5px,#3627ff 349.5px,#815eff 378.5px,#d08bff 403.5px,#ffa5ff 416.5px,#ffafff 421.5px,#ffadff 511.5px,#ffa6ff 513.5px,#d48dff 520.5px,#8c65ff 530.5px,#8c65ff 749.5px,#e295ff 761.5px,#ffa6ff 766.5px,#ffaeff 769.5px,#ffaeff 859.5px,#ffa5ff 863.5px,#ab76ff 887.5px,#6b4dff 909.5px,#3627ff 930.5px,#3224f1 931.5px,#20179b 935.5px,#161068 937.5px,#100b4c 938.5px,#09062a 939.5px,#000002 940.5px,#000 941.5px)"></i>
<i style="background:linear-gradient(90deg,#000 339.5px,#0f0b47 341.5px,#1a137e 343.5px,#291dc4 346.5px,#3223ee 348.5px,#3526ff 349.5px,#815dff 378.5px,#cf8aff 403.5px,#ffa5ff 416.5px,#ffafff 421.5px,#ffacff 511.5px,#ffa5ff 513.5px,#be81ff 523.5px,#8b64ff 530.5px,#8b64ff 749.5px,#e798ff 762.5px,#ffa5ff 766.5px,#ffadff 769.5px,#ffaeff 859.5px,#ffa5ff 863.5px,#ae78ff 886.5px,#6a4dff 909.5px,#3526ff 930.5px,#2d20da 932.5px,#1f1697 935.5px,#150f64 937.5px,#0f0b47 938.5px,#000 940.5px)"></i>
<i style="background:linear-gradient(90deg,#000 339.5px,#06041c 340.5px,#0e0a41 341.5px,#19127a 343.5px,#281dc1 346.5px,#3526ff 349.5px,#805dff 378.5px,#cf8aff 403.5px,#ffa5ff 416.5px,#ffaeff 421.5px,#ffabff 511.5px,#ffa5ff 513.5px,#af78ff 525.5px,#8b64ff 530.5px,#8b64ff 749.5px,#ec9bff 763.5px,#ffa5ff 766.5px,#ffacff 769.5px,#ffaeff 859.5px,#ffa5ff 863.5px,#ae78ff 886.5px,#6a4dff 909.5px,#3526ff 930.5px,#2319aa 934.5px,#140e5f 937.5px,#0e0a41 938.5px,#06041c 939.5px,#000 940.5px)"></i>
<i style="background:linear-gradient(90deg,#000 339.5px,#040315 340.5px,#0c093c 341.5px,#181276 343.5px,#271cbd 346.5px,#3426fc 349.5px,#3c2bff 352.5px,#8963ff 381.5px,#d990ff 406.5px,#fea5ff 416.5px,#ffadff 421.5px,#ffabff 511.5px,#fea4ff 513.5px,#ae78ff 525.5px,#8f67ff 529.5px,#8b64ff 530.5px,#8b64ff 749.5px,#976bff 751.5px,#e596ff 762.5px,#fea4ff 766.5px,#ffabff 769.5px,#ffabff 860.5px,#fea5ff 863.5px,#ad77ff 886.5px,#6a4dff 909.5px,#3727ff 929.5px,#3426fc 930.5px,#2319a7 934.5px,#130e5b 937.5px,#0c093c 938.5px,#040315 939.5px,#000 940.5px)"></i>
<i style="background:linear-gradient(90deg,#000 339.5px,#03020f 340.5px,#0b0836 341.5px,#181172 343.5px,#271cba 346.5px,#3425f9 349.5px,#3727ff 350.5px,#835fff 379.5px,#d28cff 404.5px,#fea4ff 416.5px,#ffacff 420.5px,#faf 511.5px,#fda4ff 513.5px,#ad77ff 525.5px,#8e66ff 529.5px,#8b64ff 531.5px,#8b64ff 749.5px,#8e66ff 750.5px,#dd92ff 761.5px,#fda4ff 766.5px,#faf 769.5px,#ffabff 860.5px,#fea4ff 863.5px,#ad77ff 886.5px,#674aff 910.5px,#3727ff 929.5px,#3425f9 930.5px,#2218a3 934.5px,#181172 936.5px,#0b0836 938.5px,#03020f 939.5px,#000 940.5px)"></i>
<i style="background:linear-gradient(90deg,#000 339.5px,#020109 340.5px,#0a0730 341.5px,#110c51 342.5px,#1c1487 344.5px,#2f22e1 348.5px,#3325f6 349.5px,#3627ff 350.5px,#825eff 379.5px,#d18cff 404.5px,#fea4ff 416.5px,#ffabff 420.5px,#ffa9ff 511.5px,#fca3ff 513.5px,#ac76ff 525.5px,#8d66ff 529.5px,#8b64ff 540.5px,#8b64ff 749.5px,#8d66ff 750.5px,#dc92ff 761.5px,#fca3ff 766.5px,#ffa9ff 768.5px,#ffabff 860.5px,#fea4ff 863.5px,#ad77ff 886.5px,#694cff 909.5px,#3627ff 929.5px,#3325f6 930.5px,#21189f 934.5px,#17106d 936.5px,#110c51 937.5px,#0a0730 938.5px,#020109 939.5px,#000 940.5px)"></i>
<i style="background:linear-gradient(90deg,#000 339.5px,#000002 340.5px,#09062a 341.5px,#100b4c 342.5px,#1b1483 344.5px,#2e21de 348.5px,#3224f3 349.5px,#3627ff 350.5px,#825eff 379.5px,#d18bff 404.5px,#ffa6ff 417.5px,#faf 421.5px,#ffa9ff 511.5px,#ffa6ff 512.5px,#c786ff 521.5px,#8d65ff 529.5px,#8b64ff 749.5px,#8d65ff 750.5px,#e295ff 762.5px,#ffa6ff 767.5px,#ffa9ff 771.5px,#ffa8ff 861.5px,#f9a2ff 864.5px,#a975ff 887.5px,#694cff 909.5px,#3627ff 929.5px,#3224f3 930.5px,#20179b 934.5px,#161069 936.5px,#100b4c 937.5px,#09062a 938.5px,#000002 939.5px,#000 940.5px)"></i>
<i style="background:linear-gradient(90deg,#000 340.5px,#0f0b47 342.5px,#1a137f 344.5px,#291dc5 347.5px,#3224ef 349.5px,#3626ff 350.5px,#815eff 379.5px,#d18bff 404.5px,#ffa6ff 417.5px,#ffa9ff 421.5px,#ffa8ff 511.5px,#ffa5ff 512.5px,#b87dff 523.5px,#8c65ff 529.5px,#8c65ff 750.5px,#e194ff 762.5px,#ffa5ff 767.5px,#ffa8ff 772.5px,#ffa8ff 861.5px,#fda4ff 863.5px,#ac77ff 886.5px,#6b4eff 908.5px,#3626ff 929.5px,#3224ef 930.5px,#201798 934.5px,#150f64 936.5px,#0f0b47 937.5px,#000 939.5px)"></i>
<i style="background:linear-gradient(90deg,#000 340.5px,#06041d 341.5px,#0e0a42 342.5px,#1a127b 344.5px,#281dc2 347.5px,#3526ff 350.5px,#815eff 379.5px,#d08bff 404.5px,#ffa6ff 417.5px,#ffa8ff 424.5px,#ffa7ff 511.5px,#fea5ff 512.5px,#b079ff 524.5px,#8c65ff 529.5px,#8c65ff 750.5px,#e697ff 763.5px,#fea5ff 767.5px,#ffa7ff 781.5px,#ffa8ff 861.5px,#fda4ff 863.5px,#ac76ff 886.5px,#6d4fff 907.5px,#3526ff 929.5px,#281dc2 932.5px,#1a127b 935.5px,#0e0a42 937.5px,#06041d 938.5px,#000 939.5px)"></i>
<i style="background:linear-gradient(90deg,#000 340.5px,#040315 341.5px,#0d093c 342.5px,#191277 344.5px,#281cbe 347.5px,#3526fe 350.5px,#8460ff 380.5px,#d48dff 405.5px,#ffa6ff 417.5px,#ffa6ff 493.5px,#fda4ff 512.5px,#af78ff 524.5px,#8b64ff 529.5px,#8b64ff 750.5px,#eb9aff 764.5px,#fda4ff 767.5px,#ffa7ff 861.5px,#fca3ff 863.5px,#ab76ff 886.5px,#6a4dff 908.5px,#3526fe 929.5px,#2319a8 933.5px,#130e5b 936.5px,#0d093c 937.5px,#040315 938.5px,#000 939.5px)"></i>
<i style="background:linear-gradient(90deg,#000 340.5px,#03020f 341.5px,#0b0837 342.5px,#181172 344.5px,#271cbb 347.5px,#3425fa 350.5px,#3727ff 351.5px,#835fff 380.5px,#d38dff 405.5px,#ffa5ff 417.5px,#ffa5ff 511.5px,#f6a0ff 513.5px,#a674ff 525.5px,#9067ff 528.5px,#8b64ff 529.5px,#8b64ff 750.5px,#976bff 752.5px,#e496ff 763.5px,#fca3ff 767.5px,#ffa5ff 770.5px,#ffa5ff 862.5px,#a874ff 887.5px,#6449ff 910.5px,#3727ff 928.5px,#3425fa 929.5px,#2218a4 933.5px,#181172 935.5px,#0b0837 937.5px,#03020f 938.5px,#000 939.5px)"></i>
<i style="background:linear-gradient(90deg,#000 340.5px,#020109 341.5px,#0a0731 342.5px,#110c51 343.5px,#1c1488 345.5px,#2f22e2 349.5px,#3325f7 350.5px,#3627ff 351.5px,#835fff 380.5px,#d38cff 405.5px,#ffa5ff 417.5px,#fea4ff 511.5px,#f5a0ff 513.5px,#a573ff 525.5px,#8f66ff 528.5px,#8c65ff 530.5px,#8c65ff 750.5px,#8f66ff 751.5px,#dc92ff 762.5px,#fba3ff 767.5px,#fea4ff 772.5px,#ffa5ff 862.5px,#ab76ff 886.5px,#674aff 909.5px,#3627ff 928.5px,#3325f7 929.5px,#2118a0 933.5px,#17106e 935.5px,#110c51 936.5px,#0a0731 937.5px,#020109 938.5px,#000 939.5px)"></i>
<i style="background:linear-gradient(90deg,#000 340.5px,#000002 341.5px,#09062b 342.5px,#100b4c 343.5px,#1b1484 345.5px,#2e21df 349.5px,#3324f4 350.5px,#3627ff 351.5px,#835fff 380.5px,#d38cff 405.5px,#ffa5ff 417.5px,#fca3ff 511.5px,#f49fff 513.5px,#a472ff 525.5px,#8e66ff 528.5px,#8b64ff 553.5px,#8c65ff 750.5px,#8e66ff 751.5px,#db91ff 762.5px,#faa2ff 767.5px,#fea4ff 818.5px,#ffa5ff 862.5px,#aa76ff 886.5px,#6448ff 910.5px,#3627ff 928.5px,#3324f4 929.5px,#20179c 933.5px,#161069 935.5px,#100b4c 936.5px,#09062b 937.5px,#000002 938.5px,#000 939.5px)"></i>
<i style="background:linear-gradient(90deg,#000 341.5px,#0f0b47 343.5px,#1b1380 345.5px,#291ec6 348.5px,#3224f1 350.5px,#3627ff 351.5px,#825fff 380.5px,#d28cff 405.5px,#fea4ff 417.5px,#f9a2ff 512.5px,#ab76ff 524.5px,#8d65ff 528.5px,#8d65ff 751.5px,#e194ff 763.5px,#f9a2ff 767.5px,#fea4ff 862.5px,#a472ff 888.5px,#543cff 916.5px,#3627ff 928.5px,#3224f1 929.5px,#201798 933.5px,#150f65 935.5px,#0f0b47 936.5px,#000 938.5px)"></i>
<i style="background:linear-gradient(90deg,#000 341.5px,#06041d 342.5px,#0e0a42 343.5px,#1a127b 345.5px,#281dc3 348.5px,#3123ee 350.5px,#3526ff 351.5px,#825eff 380.5px,#d28cff 405.5px,#fca3ff 417.5px,#f8a1ff 512.5px,#a975ff 524.5px,#8d65ff 528.5px,#8d65ff 751.5px,#e697ff 764.5px,#f8a1ff 767.5px,#faa2ff 863.5px,#aa75ff 886.5px,#684cff 908.5px,#3526ff 928.5px,#2d20d9 930.5px,#1f1695 933.5px,#140e60 935.5px,#0e0a42 936.5px,#06041d 937.5px,#000 938.5px)"></i>
<i style="background:linear-gradient(90deg,#000 341.5px,#040315 342.5px,#0d093d 343.5px,#191277 345.5px,#281cbf 348.5px,#3526ff 351.5px,#825eff 380.5px,#d18cff 405.5px,#faa2ff 416.5px,#f7a0ff 512.5px,#b079ff 523.5px,#8c65ff 528.5px,#8c65ff 751.5px,#e596ff 764.5px,#f7a0ff 767.5px,#faa2ff 863.5px,#a673ff 887.5px,#6549ff 909.5px,#3526ff 928.5px,#2319a9 932.5px,#130e5c 935.5px,#0d093d 936.5px,#040315 937.5px,#000 938.5px)"></i>
<i style="background:linear-gradient(90deg,#000 341.5px,#03020f 342.5px,#0b0837 343.5px,#181173 345.5px,#271cbc 348.5px,#3426fc 351.5px,#3929ff 353.5px,#8762ff 382.5px,#d58dff 406.5px,#f9a2ff 416.5px,#f5a0ff 512.5px,#af78ff 523.5px,#8c65ff 528.5px,#8c65ff 751.5px,#ea99ff 765.5px,#f5a0ff 767.5px,#f9a2ff 863.5px,#a271ff 888.5px,#523cff 916.5px,#3727ff 927.5px,#3426fc 928.5px,#2219a5 932.5px,#181173 934.5px,#0b0837 936.5px,#03020f 937.5px,#000 938.5px)"></i>
<i style="background:linear-gradient(90deg,#000 341.5px,#020109 342.5px,#0a0731 343.5px,#110c52 344.5px,#1c1489 346.5px,#2f22e4 350.5px,#3425f9 351.5px,#3727ff 352.5px,#8460ff 381.5px,#d48dff 406.5px,#f8a1ff 416.5px,#f49fff 512.5px,#ae78ff 523.5px,#9067ff 527.5px,#8c65ff 528.5px,#8c65ff 751.5px,#986bff 753.5px,#e395ff 764.5px,#f49fff 767.5px,#f8a1ff 863.5px,#996cff 891.5px,#4a36ff 919.5px,#3727ff 927.5px,#3425f9 928.5px,#2118a1 932.5px,#17106f 934.5px,#110c52 935.5px,#0a0731 936.5px,#020109 937.5px,#000 938.5px)"></i>
<i style="background:linear-gradient(90deg,#000 341.5px,#000002 342.5px,#09062b 343.5px,#100b4d 344.5px,#1c1485 346.5px,#2f21e0 350.5px,#3325f5 351.5px,#3627ff 352.5px,#835fff 381.5px,#d48dff 406.5px,#f5a0ff 415.5px,#f39eff 512.5px,#b47bff 522.5px,#8f67ff 527.5px,#8c65ff 529.5px,#8c65ff 751.5px,#8f67ff 752.5px,#db91ff 763.5px,#f39eff 767.5px,#f5a0ff 864.5px,#a573ff 887.5px,#5f45ff 911.5px,#3627ff 927.5px,#3325f5 928.5px,#21179d 932.5px,#16106a 934.5px,#100b4d 935.5px,#09062b 936.5px,#000002 937.5px,#000 938.5px)"></i>
<i style="background:linear-gradient(90deg,#000 342.5px,#0f0b48 344.5px,#1b1380 346.5px,#291ec7 349.5px,#3224f2 351.5px,#3627ff 352.5px,#835fff 381.5px,#d48dff 406.5px,#f49fff 415.5px,#f29eff 512.5px,#b37aff 522.5px,#8e66ff 527.5px,#8c65ff 751.5px,#8e66ff 752.5px,#da91ff 763.5px,#f29eff 767.5px,#f49fff 864.5px,#9e6fff 889.5px,#4f39ff 917.5px,#3627ff 927.5px,#3224f2 928.5px,#201799 932.5px,#150f66 934.5px,#0f0b48 935.5px,#000 937.5px)"></i>
<i style="background:linear-gradient(90deg,#000 342.5px,#06041d 343.5px,#0e0a43 344.5px,#1a137c 346.5px,#291dc4 349.5px,#3224ef 351.5px,#3626ff 352.5px,#835fff 381.5px,#d38dff 406.5px,#f39fff 415.5px,#f19dff 512.5px,#b87eff 521.5px,#8e66ff 527.5px,#8e66ff 752.5px,#e094ff 764.5px,#f19dff 767.5px,#f39fff 864.5px,#986bff 891.5px,#4935ff 919.5px,#3626ff 927.5px,#3224ef 928.5px,#1f1695 932.5px,#140e61 934.5px,#0e0a43 935.5px,#06041d 936.5px,#000 937.5px)"></i>
<i style="background:linear-gradient(90deg,#000 342.5px,#040316 343.5px,#0d093d 344.5px,#191278 346.5px,#281dc0 349.5px,#3526ff 352.5px,#825fff 381.5px,#d38cff 406.5px,#f29eff 415.5px,#ef9cff 512.5px,#be81ff 520.5px,#8d65ff 527.5px,#8d65ff 752.5px,#e596ff 765.5px,#ef9cff 767.5px,#f09dff 865.5px,#a170ff 888.5px,#513aff 916.5px,#3526ff 927.5px,#281dc0 930.5px,#191278 933.5px,#0d093d 935.5px,#040316 936.5px,#000 937.5px)"></i>
<i style="background:linear-gradient(90deg,#000 342.5px,#030210 343.5px,#0c0838 344.5px,#181174 346.5px,#271cbd 349.5px,#3526fd 352.5px,#825eff 381.5px,#d38cff 406.5px,#f09dff 414.5px,#ee9bff 512.5px,#d18bff 517.5px,#8d65ff 527.5px,#8d65ff 752.5px,#ea99ff 766.5px,#ee9bff 768.5px,#f09dff 865.5px,#9d6eff 889.5px,#4e38ff 917.5px,#3526fd 927.5px,#2219a6 931.5px,#181174 933.5px,#0c0838 935.5px,#030210 936.5px,#000 937.5px)"></i>
<i style="background:linear-gradient(90deg,#000 342.5px,#020109 343.5px,#0a0732 344.5px,#110c52 345.5px,#1d1489 347.5px,#3022e5 351.5px,#3425fa 352.5px,#3727ff 353.5px,#8560ff 382.5px,#d68eff 407.5px,#ef9cff 414.5px,#ec9bff 512.5px,#dd92ff 515.5px,#8c65ff 527.5px,#8c65ff 752.5px,#e999ff 766.5px,#ec9bff 768.5px,#ef9cff 865.5px,#976bff 891.5px,#4834ff 919.5px,#3727ff 926.5px,#3425fa 927.5px,#2218a2 931.5px,#17116f 933.5px,#110c52 934.5px,#0a0732 935.5px,#020109 936.5px,#000 937.5px)"></i>
<i style="background:linear-gradient(90deg,#000 342.5px,#010002 343.5px,#09062b 344.5px,#100c4d 345.5px,#1c1485 347.5px,#2a1ecc 350.5px,#3325f7 352.5px,#3627ff 353.5px,#8460ff 382.5px,#d58eff 407.5px,#ee9bff 414.5px,#eb9aff 512.5px,#e295ff 514.5px,#986bff 525.5px,#8c65ff 527.5px,#8c65ff 752.5px,#986bff 754.5px,#e898ff 766.5px,#eb9aff 769.5px,#ee9bff 865.5px,#9067ff 893.5px,#4330ff 921.5px,#3627ff 926.5px,#3325f7 927.5px,#21189e 931.5px,#16106b 933.5px,#100c4d 934.5px,#09062b 935.5px,#010002 936.5px,#000 937.5px)"></i>
<i style="background:linear-gradient(90deg,#000 343.5px,#0f0b48 345.5px,#1b1381 347.5px,#2a1ec9 350.5px,#3324f3 352.5px,#3627ff 353.5px,#8460ff 382.5px,#d58eff 407.5px,#eb9aff 413.5px,#e999ff 512.5px,#e194ff 514.5px,#976bff 525.5px,#8f67ff 526.5px,#8d65ff 529.5px,#8d65ff 752.5px,#8f67ff 753.5px,#db91ff 764.5px,#e798ff 766.5px,#ea99ff 770.5px,#eb9aff 866.5px,#996cff 890.5px,#4a35ff 918.5px,#3627ff 926.5px,#3324f3 927.5px,#20179a 931.5px,#150f66 933.5px,#0f0b48 934.5px,#000 936.5px)"></i>
<i style="background:linear-gradient(90deg,#000 343.5px,#06041e 344.5px,#0e0a43 345.5px,#1a137d 347.5px,#291dc5 350.5px,#3224f0 352.5px,#3627ff 353.5px,#835fff 382.5px,#d58dff 407.5px,#ea99ff 413.5px,#e898ff 512.5px,#e094ff 514.5px,#8f66ff 526.5px,#8d65ff 752.5px,#8f66ff 753.5px,#e094ff 765.5px,#e898ff 767.5px,#ea99ff 866.5px,#966aff 891.5px,#4733ff 919.5px,#3627ff 926.5px,#3224f0 927.5px,#1f1696 931.5px,#140f62 933.5px,#0e0a43 934.5px,#06041e 935.5px,#000 936.5px)"></i>
<i style="background:linear-gradient(90deg,#000 343.5px,#050316 344.5px,#0d093e 345.5px,#191279 347.5px,#281dc1 350.5px,#3123ed 352.5px,#3526ff 353.5px,#835fff 382.5px,#d48dff 407.5px,#e999ff 413.5px,#e596ff 513.5px,#956aff 525.5px,#8e66ff 526.5px,#8e66ff 753.5px,#df93ff 765.5px,#e596ff 766.5px,#e999ff 866.5px,#8f67ff 893.5px,#422fff 921.5px,#3526ff 926.5px,#2d20d8 928.5px,#1e1692 931.5px,#130e5d 933.5px,#0d093e 934.5px,#050316 935.5px,#000 936.5px)"></i>
<i style="background:linear-gradient(90deg,#000 343.5px,#030210 344.5px,#0c0838 345.5px,#181174 347.5px,#271cbe 350.5px,#3526ff 353.5px,#835fff 382.5px,#d48dff 407.5px,#e898ff 413.5px,#e496ff 513.5px,#9b6dff 524.5px,#8e66ff 526.5px,#8e66ff 753.5px,#e496ff 766.5px,#e697ff 867.5px,#956aff 891.5px,#4633ff 919.5px,#3526ff 926.5px,#2319a7 930.5px,#181174 932.5px,#0c0838 934.5px,#030210 935.5px,#000 936.5px)"></i>
<i style="background:linear-gradient(90deg,#000 343.5px,#020109 344.5px,#0a0732 345.5px,#110c53 346.5px,#1d158a 348.5px,#3022e6 352.5px,#3425fb 353.5px,#3929ff 355.5px,#8561ff 383.5px,#d48dff 407.5px,#e697ff 412.5px,#e395ff 513.5px,#9a6dff 524.5px,#8d65ff 526.5px,#8d65ff 753.5px,#e395ff 766.5px,#e697ff 867.5px,#946aff 891.5px,#4632ff 919.5px,#3727ff 925.5px,#3425fb 926.5px,#2218a3 930.5px,#171170 932.5px,#110c53 933.5px,#0a0732 934.5px,#020109 935.5px,#000 936.5px)"></i>
<i style="background:linear-gradient(90deg,#000 343.5px,#010003 344.5px,#09072c 345.5px,#100c4e 346.5px,#1c1486 348.5px,#2b1fcd 351.5px,#3425f8 353.5px,#3727ff 354.5px,#8560ff 383.5px,#d38dff 407.5px,#e596ff 412.5px,#e194ff 513.5px,#996cff 524.5px,#8d65ff 526.5px,#8d65ff 753.5px,#e194ff 766.5px,#e596ff 867.5px,#8e66ff 893.5px,#412eff 921.5px,#3727ff 925.5px,#3425f8 926.5px,#21189f 930.5px,#16106b 932.5px,#100c4e 933.5px,#09072c 934.5px,#010003 935.5px,#000 936.5px)"></i>
<i style="background:linear-gradient(90deg,#000 344.5px,#0f0b49 346.5px,#1b1382 348.5px,#2a1eca 351.5px,#3324f5 353.5px,#3627ff 354.5px,#8560ff 383.5px,#d38cff 407.5px,#e496ff 412.5px,#e094ff 513.5px,#9f70ff 523.5px,#9167ff 525.5px,#8d65ff 527.5px,#8d65ff 753.5px,#986cff 755.5px,#db91ff 765.5px,#e094ff 766.5px,#e295ff 868.5px,#9167ff 892.5px,#4330ff 920.5px,#3627ff 925.5px,#3324f5 926.5px,#20179b 930.5px,#150f67 932.5px,#0f0b49 933.5px,#000 935.5px)"></i>
<i style="background:linear-gradient(90deg,#000 344.5px,#06041e 345.5px,#0e0a44 346.5px,#1a137e 348.5px,#291ec6 351.5px,#3224f1 353.5px,#3627ff 354.5px,#8460ff 383.5px,#d38cff 407.5px,#e194ff 411.5px,#df93ff 513.5px,#9e6fff 523.5px,#9067ff 525.5px,#8d65ff 528.5px,#8d65ff 753.5px,#9067ff 754.5px,#da90ff 765.5px,#df93ff 766.5px,#e194ff 868.5px,#9067ff 892.5px,#4230ff 920.5px,#3627ff 925.5px,#3224f1 926.5px,#1f1797 930.5px,#140f62 932.5px,#0e0a44 933.5px,#06041e 934.5px,#000 935.5px)"></i>
<i style="background:linear-gradient(90deg,#000 344.5px,#050316 345.5px,#0d093e 346.5px,#191279 348.5px,#281dc2 351.5px,#3223ee 353.5px,#3526ff 354.5px,#8460ff 383.5px,#d28cff 407.5px,#e094ff 411.5px,#de92ff 513.5px,#9d6eff 523.5px,#8f66ff 525.5px,#8d65ff 753.5px,#8f66ff 754.5px,#d990ff 765.5px,#de92ff 766.5px,#e094ff 868.5px,#8a64ff 894.5px,#3d2cff 922.5px,#3526ff 925.5px,#3223ee 926.5px,#1f1693 930.5px,#130e5e 932.5px,#0d093e 933.5px,#050316 934.5px,#000 935.5px)"></i>
<i style="background:linear-gradient(90deg,#000 344.5px,#030210 345.5px,#0c0838 346.5px,#181175 348.5px,#281cbf 351.5px,#3526ff 354.5px,#835fff 383.5px,#df93ff 411.5px,#dd92ff 513.5px,#a372ff 522.5px,#8e66ff 525.5px,#8e66ff 754.5px,#d88fff 765.5px,#dd92ff 766.5px,#df93ff 868.5px,#835fff 896.5px,#3526ff 925.5px,#2319a8 929.5px,#181175 931.5px,#0c0838 933.5px,#030210 934.5px,#000 935.5px)"></i>
<i style="background:linear-gradient(90deg,#000 344.5px,#02010a 345.5px,#0a0732 346.5px,#110c54 347.5px,#1d158b 349.5px,#3023e8 353.5px,#3526fd 354.5px,#4633ff 361.5px,#956aff 389.5px,#de93ff 411.5px,#db91ff 513.5px,#a975ff 521.5px,#8e66ff 525.5px,#8e66ff 754.5px,#d78fff 765.5px,#db91ff 766.5px,#dc92ff 869.5px,#8c65ff 893.5px,#3f2dff 921.5px,#3526fd 925.5px,#2218a4 929.5px,#171171 931.5px,#110c54 932.5px,#0a0732 933.5px,#02010a 934.5px,#000 935.5px)"></i>
<i style="background:linear-gradient(90deg,#000 344.5px,#010003 345.5px,#09072c 346.5px,#100c4e 347.5px,#1c1487 349.5px,#2b1fce 352.5px,#3425f9 354.5px,#3727ff 355.5px,#835fff 383.5px,#d18bff 407.5px,#dc91ff 410.5px,#da90ff 513.5px,#bd80ff 518.5px,#8e66ff 525.5px,#8e66ff 754.5px,#d68eff 765.5px,#da90ff 767.5px,#dc91ff 869.5px,#8963ff 894.5px,#3c2bff 922.5px,#3727ff 924.5px,#3425f9 925.5px,#2118a0 929.5px,#16106c 931.5px,#100c4e 932.5px,#09072c 933.5px,#010003 934.5px,#000 935.5px)"></i>
<i style="background:linear-gradient(90deg,#000 345.5px,#0f0b49 347.5px,#1b1383 349.5px,#2a1ecb 352.5px,#3325f6 354.5px,#3627ff 355.5px,#825fff 383.5px,#d18bff 407.5px,#db91ff 410.5px,#d88fff 513.5px,#c887ff 516.5px,#8d66ff 525.5px,#8d66ff 754.5px,#d58eff 765.5px,#d88fff 767.5px,#db91ff 869.5px,#825fff 896.5px,#3627ff 924.5px,#3325f6 925.5px,#20179c 929.5px,#150f67 931.5px,#0f0b49 932.5px,#000 934.5px)"></i>
<i style="background:linear-gradient(90deg,#000 345.5px,#06041e 346.5px,#0e0a44 347.5px,#1a137e 349.5px,#291ec7 352.5px,#3224f3 354.5px,#3627ff 355.5px,#825eff 383.5px,#d18bff 407.5px,#da90ff 410.5px,#d78fff 513.5px,#ce8aff 515.5px,#9168ff 524.5px,#8e66ff 526.5px,#8e66ff 754.5px,#986cff 756.5px,#d48dff 765.5px,#d78fff 767.5px,#d88fff 870.5px,#8863ff 894.5px,#3b2aff 922.5px,#3627ff 924.5px,#3224f3 925.5px,#201798 929.5px,#150f63 931.5px,#0e0a44 932.5px,#06041e 933.5px,#000 934.5px)"></i>
<i style="background:linear-gradient(90deg,#000 345.5px,#050316 346.5px,#0d093e 347.5px,#19127a 349.5px,#291dc4 352.5px,#3224ef 354.5px,#3626ff 355.5px,#825eff 383.5px,#d08bff 407.5px,#d88fff 410.5px,#d68eff 513.5px,#cd89ff 515.5px,#9067ff 524.5px,#8e66ff 528.5px,#8e66ff 754.5px,#9067ff 755.5px,#d38cff 765.5px,#d68eff 769.5px,#d78fff 870.5px,#8862ff 894.5px,#3b2aff 922.5px,#3626ff 924.5px,#3224ef 925.5px,#1f1694 929.5px,#140e5e 931.5px,#0d093e 932.5px,#050316 933.5px,#000 934.5px)"></i>
<i style="background:linear-gradient(90deg,#000 345.5px,#030210 346.5px,#0c0839 347.5px,#181276 349.5px,#281dc0 352.5px,#3123ec 354.5px,#3526ff 355.5px,#815eff 383.5px,#d68eff 409.5px,#d48dff 513.5px,#d28cff 514.5px,#8f67ff 524.5px,#8e66ff 754.5px,#8f67ff 755.5px,#d28cff 765.5px,#d48dff 779.5px,#d68eff 870.5px,#815eff 896.5px,#3526ff 924.5px,#2d20d6 926.5px,#1e1590 929.5px,#130d59 931.5px,#0c0839 932.5px,#030210 933.5px,#000 934.5px)"></i>
<i style="background:linear-gradient(90deg,#000 345.5px,#02010a 346.5px,#0b0833 347.5px,#110d54 348.5px,#1d158c 350.5px,#3023e9 354.5px,#3526fe 355.5px,#8460ff 384.5px,#d58eff 409.5px,#d18bff 514.5px,#8f66ff 524.5px,#8f66ff 755.5px,#d18bff 765.5px,#d58eff 870.5px,#7b59ff 898.5px,#3526fe 924.5px,#2219a5 928.5px,#181171 930.5px,#110d54 931.5px,#0b0833 932.5px,#02010a 933.5px,#000 934.5px)"></i>
<i style="background:linear-gradient(90deg,#000 345.5px,#010003 346.5px,#09072c 347.5px,#100c4f 348.5px,#1c1488 350.5px,#2b1fcf 353.5px,#3425fb 355.5px,#3727ff 356.5px,#845fff 384.5px,#d48dff 409.5px,#d08bff 514.5px,#8e66ff 524.5px,#8e66ff 755.5px,#d08bff 765.5px,#d38cff 871.5px,#845fff 895.5px,#3727ff 923.5px,#3425fb 924.5px,#2118a1 928.5px,#17106d 930.5px,#100c4f 931.5px,#09072c 932.5px,#010003 933.5px,#000 934.5px)"></i>
<i style="background:linear-gradient(90deg,#000 346.5px,#0f0b4a 348.5px,#1b1484 350.5px,#2a1ecc 353.5px,#3325f7 355.5px,#3727ff 356.5px,#835fff 384.5px,#d28cff 408.5px,#cf8aff 514.5px,#8e66ff 524.5px,#8e66ff 755.5px,#cf8aff 765.5px,#d28cff 871.5px,#7d5bff 897.5px,#3727ff 923.5px,#3325f7 924.5px,#21179d 928.5px,#161068 930.5px,#0f0b4a 931.5px,#000 933.5px)"></i>
<i style="background:linear-gradient(90deg,#000 346.5px,#06051e 347.5px,#0e0a45 348.5px,#1a137f 350.5px,#2a1ec8 353.5px,#3324f4 355.5px,#3627ff 356.5px,#835fff 384.5px,#d18bff 408.5px,#ce89ff 514.5px,#8e66ff 524.5px,#8e66ff 755.5px,#ce89ff 765.5px,#d18bff 871.5px,#7a58ff 898.5px,#3627ff 923.5px,#3324f4 924.5px,#201799 928.5px,#150f63 930.5px,#0e0a45 931.5px,#06051e 932.5px,#000 933.5px)"></i>
<i style="background:linear-gradient(90deg,#000 346.5px,#050317 347.5px,#0d093f 348.5px,#1a127b 350.5px,#291dc5 353.5px,#3224f1 355.5px,#3627ff 356.5px,#825fff 384.5px,#d08bff 408.5px,#cc89ff 514.5px,#9268ff 523.5px,#8e66ff 525.5px,#8e66ff 755.5px,#996cff 757.5px,#cc89ff 765.5px,#ce8aff 872.5px,#7c5aff 897.5px,#3627ff 923.5px,#3224f1 924.5px,#1f1695 928.5px,#140e5f 930.5px,#0d093f 931.5px,#050317 932.5px,#000 933.5px)"></i>
<i style="background:linear-gradient(90deg,#000 346.5px,#030210 347.5px,#0c0939 348.5px,#130d5a 349.5px,#1e1691 351.5px,#3123ee 355.5px,#3526ff 356.5px,#825eff 384.5px,#ce89ff 407.5px,#cb88ff 514.5px,#9167ff 523.5px,#8e66ff 527.5px,#8e66ff 755.5px,#9167ff 756.5px,#cb88ff 765.5px,#ce89ff 872.5px,#7c5aff 897.5px,#3526ff 923.5px,#3123ee 924.5px,#1e1691 928.5px,#130d5a 930.5px,#0c0939 931.5px,#030210 932.5px,#000 933.5px)"></i>
<i style="background:linear-gradient(90deg,#000 346.5px,#02010a 347.5px,#0b0833 348.5px,#120d55 349.5px,#1d158d 351.5px,#3123ea 355.5px,#3526ff 356.5px,#825eff 384.5px,#cd89ff 407.5px,#ca87ff 514.5px,#9067ff 523.5px,#8e66ff 755.5px,#9067ff 756.5px,#ca87ff 765.5px,#cd89ff 872.5px,#7655ff 899.5px,#3526ff 923.5px,#2219a6 927.5px,#181172 929.5px,#120d55 930.5px,#0b0833 931.5px,#02010a 932.5px,#000 933.5px)"></i>
<i style="background:linear-gradient(90deg,#000 346.5px,#010003 347.5px,#09072d 348.5px,#110c4f 349.5px,#1c1488 351.5px,#2b1fd1 354.5px,#3426fc 356.5px,#3c2bff 359.5px,#8a64ff 387.5px,#c8f 407.5px,#c987ff 514.5px,#8f67ff 523.5px,#8f67ff 756.5px,#c987ff 765.5px,#c8f 872.5px,#7253ff 900.5px,#3728ff 922.5px,#3426fc 923.5px,#2218a2 927.5px,#17106d 929.5px,#110c4f 930.5px,#09072d 931.5px,#010003 932.5px,#000 933.5px)"></i>
<i style="background:linear-gradient(90deg,#000 347.5px,#0f0b4a 349.5px,#1b1484 351.5px,#2b1fcd 354.5px,#3425f9 356.5px,#3727ff 357.5px,#8460ff 385.5px,#c987ff 406.5px,#c886ff 514.5px,#8f66ff 523.5px,#8f66ff 756.5px,#c886ff 765.5px,#c987ff 873.5px,#7857ff 898.5px,#3727ff 922.5px,#3425f9 923.5px,#21189e 927.5px,#161069 929.5px,#0f0b4a 930.5px,#000 932.5px)"></i>
<i style="background:linear-gradient(90deg,#000 347.5px,#06051f 348.5px,#0e0a45 349.5px,#1b1380 351.5px,#2a1ec9 354.5px,#3325f6 356.5px,#3627ff 357.5px,#8460ff 385.5px,#c886ff 406.5px,#c685ff 514.5px,#a875ff 519.5px,#8f66ff 523.5px,#8f66ff 756.5px,#c283ff 764.5px,#c685ff 766.5px,#c886ff 873.5px,#7555ff 899.5px,#3627ff 922.5px,#3325f6 923.5px,#20179a 927.5px,#150f64 929.5px,#0e0a45 930.5px,#06051f 931.5px,#000 932.5px)"></i>
<i style="background:linear-gradient(90deg,#000 347.5px,#050317 348.5px,#0d093f 349.5px,#1a127c 351.5px,#291dc6 354.5px,#3224f2 356.5px,#3627ff 357.5px,#835fff 385.5px,#c786ff 406.5px,#c585ff 514.5px,#b57bff 517.5px,#8f66ff 523.5px,#8f66ff 756.5px,#c183ff 764.5px,#c585ff 766.5px,#c786ff 873.5px,#7152ff 900.5px,#3627ff 922.5px,#3224f2 923.5px,#1f1696 927.5px,#140e5f 929.5px,#0d093f 930.5px,#050317 931.5px,#000 932.5px)"></i>
<i style="background:linear-gradient(90deg,#000 347.5px,#030210 348.5px,#0c093a 349.5px,#130d5a 350.5px,#2319ab 353.5px,#3224ef 356.5px,#3626ff 357.5px,#835fff 385.5px,#c685ff 406.5px,#c484ff 514.5px,#ba7fff 516.5px,#9268ff 522.5px,#8f66ff 524.5px,#8f66ff 756.5px,#996cff 758.5px,#c082ff 764.5px,#c484ff 766.5px,#c484ff 874.5px,#7454ff 899.5px,#3626ff 922.5px,#3224ef 923.5px,#1e1692 927.5px,#130d5a 929.5px,#0c093a 930.5px,#030210 931.5px,#000 932.5px)"></i>
<i style="background:linear-gradient(90deg,#000 347.5px,#02020a 348.5px,#0b0833 349.5px,#120d55 350.5px,#1d158d 352.5px,#3123eb 356.5px,#3526ff 357.5px,#825fff 385.5px,#c484ff 405.5px,#c283ff 514.5px,#b97eff 516.5px,#9168ff 522.5px,#8f66ff 528.5px,#8f66ff 756.5px,#9168ff 757.5px,#bf82ff 764.5px,#c283ff 768.5px,#c484ff 874.5px,#7152ff 900.5px,#3526ff 922.5px,#281cbe 925.5px,#181173 928.5px,#120d55 929.5px,#0b0833 930.5px,#02020a 931.5px,#000 932.5px)"></i>
<i style="background:linear-gradient(90deg,#000 347.5px,#010003 348.5px,#09072d 349.5px,#110c50 350.5px,#1d1489 352.5px,#2c1fd2 355.5px,#3526fe 357.5px,#825eff 385.5px,#c383ff 405.5px,#c182ff 514.5px,#bf81ff 515.5px,#9067ff 522.5px,#8f66ff 756.5px,#9067ff 757.5px,#bf81ff 764.5px,#c182ff 774.5px,#c383ff 874.5px,#7051ff 900.5px,#3526fe 922.5px,#2218a3 926.5px,#17106e 928.5px,#110c50 929.5px,#09072d 930.5px,#010003 931.5px,#000 932.5px)"></i>
<i style="background:linear-gradient(90deg,#000 348.5px,#100b4b 350.5px,#1c1485 352.5px,#2b1fce 355.5px,#3425fa 357.5px,#3727ff 358.5px,#8560ff 386.5px,#c283ff 405.5px,#be80ff 515.5px,#9067ff 522.5px,#9067ff 757.5px,#be80ff 764.5px,#c283ff 874.5px,#7353ff 899.5px,#3727ff 921.5px,#3425fa 922.5px,#21189f 926.5px,#161069 928.5px,#100b4b 929.5px,#000 931.5px)"></i>
<i style="background:linear-gradient(90deg,#000 348.5px,#06051f 349.5px,#0e0a45 350.5px,#1b1381 352.5px,#2a1ecb 355.5px,#3325f7 357.5px,#3727ff 358.5px,#8460ff 386.5px,#bf81ff 404.5px,#bd80ff 515.5px,#8f67ff 522.5px,#8f67ff 757.5px,#bd80ff 764.5px,#bf81ff 875.5px,#6f51ff 900.5px,#3727ff 921.5px,#3325f7 922.5px,#20179b 926.5px,#150f65 928.5px,#0e0a45 929.5px,#06051f 930.5px,#000 931.5px)"></i>
<i style="background:linear-gradient(90deg,#000 348.5px,#050317 349.5px,#0d0a40 350.5px,#1a137c 352.5px,#291ec7 355.5px,#3324f4 357.5px,#3627ff 358.5px,#8460ff 386.5px,#bf81ff 404.5px,#bb7fff 515.5px,#8f67ff 522.5px,#8f67ff 757.5px,#bb7fff 764.5px,#bf81ff 875.5px,#7253ff 899.5px,#3627ff 921.5px,#3324f4 922.5px,#1f1697 926.5px,#140e60 928.5px,#0d0a40 929.5px,#050317 930.5px,#000 931.5px)"></i>
<i style="background:linear-gradient(90deg,#000 348.5px,#030211 349.5px,#0c093a 350.5px,#130e5b 351.5px,#241aab 354.5px,#3224f0 357.5px,#3627ff 358.5px,#8460ff 386.5px,#be81ff 404.5px,#ba7fff 515.5px,#8f67ff 522.5px,#8f67ff 757.5px,#ba7fff 764.5px,#be81ff 875.5px,#7252ff 899.5px,#3627ff 921.5px,#3224f0 922.5px,#1e1692 926.5px,#130e5b 928.5px,#0c093a 929.5px,#030211 930.5px,#000 931.5px)"></i>
<i style="background:linear-gradient(90deg,#000 348.5px,#02020a 349.5px,#0b0834 350.5px,#120d56 351.5px,#1e158e 353.5px,#2d20d7 356.5px,#3123ed 357.5px,#3526ff 358.5px,#835fff 386.5px,#bc80ff 404.5px,#b97eff 515.5px,#9268ff 521.5px,#8f67ff 523.5px,#8f67ff 757.5px,#996cff 759.5px,#b97eff 764.5px,#bb7fff 876.5px,#6e50ff 900.5px,#3526ff 921.5px,#3123ed 922.5px,#2319a8 925.5px,#181173 927.5px,#120d56 928.5px,#0b0834 929.5px,#02020a 930.5px,#000 931.5px)"></i>
<i style="background:linear-gradient(90deg,#000 348.5px,#010103 349.5px,#09072d 350.5px,#110c51 351.5px,#1d158a 353.5px,#2c1fd3 356.5px,#3526ff 358.5px,#835fff 386.5px,#ba7fff 403.5px,#b87dff 515.5px,#9268ff 521.5px,#8f67ff 529.5px,#8f67ff 757.5px,#9268ff 758.5px,#b87dff 764.5px,#ba7fff 876.5px,#6e50ff 900.5px,#3526ff 921.5px,#2218a4 925.5px,#17116f 927.5px,#110c51 928.5px,#09072d 929.5px,#010103 930.5px,#000 931.5px)"></i>
<i style="background:linear-gradient(90deg,#000 349.5px,#100b4b 351.5px,#1c1486 353.5px,#2b1fcf 356.5px,#3426fc 358.5px,#3a29ff 360.5px,#8963ff 388.5px,#b97eff 403.5px,#b77dff 515.5px,#9168ff 521.5px,#8f67ff 757.5px,#9168ff 758.5px,#b77dff 764.5px,#b97eff 876.5px,#7052ff 899.5px,#3728ff 920.5px,#3426fc 921.5px,#2118a0 925.5px,#16106a 927.5px,#100b4b 928.5px,#000 930.5px)"></i>
<i style="background:linear-gradient(90deg,#000 349.5px,#06051f 350.5px,#0f0a46 351.5px,#1b1382 353.5px,#2a1ecc 356.5px,#3425f8 358.5px,#3727ff 359.5px,#8561ff 387.5px,#b87dff 403.5px,#b67cff 515.5px,#9067ff 521.5px,#9067ff 758.5px,#b67cff 764.5px,#b67cff 877.5px,#6d4fff 900.5px,#3727ff 920.5px,#3425f8 921.5px,#20179c 925.5px,#150f65 927.5px,#0f0a46 928.5px,#06051f 929.5px,#000 930.5px)"></i>
<i style="background:linear-gradient(90deg,#000 349.5px,#050418 350.5px,#0d0a40 351.5px,#1a137d 353.5px,#2a1ec8 356.5px,#3325f5 358.5px,#3627ff 359.5px,#8560ff 387.5px,#b67cff 402.5px,#b47bff 515.5px,#9067ff 521.5px,#9067ff 758.5px,#b47bff 764.5px,#b67cff 877.5px,#6d4fff 900.5px,#3627ff 920.5px,#3325f5 921.5px,#1f1798 925.5px,#140e60 927.5px,#0d0a40 928.5px,#050418 929.5px,#000 930.5px)"></i>
<i style="background:linear-gradient(90deg,#000 349.5px,#030211 350.5px,#0c093a 351.5px,#130e5c 352.5px,#241aac 355.5px,#3224f2 358.5px,#3627ff 359.5px,#8460ff 387.5px,#b57cff 402.5px,#b37bff 515.5px,#9067ff 521.5px,#9067ff 758.5px,#b37bff 764.5px,#b57cff 877.5px,#6f51ff 899.5px,#3627ff 920.5px,#3224f2 921.5px,#1f1693 925.5px,#130e5c 927.5px,#0c093a 928.5px,#030211 929.5px,#000 930.5px)"></i>
<i style="background:linear-gradient(90deg,#000 349.5px,#02020b 350.5px,#0b0834 351.5px,#120d56 352.5px,#1e158f 354.5px,#2d20d8 357.5px,#3223ee 358.5px,#3626ff 359.5px,#8460ff 387.5px,#b47bff 402.5px,#b27aff 515.5px,#a171ff 518.5px,#9067ff 521.5px,#9067ff 758.5px,#ae78ff 763.5px,#b27aff 765.5px,#b47bff 877.5px,#7555ff 897.5px,#3626ff 920.5px,#3223ee 921.5px,#2319a9 924.5px,#181174 926.5px,#120d56 927.5px,#0b0834 928.5px,#02020b 929.5px,#000 930.5px)"></i>
<i style="background:linear-gradient(90deg,#000 349.5px,#010104 350.5px,#0a072e 351.5px,#110c51 352.5px,#1d158b 354.5px,#2c20d4 357.5px,#3526ff 359.5px,#8460ff 387.5px,#b37aff 402.5px,#b079ff 515.5px,#a774ff 517.5px,#9369ff 520.5px,#9067ff 522.5px,#9067ff 758.5px,#9a6cff 760.5px,#ad77ff 763.5px,#b079ff 765.5px,#b17aff 878.5px,#6f50ff 899.5px,#3526ff 920.5px,#271cbd 923.5px,#171170 926.5px,#110c51 927.5px,#0a072e 928.5px,#010104 929.5px,#000 930.5px)"></i>
<i style="background:linear-gradient(90deg,#000 350.5px,#100b4c 352.5px,#1c1487 354.5px,#2b1fd1 357.5px,#3526fd 359.5px,#835fff 387.5px,#b179ff 401.5px,#af78ff 515.5px,#a673ff 517.5px,#9268ff 520.5px,#9067ff 534.5px,#9067ff 758.5px,#9268ff 759.5px,#ac77ff 763.5px,#af78ff 766.5px,#b179ff 878.5px,#6e50ff 899.5px,#3526fd 920.5px,#2118a1 924.5px,#16106b 926.5px,#100b4c 927.5px,#000 929.5px)"></i>
<i style="background:linear-gradient(90deg,#000 350.5px,#070520 351.5px,#0f0a46 352.5px,#1b1382 354.5px,#2b1fcd 357.5px,#3425fa 359.5px,#3727ff 360.5px,#8661ff 388.5px,#b079ff 401.5px,#ae78ff 515.5px,#ab76ff 516.5px,#9168ff 520.5px,#9067ff 758.5px,#9168ff 759.5px,#ab76ff 763.5px,#ae78ff 771.5px,#b079ff 878.5px,#7152ff 898.5px,#3727ff 919.5px,#3425fa 920.5px,#21179d 924.5px,#150f66 926.5px,#0f0a46 927.5px,#070520 928.5px,#000 929.5px)"></i>
<i style="background:linear-gradient(90deg,#000 350.5px,#050418 351.5px,#0d0a41 352.5px,#1a137e 354.5px,#2a1ec9 357.5px,#3325f6 359.5px,#3727ff 360.5px,#8661ff 388.5px,#af78ff 401.5px,#ab76ff 516.5px,#9168ff 520.5px,#9168ff 759.5px,#ab76ff 763.5px,#ad77ff 879.5px,#6a4dff 900.5px,#3727ff 919.5px,#3325f6 920.5px,#201798 924.5px,#140e61 926.5px,#0d0a41 927.5px,#050418 928.5px,#000 929.5px)"></i>
<i style="background:linear-gradient(90deg,#000 350.5px,#040311 351.5px,#0c093b 352.5px,#130e5c 353.5px,#1f1694 355.5px,#3224f3 359.5px,#3627ff 360.5px,#8561ff 388.5px,#ac77ff 400.5px,#aa75ff 516.5px,#9167ff 520.5px,#9167ff 759.5px,#aa75ff 763.5px,#ac77ff 879.5px,#6a4dff 900.5px,#3627ff 919.5px,#3224f3 920.5px,#1f1694 924.5px,#130e5c 926.5px,#0c093b 927.5px,#040311 928.5px,#000 929.5px)"></i>
<i style="background:linear-gradient(90deg,#000 350.5px,#02020b 351.5px,#0b0835 352.5px,#120d57 353.5px,#1e1590 355.5px,#2d20d9 358.5px,#3224f0 359.5px,#3627ff 360.5px,#8560ff 388.5px,#ac76ff 400.5px,#a875ff 516.5px,#9067ff 520.5px,#9067ff 759.5px,#a875ff 763.5px,#ac76ff 879.5px,#7051ff 898.5px,#3627ff 919.5px,#3224f0 920.5px,#2319aa 923.5px,#181175 925.5px,#120d57 926.5px,#0b0835 927.5px,#02020b 928.5px,#000 929.5px)"></i>
<i style="background:linear-gradient(90deg,#000 350.5px,#010104 351.5px,#0a072e 352.5px,#110c52 353.5px,#1d158c 355.5px,#2c20d5 358.5px,#3526ff 360.5px,#8560ff 388.5px,#ab76ff 400.5px,#a774ff 516.5px,#9067ff 520.5px,#9067ff 759.5px,#a774ff 763.5px,#ab76ff 879.5px,#7253ff 897.5px,#3526ff 919.5px,#2c20d5 921.5px,#1d158c 924.5px,#110c52 926.5px,#0a072e 927.5px,#010104 928.5px,#000 929.5px)"></i>
<i style="background:linear-gradient(90deg,#000 351.5px,#100b4c 353.5px,#1c1487 355.5px,#2c1fd2 358.5px,#3526ff 360.5px,#8460ff 388.5px,#a975ff 400.5px,#a673ff 516.5px,#9369ff 519.5px,#9067ff 521.5px,#9067ff 759.5px,#9a6dff 761.5px,#a673ff 763.5px,#a874ff 880.5px,#694cff 900.5px,#3526ff 919.5px,#2218a2 923.5px,#16106b 925.5px,#100b4c 926.5px,#000 928.5px)"></i>
<i style="background:linear-gradient(90deg,#000 351.5px,#070520 352.5px,#0f0b47 353.5px,#1b1483 355.5px,#2b1fce 358.5px,#3425fb 360.5px,#3a29ff 362.5px,#8762ff 389.5px,#a774ff 399.5px,#a573ff 516.5px,#9268ff 519.5px,#9067ff 566.5px,#9067ff 759.5px,#9268ff 760.5px,#a573ff 763.5px,#a774ff 880.5px,#6e50ff 898.5px,#3728ff 918.5px,#3425fb 919.5px,#21179d 923.5px,#150f67 925.5px,#0f0b47 926.5px,#070520 927.5px,#000 928.5px)"></i>
<i style="background:linear-gradient(90deg,#000 351.5px,#050418 352.5px,#0e0a41 353.5px,#1a137f 355.5px,#2a1ecb 358.5px,#3425f8 360.5px,#3727ff 361.5px,#835fff 388.5px,#a673ff 399.5px,#a472ff 516.5px,#9268ff 519.5px,#9167ff 759.5px,#9268ff 760.5px,#a472ff 763.5px,#a673ff 880.5px,#7152ff 897.5px,#3727ff 918.5px,#3425f8 919.5px,#201799 923.5px,#140f62 925.5px,#0e0a41 926.5px,#050418 927.5px,#000 928.5px)"></i>
<i style="background:linear-gradient(90deg,#000 351.5px,#040311 352.5px,#0c093b 353.5px,#130e5d 354.5px,#1f1695 356.5px,#3324f4 360.5px,#3627ff 361.5px,#835fff 388.5px,#a573ff 399.5px,#a372ff 516.5px,#9168ff 519.5px,#9168ff 760.5px,#a372ff 763.5px,#a372ff 881.5px,#513aff 908.5px,#3627ff 918.5px,#3324f4 919.5px,#1f1695 923.5px,#130e5d 925.5px,#0c093b 926.5px,#040311 927.5px,#000 928.5px)"></i>
<i style="background:linear-gradient(90deg,#000 351.5px,#02020b 352.5px,#0b0835 353.5px,#120d58 354.5px,#1e1691 356.5px,#2d21da 359.5px,#3224f1 360.5px,#3627ff 361.5px,#835fff 388.5px,#a372ff 398.5px,#a271ff 516.5px,#9168ff 519.5px,#9168ff 760.5px,#a271ff 763.5px,#a372ff 881.5px,#513aff 908.5px,#3627ff 918.5px,#3224f1 919.5px,#2319ab 922.5px,#181276 924.5px,#120d58 925.5px,#0b0835 926.5px,#02020b 927.5px,#000 928.5px)"></i>
<i style="background:linear-gradient(90deg,#000 351.5px,#010104 352.5px,#0a072f 353.5px,#110c52 354.5px,#1d158d 356.5px,#2d20d7 359.5px,#3123ed 360.5px,#3626ff 361.5px,#825eff 388.5px,#a271ff 398.5px,#a070ff 516.5px,#9167ff 519.5px,#9167ff 760.5px,#a070ff 763.5px,#a271ff 881.5px,#674bff 900.5px,#3626ff 918.5px,#3123ed 919.5px,#2319a7 922.5px,#171171 924.5px,#110c52 925.5px,#0a072f 926.5px,#010104 927.5px,#000 928.5px)"></i>
<i style="background:linear-gradient(90deg,#000 352.5px,#100b4d 354.5px,#1c1488 356.5px,#2c1fd3 359.5px,#3526ff 361.5px,#825eff 388.5px,#a171ff 398.5px,#9f6fff 516.5px,#9167ff 519.5px,#9167ff 760.5px,#9f6fff 763.5px,#a171ff 881.5px,#6f51ff 897.5px,#3526ff 918.5px,#271cbb 921.5px,#16106c 924.5px,#100b4d 925.5px,#000 927.5px)"></i>
<i style="background:linear-gradient(90deg,#000 352.5px,#070520 353.5px,#0f0b47 354.5px,#1b1484 356.5px,#2b1fcf 359.5px,#3526fd 361.5px,#4d37ff 370.5px,#9e6fff 397.5px,#9e6fff 516.5px,#9168ff 519.5px,#9168ff 760.5px,#9e6fff 763.5px,#9e6fff 882.5px,#4d37ff 909.5px,#3526fd 918.5px,#21189e 922.5px,#150f67 924.5px,#0f0b47 925.5px,#070520 926.5px,#000 927.5px)"></i>
<i style="background:linear-gradient(90deg,#000 352.5px,#050418 353.5px,#0e0a42 354.5px,#1a137f 356.5px,#2a1ecc 359.5px,#3425f9 361.5px,#3727ff 362.5px,#8460ff 389.5px,#9e6fff 397.5px,#9c6eff 516.5px,#9168ff 519.5px,#9369ff 761.5px,#9c6eff 763.5px,#9e6fff 882.5px,#4a35ff 910.5px,#3727ff 917.5px,#3425f9 918.5px,#20179a 922.5px,#140f62 924.5px,#0e0a42 925.5px,#050418 926.5px,#000 927.5px)"></i>
<i style="background:linear-gradient(90deg,#000 352.5px,#040311 353.5px,#0c093c 354.5px,#130e5d 355.5px,#1f1696 357.5px,#3325f6 361.5px,#3727ff 362.5px,#8460ff 389.5px,#9d6eff 397.5px,#9b6dff 516.5px,#9168ff 519.5px,#9268ff 761.5px,#9b6dff 763.5px,#9d6eff 882.5px,#6b4eff 898.5px,#3727ff 917.5px,#3325f6 918.5px,#1f1696 922.5px,#130e5d 924.5px,#0c093c 925.5px,#040311 926.5px,#000 927.5px)"></i>
<i style="background:linear-gradient(90deg,#000 352.5px,#02020b 353.5px,#0b0836 354.5px,#120d58 355.5px,#1e1692 357.5px,#2e21dc 360.5px,#3224f2 361.5px,#3627ff 362.5px,#835fff 389.5px,#9c6eff 397.5px,#986bff 517.5px,#9268ff 518.5px,#9268ff 761.5px,#9a6cff 763.5px,#9a6dff 883.5px,#4934ff 910.5px,#3627ff 917.5px,#3224f2 918.5px,#241aac 921.5px,#191276 923.5px,#120d58 924.5px,#0b0836 925.5px,#02020b 926.5px,#000 927.5px)"></i>
<i style="background:linear-gradient(90deg,#000 352.5px,#010104 353.5px,#0a072f 354.5px,#110c53 355.5px,#1d158d 357.5px,#2d20d8 360.5px,#3224ef 361.5px,#3627ff 362.5px,#835fff 389.5px,#9a6cff 396.5px,#976bff 517.5px,#9268ff 518.5px,#9268ff 761.5px,#986cff 763.5px,#9a6cff 883.5px,#4834ff 910.5px,#3627ff 917.5px,#3224ef 918.5px,#2319a8 921.5px,#181172 923.5px,#110c53 924.5px,#0a072f 925.5px,#010104 926.5px,#000 927.5px)"></i>
<i style="background:linear-gradient(90deg,#000 353.5px,#100c4d 355.5px,#1c1489 357.5px,#2c20d4 360.5px,#3526ff 362.5px,#835fff 389.5px,#996cff 396.5px,#966aff 517.5px,#9168ff 518.5px,#9168ff 761.5px,#976bff 763.5px,#996cff 883.5px,#4532ff 911.5px,#3526ff 917.5px,#2c20d4 919.5px,#1c1489 922.5px,#100c4d 924.5px,#000 926.5px)"></i>
<i style="background:linear-gradient(90deg,#000 353.5px,#070521 354.5px,#0f0b48 355.5px,#1c1485 357.5px,#2b1fd1 360.5px,#3526fe 362.5px,#825fff 389.5px,#986bff 396.5px,#956aff 517.5px,#9168ff 519.5px,#9168ff 761.5px,#966aff 764.5px,#986bff 883.5px,#3f2eff 913.5px,#3526fe 917.5px,#21189f 921.5px,#160f68 923.5px,#0f0b48 924.5px,#070521 925.5px,#000 926.5px)"></i>
<i style="background:linear-gradient(90deg,#000 353.5px,#050419 354.5px,#0e0a42 355.5px,#1b1380 357.5px,#2b1fcd 360.5px,#3425fb 362.5px,#3728ff 363.5px,#8561ff 390.5px,#966bff 396.5px,#9469ff 517.5px,#9168ff 751.5px,#956aff 793.5px,#956aff 884.5px,#4431ff 911.5px,#3728ff 916.5px,#3425fb 917.5px,#20179b 921.5px,#150f63 923.5px,#0e0a42 924.5px,#050419 925.5px,#000 926.5px)"></i>
<i style="background:linear-gradient(90deg,#000 353.5px,#040311 354.5px,#0d093c 355.5px,#140e5e 356.5px,#1f1797 358.5px,#3325f7 362.5px,#3727ff 363.5px,#8560ff 390.5px,#946aff 395.5px,#9268ff 761.5px,#946aff 884.5px,#412fff 912.5px,#3727ff 916.5px,#3325f7 917.5px,#1f1797 921.5px,#140e5e 923.5px,#0d093c 924.5px,#040311 925.5px,#000 926.5px)"></i>
<i style="background:linear-gradient(90deg,#000 353.5px,#02020b 354.5px,#0b0836 355.5px,#120d59 356.5px,#1e1693 358.5px,#2e21dd 361.5px,#3324f4 362.5px,#3627ff 363.5px,#8460ff 390.5px,#9469ff 395.5px,#9268ff 807.5px,#9469ff 884.5px,#3e2dff 913.5px,#3627ff 916.5px,#3324f4 917.5px,#241aad 920.5px,#191277 922.5px,#120d59 923.5px,#0b0836 924.5px,#02020b 925.5px,#000 926.5px)"></i>
<i style="background:linear-gradient(90deg,#000 353.5px,#010104 354.5px,#0a072f 355.5px,#110c53 356.5px,#1e158e 358.5px,#2d20d9 361.5px,#3224f0 362.5px,#3627ff 363.5px,#9268ff 395.5px,#9168ff 824.5px,#9167ff 885.5px,#412eff 912.5px,#3627ff 916.5px,#3224f0 917.5px,#2319a9 920.5px,#181172 922.5px,#110c53 923.5px,#0a072f 924.5px,#010104 925.5px,#000 926.5px)"></i>
<i style="background:linear-gradient(90deg,#000 354.5px,#100c4e 356.5px,#1d158a 358.5px,#2c20d6 361.5px,#3123ed 362.5px,#3626ff 363.5px,#835fff 390.5px,#9168ff 395.5px,#9067ff 826.5px,#9067ff 885.5px,#402eff 912.5px,#3626ff 916.5px,#3123ed 917.5px,#2219a4 920.5px,#17106e 922.5px,#100c4e 923.5px,#000 925.5px)"></i>
<i style="background:linear-gradient(90deg,#000 354.5px,#070521 355.5px,#0f0b48 356.5px,#1c1486 358.5px,#2c1fd2 361.5px,#3526ff 363.5px,#835fff 390.5px,#8f67ff 394.5px,#8f66ff 842.5px,#8f67ff 885.5px,#3a2aff 914.5px,#3526ff 916.5px,#271cba 919.5px,#161069 922.5px,#0f0b48 923.5px,#070521 924.5px,#000 925.5px)"></i>
<i style="background:linear-gradient(90deg,#000 354.5px,#050419 355.5px,#0e0a43 356.5px,#1b1381 358.5px,#2b1fce 361.5px,#3426fc 363.5px,#3d2cff 366.5px,#8e66ff 394.5px,#8d66ff 831.5px,#8c65ff 886.5px,#3d2cff 913.5px,#3426fc 916.5px,#20179c 920.5px,#150f64 922.5px,#0e0a43 923.5px,#050419 924.5px,#000 925.5px)"></i>
<i style="background:linear-gradient(90deg,#000 354.5px,#040312 355.5px,#0d093d 356.5px,#140e5f 357.5px,#201798 359.5px,#3425f9 363.5px,#3727ff 364.5px,#8561ff 391.5px,#8d65ff 394.5px,#8c65ff 834.5px,#8c65ff 886.5px,#3c2bff 913.5px,#3727ff 915.5px,#3425f9 916.5px,#201798 920.5px,#140e5f 922.5px,#0d093d 923.5px,#040312 924.5px,#000 925.5px)"></i>
<i style="background:linear-gradient(90deg,#000 354.5px,#02020c 355.5px,#0b0836 356.5px,#130d59 357.5px,#1f1694 359.5px,#2e21de 362.5px,#3325f5 363.5px,#3727ff 364.5px,#8561ff 391.5px,#8c65ff 394.5px,#8b64ff 836.5px,#8b64ff 886.5px,#3929ff 914.5px,#3727ff 915.5px,#3325f5 916.5px,#241aae 919.5px,#191278 921.5px,#130d59 922.5px,#0b0836 923.5px,#02020c 924.5px,#000 925.5px)"></i>
<i style="background:linear-gradient(90deg,#000 354.5px,#010104 355.5px,#0a0730 356.5px,#110c54 357.5px,#1e158f 359.5px,#2d21db 362.5px,#3224f2 363.5px,#3627ff 364.5px,#8560ff 391.5px,#8a64ff 394.5px,#8a63ff 839.5px,#8a64ff 886.5px,#3627ff 915.5px,#3224f2 916.5px,#2319aa 919.5px,#181173 921.5px,#110c54 922.5px,#0a0730 923.5px,#010104 924.5px,#000 925.5px)"></i>
<i style="background:linear-gradient(90deg,#000 355.5px,#100c4e 357.5px,#1d158b 359.5px,#2d20d7 362.5px,#3123ee 363.5px,#3626ff 364.5px,#8460ff 391.5px,#8963ff 394.5px,#8863ff 842.5px,#8862ff 887.5px,#3828ff 914.5px,#3626ff 915.5px,#3123ee 916.5px,#2219a6 919.5px,#17106e 921.5px,#100c4e 922.5px,#000 924.5px)"></i>
<i style="background:linear-gradient(90deg,#000 355.5px,#070521 356.5px,#0f0b49 357.5px,#1c1486 359.5px,#2c1fd3 362.5px,#3526ff 364.5px,#8460ff 391.5px,#8862ff 394.5px,#8762ff 844.5px,#8762ff 887.5px,#3828ff 914.5px,#3526ff 915.5px,#2c1fd3 917.5px,#1c1486 920.5px,#0f0b49 922.5px,#070521 923.5px,#000 924.5px)"></i>
<i style="background:linear-gradient(90deg,#000 355.5px,#050419 356.5px,#0e0a43 357.5px,#1b1382 359.5px,#2b1fcf 362.5px,#3526fe 364.5px,#8661ff 392.5px,#8661ff 857.5px,#8661ff 887.5px,#3526fe 915.5px,#21179d 919.5px,#150f64 921.5px,#0e0a43 922.5px,#050419 923.5px,#000 924.5px)"></i>
<i style="background:linear-gradient(90deg,#000 355.5px,#040312 356.5px,#0d093d 357.5px,#140e5f 358.5px,#201799 360.5px,#3425fa 364.5px,#3728ff 365.5px,#8561ff 392.5px,#8460ff 848.5px,#835fff 888.5px,#3728ff 914.5px,#3425fa 915.5px,#201799 919.5px,#140e5f 921.5px,#0d093d 922.5px,#040312 923.5px,#000 924.5px)"></i>
<i style="background:linear-gradient(90deg,#000 355.5px,#02020c 356.5px,#0b0837 357.5px,#130d5a 358.5px,#1f1695 360.5px,#2e21e0 363.5px,#3325f7 364.5px,#3727ff 365.5px,#8460ff 392.5px,#835fff 851.5px,#835fff 888.5px,#3727ff 914.5px,#3325f7 915.5px,#241aaf 918.5px,#191278 920.5px,#130d5a 921.5px,#0b0837 922.5px,#02020c 923.5px,#000 924.5px)"></i>
<i style="background:linear-gradient(90deg,#000 355.5px,#010105 356.5px,#0a0730 357.5px,#120d54 358.5px,#1e1590 360.5px,#2e21dc 363.5px,#3324f3 364.5px,#3627ff 365.5px,#825eff 391.5px,#825eff 877.5px,#825eff 888.5px,#3627ff 914.5px,#3324f3 915.5px,#2319ab 918.5px,#181174 920.5px,#120d54 921.5px,#0a0730 922.5px,#010105 923.5px,#000 924.5px)"></i>
<i style="background:linear-gradient(90deg,#000 356.5px,#100c4f 358.5px,#1d158c 360.5px,#2d20d8 363.5px,#3224f0 364.5px,#3627ff 365.5px,#815eff 391.5px,#815dff 859.5px,#815eff 888.5px,#3627ff 914.5px,#3224f0 915.5px,#2319a7 918.5px,#17116f 920.5px,#100c4f 921.5px,#000 923.5px)"></i>
<i style="background:linear-gradient(90deg,#000 356.5px,#070522 357.5px,#0f0b49 358.5px,#1c1487 360.5px,#2c20d4 363.5px,#3123ec 364.5px,#3526ff 365.5px,#805dff 391.5px,#7f5cff 859.5px,#7e5cff 889.5px,#3526ff 914.5px,#3123ec 915.5px,#2218a2 918.5px,#16106a 920.5px,#0f0b49 921.5px,#070522 922.5px,#000 923.5px)"></i>
<i style="background:linear-gradient(90deg,#000 356.5px,#05041a 357.5px,#0e0a44 358.5px,#1b1383 360.5px,#2b1fd1 363.5px,#3526ff 365.5px,#7e5bff 390.5px,#7e5bff 889.5px,#3526ff 914.5px,#261bb8 917.5px,#1b1383 919.5px,#0e0a44 921.5px,#05041a 922.5px,#000 923.5px)"></i>
<i style="background:linear-gradient(90deg,#000 356.5px,#040312 357.5px,#0d093e 358.5px,#140e60 359.5px,#20179a 361.5px,#3426fc 365.5px,#3a2aff 367.5px,#7d5bff 390.5px,#7d5bff 876.5px,#7d5bff 889.5px,#3728ff 913.5px,#3426fc 914.5px,#20179a 918.5px,#140e60 920.5px,#0d093e 921.5px,#040312 922.5px,#000 923.5px)"></i>
<i style="background:linear-gradient(90deg,#000 356.5px,#03020c 357.5px,#0c0837 358.5px,#130e5b 359.5px,#1f1696 361.5px,#2f22e1 364.5px,#3425f8 365.5px,#3727ff 366.5px,#7c5aff 390.5px,#7b5aff 869.5px,#7a58ff 890.5px,#3727ff 913.5px,#3425f8 914.5px,#251ab0 917.5px,#191279 919.5px,#130e5b 920.5px,#0c0837 921.5px,#03020c 922.5px,#000 923.5px)"></i>
<i style="background:linear-gradient(90deg,#000 356.5px,#010105 357.5px,#0a0731 358.5px,#120d55 359.5px,#1e1691 361.5px,#2e21dd 364.5px,#3324f5 365.5px,#3627ff 366.5px,#7a59ff 390.5px,#7a59ff 872.5px,#7a58ff 890.5px,#3627ff 913.5px,#3324f5 914.5px,#241aac 917.5px,#181175 919.5px,#120d55 920.5px,#0a0731 921.5px,#010105 922.5px,#000 923.5px)"></i>
<i style="background:linear-gradient(90deg,#000 357.5px,#110c4f 359.5px,#1d158d 361.5px,#2d20da 364.5px,#3224f1 365.5px,#3627ff 366.5px,#7958ff 389.5px,#7958ff 890.5px,#3627ff 913.5px,#3224f1 914.5px,#2319a8 917.5px,#171170 919.5px,#110c4f 920.5px,#000 922.5px)"></i>
<i style="background:linear-gradient(90deg,#000 357.5px,#070522 358.5px,#0f0b4a 359.5px,#1c1488 361.5px,#2c20d6 364.5px,#3123ed 365.5px,#3626ff 366.5px,#7857ff 389.5px,#7857ff 880.5px,#7857ff 890.5px,#3626ff 913.5px,#3123ed 914.5px,#2218a3 917.5px,#16106b 919.5px,#0f0b4a 920.5px,#070522 921.5px,#000 922.5px)"></i>
<i style="background:linear-gradient(90deg,#000 357.5px,#05041a 358.5px,#0e0a44 359.5px,#1b1484 361.5px,#2c1fd2 364.5px,#3526ff 366.5px,#7656ff 389.5px,#7656ff 883.5px,#7555ff 891.5px,#3526ff 913.5px,#2c1fd2 915.5px,#1b1484 918.5px,#0e0a44 920.5px,#05041a 921.5px,#000 922.5px)"></i>
<i style="background:linear-gradient(90deg,#000 357.5px,#040312 358.5px,#0d093e 359.5px,#140e60 360.5px,#20179b 362.5px,#3526fd 366.5px,#7555ff 388.5px,#7555ff 891.5px,#3526fd 913.5px,#20179b 917.5px,#140e60 919.5px,#0d093e 920.5px,#040312 921.5px,#000 922.5px)"></i>
<i style="background:linear-gradient(90deg,#000 357.5px,#03020c 358.5px,#0c0838 359.5px,#130e5b 360.5px,#1f1696 362.5px,#2f22e2 365.5px,#3425fa 366.5px,#3728ff 367.5px,#7454ff 388.5px,#7454ff 891.5px,#3728ff 912.5px,#3425fa 913.5px,#251ab1 916.5px,#19127a 918.5px,#130e5b 919.5px,#0c0838 920.5px,#03020c 921.5px,#000 922.5px)"></i>
<i style="background:linear-gradient(90deg,#000 357.5px,#010105 358.5px,#0a0731 359.5px,#120d56 360.5px,#1e1692 362.5px,#2e21df 365.5px,#3325f6 366.5px,#3727ff 367.5px,#7353ff 388.5px,#7152ff 892.5px,#3727ff 912.5px,#3325f6 913.5px,#241aad 916.5px,#181175 918.5px,#120d56 919.5px,#0a0731 920.5px,#010105 921.5px,#000 922.5px)"></i>
<i style="background:linear-gradient(90deg,#000 358.5px,#09062a 359.5px,#110c50 360.5px,#1d158d 362.5px,#2d21db 365.5px,#3224f2 366.5px,#3627ff 367.5px,#7152ff 388.5px,#7051ff 892.5px,#3627ff 912.5px,#3224f2 913.5px,#2319a9 916.5px,#171170 918.5px,#110c50 919.5px,#09062a 920.5px,#000 921.5px)"></i>
<i style="background:linear-gradient(90deg,#000 358.5px,#070522 359.5px,#0f0b4a 360.5px,#1c1489 362.5px,#2d20d7 365.5px,#3224ef 366.5px,#3627ff 367.5px,#7051ff 387.5px,#7051ff 892.5px,#3627ff 912.5px,#3224ef 913.5px,#2218a4 916.5px,#16106b 918.5px,#0f0b4a 919.5px,#070522 920.5px,#000 921.5px)"></i>
<i style="background:linear-gradient(90deg,#000 358.5px,#05041a 359.5px,#0e0a45 360.5px,#1c1484 362.5px,#2c1fd3 365.5px,#3123eb 366.5px,#3526ff 367.5px,#6f50ff 387.5px,#6f50ff 892.5px,#3526ff 912.5px,#3123eb 913.5px,#2118a0 916.5px,#150f66 918.5px,#0e0a45 919.5px,#05041a 920.5px,#000 921.5px)"></i>
<i style="background:linear-gradient(90deg,#000 358.5px,#040312 359.5px,#0d093e 360.5px,#140e61 361.5px,#20179c 363.5px,#3526ff 367.5px,#6d4fff 387.5px,#6c4eff 893.5px,#3526ff 912.5px,#20179c 916.5px,#140e61 918.5px,#0d093e 919.5px,#040312 920.5px,#000 921.5px)"></i>
<i style="background:linear-gradient(90deg,#000 358.5px,#03020d 359.5px,#0c0838 360.5px,#130e5c 361.5px,#1f1797 363.5px,#2f22e4 366.5px,#3425fb 367.5px,#3a2aff 369.5px,#6b4eff 386.5px,#6b4eff 893.5px,#3728ff 911.5px,#3425fb 912.5px,#251bb2 915.5px,#1a127b 917.5px,#130e5c 918.5px,#0c0838 919.5px,#03020d 920.5px,#000 921.5px)"></i>
<i style="background:linear-gradient(90deg,#000 358.5px,#010105 359.5px,#0a0731 360.5px,#120d56 361.5px,#1f1693 363.5px,#2f21e0 366.5px,#3325f8 367.5px,#3727ff 368.5px,#6b4dff 386.5px,#6b4dff 893.5px,#3727ff 911.5px,#3325f8 912.5px,#241aae 915.5px,#191276 917.5px,#120d56 918.5px,#0a0731 919.5px,#010105 920.5px,#000 921.5px)"></i>
<i style="background:linear-gradient(90deg,#000 359.5px,#09062a 360.5px,#110c51 361.5px,#1e158e 363.5px,#2e21dc 366.5px,#3324f4 367.5px,#3627ff 368.5px,#694cff 386.5px,#684bff 894.5px,#3627ff 911.5px,#3324f4 912.5px,#2319aa 915.5px,#181171 917.5px,#110c51 918.5px,#09062a 919.5px,#000 920.5px)"></i>
<i style="background:linear-gradient(90deg,#000 359.5px,#070523 360.5px,#100b4b 361.5px,#1d158a 363.5px,#2d20d8 366.5px,#3224f0 367.5px,#3627ff 368.5px,#684bff 386.5px,#674bff 894.5px,#3627ff 911.5px,#3224f0 912.5px,#2219a5 915.5px,#16106c 917.5px,#100b4b 918.5px,#070523 919.5px,#000 920.5px)"></i>
<i style="background:linear-gradient(90deg,#000 359.5px,#06041a 360.5px,#0e0a45 361.5px,#1c1485 363.5px,#2c20d4 366.5px,#3123ed 367.5px,#3626ff 368.5px,#664aff 385.5px,#664aff 894.5px,#3626ff 911.5px,#3123ed 912.5px,#2118a1 915.5px,#150f67 917.5px,#0e0a45 918.5px,#06041a 919.5px,#000 920.5px)"></i>
<i style="background:linear-gradient(90deg,#000 359.5px,#040313 360.5px,#0d093f 361.5px,#1b1380 363.5px,#2b1fd1 366.5px,#3526ff 368.5px,#6549ff 385.5px,#6549ff 894.5px,#3526ff 911.5px,#261bb7 914.5px,#1b1380 916.5px,#0d093f 918.5px,#040313 919.5px,#000 920.5px)"></i>
<i style="background:linear-gradient(90deg,#000 359.5px,#03020d 360.5px,#0c0839 361.5px,#130e5d 362.5px,#201798 364.5px,#3022e5 367.5px,#3526fd 368.5px,#513bff 378.5px,#6449ff 385.5px,#6348ff 895.5px,#3728ff 910.5px,#3526fd 911.5px,#251bb3 914.5px,#1a127c 916.5px,#130e5d 917.5px,#0c0839 918.5px,#03020d 919.5px,#000 920.5px)"></i>
<i style="background:linear-gradient(90deg,#000 359.5px,#010105 360.5px,#0a0732 361.5px,#120d57 362.5px,#1f1694 364.5px,#2f22e1 367.5px,#3425f9 368.5px,#3728ff 369.5px,#6247ff 384.5px,#6247ff 895.5px,#3728ff 910.5px,#3425f9 911.5px,#241aaf 914.5px,#191277 916.5px,#120d57 917.5px,#0a0732 918.5px,#010105 919.5px,#000 920.5px)"></i>
<i style="background:linear-gradient(90deg,#000 360.5px,#09062b 361.5px,#110c51 362.5px,#1e158f 364.5px,#2e21de 367.5px,#3325f5 368.5px,#3727ff 369.5px,#6147ff 384.5px,#6147ff 895.5px,#3727ff 910.5px,#3325f5 911.5px,#2319ab 914.5px,#181172 916.5px,#110c51 917.5px,#09062b 918.5px,#000 919.5px)"></i>
<i style="background:linear-gradient(90deg,#000 360.5px,#070523 361.5px,#100b4b 362.5px,#1d158b 364.5px,#2d20da 367.5px,#3224f2 368.5px,#3627ff 369.5px,#6046ff 384.5px,#5f45ff 896.5px,#3627ff 910.5px,#3224f2 911.5px,#2319a6 914.5px,#17106d 916.5px,#100b4b 917.5px,#070523 918.5px,#000 919.5px)"></i>
<i style="background:linear-gradient(90deg,#000 360.5px,#06041b 361.5px,#0e0a46 362.5px,#1c1486 364.5px,#2c20d6 367.5px,#3123ee 368.5px,#3627ff 369.5px,#5e44ff 383.5px,#5e44ff 896.5px,#3627ff 910.5px,#3123ee 911.5px,#2218a2 914.5px,#160f68 916.5px,#0e0a46 917.5px,#06041b 918.5px,#000 919.5px)"></i>
<i style="background:linear-gradient(90deg,#000 360.5px,#040313 361.5px,#0d093f 362.5px,#1b1381 364.5px,#2c1fd2 367.5px,#3526ff 369.5px,#5d44ff 383.5px,#5d44ff 896.5px,#3526ff 910.5px,#2c1fd2 912.5px,#1b1381 915.5px,#0d093f 917.5px,#040313 918.5px,#000 919.5px)"></i>
<i style="background:linear-gradient(90deg,#000 360.5px,#03020d 361.5px,#0c0939 362.5px,#130e5d 363.5px,#201799 365.5px,#3022e7 368.5px,#3526fe 369.5px,#5c43ff 383.5px,#5a41ff 897.5px,#3526fe 910.5px,#251bb4 913.5px,#1a137c 915.5px,#130e5d 916.5px,#0c0939 917.5px,#03020d 918.5px,#000 919.5px)"></i>
<i style="background:linear-gradient(90deg,#000 360.5px,#010105 361.5px,#0a0732 362.5px,#120d58 363.5px,#1f1695 365.5px,#2f22e3 368.5px,#3425fb 369.5px,#3728ff 370.5px,#5b42ff 383.5px,#5a41ff 897.5px,#3728ff 909.5px,#3425fb 910.5px,#251ab0 913.5px,#191278 915.5px,#120d58 916.5px,#0a0732 917.5px,#010105 918.5px,#000 919.5px)"></i>
<i style="background:linear-gradient(90deg,#000 361.5px,#09062b 362.5px,#110c52 363.5px,#1e1590 365.5px,#2e21df 368.5px,#3325f7 369.5px,#3727ff 370.5px,#5941ff 382.5px,#5941ff 897.5px,#3727ff 909.5px,#3325f7 910.5px,#241aac 913.5px,#181173 915.5px,#110c52 916.5px,#09062b 917.5px,#000 918.5px)"></i>
<i style="background:linear-gradient(90deg,#000 361.5px,#070523 362.5px,#100b4c 363.5px,#1d158c 365.5px,#2e21db 368.5px,#3324f3 369.5px,#3627ff 370.5px,#5840ff 382.5px,#5840ff 897.5px,#3627ff 909.5px,#3324f3 910.5px,#2319a8 913.5px,#17106e 915.5px,#100b4c 916.5px,#070523 917.5px,#000 918.5px)"></i>
<i style="background:linear-gradient(90deg,#000 361.5px,#06041b 362.5px,#0f0a46 363.5px,#1c1487 365.5px,#2d20d7 368.5px,#3224f0 369.5px,#3627ff 370.5px,#573fff 382.5px,#563eff 898.5px,#3627ff 909.5px,#3224f0 910.5px,#2218a3 913.5px,#161068 915.5px,#0f0a46 916.5px,#06041b 917.5px,#000 918.5px)"></i>
<i style="background:linear-gradient(90deg,#000 361.5px,#040313 362.5px,#0d0a40 363.5px,#1b1382 365.5px,#2c1fd3 368.5px,#3123ec 369.5px,#3626ff 370.5px,#553eff 381.5px,#553eff 898.5px,#3626ff 909.5px,#3123ec 910.5px,#21189f 913.5px,#150f63 915.5px,#0d0a40 916.5px,#040313 917.5px,#000 918.5px)"></i>
<i style="background:linear-gradient(90deg,#000 361.5px,#03020d 362.5px,#0c0939 363.5px,#130e5e 364.5px,#20179a 366.5px,#3023e8 369.5px,#3526ff 370.5px,#543dff 381.5px,#543dff 898.5px,#3526ff 909.5px,#261bb5 912.5px,#1a137d 914.5px,#130e5e 915.5px,#0c0939 916.5px,#03020d 917.5px,#000 918.5px)"></i>
<i style="background:linear-gradient(90deg,#000 361.5px,#010106 362.5px,#0b0833 363.5px,#120d58 364.5px,#1f1696 366.5px,#2f22e4 369.5px,#3426fc 370.5px,#3d2cff 373.5px,#533cff 381.5px,#513bff 899.5px,#3728ff 908.5px,#3426fc 909.5px,#251ab1 912.5px,#191278 914.5px,#120d58 915.5px,#0b0833 916.5px,#010106 917.5px,#000 918.5px)"></i>
<i style="background:linear-gradient(90deg,#000 362.5px,#09062c 363.5px,#110c52 364.5px,#1e1691 366.5px,#2f21e0 369.5px,#3425f9 370.5px,#3727ff 371.5px,#523bff 381.5px,#513bff 899.5px,#3727ff 908.5px,#3425f9 909.5px,#241aad 912.5px,#181173 914.5px,#110c52 915.5px,#09062c 916.5px,#000 917.5px)"></i>
<i style="background:linear-gradient(90deg,#000 362.5px,#070524 363.5px,#100b4c 364.5px,#1d158c 366.5px,#2e21dc 369.5px,#3324f5 370.5px,#3727ff 371.5px,#503aff 380.5px,#503aff 899.5px,#3727ff 908.5px,#3324f5 909.5px,#2319a9 912.5px,#17106e 914.5px,#100b4c 915.5px,#070524 916.5px,#000 917.5px)"></i>
<i style="background:linear-gradient(90deg,#000 362.5px,#06041b 363.5px,#0f0b47 364.5px,#1c1488 366.5px,#2d20d9 369.5px,#3224f1 370.5px,#3627ff 371.5px,#4f39ff 380.5px,#4f39ff 899.5px,#3627ff 908.5px,#3224f1 909.5px,#2218a4 912.5px,#161069 914.5px,#0f0b47 915.5px,#06041b 916.5px,#000 917.5px)"></i>
<i style="background:linear-gradient(90deg,#000 362.5px,#040313 363.5px,#0d0a40 364.5px,#1b1483 366.5px,#2c20d5 369.5px,#3123ed 370.5px,#3627ff 371.5px,#4e38ff 380.5px,#4d37ff 900.5px,#3627ff 908.5px,#3123ed 909.5px,#2118a0 912.5px,#150f64 914.5px,#0d0a40 915.5px,#040313 916.5px,#000 917.5px)"></i>
<i style="background:linear-gradient(90deg,#000 362.5px,#03020e 363.5px,#0c093a 364.5px,#140e5e 365.5px,#20179b 367.5px,#3123e9 370.5px,#3526ff 371.5px,#4d37ff 380.5px,#4c37ff 900.5px,#3526ff 908.5px,#2b1fd1 910.5px,#1a137e 913.5px,#140e5e 914.5px,#0c093a 915.5px,#03020e 916.5px,#000 917.5px)"></i>
<i style="background:linear-gradient(90deg,#000 362.5px,#010106 363.5px,#0b0833 364.5px,#120d59 365.5px,#1f1697 367.5px,#3022e6 370.5px,#3526fe 371.5px,#4b36ff 379.5px,#4b36ff 900.5px,#3526fe 908.5px,#251bb2 911.5px,#191279 913.5px,#120d59 914.5px,#0b0833 915.5px,#010106 916.5px,#000 917.5px)"></i>
<i style="background:linear-gradient(90deg,#000 363.5px,#09072c 364.5px,#110c53 365.5px,#1e1692 367.5px,#2f22e2 370.5px,#3425fa 371.5px,#3728ff 372.5px,#4a36ff 379.5px,#4934ff 901.5px,#3728ff 907.5px,#3425fa 908.5px,#241aae 911.5px,#181174 913.5px,#110c53 914.5px,#09072c 915.5px,#000 916.5px)"></i>
<i style="background:linear-gradient(90deg,#000 363.5px,#070524 364.5px,#100b4d 365.5px,#1d158d 367.5px,#2e21de 370.5px,#3325f6 371.5px,#3727ff 372.5px,#4935ff 379.5px,#4834ff 901.5px,#3727ff 907.5px,#3325f6 908.5px,#2319aa 911.5px,#17116f 913.5px,#100b4d 914.5px,#070524 915.5px,#000 916.5px)"></i>
<i style="background:linear-gradient(90deg,#000 363.5px,#06041c 364.5px,#0f0b47 365.5px,#1c1489 367.5px,#2d20da 370.5px,#3224f3 371.5px,#3627ff 372.5px,#4733ff 378.5px,#4733ff 901.5px,#3627ff 907.5px,#3224f3 908.5px,#2219a5 911.5px,#16106a 913.5px,#0f0b47 914.5px,#06041c 915.5px,#000 916.5px)"></i>
<i style="background:linear-gradient(90deg,#000 363.5px,#040313 364.5px,#0d0a41 365.5px,#1b1484 367.5px,#2c20d6 370.5px,#3224ef 371.5px,#3627ff 372.5px,#4633ff 378.5px,#4633ff 901.5px,#3627ff 907.5px,#3224ef 908.5px,#2118a1 911.5px,#150f64 913.5px,#0d0a41 914.5px,#040313 915.5px,#000 916.5px)"></i>
<i style="background:linear-gradient(90deg,#000 363.5px,#03020e 364.5px,#0c093a 365.5px,#140e5f 366.5px,#20179c 368.5px,#3123eb 371.5px,#3526ff 372.5px,#4532ff 378.5px,#4431ff 902.5px,#3526ff 907.5px,#3123eb 908.5px,#20179c 911.5px,#140e5f 913.5px,#0c093a 914.5px,#03020e 915.5px,#000 916.5px)"></i>
<i style="background:linear-gradient(90deg,#000 363.5px,#010106 364.5px,#0b0834 365.5px,#130d59 366.5px,#201798 368.5px,#3022e7 371.5px,#3526ff 372.5px,#4431ff 378.5px,#4330ff 902.5px,#3526ff 907.5px,#251bb3 910.5px,#19127a 912.5px,#130d59 913.5px,#0b0834 914.5px,#010106 915.5px,#000 916.5px)"></i>
<i style="background:linear-gradient(90deg,#000 364.5px,#09072c 365.5px,#110c54 366.5px,#1f1693 368.5px,#2f22e3 371.5px,#3426fc 372.5px,#3a2aff 374.5px,#4330ff 378.5px,#4230ff 902.5px,#3728ff 906.5px,#3426fc 907.5px,#241aaf 910.5px,#181175 912.5px,#110c54 913.5px,#09072c 914.5px,#000 915.5px)"></i>
<i style="background:linear-gradient(90deg,#000 364.5px,#080524 365.5px,#100c4e 366.5px,#1e158e 368.5px,#2e21df 371.5px,#3425f8 372.5px,#3727ff 373.5px,#412fff 377.5px,#402eff 903.5px,#3727ff 906.5px,#3425f8 907.5px,#2319ab 910.5px,#171170 912.5px,#100c4e 913.5px,#080524 914.5px,#000 915.5px)"></i>
<i style="background:linear-gradient(90deg,#000 364.5px,#06041c 365.5px,#0f0b48 366.5px,#1d158a 368.5px,#2e21db 371.5px,#3324f4 372.5px,#3727ff 373.5px,#402eff 377.5px,#3f2dff 903.5px,#3727ff 906.5px,#3324f4 907.5px,#2319a6 910.5px,#16106b 912.5px,#0f0b48 913.5px,#06041c 914.5px,#000 915.5px)"></i>
<i style="background:linear-gradient(90deg,#000 364.5px,#040314 365.5px,#0e0a41 366.5px,#1c1485 368.5px,#2d20d7 371.5px,#3224f0 372.5px,#3627ff 373.5px,#3f2dff 377.5px,#3e2dff 903.5px,#3627ff 906.5px,#3224f0 907.5px,#2218a2 910.5px,#150f65 912.5px,#0e0a41 913.5px,#040314 914.5px,#000 915.5px)"></i>
<i style="background:linear-gradient(90deg,#000 364.5px,#03020e 365.5px,#0c093b 366.5px,#140e60 367.5px,#21179d 369.5px,#3123ec 372.5px,#3627ff 373.5px,#3d2cff 377.5px,#3d2cff 903.5px,#3627ff 906.5px,#3123ec 907.5px,#21179d 910.5px,#140e60 912.5px,#0c093b 913.5px,#03020e 914.5px,#000 915.5px)"></i>
<i style="background:linear-gradient(90deg,#000 364.5px,#010106 365.5px,#0b0834 366.5px,#130d5a 367.5px,#201799 369.5px,#3023e9 372.5px,#3526ff 373.5px,#3c2bff 376.5px,#3b2aff 904.5px,#3526ff 906.5px,#2b1fcf 908.5px,#1a127b 911.5px,#130d5a 912.5px,#0b0834 913.5px,#010106 914.5px,#000 915.5px)"></i>
<i style="background:linear-gradient(90deg,#000 365.5px,#09072d 366.5px,#110d54 367.5px,#1f1694 369.5px,#3022e5 372.5px,#3526fd 373.5px,#3b2aff 376.5px,#3a2aff 904.5px,#3526fd 906.5px,#251ab0 909.5px,#181276 911.5px,#110d54 912.5px,#09072d 913.5px,#000 914.5px)"></i>
<i style="background:linear-gradient(90deg,#000 365.5px,#080525 366.5px,#100c4e 367.5px,#1e158f 369.5px,#2f21e1 372.5px,#3425f9 373.5px,#3728ff 374.5px,#3a29ff 382.5px,#3929ff 904.5px,#3728ff 905.5px,#3425f9 906.5px,#241aac 909.5px,#171171 911.5px,#100c4e 912.5px,#080525 913.5px,#000 914.5px)"></i>
<i style="background:linear-gradient(90deg,#000 365.5px,#06041c 366.5px,#0f0b48 367.5px,#1d158b 369.5px,#2e21dd 372.5px,#3325f6 373.5px,#3727ff 374.5px,#3727ff 905.5px,#3325f6 906.5px,#2319a7 909.5px,#16106b 911.5px,#0f0b48 912.5px,#06041c 913.5px,#000 914.5px)"></i>
<i style="background:linear-gradient(90deg,#000 365.5px,#040314 366.5px,#0e0a42 367.5px,#1c1486 369.5px,#2d20d9 372.5px,#3224f2 373.5px,#3627ff 374.5px,#3627ff 905.5px,#3224f2 906.5px,#2218a3 909.5px,#150f66 911.5px,#0e0a42 912.5px,#040314 913.5px,#000 914.5px)"></i>
<i style="background:linear-gradient(90deg,#000 365.5px,#03020e 366.5px,#0c093b 367.5px,#140e60 368.5px,#21189e 370.5px,#3123ee 373.5px,#3526ff 374.5px,#3526ff 905.5px,#3123ee 906.5px,#21189e 909.5px,#140e60 911.5px,#0c093b 912.5px,#03020e 913.5px,#000 914.5px)"></i>
<i style="background:linear-gradient(90deg,#000 365.5px,#010106 366.5px,#0b0834 367.5px,#130e5b 368.5px,#20179a 370.5px,#3123ea 373.5px,#3425fb 374.5px,#3325f7 720.5px,#3425fb 905.5px,#3123ea 906.5px,#20179a 909.5px,#130e5b 911.5px,#0b0834 912.5px,#010106 913.5px,#000 914.5px)"></i>
<i style="background:linear-gradient(90deg,#000 366.5px,#09072d 367.5px,#120d55 368.5px,#1f1695 370.5px,#3022e6 373.5px,#3224f0 374.5px,#3123ec 730.5px,#3224f0 905.5px,#3022e6 906.5px,#1f1695 909.5px,#120d55 911.5px,#09072d 912.5px,#000 913.5px)"></i>
<i style="background:linear-gradient(90deg,#000 366.5px,#080625 367.5px,#100c4f 368.5px,#1e1590 370.5px,#2a1ec8 372.5px,#2f21e0 373.5px,#3022e5 374.5px,#2f22e1 736.5px,#3022e5 905.5px,#2f21e0 906.5px,#241aad 908.5px,#181171 910.5px,#100c4f 911.5px,#080625 912.5px,#000 913.5px)"></i>
<i style="background:linear-gradient(90deg,#000 366.5px,#06041d 367.5px,#0f0b49 368.5px,#1d158b 370.5px,#291dc4 372.5px,#2d20d8 373.5px,#2d20d6 780.5px,#2d20d8 906.5px,#291dc4 907.5px,#1d158b 909.5px,#0f0b49 911.5px,#06041d 912.5px,#000 913.5px)"></i>
<i style="background:linear-gradient(90deg,#000 366.5px,#040314 367.5px,#0e0a43 368.5px,#1c1487 370.5px,#281dc0 372.5px,#2b1fce 373.5px,#2a1ecb 758.5px,#2b1fce 906.5px,#281dc0 907.5px,#1c1487 909.5px,#0e0a43 911.5px,#040314 912.5px,#000 913.5px)"></i>
<i style="background:linear-gradient(90deg,#000 366.5px,#03020f 367.5px,#0c093c 368.5px,#140e61 369.5px,#21189f 371.5px,#271cbb 372.5px,#281dc2 373.5px,#281cbf 768.5px,#281dc2 906.5px,#271cbb 907.5px,#1b1382 909.5px,#140e61 910.5px,#0c093c 911.5px,#03020f 912.5px,#000 913.5px)"></i>
<i style="background:linear-gradient(90deg,#000 366.5px,#010107 367.5px,#0b0835 368.5px,#130e5c 369.5px,#20179b 371.5px,#251bb3 372.5px,#261bb5 375.5px,#251bb3 781.5px,#261bb6 906.5px,#251bb3 907.5px,#20179b 908.5px,#130e5c 910.5px,#0b0835 911.5px,#010107 912.5px,#000 913.5px)"></i>
<i style="background:linear-gradient(90deg,#000 367.5px,#09072d 368.5px,#120d55 369.5px,#1f1696 371.5px,#2319a9 372.5px,#2319a7 792.5px,#2319a9 907.5px,#1f1696 908.5px,#120d55 910.5px,#09072d 911.5px,#000 912.5px)"></i>
<i style="background:linear-gradient(90deg,#000 367.5px,#080626 368.5px,#100c4f 369.5px,#1e1691 371.5px,#20179c 372.5px,#20179a 814.5px,#20179c 907.5px,#1e1691 908.5px,#100c4f 910.5px,#080626 911.5px,#000 912.5px)"></i>
<i style="background:linear-gradient(90deg,#000 367.5px,#06041d 368.5px,#0f0b49 369.5px,#17106d 370.5px,#1d158a 371.5px,#1e158f 372.5px,#1d158d 831.5px,#1e158f 907.5px,#1d158a 908.5px,#17106d 909.5px,#0f0b49 910.5px,#06041d 911.5px,#000 912.5px)"></i>
<i style="background:linear-gradient(90deg,#000 367.5px,#040314 368.5px,#0e0a43 369.5px,#150f67 370.5px,#1b1380 371.5px,#1b1381 900.5px,#1b1380 908.5px,#150f67 909.5px,#0e0a43 910.5px,#040314 911.5px,#000 912.5px)"></i>
<i style="background:linear-gradient(90deg,#000 367.5px,#03020f 368.5px,#0d093c 369.5px,#140f62 370.5px,#181173 371.5px,#181172 891.5px,#181173 908.5px,#140f62 909.5px,#0d093c 910.5px,#03020f 911.5px,#000 912.5px)"></i>
<i style="background:linear-gradient(90deg,#000 367.5px,#010107 368.5px,#0b0835 369.5px,#130e5b 370.5px,#150f63 371.5px,#150f63 908.5px,#130e5b 909.5px,#0b0835 910.5px,#010107 911.5px,#000 912.5px)"></i>
<i style="background:linear-gradient(90deg,#000 368.5px,#0a072e 369.5px,#110c50 370.5px,#110c53 372.5px,#110c53 908.5px,#110c50 909.5px,#0a072e 910.5px,#000 911.5px)"></i>
<i style="background:linear-gradient(90deg,#000 368.5px,#080626 369.5px,#0e0a42 370.5px,#0e0a42 909.5px,#080626 910.5px,#000 911.5px)"></i>
<i style="background:linear-gradient(90deg,#000 368.5px,#06041d 369.5px,#0a072f 370.5px,#0a072f 909.5px,#06041d 910.5px,#000 911.5px)"></i>
<i style="background:linear-gradient(90deg,#000 368.5px,#03020e 369.5px,#050317 370.5px,#050317 909.5px,#03020e 910.5px,#000 911.5px)"></i>
<i></i>
<i></i>
<i></i>
<i></i>
<i></i>
<i></i>
<i></i>
<i></i>
<i></i>
<i></i>
<i></i>
<i></i>
<i></i>
<i></i>
<i></i>
<i></i>
<i></i>
<i></i>
<i></i>
<i></i>
<i></i>
<i></i>
<i></i>
<i></i>
<i></i>
<i></i>
<i></i>
<i></i>
<i></i>
<i></i>
<i></i>
<i></i>
<i></i>
<i></i>
<i></i>
<i></i>
<i></i>
<i></i>
<i></i>
<i></i>
<i></i>
<i></i>
<i></i>
<i></i>
<i></i>
<i></i>
<i></i>
<i></i>
<i></i>
<i></i>
<i></i>
<i></i>
<i></i>
<i></i>
<i></i>
<i></i>
<i></i>
<i></i>
<i></i>
<i></i>
<i></i>
</div>
<div id="ed"><div id="gut"></div><div id="lines">
<div><b>92</b>    emission <span class="n">1</span><span class="o">/</span><span class="n">20</span> <span class="c">//OK</span></div>
<div><b>93</b>    absorption <span class="n">1</span><span class="o">/</span><span class="n">1000</span> <span class="c">//OK</span></div>
<div><b>94</b>    scattering <span class="p">{</span><span class="n">1</span><span class="p">,</span> <span class="o">-</span><span class="n">0.3</span><span class="p">}</span> <span class="c">//OK</span></div>
<div><b>95</b>    density<span class="p">{</span></div>
<div><b>96</b>      density_file df3 <span class="s">"data/volume/dicom_test.df3"</span></div>
<div><b>97</b>      interpolate <span class="n">0</span></div>
<div><b>98</b>      color_map <span class="p">{</span> cm <span class="p">}</span></div>
<div><b>99</b>      <span class="p">}</span></div>
<div><b>100</b>  <span class="p">}</span></div>
<div><b>101</b><span class="p">}</span></div>
<div><b>102</b></div>
<div><b>103</b></div>
<div><b>104</b>background <span class="p">{</span> color <span class="o">&lt;</span><span class="n">0</span><span class="p">,</span> <span class="n">0</span><span class="p">,</span> <span class="n">0</span><span class="o">&gt;</span> <span class="p">}</span></div>
<div><b>105</b><span class="c">/*</span></div>
<div><b>106</b><span class="c">box {</span></div>
<div><b>107</b><span class="c">  &lt;0,0,0&gt;, &lt;1,1,1&gt;</span></div>
<div><b>108</b><span class="c">  pigment { rgbf 1 }</span></div>
<div><b>109</b><span class="c">  interior { theinterior }</span></div>
<div><b>110</b><span class="c">  hollow</span></div>
<div><b>111</b><span class="c">  translate &lt;-0.5,-0.5,-0.5&gt;</span></div>
<div><b>112</b><span class="c">  scale &lt;200,200,200&gt;</span></div>
<div><b>113</b><span class="c">}</span></div>
<div><b>114</b><span class="c">*/</span></div>
<div><b>115</b></div>
<div><b>116</b></div>
<div><b>117</b>difference<span class="p">{</span></div>
<div><b>118</b>    box<span class="p">{</span>    <span class="n">0</span><span class="p">,</span> <span class="n">1</span></div>
<div><b>119</b>        translate <span class="o">-</span><span class="n">0.5</span></div>
<div><b>120</b>        scale <span class="n">200</span></div>
<div><b>121</b>    <span class="p">}</span><span class="c">// NO pigment</span></div>
<div><b>122</b>    box<span class="p">{</span>    <span class="n">0</span><span class="p">,</span> <span class="n">1</span></div>
<div><b>123</b>        translate <span class="o">-</span><span class="n">0.5</span></div>
<div><b>124</b>        scale <span class="o">&lt;</span><span class="n">100</span><span class="p">,</span> <span class="n">100</span><span class="p">,</span> <span class="n">201</span><span class="o">&gt;</span><span class="c">//400 is uselessly large</span></div>
<div><b>125</b>    <span class="p">}</span><span class="c">//still no pigment</span></div>
<div><b>126</b>    hollow <span class="c">//apply to the difference as a whole</span></div>
<div><b>127</b>    pigment<span class="p">{</span>rgbf <span class="n">1</span><span class="p">}</span></div>
<div><b>128</b>    interior<span class="p">{</span> theinterior<span class="p">}</span></div>
<div><b>129</b><span class="p">}</span></div>
<div><b>130</b></div>
<div><b>131</b></div>
</div>
<div id="cur"></div>
<div id="sb"><div id="th"></div>
<svg width="16" height="870" style="position:absolute;left:-1px;top:0"><path d="M4 11 L8 7 L12 11 Z" fill="#505050"/><path d="M4 859 L8 863 L12 859 Z" fill="#a3a3a3"/></svg>
</div>
</div>
<div id="btns"><span>BALLS</span><span>ISO 1</span><span>ISO 2</span><span>ISO 3</span><span>ISO 4</span><span>ISO 5</span><span>ISO 6</span><span>SHELL 1</span><span>CSG</span><span>MOL</span><span>RAD</span><span>MAT</span><span>VOL 1</span><span>VOL 2</span><span>VOL 3</span><span>VOL ISO</span><span>DICOM</span><span>DICOM ISO</span><br><span>GEM 1</span><span>GEM 2</span><span>GEM 3</span><span>ART 1</span><span>ART 2</span><span>ART 3</span><span>ART 4</span><span>JR 1</span><span>BEADS 1</span><span>BEADS 2</span></div>
</body></html>
